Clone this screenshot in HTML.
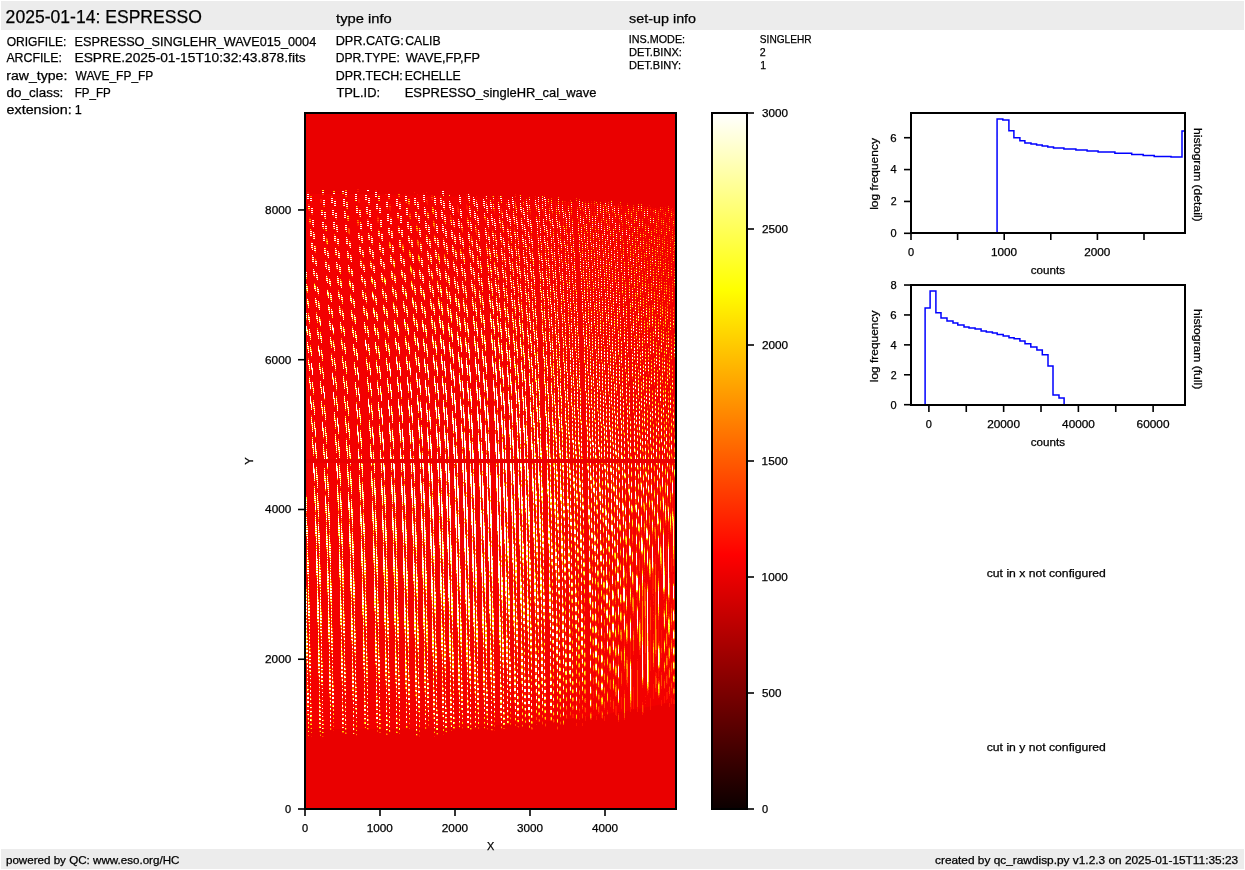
<!DOCTYPE html>
<html><head><meta charset="utf-8"><title>ESPRESSO raw display</title>
<style>html,body{margin:0;padding:0;background:#fff;overflow:hidden;}svg,canvas{display:block;position:absolute;left:0;top:0;will-change:transform;}
#wrap{position:relative;width:1245px;height:870px;}
text{font-family:"Liberation Sans",sans-serif;stroke:#000;stroke-width:0.25px;}</style></head>
<body><div id="wrap"><svg width="1245" height="870" viewBox="0 0 1245 870">
<rect x="0" y="0" width="1245" height="870" fill="#fff"/>
<rect x="1" y="1" width="1243" height="29" fill="#ececec"/>
<rect x="1" y="849" width="1243" height="20" fill="#ececec"/>
<rect x="305" y="113" width="371" height="696" fill="#ea0000"/>
<polygon points="305.0,194.0 311.0,194.0 317.0,194.0 323.0,194.0 329.0,194.1 335.0,194.1 341.0,194.2 347.0,194.2 353.0,194.3 359.0,194.3 365.0,194.4 371.0,194.5 377.0,194.6 383.0,194.7 389.0,194.8 395.0,194.9 401.0,195.1 407.0,195.2 413.0,195.4 419.0,195.5 425.0,195.7 431.0,195.8 437.0,196.0 443.0,196.2 449.0,196.4 455.0,196.6 461.0,196.8 467.0,197.1 473.0,197.3 479.0,197.5 485.0,197.8 491.0,198.0 497.0,198.3 503.0,198.6 509.0,198.8 515.0,199.1 521.0,199.4 527.0,199.7 533.0,200.0 539.0,200.4 545.0,200.7 551.0,201.0 557.0,201.4 563.0,201.7 569.0,202.1 575.0,202.5 581.0,202.9 587.0,203.2 593.0,203.6 599.0,204.0 605.0,204.5 611.0,204.9 617.0,205.3 623.0,205.8 629.0,206.2 635.0,206.7 641.0,207.1 647.0,207.6 653.0,208.1 659.0,208.6 665.0,209.1 671.0,209.6 676.0,210.0 676.0,701.0 671.0,702.1 665.0,703.4 659.0,704.7 653.0,705.9 647.0,707.1 641.0,708.2 635.0,709.3 629.0,710.4 623.0,711.4 617.0,712.3 611.0,713.3 605.0,714.2 599.0,715.1 593.0,715.9 587.0,716.7 581.0,717.5 575.0,718.2 569.0,718.9 563.0,719.6 557.0,720.2 551.0,720.8 545.0,721.4 539.0,722.0 533.0,722.5 527.0,723.0 521.0,723.5 515.0,723.9 509.0,724.3 503.0,724.7 497.0,725.1 491.0,725.5 485.0,725.8 479.0,726.1 473.0,726.4 467.0,726.7 461.0,726.9 455.0,727.1 449.0,727.4 443.0,727.6 437.0,727.7 431.0,727.9 425.0,728.1 419.0,728.2 413.0,728.3 407.0,728.4 401.0,728.5 395.0,728.6 389.0,728.7 383.0,728.7 377.0,728.8 371.0,728.8 365.0,728.9 359.0,728.9 353.0,728.9 347.0,729.0 341.0,729.0 335.0,729.0 329.0,729.0 323.0,729.0 317.0,729.0 311.0,729.0 305.0,729.0" fill="#f30000"/><rect x="305" y="459" width="371" height="4" fill="#ea0000"/>
<path d="M305.5 309v2m0 5v1m0 153v1m0 11v1m0 5v1m0 14v1m0 46v1m0 61v3M306.5 325v1m0 169v2m0 14v1m0 1v2m0 1v1m0 19v3m0 47v1m0 1v1m0 70v2m0 4v1M307.5 192v1m0 105v1m0 6v1m0 22v1m0 6v1m0 188v2m0 20v1m0 28v1m0 3v1m0 54v2m0 2v2m0 67v3m0 1v3m0 1v1m0 3v1M308.5 192v1m0 14v1m0 1v2m0 154v2m0 191v2m0 59v2m0 1v1m0 2v1m0 64v3m0 2v2m0 2v2m0 2v2m0 2v3m0 1v3m0 2v2m0 2v2m0 3v1m0 4v1M309.5 204v1m0 2v1m0 1v1m0 7v2m0 1v1m0 1v2m0 92v1m0 46v1m0 20v1m0 211v3m0 1v2m0 2v1m0 24v1m0 38v2m0 2v1m0 2v1M310.5 218v1m0 1v1m0 1v1m0 7v1m0 3v1m0 117v1m0 37v1m0 4v1m0 248v2m0 3v2m0 2v2m0 2v2m0 1v2m0 2v2m0 2v2m0 2v2m0 2v2m0 2v2m0 2v2m0 2v2m0 2v2m0 3v1m0 2v2m0 2v3m0 2v2m0 2v2m0 2v2m0 2v1M311.5 199v1m0 2v1m0 6v1m0 1v1m0 2v1m0 14v2m0 10v2m0 113v2m0 12v1m0 327v1m0 6v2m0 1v3m0 2v2m0 2v2m0 2v2m0 4v1m0 8v1M312.5 209v1m0 1v1m0 1v1m0 7v1m0 1v1m0 1v2m0 153v2m0 39v2m0 25v2M313.5 221v1m0 1v1m0 1v1m0 7v1m0 3v1m0 24v1m0 180v2m0 29v1M314.5 232v2m0 11v1m0 30v2m0 11v1m0 177v1m0 13v1M315.5 258v1m0 5v1m0 26v1m0 11v1m0 122v2m0 9v1m0 57v1m0 16v1m0 1v1m0 21v2M316.5 260v1m0 11v1m0 5v1m0 40v1m0 145v2m0 13v2m0 41v1m0 52v1M317.5 273v2m0 5v1m0 5v1m0 5v2m0 180v1m0 13v2m0 1v2m0 18v1m0 45v1m0 64v2m0 3v1M318.5 294v1m0 49v1m0 7v1m0 146v1m0 19v1m0 1v1m0 22v1m0 49v1m0 1v1m0 1v1m0 74v2m0 1v1m0 2v1M319.5 316v1m0 6v1m0 32v1m0 5v1m0 166v1m0 2v1m0 52v1m0 1v1m0 1v1m0 53v2m0 1v1m0 1v2m0 66v2m0 2v2m0 2v2m0 4v1M320.5 199v4m0 123v1m0 47v2m0 12v1m0 175v1m0 1v1m0 1v1m0 64v1m0 4v1m0 63v1m0 1v2m0 2v2m0 2v2m0 2v2m0 2v2m0 2v2M321.5 199v4m0 8v1m0 1v1m0 134v2m0 44v1m0 5v1m0 205v2m0 3v1m0 70v2m0 1v1M322.5 211v1m0 1v1m0 9v1m0 1v1m0 2v1m0 123v2m0 20v1m0 56v1m0 223v1m0 3v1m0 1v1m0 1v2m0 2v2m0 2v1m0 2v2m0 2v2m0 2v2m0 2v2m0 1v3m0 1v3m0 1v3m0 1v3m0 1v3m0 1v3m0 1v3m0 1v3m0 1v3m0 1v3m0 3v1M323.5 201v1m0 1v1m0 19v1m0 1v1m0 1v1m0 7v1m0 3v1m0 139v1m0 5v1m0 7v1m0 33v1m0 15v1m0 11v2m0 255v1m0 6v1m0 3v1m0 3v1m0 8v1M324.5 201v1m0 1v1m0 9v1m0 1v1m0 1v1m0 16v2m0 11v1m0 5v2m0 136v1m0 59v1m0 12v1M325.5 213v1m0 1v1m0 1v1m0 7v1m0 1v1m0 1v1m0 19v1m0 11v1m0 158v2m0 3v2m0 9v2m0 36v1m0 16v1m0 2v1m0 18v2M326.5 225v1m0 1v1m0 1v1m0 7v1m0 36v2m0 226v2m0 18v1m0 1v1m0 24v3M327.5 238v1m0 5v1m0 11v2m0 19v1m0 11v1m0 165v2m0 12v2m0 2v1m0 16v1m0 44v1m0 56v1M328.5 252v1m0 10v2m0 5v1m0 20v1m0 6v1m0 5v1m0 6v1m0 185v1m0 2v2m0 18v1m0 47v3m0 1v1m0 66v1m0 4v1M329.5 266v1m0 11v1m0 5v2m0 33v2m0 5v2m0 181v2m0 18v1m0 1v1m0 26v2m0 52v1m0 1v1m0 1v2m0 72v2m0 2v1m0 2v1m0 2v1M330.5 279v2m0 5v2m0 42v1m0 5v1m0 206v1m0 58v1m0 1v1m0 1v1m0 55v1m0 3v1m0 1v1m0 1v2m0 2v2m0 14v2m0 2v2m0 2v2m0 2v2m0 2v2m0 2v2m0 2v2m0 2v2m0 2v2m0 2v1M331.5 199v1m0 1v1m0 105v2m0 5v1m0 24v2m0 20v1m0 219v2m0 67v2m0 3v2m0 67v2m0 2v2M332.5 196v1m0 2v1m0 1v1m0 6v1m0 2v1m0 1v1m0 109v1m0 33v2m0 12v1m0 253v2m0 3v1m0 2v2m0 22v2m0 2v1m0 2v2m0 29v2m0 2v2m0 2v2m0 4v2M333.5 211v1m0 1v1m0 1v1m0 7v1m0 1v1m0 1v1m0 119v1m0 37v1m0 5v1m0 7v2m0 277v1m0 5v1m0 2v2m0 2v2m0 2v2m0 2v2m0 2v2m0 2v2m0 12v1m0 3v1m0 4v1M334.5 199v1m0 2v1m0 1v1m0 18v1m0 1v1m0 1v1m0 7v1m0 115v2m0 12v1m0 31v1m0 23v2M335.5 199v1m0 2v1m0 1v1m0 9v1m0 1v1m0 24v1m0 11v1m0 191v2M336.5 214v1m0 1v1m0 1v1m0 7v1m0 3v1m0 17v2m0 5v2m0 184v1m0 30v1M337.5 226v1m0 1v1m0 1v1m0 6v2m0 23v2m0 5v2m0 140v1m0 4v1m0 10v1m0 36v2m0 14v1m0 2v1M338.5 244v1m0 178v1m0 10v1m0 56v2m0 18v1m0 1v1m0 22v2M339.5 258v1m0 34v1m0 5v2m0 145v1m0 11v1m0 5v1m0 13v2m0 41v1m0 2v1m0 53v2M340.5 315v2m0 155v1m0 13v1m0 22v2m0 47v1m0 66v2M341.5 294v1m0 5v2m0 22v2m0 19v2m0 152v1m0 18v1m0 1v1m0 23v1m0 52v2m0 3v1m0 74v2m0 5v1M342.5 316v1m0 46v2m0 165v1m0 1v1m0 54v2m0 3v1m0 55v4m0 1v2m0 31v2m0 2v2m0 2v2m0 16v1m0 3v2m0 2v2m0 2v3m0 1v1M343.5 200v1m0 1v1m0 122v1m0 6v2m0 26v2m0 12v2m0 190v2m0 2v1m0 63v1m0 1v2m0 1v1m0 65v2m0 6v1m0 1v3m0 2v2m0 2v3M344.5 200v1m0 1v1m0 1v1m0 7v1m0 1v1m0 1v1m0 119v1m0 57v2m0 7v2m0 207v2m0 2v1m0 31v1m0 34v2m0 2v2M345.5 212v1m0 1v1m0 1v1m0 6v1m0 2v1m0 127v1m0 13v1m0 32v1m0 259v1m0 2v1m0 1v2m0 2v2m0 2v2m0 2v2m0 2v3m0 2v2m0 2v2m0 2v2m0 2v3m0 2v2m0 2v2m0 2v3m0 2v2m0 2v3m0 1v2M346.5 203v1m0 1v1m0 1v1m0 18v1m0 3v1m0 7v1m0 140v1m0 53v2m0 4v1m0 280v1m0 8v1m0 2v1M347.5 203v1m0 1v1m0 1v1m0 6v2m0 1v1m0 1v1m0 17v1m0 6v2m0 153v2m0 62v1M348.5 215v1m0 1v1m0 1v1m0 13v1m0 17v2m0 5v2m0 146v1m0 63v2m0 15v2m0 1v2m0 18v2M349.5 228v1m0 5v1m0 11v2m0 179v2m0 15v1m0 76v1m0 25v1M350.5 241v2m0 11v1m0 5v2m0 26v1m0 12v1m0 149v2m0 16v2m0 16v1m0 44v1m0 58v2M351.5 256v1m0 17v1m0 21v1m0 6v2m0 172v2m0 15v1m0 2v2m0 18v1m0 1v2m0 46v1m0 2v1m0 70v2M352.5 269v2m0 5v2m0 34v2m0 19v2m0 173v1m0 19v1m0 2v1m0 23v1m0 3v1m0 52v1m0 3v2m0 73v3m0 2v1M353.5 298v1m0 38v1m0 13v1m0 187v1m0 61v2m0 1v1m0 1v1m0 58v2m0 4v2m0 2v2m0 20v1m0 2v2m0 2v3m0 1v3m0 2v2m0 2v2m0 2v3m0 2v2m0 2v1m0 1v1M354.5 313v2m0 41v1m0 13v1m0 207v1m0 1v1m0 69v1m0 2v2m0 69v1m0 3v1M355.5 324v1m0 42v1m0 7v1m0 14v1m0 235v4m0 1v2m0 28v1m0 2v2m0 2v2m0 28v1m0 2v3m0 1v3m0 4v2M356.5 207v1m0 1v1m0 1v1m0 122v1m0 13v1m0 63v1m0 266v1m0 2v1m0 2v2m0 1v3m0 2v2m0 2v2m0 2v3m0 1v3m0 2v2m0 2v3m0 1v1m0 10v1m0 5v1M357.5 189v1m0 1v1m0 17v1m0 1v1m0 9v1m0 1v3m0 182v1m0 27v1M358.5 189v1m0 1v1m0 7v4m0 18v1m0 1v1m0 1v1m0 8v1m0 3v2m0 146v1m0 8v1m0 51v2M359.5 199v4m0 8v1m0 1v1m0 20v1m0 3v1m0 7v1m0 145v1m0 8v2m0 14v2m0 51v2m0 1v2m0 17v2M360.5 211v1m0 1v1m0 1v1m0 7v1m0 1v1m0 1v1m0 32v1m0 5v1m0 174v1m0 60v1m0 1v1m0 21v2M361.5 222v1m0 2v1m0 1v1m0 1v2m0 10v1m0 20v1m0 18v1m0 154v2m0 11v2m0 19v1m0 41v2m0 52v1m0 1v1m0 1v1M362.5 237v1m0 17v2m0 19v1m0 6v1m0 193v2m0 1v2m0 17v1m0 47v2m0 66v3M363.5 251v1m0 5v1m0 5v1m0 41v1m0 203v1m0 1v1m0 22v1m0 2v1m0 51v2m0 74v2m0 4v2M364.5 278v1m0 5v1m0 30v1m0 205v2m0 23v1m0 31v3m0 56v2m0 1v1m0 2v1m0 37v2m0 28v2m0 2v3m0 2v2m0 5v1M365.5 201v1m0 77v2m0 5v1m0 37v2m0 12v1m0 218v1m0 1v1m0 66v2m0 68v1m0 3v1m0 1v3m0 2v2m0 2v2m0 2v3m0 2v2m0 2v1m0 1v1M366.5 198v1m0 2v1m0 6v1m0 1v1m0 1v1m0 82v2m0 19v1m0 34v1m0 251v1m0 74v3m0 4v1M367.5 208v1m0 1v1m0 1v1m0 7v1m0 1v1m0 1v1m0 87v1m0 20v1m0 28v1m0 7v2m0 284v1m0 2v2m0 2v1m0 14v1m0 4v2m0 2v2m0 2v2m0 2v3m0 1v3m0 2v2m0 2v2m0 2v3m0 2v2m0 2v2m0 6v1M368.5 201v1m0 17v1m0 2v1m0 1v1m0 1v2m0 6v1m0 3v1m0 98v1m0 13v1m0 45v1m0 9v1m0 303v1m0 4v1m0 6v1m0 5v1M369.5 199v1m0 1v1m0 9v1m0 1v1m0 1v1m0 17v2m0 17v1m0 103v1m0 74v1M370.5 211v1m0 1v1m0 1v1m0 6v1m0 2v1m0 4v1m0 16v2m0 5v1m0 112v1m0 8v1m0 13v2m0 34v2m0 29v2M371.5 225v1m0 1v1m0 1v1m0 7v1m0 37v1m0 6v1m0 105v1m0 61v2m0 14v1m0 2v2m0 18v1M372.5 243v1m0 33v1m0 6v1m0 13v1m0 110v1m0 10v1m0 4v1m0 70v1m0 3v1m0 22v1M373.5 265v1m0 5v1m0 21v1m0 20v1m0 130v2m0 62v1m0 23v1m0 29v2M374.5 317v1m0 13v1m0 141v2m0 1v2m0 17v1m0 47v1m0 1v1m0 65v3M375.5 190v1m0 103v2m0 31v1m0 7v1m0 5v1m0 7v1m0 137v1m0 17v1m0 3v1m0 21v1m0 52v3m0 74v2m0 2v1m0 1v1M376.5 190v1m0 14v1m0 1v1m0 2v1m0 100v1m0 42v1m0 162v2m0 24v1m0 28v1m0 3v1m0 57v1m0 3v2m0 37v2m0 31v3m0 2v2m0 2v1m0 1v1m0 4v1M377.5 205v1m0 1v1m0 2v1m0 5v2m0 1v1m0 1v2m0 98v2m0 12v2m0 28v1m0 8v1m0 179v1m0 1v1m0 65v2m0 1v1m0 66v1m0 4v3m0 2v2m0 2v2m0 2v3m0 2v2m0 2v2m0 2v1m0 1v1M378.5 194v1m0 22v1m0 1v1m0 1v2m0 6v2m0 108v2m0 54v2m0 4v1m0 9v2m0 182v1m0 1v1m0 1v2m0 1v1m0 71v2m0 5v1M379.5 194v1m0 14v1m0 1v1m0 24v1m0 7v1m0 120v1m0 7v1m0 275v2m0 1v1m0 1v2m0 2v2m0 14v2m0 2v2m0 2v2m0 2v2m0 2v3m0 1v3m0 2v2m0 2v2m0 2v3m0 2v2m0 2v2m0 2v3m0 2v1M380.5 206v1m0 2v1m0 1v1m0 2v1m0 6v1m0 1v1m0 1v1m0 24v1m0 7v1m0 5v1m0 114v1m0 68v2m0 256v1m0 4v1m0 6v1m0 5v1M381.5 221v1m0 1v1m0 1v1m0 6v2m0 5v2m0 31v1m0 128v1m0 5v1m0 10v1m0 37v2m0 15v2m0 2v1m0 17v1M382.5 235v1m0 10v2m0 5v2m0 19v1m0 13v1m0 5v2m0 129v1m0 4v1m0 75v1m0 1v1m0 25v1M383.5 249v1m0 39v2m0 12v2m0 132v1m0 17v1m0 16v1m0 44v1m0 1v1m0 55v3M384.5 262v2m0 5v2m0 5v1m0 6v1m0 30v1m0 5v1m0 142v2m0 18v2m0 19v1m0 49v3m0 68v2M385.5 194v1m0 83v1m0 12v2m0 200v2m0 20v1m0 1v1m0 23v1m0 1v2m0 56v1m0 76v1m0 2v2M386.5 194v1m0 5v1m0 2v1m0 1v1m0 2v1m0 99v1m0 33v1m0 14v1m0 7v2m0 160v1m0 61v3m0 58v2m0 1v1m0 2v2m0 32v2m0 2v2m0 3v2m0 2v1m0 9v2m0 2v2m0 2v3m0 2v3M387.5 200v1m0 2v1m0 1v1m0 9v1m0 1v1m0 1v1m0 98v1m0 52v1m0 195v2m0 69v2m0 70v2m0 9v1m0 1v1m0 4v1m0 1v1m0 2v1M388.5 215v1m0 1v1m0 1v1m0 6v1m0 6v2m0 164v1m0 9v1m0 201v1m0 4v1m0 74v2m0 2v2m0 2v1M389.5 204v2m0 1v3m0 19v1m0 11v1m0 105v1m0 8v1m0 5v1m0 8v1m0 45v1m0 16v2m0 231v1m0 2v2m0 1v3m0 2v2m0 2v2m0 2v3m0 2v2m0 2v3m0 2v2m0 2v3m0 2v3m0 1v2m0 3v3m0 2v2m0 2v1M390.5 204v1m0 2v4m0 7v1m0 1v1m0 1v1m0 19v1m0 5v2m0 117v1m0 9v1m0 5v1m0 58v2m0 19v1m0 266v2M391.5 217v2m0 1v1m0 1v1m0 1v2m0 10v1m0 33v1m0 118v1m0 14v2m0 9v2m0 77v2M392.5 232v1m0 5v2m0 31v2m0 13v1m0 6v1m0 129v1m0 17v2m0 40v2m0 19v1m0 1v1m0 24v1M393.5 245v2m0 5v1m0 13v1m0 20v2m0 20v1m0 139v2m0 20v1m0 44v2m0 57v3M394.5 268v1m0 12v1m0 22v1m0 13v2m0 160v3m0 21v1m0 51v1m0 68v2m0 1v1M395.5 283v2m0 12v1m0 38v2m0 153v2m0 20v1m0 1v1m0 25v1m0 1v1m0 57v1m0 78v2m0 4v2M396.5 200v1m0 1v1m0 1v1m0 136v1m0 8v1m0 14v1m0 159v3m0 58v1m0 1v4m0 58v1m0 4v2m0 2v1m0 33v2m0 2v2m0 3v2m0 2v2m0 3v2m0 2v2m0 3v2m0 2v3M397.5 202v1m0 1v1m0 6v1m0 2v1m0 1v1m0 92v1m0 7v1m0 52v1m0 5v1m0 190v1m0 70v1m0 2v1m0 1v1m0 69v2m0 4v1m0 11v1M398.5 214v1m0 1v1m0 1v2m0 7v1m0 3v1m0 109v2m0 7v1m0 41v1m0 5v1m0 10v1m0 201v1m0 3v2m0 35v2m0 36v2m0 2v2m0 2v1m0 3v1M399.5 205v1m0 1v1m0 18v2m0 3v1m0 13v1m0 100v1m0 23v1m0 50v1m0 245v1m0 2v1m0 1v3m0 2v2m0 2v2m0 2v2m0 3v2m0 2v2m0 2v3m0 2v2m0 2v3m0 3v1m0 2v3m0 2v3m0 1v1M400.5 205v1m0 1v1m0 2v1m0 6v1m0 1v1m0 1v1m0 19v1m0 5v2m0 127v1m0 14v2m0 35v2m0 16v1M401.5 217v1m0 1v1m0 1v1m0 6v1m0 2v1m0 3v1m0 32v2m0 118v1m0 26v2m0 55v2m0 21v1M402.5 231v1m0 38v2m0 6v1m0 132v1m0 11v1m0 61v1m0 20v1m0 26v1M403.5 244v1m0 12v2m0 5v1m0 29v2m0 12v1m0 126v2m0 13v2m0 1v2m0 16v2m0 44v2m0 59v2M404.5 260v1m0 5v2m0 35v2m0 13v1m0 162v3m0 21v2m0 48v3m0 71v2M405.5 194v1m0 7v1m0 79v2m0 12v1m0 219v1m0 27v1m0 56v3m0 81v2m0 5v2M406.5 199v1m0 9v1m0 1v1m0 1v1m0 85v1m0 49v1m0 5v1m0 8v1m0 162v2m0 61v1m0 4v1m0 60v2m0 1v1m0 2v2m0 31v1m0 3v3m0 2v2m0 3v2m0 2v3m0 2v3m0 2v2M407.5 209v1m0 1v1m0 1v1m0 2v1m0 6v1m0 1v1m0 1v1m0 81v1m0 12v2m0 46v1m0 5v1m0 9v1m0 183v1m0 71v2m0 77v2M408.5 200v1m0 1v1m0 1v1m0 18v1m0 1v1m0 1v1m0 7v1m0 5v2m0 83v1m0 8v1m0 46v1m0 235v2m0 76v2m0 2v3m0 5v2M409.5 202v1m0 1v2m0 6v2m0 1v1m0 1v2m0 18v1m0 5v1m0 101v2m0 8v1m0 49v1m0 15v2m0 12v2m0 234v1m0 5v2m0 2v3m0 2v2m0 3v2m0 3v2m0 2v3m0 2v3m0 2v3m0 4v1m0 4v1m0 1v1M410.5 213v1m0 1v1m0 1v1m0 9v1m0 3v1m0 26v1m0 107v1m0 25v1m0 51v1m0 2v2m0 16v1M411.5 227v1m0 3v1m0 6v2m0 5v1m0 28v1m0 5v1m0 107v1m0 85v3m0 21v2M412.5 241v1m0 5v2m0 41v1m0 120v1m0 16v2m0 57v1m0 22v1m0 25v1M413.5 268v2m0 5v1m0 32v1m0 13v1m0 128v2m0 1v2m0 18v1m0 44v1m0 62v1m0 1v1m0 1v1M414.5 192v1m0 8v1m0 68v2m0 13v1m0 40v1m0 136v2m0 18v3m0 22v3m0 50v2m0 71v2M415.5 201v1m0 1v1m0 6v1m0 2v1m0 1v1m0 85v1m0 43v1m0 5v1m0 143v1m0 52v1m0 56v1m0 2v1m0 1v2m0 80v2m0 2v1m0 2v2M416.5 213v1m0 1v1m0 1v1m0 6v2m0 1v1m0 1v1m0 88v1m0 47v1m0 163v2m0 64v4m0 62v2m0 2v1m0 1v3m0 31v2m0 2v3m0 2v3m0 2v3m0 2v3m0 2v3M417.5 194v1m0 8v1m0 1v1m0 1v1m0 19v1m0 3v2m0 6v1m0 5v1m0 85v1m0 45v2m0 9v1m0 4v2m0 10v1m0 165v3m0 74v2m0 5v1m0 73v2m0 4v1M418.5 203v1m0 1v1m0 1v1m0 7v1m0 1v1m0 1v1m0 2v1m0 17v1m0 6v1m0 93v1m0 9v1m0 269v2m0 1v1m0 2v1m0 37v3m0 35v2m0 3v3m0 1v1m0 3v1M419.5 217v1m0 1v1m0 1v1m0 7v1m0 6v1m0 31v2m0 5v1m0 86v1m0 14v1m0 10v1m0 51v1m0 2v1m0 239v1m0 1v1m0 2v3m0 2v3m0 2v3m0 2v2m0 3v2m0 3v2m0 2v3m0 2v3m0 10v2M420.5 231v1m0 11v1m0 5v1m0 21v1m0 13v1m0 98v1m0 27v1m0 38v1m0 17v1m0 24v2M421.5 245v1m0 5v1m0 43v2m0 12v1m0 97v1m0 31v1m0 42v1m0 22v1m0 28v1M422.5 272v2m0 30v2m0 7v1m0 4v2m0 149v1m0 44v1m0 63v3M423.5 193v1m0 89v1m0 5v1m0 7v1m0 25v1m0 13v1m0 8v2m0 131v3m0 22v2m0 48v1m0 1v1m0 72v3M424.5 210v1m0 1v1m0 87v1m0 5v1m0 7v2m0 41v1m0 9v1m0 122v1m0 110v4m0 79v2m0 2v1m0 1v1M425.5 210v1m0 1v1m0 1v1m0 7v1m0 1v1m0 1v1m0 82v2m0 7v1m0 5v1m0 7v2m0 29v1m0 9v1m0 4v2m0 145v2m0 63v1m0 4v1m0 60v1m0 5v2m0 33v2m0 3v2m0 2v3m0 2v2m0 2v3m0 2v2M426.5 192v1m0 5v1m0 3v1m0 21v1m0 1v1m0 1v1m0 7v1m0 106v1m0 41v1m0 10v2m0 169v1m0 1v1m0 73v2m0 1v1m0 2v1m0 73v1m0 3v2M427.5 200v5m0 6v2m0 1v1m0 1v1m0 21v1m0 10v2m0 5v1m0 100v2m0 50v1m0 12v2m0 18v2m0 173v1m0 1v2m0 38v2m0 37v3m0 2v1m0 1v1m0 1v1m0 2v2M428.5 214v1m0 1v1m0 1v1m0 7v1m0 1v1m0 1v1m0 20v2m0 19v2m0 95v1m0 81v2m0 221v2m0 2v1m0 1v3m0 2v2m0 2v3m0 2v2m0 2v3m0 2v2m0 3v2m0 2v3M429.5 228v1m0 1v1m0 1v1m0 7v1m0 26v2m0 19v1m0 103v1m0 10v2m0 3v1m0 13v1m0 60v1M430.5 242v1m0 6v1m0 3v2m0 42v2m0 117v1m0 17v1m0 60v1m0 53v2M431.5 195v1m0 3v1m0 69v2m0 6v1m0 24v1m0 7v1m0 130v2m0 87v3m0 67v1m0 1v2M432.5 195v1m0 12v1m0 1v1m0 1v2m0 66v1m0 12v2m0 198v1m0 25v1m0 53v1m0 1v1m0 77v1m0 2v1m0 2v1M433.5 207v2m0 1v1m0 1v1m0 7v1m0 1v1m0 3v1m0 70v1m0 4v2m0 44v2m0 4v1m0 149v1m0 58v3m0 61v2m0 81v3m0 2v2m0 5v2M434.5 201v1m0 2v1m0 16v2m0 5v1m0 5v2m0 71v1m0 7v1m0 4v1m0 38v1m0 26v1m0 155v1m0 1v1m0 68v2m0 1v1m0 68v1m0 3v1m0 2v2m0 2v3m0 7v2m0 2v2m0 3v2m0 2v3m0 2v3m0 9v1M435.5 201v1m0 1v1m0 7v1m0 1v1m0 1v1m0 20v2m0 5v1m0 4v2m0 5v1m0 78v1m0 4v2m0 8v1m0 32v1m0 15v2m0 185v1m0 1v1m0 2v1m0 76v1m0 3v2M436.5 213v1m0 1v1m0 1v1m0 7v1m0 3v1m0 41v1m0 98v1m0 48v2m0 18v2m0 199v1m0 4v2m0 37v2m0 2v3m0 2v2m0 12v2m0 3v2m0 2v3m0 2v2m0 2v2m0 7v1M437.5 227v1m0 3v1m0 7v1m0 5v2m0 19v2m0 12v1m0 95v2m0 4v1m0 10v1m0 54v4m0 18v2m0 233v2m0 2v1m0 1v3m0 2v3m0 2v2m0 2v2M438.5 241v1m0 5v2m0 4v1m0 6v2m0 21v2m0 104v1m0 11v1m0 3v2m0 12v1m0 60v1m0 26v1M439.5 276v2m0 31v2m0 3v2m0 8v1m0 88v1m0 17v1m0 15v2m0 43v1m0 55v1M440.5 196v1m0 4v1m0 69v2m0 20v1m0 34v2m0 3v2m0 121v1m0 23v2m0 46v1m0 68v1m0 1v2M441.5 201v1m0 1v1m0 7v1m0 1v1m0 1v1m0 148v1m0 102v2m0 48v2m0 51v3m0 77v2m0 5v1M442.5 213v1m0 1v1m0 1v1m0 7v1m0 1v1m0 1v1m0 85v1m0 4v1m0 38v2m0 140v1m0 57v2m0 62v1m0 1v2m0 41v1m0 36v1m0 2v2m0 3v1m0 6v1M443.5 202v1m0 1v1m0 1v1m0 20v1m0 1v1m0 1v1m0 2v1m0 4v1m0 5v2m0 135v1m0 16v1m0 139v2m0 69v4m0 69v1m0 3v1m0 2v2m0 2v3m0 7v2m0 2v2m0 3v2m0 2v3m0 2v2m0 2v1m0 7v1M444.5 204v1m0 1v1m0 1v1m0 4v1m0 2v1m0 1v1m0 1v1m0 19v2m0 102v2m0 14v1m0 59v2m0 2v1m0 16v1m0 145v2m0 76v1m0 2v2m0 2v1M445.5 218v1m0 1v1m0 1v1m0 7v1m0 3v1m0 29v2m0 4v1m0 161v1m0 40v1m0 169v2m0 34v1m0 2v2m0 2v3m0 2v2m0 3v1m0 8v2m0 2v3m0 2v2m0 3v2m0 2v2M446.5 232v1m0 3v1m0 7v1m0 5v2m0 28v1m0 5v1m0 119v1m0 13v2m0 87v1m0 1v1m0 191v2m0 6v1m0 2v3m0 2v2m0 2v1m0 1v1m0 4v1m0 1v1M447.5 246v1m0 5v1m0 37v1m0 138v1m0 1v2m0 16v2m0 101v1M448.5 262v1m0 5v1m0 5v1m0 41v1m0 4v2m0 8v1m0 152v1m0 117v3M449.5 204v1m0 1v1m0 78v1m0 4v2m0 7v1m0 221v1m0 1v1m0 49v1m0 83v3m0 1v1M450.5 204v1m0 1v1m0 1v1m0 7v1m0 1v2m0 1v1m0 73v1m0 207v2m0 59v4m0 63v2m0 77v1m0 2v3m0 2v2m0 2v1m0 2v2M451.5 217v3m0 1v1m0 1v1m0 7v1m0 3v1m0 101v1m0 30v1m0 11v1m0 4v1m0 156v3m0 71v2m0 1v1m0 68v1m0 6v2m0 2v2m0 3v2m0 2v3m0 2v3m0 2v2m0 3v2M452.5 207v1m0 1v1m0 1v1m0 21v1m0 5v1m0 102v1m0 14v2m0 33v1m0 12v2m0 2v2m0 13v2m0 163v4m0 80v2m0 4v2M453.5 206v1m0 2v1m0 1v1m0 1v1m0 4v1m0 2v1m0 1v1m0 1v1m0 22v1m0 5v1m0 12v1m0 85v1m0 10v1m0 52v1m0 17v2m0 17v1m0 189v1m0 2v1m0 2v2m0 35v1m0 3v2m0 2v3m0 2v3m0 2v2m0 3v2m0 3v2m0 2v3m0 2v3M454.5 223v1m0 1v1m0 1v2m0 4v2m0 5v1m0 35v1m0 7v1m0 90v1m0 16v1m0 71v1m0 24v1m0 222v1m0 13v1M455.5 249v1m0 29v2m0 12v1m0 119v2m0 2v1m0 56v2m0 52v3M456.5 259v1m0 4v2m0 6v2m0 32v2m0 3v1m0 113v1m0 16v3m0 21v1m0 43v1m0 63v2M457.5 205v7m0 64v2m0 3v1m0 7v1m0 40v1m0 9v1m0 160v1m0 48v3m0 75v2m0 1v1M458.5 207v2m0 1v1m0 1v2m0 6v1m0 1v1m0 1v1m0 60v1m0 21v1m0 42v2m0 190v1m0 1v1m0 55v1m0 1v2m0 82v2m0 2v1m0 1v1M459.5 222v1m0 1v1m0 1v1m0 7v1m0 3v1m0 2v1m0 143v1m0 135v3m0 67v1m0 1v1m0 63v1m0 2v1m0 1v3m0 36v1m0 2v2m0 3v2m0 2v3m0 2v3m0 2v2m0 2v1M460.5 200v1m0 1v1m0 7v1m0 1v1m0 1v1m0 21v1m0 5v1m0 12v1m0 65v2m0 8v2m0 3v1m0 59v1m0 13v2m0 153v1m0 1v1m0 75v1m0 2v1m0 1v2M461.5 212v1m0 1v1m0 1v1m0 7v1m0 1v1m0 1v1m0 31v1m0 4v1m0 5v2m0 68v1m0 10v1m0 15v1m0 53v1m0 197v2m0 79v2m0 2v3m0 5v1M462.5 226v1m0 1v1m0 3v1m0 6v1m0 49v1m0 73v1m0 28v1m0 37v2m0 17v2m0 22v2m0 201v1m0 5v3m0 2v2m0 3v1m0 8v2m0 2v3m0 2v3m0 2v2m0 2v3m0 6v1M463.5 241v1m0 5v1m0 4v2m0 39v2m0 92v1m0 12v1m0 18v2m0 90v1M464.5 257v1m0 18v1m0 25v1m0 13v2m0 8v1m0 101v1m0 1v1m0 61v1m0 60v1m0 1v1M465.5 281v1m0 54v1m0 10v1m0 90v2m0 43v3m0 45v3m0 70v4M466.5 194v1m0 1v1m0 7v5m0 82v1m0 6v1m0 5v1m0 47v2m0 3v1m0 10v2m0 153v1m0 52v1m0 1v1m0 83v3m0 1v1M467.5 206v5m0 5v2m0 1v1m0 1v1m0 1v2m0 83v1m0 8v2m0 45v1m0 10v2m0 189v1m0 64v2m0 1v1m0 44v1m0 2v3m0 24v1m0 3v3m0 2v3m0 2v1M468.5 221v1m0 1v1m0 1v1m0 4v1m0 2v1m0 3v1m0 89v2m0 8v1m0 4v1m0 58v1m0 141v4m0 73v4m0 72v1m0 5v3m0 3v2m0 3v3m0 2v3m0 2v2M469.5 194v1m0 14v1m0 1v1m0 23v1m0 5v1m0 5v1m0 5v1m0 94v1m0 15v1m0 47v2m0 15v2m0 1v1m0 18v2m0 143v1m0 82v2m0 2v1m0 3v1M470.5 211v1m0 1v1m0 1v1m0 5v1m0 1v1m0 1v1m0 1v1m0 23v1m0 18v2m0 98v2m0 68v1m0 46v2m0 162v1m0 1v3m0 38v3m0 2v3m0 2v3m0 2v3m0 2v3m0 3v2M471.5 225v1m0 1v1m0 1v1m0 12v1m0 31v2m0 3v1m0 7v2m0 106v1m0 13v2m0 59v2m0 54v1m0 1v1m0 189v1m0 5v1m0 4v1M472.5 239v2m0 5v1m0 5v1m0 5v1m0 161v1m0 17v1m0 1v1m0 65v3m0 63v4M473.5 262v2m0 11v2m0 25v1m0 12v1m0 133v1m0 48v3m0 48v1m0 77v4M474.5 204v1m0 4v1m0 2v1m0 1v1m0 1v1m0 62v1m0 4v1m0 7v1m0 41v2m0 10v1m0 133v3m0 55v1m0 58v4m0 84v1m0 3v2m0 5v1M475.5 214v1m0 1v1m0 1v1m0 2v1m0 4v1m0 1v1m0 1v1m0 67v1m0 57v1m0 161v2m0 67v2m0 1v1m0 67v4m0 41v3m0 2v3m0 2v3m0 2v3m0 2v1m0 1v1M476.5 196v1m0 6v1m0 1v1m0 2v1m0 18v1m0 2v1m0 2v1m0 7v1m0 5v1m0 68v1m0 14v1m0 31v1m0 201v1m0 76v3M477.5 202v1m0 2v1m0 1v1m0 1v1m0 5v1m0 1v1m0 1v1m0 1v1m0 23v1m0 6v1m0 4v1m0 68v2m0 13v1m0 10v1m0 48v1m0 2v2m0 15v1m0 194v1m0 2v2m0 40v3m0 36v2m0 3v2m0 2v1m0 2v1M478.5 219v1m0 1v1m0 1v1m0 7v1m0 1v1m0 1v1m0 24v1m0 102v1m0 11v2m0 35v2m0 17v2m0 19v2m0 224v1m0 6v3m0 2v2m0 4v1m0 3v2m0 3v2m0 3v2m0 3v2m0 2v3M479.5 233v1m0 1v1m0 1v1m0 1v1m0 5v1m0 6v2m0 23v1m0 7v2m0 11v2m0 69v2m0 11v2m0 3v1m0 13v1M480.5 250v1m0 5v2m0 151v2m0 1v1m0 17v2m0 39v1m0 56v1m0 1v1M481.5 273v2m0 38v2m0 8v2m0 13v1m0 81v2m0 18v2m0 65v3M482.5 282v1m0 7v1m0 4v1m0 37v2m0 115v1m0 50v1m0 48v3m0 80v1m0 1v1M483.5 202v1m0 1v1m0 96v1m0 11v2m0 8v1m0 31v1m0 126v1m0 58v1m0 1v1m0 58v1m0 2v2m0 83v3m0 2v1m0 1v1m0 1v1M484.5 204v1m0 1v1m0 7v1m0 1v1m0 1v2m0 113v2m0 9v2m0 46v1m0 19v1m0 106v3m0 70v2m0 72v3m0 36v2m0 2v3m0 2v1m0 1v1m0 4v1m0 4v1m0 1v1M485.5 196v1m0 18v2m0 1v1m0 1v3m0 6v1m0 1v1m0 1v1m0 117v1m0 15v2m0 53v1m0 20v1m0 120v1m0 1v1m0 82v2M486.5 205v1m0 1v1m0 23v1m0 1v1m0 3v1m0 5v1m0 6v2m0 109v2m0 11v2m0 2v2m0 51v2m0 20v1m0 23v3m0 139v1m0 2v1m0 45v2m0 31v3m0 2v3m0 2v2m0 5v1M487.5 207v1m0 1v1m0 1v1m0 4v1m0 2v1m0 1v1m0 1v1m0 22v2m0 6v1m0 131v1m0 17v1m0 16v1m0 96v1m0 167v1m0 5v2m0 2v3m0 2v3m0 2v2m0 3v2m0 3v2m0 2v3m0 6v1M488.5 221v1m0 1v1m0 1v1m0 1v1m0 5v1m0 4v1m0 25v1m0 6v1m0 12v2m0 144v2m0 21v1m0 42v1m0 65v3M489.5 236v1m0 5v1m0 5v1m0 41v1m0 11v1m0 137v1m0 48v3m0 46v3m0 73v2m0 2v1M490.5 203v1m0 1v1m0 46v1m0 6v1m0 5v1m0 6v2m0 24v2m0 8v2m0 12v2m0 205v1m0 1v1m0 55v1m0 1v2m0 86v3m0 1v1m0 3v1M491.5 205v1m0 1v1m0 7v1m0 1v1m0 1v1m0 2v1m0 46v1m0 12v1m0 6v1m0 28v1m0 13v1m0 10v2m0 164v1m0 67v4m0 65v2m0 1v1m0 3v1m0 38v2m0 3v2m0 2v3m0 2v3m0 2v3m0 2v3m0 2v3m0 6v1M492.5 216v1m0 2v1m0 1v1m0 1v1m0 5v2m0 1v1m0 1v1m0 1v2m0 49v1m0 12v1m0 49v2m0 200v4m0 78v1m0 2v2m0 80v2m0 9v1M493.5 205v1m0 1v1m0 1v2m0 23v1m0 1v1m0 1v1m0 1v1m0 5v1m0 4v1m0 53v1m0 23v1m0 44v1m0 17v1m0 211v1m0 2v1m0 43v1m0 38v1m0 2v3m0 3v1m0 6v1M494.5 209v1m0 1v3m0 6v1m0 1v1m0 1v1m0 24v1m0 10v2m0 6v1m0 56v1m0 13v1m0 45v1m0 15v1m0 1v2m0 16v2m0 244v2m0 5v2m0 22v1m0 4v2m0 3v2m0 3v2m0 7v1m0 7v1M495.5 221v1m0 2v1m0 1v1m0 1v1m0 5v1m0 1v1m0 2v1m0 2v1m0 23v1m0 7v1m0 4v1m0 6v1m0 58v2m0 14v1m0 50v1m0 17v1M496.5 238v2m0 1v1m0 3v1m0 5v1m0 4v1m0 35v2m0 88v1m0 17v2m0 38v1m0 51v1M497.5 254v1m0 7v2m0 38v1m0 8v1m0 3v1m0 9v2m0 83v1m0 20v2m0 40v1M498.5 196v1m0 1v1m0 6v1m0 1v1m0 2v1m0 73v1m0 37v1m0 9v2m0 1v2m0 83v1m0 19v1m0 70v1m0 71v4M499.5 207v1m0 1v1m0 1v1m0 7v1m0 1v1m0 1v1m0 65v1m0 8v2m0 1v2m0 8v2m0 29v1m0 12v1m0 2v1m0 146v1m0 50v1m0 2v1m0 82v1m0 2v1m0 2v2M500.5 200v1m0 20v1m0 1v1m0 2v1m0 2v1m0 1v1m0 2v1m0 1v1m0 1v1m0 79v1m0 13v1m0 32v2m0 11v2m0 2v1m0 14v1m0 85v3m0 61v1m0 1v1m0 62v1m0 1v3m0 87v1m0 3v2m0 3v2m0 6v1M501.5 208v3m0 1v1m0 22v1m0 2v1m0 1v1m0 2v1m0 5v1m0 5v1m0 72v1m0 10v1m0 14v2m0 35v1m0 133v1m0 74v5m0 74v3m0 2v1m0 2v3m0 2v2m0 14v2m0 3v3m0 2v3m0 2v1m0 4v1M502.5 211v2m0 1v1m0 1v1m0 5v1m0 1v1m0 1v1m0 1v1m0 24v1m0 6v1m0 104v1m0 51v1m0 19v2m0 133v5m0 86v2m0 2v1M503.5 226v1m0 1v1m0 1v1m0 1v1m0 3v2m0 1v1m0 3v1m0 27v1m0 6v1m0 2v2m0 104v1m0 18v1m0 41v1m0 52v1m0 134v3m0 41v1m0 2v3m0 3v2m0 3v2m0 3v2m0 3v3m0 3v2m0 3v2m0 3v3M504.5 243v1m0 10v1m0 6v2m0 26v1m0 20v2m0 104v1m0 127v4m0 155v1m0 11v2m0 4v2M505.5 257v1m0 7v1m0 12v2m0 26v2m0 9v1m0 13v1m0 116v1m0 24v1m0 48v1m0 74v2m0 2v1M506.5 202v1m0 3v1m0 4v1m0 1v1m0 1v1m0 60v1m0 20v1m0 29v1m0 10v1m0 14v1m0 103v2m0 54v3m0 55v1m0 91v2m0 6v1M507.5 215v1m0 1v1m0 1v1m0 4v3m0 1v1m0 1v1m0 2v1m0 59v2m0 8v1m0 13v1m0 31v1m0 11v2m0 14v2m0 113v4m0 65v1m0 1v1m0 68v1m0 2v2m0 44v1m0 3v3m0 2v3m0 3v2m0 4v2m0 3v3m0 3v2m0 3v3m0 2v1M508.5 203v1m0 26v1m0 1v1m0 1v1m0 1v1m0 8v1m0 1v1m0 76v1m0 1v2m0 9v1m0 51v2m0 15v1m0 130v1m0 77v2m0 6v1m0 91v1m0 7v1M509.5 202v1m0 4v1m0 1v1m0 6v1m0 1v1m0 1v1m0 26v1m0 3v1m0 1v1m0 4v1m0 5v2m0 67v2m0 13v2m0 65v3m0 19v1m0 151v1m0 3v1m0 43v2m0 42v3m0 2v2m0 3v1m0 3v1M510.5 220v1m0 1v1m0 1v1m0 2v1m0 2v1m0 1v1m0 2v1m0 2v1m0 22v1m0 7v1m0 4v1m0 7v1m0 73v2m0 11v1m0 16v1m0 39v3m0 19v1m0 25v1m0 177v1m0 6v2m0 4v1m0 26v3m0 3v2m0 3v3m0 2v1m0 2v1m0 7v1M511.5 234v2m0 1v1m0 1v1m0 1v1m0 10v1m0 26v2m0 20v1m0 96v2m0 58v1M512.5 252v1m0 5v1m0 4v1m0 6v1m0 28v1m0 8v2m0 12v1m0 85v1m0 17v1m0 136v5M513.5 204v1m0 1v1m0 2v1m0 4v1m0 1v1m0 1v1m0 57v2m0 3v1m0 6v1m0 55v1m0 140v3m0 138v1m0 2v2M514.5 218v1m0 1v1m0 1v1m0 5v2m0 1v1m0 1v1m0 52v1m0 8v2m0 2v1m0 40v1m0 11v1m0 1v2m0 113v1m0 58v4m0 62v1m0 2v1m0 47v1m0 46v2m0 3v3m0 6v2M515.5 194v1m0 8v1m0 1v1m0 1v1m0 25v1m0 1v1m0 1v1m0 1v1m0 3v1m0 1v1m0 4v2m0 54v1m0 11v1m0 9v1m0 47v2m0 129v1m0 1v1m0 71v2m0 1v1m0 82v4m0 3v2m0 22v2m0 3v3m0 3v3m0 3v3M516.5 207v1m0 1v1m0 1v1m0 5v1m0 1v1m0 1v1m0 1v1m0 24v1m0 8v1m0 2v1m0 6v1m0 57v2m0 9v2m0 13v2m0 51v4m0 17v1m0 130v1m0 85v1m0 3v3m0 1v2M517.5 223v1m0 1v1m0 1v1m0 5v1m0 1v1m0 1v1m0 1v1m0 33v2m0 3v1m0 6v1m0 62v1m0 10v2m0 1v1m0 13v1m0 59v1m0 177v1m0 1v3m0 45v2m0 3v3m0 3v3m0 4v2m0 3v3m0 3v3m0 3v3m0 3v3m0 3v3m0 8v1m0 3v1M518.5 236v2m0 2v1m0 1v1m0 1v1m0 2v2m0 34v1m0 9v1m0 2v1m0 8v2m0 64v2m0 12v1m0 18v1m0 94v1m0 1v1m0 188v3m0 6v3m0 3v3m0 3v3m0 4v2m0 2v1m0 4v1M519.5 195v1m0 57v2m0 6v1m0 2v2m0 36v2m0 8v2m0 1v1m0 10v1m0 70v1m0 16v2m0 20v1m0 44v1m0 1v1m0 62v1m0 2v1M520.5 208v1m0 63v1m0 6v1m0 2v2m0 9v1m0 131v3m0 43v3m0 50v2m0 78v2m0 3v1M521.5 210v1m0 1v1m0 6v1m0 1v1m0 1v1m0 2v1m0 62v2m0 8v2m0 156v1m0 56v1m0 61v1m0 2v2m0 97v3m0 6v3M522.5 225v1m0 1v1m0 1v1m0 3v2m0 1v1m0 1v1m0 1v1m0 81v1m0 45v2m0 13v1m0 17v1m0 93v1m0 67v5m0 76v1m0 1v1m0 1v2m0 3v1m0 37v2m0 4v2m0 4v3m0 9v1m0 5v1m0 2v1M523.5 200v1m0 8v1m0 1v1m0 1v1m0 26v1m0 1v1m0 1v2m0 5v1m0 4v1m0 2v1m0 70v1m0 12v2m0 50v2m0 14v1m0 2v1m0 18v1m0 105v4m0 81v3m0 7v1M524.5 213v1m0 1v1m0 1v1m0 2v1m0 2v2m0 1v1m0 1v1m0 2v1m0 24v1m0 1v1m0 3v1m0 1v1m0 1v2m0 97v2m0 14v2m0 41v1m0 171v1m0 2v3m0 41v2m0 4v3m0 3v3m0 23v1m0 4v3m0 3v3m0 3v3m0 9v1m0 3v3M525.5 227v1m0 2v1m0 1v1m0 1v1m0 3v2m0 1v1m0 1v1m0 1v1m0 27v2m0 6v1m0 2v1m0 93v1m0 14v2m0 16v1m0 101v1m0 157v3m0 2v1m0 3v3m0 3v3m0 3v3m0 4v2m0 4v3m0 3v3m0 3v1M526.5 204v1m0 2v1m0 37v1m0 1v1m0 2v1m0 5v1m0 6v1m0 39v1m0 10v1m0 89v1m0 16v1m0 22v1m0 46v4m0 67v1m0 2v1M527.5 206v1m0 1v1m0 7v1m0 1v1m0 1v1m0 42v1m0 7v1m0 2v1m0 6v2m0 39v1m0 110v2m0 46v1m0 2v1m0 51v5m0 86v1m0 3v1m0 3v2M528.5 220v1m0 1v1m0 1v1m0 2v1m0 2v2m0 1v1m0 1v1m0 2v1m0 42v1m0 6v2m0 10v1m0 32v2m0 10v2m0 119v3m0 57v1m0 2v1m0 63v3m0 1v1m0 52v2m0 4v1m0 41v3m0 3v3m0 3v3m0 6v1m0 1v1M529.5 203v1m0 2v1m0 1v1m0 2v1m0 22v1m0 2v1m0 1v1m0 1v1m0 4v1m0 1v1m0 1v1m0 1v1m0 2v1m0 52v2m0 2v1m0 56v2m0 1v1m0 13v2m0 118v1m0 73v2m0 89v3m0 7v2m0 3v3m0 3v3m0 3v3m0 3v3m0 3v3m0 3v3m0 3v1M530.5 212v3m0 1v1m0 1v1m0 2v1m0 1v1m0 1v1m0 25v2m0 1v1m0 4v1m0 2v1m0 57v1m0 22v1m0 38v2m0 15v1m0 154v5m0 40v1m0 4v1m0 42v1m0 4v3m0 2v1m0 3v1M531.5 225v1m0 1v1m0 1v1m0 1v1m0 2v2m0 2v1m0 1v1m0 1v1m0 27v1m0 9v1m0 9v2m0 61v1m0 2v1m0 12v1m0 40v2m0 16v1m0 21v3m0 166v5m0 4v2m0 40v2m0 4v3m0 3v3m0 3v3m0 3v3m0 3v3m0 3v3m0 3v3m0 14v1M532.5 242v1m0 1v1m0 1v1m0 1v1m0 4v1m0 5v1m0 30v1m0 6v1m0 67v1m0 12v1m0 1v2m0 58v1m0 1v1m0 49v3m0 214v1m0 1v1m0 15v1m0 1v1M533.5 259v1m0 6v2m0 2v1m0 6v1m0 31v1m0 10v2m0 69v1m0 82v4m0 60v3m0 1v1M534.5 277v1m0 6v1m0 3v1m0 7v1m0 44v1m0 2v1m0 10v2m0 64v1m0 17v2m0 76v1m0 2v1m0 82v1m0 2v2M535.5 196v1m0 1v1m0 96v2m0 9v1m0 10v2m0 46v1m0 1v2m0 83v1m0 52v2m0 1v2m0 114v2m0 48v1m0 4v3m0 7v1m0 2v1M536.5 207v1m0 1v1m0 5v2m0 1v1m0 1v1m0 158v1m0 13v1m0 95v1m0 68v1m0 82v3m0 3v1m0 3v3m0 32v3m0 4v3m0 4v3m0 4v1m0 1v1m0 3v1m0 10v1M537.5 219v1m0 2v1m0 1v1m0 1v1m0 5v1m0 1v1m0 2v1m0 98v2m0 26v1m0 40v2m0 40v1m0 87v1m0 37v1m0 45v3m0 3v2m0 2v3M538.5 206v1m0 1v1m0 27v2m0 1v1m0 1v1m0 1v1m0 3v1m0 4v1m0 1v1m0 105v2m0 12v1m0 2v1m0 13v1m0 43v3m0 50v1m0 101v1m0 3v1m0 3v3m0 39v2m0 4v4m0 3v3m0 4v3m0 4v3m0 4v3m0 4v3m0 4v3m0 4v3m0 4v3m0 10v1m0 3v3M539.5 212v1m0 1v1m0 5v1m0 1v1m0 1v2m0 28v1m0 1v1m0 1v1m0 2v1m0 3v1m0 6v1m0 130v1m0 130v4m0 134v1m0 4v1m0 10v3m0 4v3m0 4v3m0 10v1M540.5 227v1m0 1v1m0 1v1m0 2v1m0 2v1m0 1v1m0 1v2m0 29v1m0 6v1m0 3v1m0 8v1m0 122v2m0 17v1m0 22v2m0 138v1m0 2v3M541.5 242v1m0 1v1m0 1v1m0 1v1m0 2v1m0 7v1m0 41v2m0 9v2m0 133v1m0 53v2m0 60v1m0 2v1m0 51v2m0 52v2m0 4v3m0 3v1m0 2v1m0 1v2M542.5 210v1m0 47v1m0 2v1m0 4v1m0 2v1m0 64v1m0 148v1m0 1v1m0 63v1m0 3v1m0 86v1m0 3v3m0 4v2m0 32v2m0 5v2m0 4v3m0 4v3m0 3v1m0 2v1m0 6v1m0 2v1M543.5 208v1m0 3v4m0 4v1m0 1v1m0 1v1m0 54v1m0 6v2m0 1v1m0 8v2m0 31v1m0 11v1m0 183v5m0 36v1m0 45v1m0 4v4m0 1v2M544.5 195v1m0 5v1m0 24v1m0 1v1m0 1v1m0 4v1m0 1v1m0 1v1m0 1v1m0 56v1m0 8v1m0 47v2m0 28v2m0 197v1m0 3v1m0 3v3m0 39v1m0 4v3m0 4v3m0 4v3m0 4v2m0 5v2m0 4v3m0 4v3m0 4v2m0 4v3m0 4v3m0 4v1m0 1v1m0 3v1m0 5v1M545.5 207v1m0 2v1m0 1v1m0 27v1m0 2v1m0 1v1m0 2v1m0 3v1m0 1v1m0 1v1m0 2v1m0 58v1m0 9v2m0 11v1m0 40v1m0 14v1m0 18v1m0 253v3m0 3v1m0 2v1m0 2v1m0 3v4m0 3v3m0 4v3m0 6v1m0 3v1m0 2v1m0 6v1m0 2v1M546.5 213v1m0 2v1m0 1v1m0 1v1m0 3v2m0 1v1m0 1v1m0 28v2m0 1v1m0 1v1m0 1v1m0 4v1m0 6v1m0 61v2m0 10v4m0 75v1m0 20v1m0 1v1M547.5 231v1m0 1v1m0 1v1m0 1v2m0 3v1m0 1v1m0 1v1m0 2v1m0 26v1m0 2v1m0 4v1m0 1v4m0 75v1m0 11v1m0 2v1m0 13v3m0 44v2m0 52v1M548.5 248v1m0 1v1m0 2v1m0 2v1m0 2v1m0 2v1m0 1v1m0 2v1m0 30v1m0 7v1m0 11v1m0 73v1m0 14v1m0 69v1m0 1v1m0 64v3m0 1v2M549.5 206v1m0 8v1m0 1v1m0 1v1m0 46v1m0 1v1m0 2v1m0 1v1m0 10v1m0 32v2m0 9v2m0 1v1m0 89v1m0 43v1m0 1v1m0 54v1m0 2v2m0 86v3m0 8v1M550.5 218v1m0 2v1m0 1v2m0 5v1m0 1v1m0 1v1m0 1v1m0 46v3m0 6v1m0 3v1m0 7v1m0 47v1m0 15v1m0 84v1m0 55v4m0 67v1m0 3v3m0 48v2m0 5v3m0 4v3m0 33v3m0 4v3m0 4v3m0 4v4m0 3v1m0 6v1M551.5 235v1m0 1v1m0 1v1m0 1v1m0 1v1m0 4v1m0 1v1m0 1v1m0 50v2m0 11v1m0 9v1m0 51v1m0 2v1m0 14v1m0 168v2m0 2v2m0 96v3m0 3v1m0 3v4m0 4v3m0 4v3m0 4v3m0 4v4m0 5v2M552.5 213v3m0 1v1m0 2v1m0 1v1m0 1v1m0 29v1m0 2v1m0 1v1m0 2v3m0 1v1m0 4v1m0 54v1m0 23v1m0 41v1m0 17v1m0 17v1m0 117v1m0 33v2m0 4v3m0 5v1m0 35v2m0 5v3m0 4v1m0 5v1M553.5 226v1m0 1v2m0 1v1m0 3v1m0 1v1m0 1v1m0 3v1m0 29v1m0 1v1m0 2v1m0 2v1m0 1v1m0 6v1m0 70v1m0 14v1m0 45v1m0 44v1m0 137v2m0 8v3m0 4v3m0 5v2m0 5v2m0 5v3m0 4v3m0 4v3m0 4v3m0 4v2m0 1v1m0 3v1m0 2v1m0 4v1m0 6v1m0 1v1m0 4v4m0 3v1m0 2v1m0 10v1M554.5 242v1m0 1v1m0 1v1m0 1v1m0 4v1m0 1v1m0 1v1m0 3v1m0 30v1m0 7v1m0 1v1m0 71v1m0 13v1m0 16v1m0 1v1m0 47v1m0 257v2m0 5v2M555.5 201v1m0 1v1m0 1v1m0 54v1m0 1v1m0 1v1m0 2v1m0 3v1m0 6v1m0 33v1m0 21v1m0 67v1m0 16v1m0 21v1m0 51v5m0 72v3m0 3v1M556.5 205v1m0 10v1m0 1v1m0 59v1m0 7v1m0 3v1m0 7v2m0 33v2m0 10v1m0 13v1m0 72v3m0 20v1m0 24v5m0 60v1m0 3v2m0 42v3m0 58v3m0 4v1m0 6v1M557.5 219v1m0 4v1m0 1v1m0 2v1m0 1v1m0 1v1m0 1v1m0 1v1m0 60v1m0 7v1m0 12v1m0 39v1m0 11v2m0 94v4m0 59v1m0 2v2m0 79v1m0 8v3m0 5v2m0 21v1m0 1v1m0 5v2m0 6v2m0 5v3m0 5v3m0 4v1m0 2v1m0 19v1m0 2v1m0 7v1m0 2v1M558.5 211v1m0 24v1m0 2v1m0 1v1m0 1v1m0 4v1m0 1v1m0 1v1m0 1v1m0 64v1m0 9v2m0 1v1m0 67v2m0 17v2m0 91v1m0 32v2m0 4v2m0 35v2m0 5v4m0 2v1M559.5 209v1m0 11v1m0 1v1m0 1v1m0 30v2m0 1v1m0 1v1m0 3v2m0 1v1m0 1v1m0 1v1m0 1v1m0 66v1m0 13v1m0 57v3m0 152v1m0 3v3m0 5v2m0 6v2m0 5v3m0 5v2m0 5v3m0 5v3m0 4v4m0 4v3m0 5v3m0 5v3m0 4v3m0 5v3m0 5v3m0 4v3m0 5v3m0 4v1m0 11v3M560.5 229v1m0 1v1m0 5v2m0 1v1m0 1v1m0 30v1m0 1v1m0 1v1m0 1v1m0 4v1m0 6v1m0 1v1m0 87v2m0 63v1m0 1v1m0 52v2m0 1v2m0 146v4m0 3v1m0 5v2m0 4v4m0 4v2m0 1v1m0 4v3m0 12v1m0 2v1m0 7v1m0 3v1m0 3v1m0 2v1M561.5 244v1m0 1v1m0 1v1m0 1v1m0 1v1m0 2v1m0 1v1m0 1v1m0 32v3m0 1v1m0 1v1m0 2v1m0 11v1m0 1v1m0 79v1m0 16v1m0 71v1m0 2v1m0 67v1M562.5 262v1m0 1v1m0 1v1m0 1v3m0 2v1m0 1v1m0 2v1m0 2v1m0 42v1m0 1v1m0 10v2m0 86v1m0 19v2m0 23v2m0 61v1m0 4v1m0 39v3m0 57v4m0 4v1m0 4v4M563.5 219v1m0 2v4m0 53v2m0 1v1m0 2v1m0 1v1m0 2v1m0 1v1m0 6v1m0 36v2m0 10v1m0 13v2m0 94v1m0 59v1m0 2v2m0 76v2m0 2v1m0 1v2m0 6v2m0 33v1m0 7v3m0 6v3m0 5v4m0 5v1m0 1v1m0 5v4m0 5v4m0 5v3m0 5v1M564.5 201v1m0 31v1m0 2v1m0 1v1m0 1v1m0 1v1m0 58v2m0 6v1m0 2v1m0 10v1m0 38v1m0 11v1m0 2v1m0 12v1m0 1v1m0 107v1m0 2v2m0 28v2m0 38v2m0 5v1m0 1v3m0 1v2M565.5 201v1m0 1v1m0 1v1m0 4v1m0 2v1m0 1v1m0 2v1m0 27v1m0 1v2m0 1v1m0 3v1m0 1v1m0 2v1m0 1v1m0 58v2m0 9v2m0 1v1m0 53v2m0 15v1m0 145v7m0 5v3m0 6v2m0 6v2m0 6v3m0 6v3m0 5v2m0 1v1m0 5v3m0 6v3m0 5v3m0 6v3m0 6v3m0 5v4m0 5v4m0 4v1m0 3v1m0 8v4M566.5 216v1m0 2v1m0 1v1m0 5v1m0 1v2m0 1v1m0 31v1m0 1v2m0 1v1m0 4v1m0 1v1m0 1v1m0 2v1m0 62v1m0 1v1m0 11v1m0 60v1m0 1v1m0 16v1m0 197v2m0 2v1m0 3v1m0 4v4m0 5v4m0 5v3m0 5v4m0 5v1m0 2v1m0 8v1m0 4v1m0 3v1m0 4v1m0 3v1m0 3v1M567.5 236v1m0 1v1m0 1v1m0 4v1m0 1v1m0 1v1m0 33v1m0 1v1m0 2v1m0 1v1m0 2v1m0 1v1m0 4v1m0 1v1m0 67v1m0 1v1m0 11v2m0 15v1m0 1v1m0 106v5M568.5 202v1m0 1v1m0 45v1m0 2v2m0 1v1m0 1v1m0 4v1m0 1v1m0 1v1m0 1v1m0 33v1m0 1v1m0 2v1m0 1v1m0 4v1m0 7v1m0 75v3m0 13v1m0 19v1m0 56v2m0 2v2m0 71v3m0 4v1m0 4v1M569.5 223v1m0 1v1m0 2v1m0 41v1m0 1v1m0 1v1m0 1v2m0 3v1m0 2v1m0 1v1m0 1v1m0 35v1m0 1v1m0 7v1m0 2v1m0 10v3m0 101v2m0 24v1m0 64v3m0 1v2m0 44v3m0 5v3m0 39v1m0 7v2m0 6v2m0 6v3m0 12v1m0 4v3M570.5 202v1m0 25v3m0 1v1m0 1v1m0 3v1m0 1v1m0 1v1m0 1v1m0 1v1m0 44v1m0 1v1m0 2v1m0 1v2m0 1v1m0 6v1m0 51v1m0 2v1m0 11v2m0 88v4m0 57v3m0 2v2m0 88v4m0 9v3m0 5v3m0 5v3m0 6v2m0 6v3m0 5v3m0 5v3m0 5v4m0 4v2m0 1v1m0 4v1m0 3v1m0 3v1M571.5 213v1m0 2v1m0 30v1m0 1v1m0 1v1m0 3v2m0 1v1m0 1v1m0 1v2m0 47v1m0 2v1m0 1v1m0 2v1m0 2v1m0 9v2m0 40v1m0 1v1m0 12v1m0 16v3m0 100v6m0 26v2m0 5v3m0 5v2m0 6v1m0 7v2m0 5v3m0 5v3m0 5v4m0 4v1m0 3v3M572.5 220v1m0 7v1m0 1v1m0 1v1m0 32v1m0 1v1m0 1v1m0 1v1m0 2v1m0 1v1m0 2v1m0 1v1m0 53v1m0 7v2m0 1v1m0 57v1m0 1v1m0 14v2m0 20v1m0 1v1m0 121v4m0 3v1m0 4v3m0 5v3m0 5v3m0 5v4m0 5v3m0 5v3m0 8v1m0 7v1m0 4v4m0 4v4m0 5v3m0 5v3m0 5v2m0 1v1m0 4v1m0 2v1m0 4v1m0 11v1m0 8v4M573.5 233v1m0 2v2m0 1v1m0 5v1m0 1v1m0 2v1m0 31v1m0 3v1m0 1v1m0 2v1m0 3v1m0 7v2m0 52v2m0 11v2m0 1v1m0 12v1m0 49v1m0 1v2m0 48v1m0 177v2m0 5v1m0 2v1m0 8v1m0 7v1m0 7v1m0 3v1m0 3v1m0 4v4M574.5 252v1m0 1v1m0 1v1m0 1v2m0 3v1m0 1v1m0 2v1m0 2v1m0 33v1m0 7v1m0 1v2m0 69v1m0 13v1m0 17v3m0 52v4m0 65v2m0 1v4M575.5 269v1m0 2v1m0 2v1m0 1v1m0 2v1m0 1v1m0 1v1m0 4v1m0 35v1m0 11v1m0 11v1m0 85v2m0 18v1m0 2v1m0 62v1m0 4v2m0 31v3m0 5v3m0 42v2m0 7v3m0 5v1m0 3v1m0 1v3M576.5 291v1m0 2v1m0 1v1m0 2v1m0 1v1m0 49v2m0 10v2m0 83v1m0 22v2m0 27v1m0 4v1m0 77v1m0 4v1m0 4v4m0 6v3m0 6v3m0 6v3m0 6v3m0 6v3m0 6v3m0 5v4m0 5v1m0 2v1m0 5v1m0 1v1m0 6v1m0 1v2m0 6v3m0 6v3m0 5v1m0 8v1m0 3v3M577.5 202v1m0 11v1m0 99v1m0 9v1m0 8v1m0 43v1m0 1v1m0 12v2m0 16v1m0 77v5m0 21v2m0 5v3m0 5v2m0 6v2m0 6v2m0 6v3m0 5v4m0 3v1M578.5 217v1m0 3v1m0 1v1m0 5v1m0 1v2m0 2v1m0 99v1m0 8v1m0 1v2m0 10v2m0 181v2m0 1v1m0 2v1m0 5v3m0 5v4m0 5v3m0 5v4m0 5v1m0 8v1m0 2v1m0 5v4m0 5v4m0 5v4m0 5v4m0 5v4m0 5v4m0 5v1m0 2v1m0 9v1m0 2v2m0 5v2M579.5 236v1m0 1v1m0 1v2m0 3v1m0 1v1m0 2v1m0 2v1m0 107v1m0 9v1m0 2v1m0 12v1m0 1v1m0 51v1m0 50v5m0 123v2m0 5v1m0 3v1m0 3v1m0 8v1m0 5v1m0 2v1m0 8v1m0 5v1m0 2v1m0 8v1m0 22v1m0 4v1m0 2v2m0 5v2M580.5 211v1m0 7v1m0 1v1m0 32v1m0 2v1m0 1v1m0 2v1m0 1v1m0 1v1m0 2v1m0 120v1m0 13v1m0 15v1m0 2v1m0 56v1m0 67v3m0 4v1M581.5 224v2m0 2v1m0 1v1m0 3v1m0 2v1m0 1v1m0 33v2m0 1v1m0 1v2m0 3v1m0 2v1m0 1v2m0 2v1m0 125v3m0 16v1m0 26v1m0 62v2m0 2v3m0 40v3m0 6v2m0 35v1m0 7v3m0 6v3m0 6v3m0 9v2m0 1v3M582.5 240v1m0 2v2m0 1v1m0 6v1m0 1v1m0 1v3m0 33v2m0 1v1m0 2v1m0 1v2m0 1v1m0 7v2m0 139v1m0 2v2m0 22v1m0 29v1m0 2v2m0 82v3m0 4v1m0 4v1m0 1v2m0 6v3m0 6v3m0 6v3m0 6v3m0 6v3m0 6v3m0 6v4m0 5v2m0 1v1m0 5v1m0 8v1m0 3v1m0 4v1m0 3v1m0 4v1m0 4v3M583.5 208v1m0 3v1m0 2v1m0 6v1m0 2v1m0 33v2m0 1v1m0 1v2m0 1v1m0 1v1m0 2v1m0 1v1m0 2v1m0 35v1m0 1v1m0 2v1m0 2v1m0 1v2m0 1v1m0 8v1m0 1v1m0 159v1m0 4v2m0 6v2m0 6v2m0 6v3m0 5v3m0 5v3m0 6v2m0 6v3m0 5v4m0 5v1m0 2v1m0 2v2M584.5 228v3m0 4v1m0 1v1m0 1v1m0 1v1m0 40v1m0 1v1m0 2v1m0 1v1m0 2v1m0 4v1m0 38v1m0 1v1m0 8v1m0 2v1m0 202v1m0 5v3m0 5v4m0 5v4m0 5v4m0 5v1m0 1v2m0 8v1m0 4v1m0 9v2m0 1v1m0 5v4m0 5v2m0 1v1m0 5v1m0 2v1m0 6v1m0 8v1m0 2v1m0 5v1m0 2v1m0 8v1m0 9v1m0 3v1m0 4v5M585.5 201v1m0 44v1m0 1v1m0 1v1m0 2v1m0 1v1m0 1v2m0 2v1m0 38v1m0 1v1m0 2v1m0 2v1m0 10v1m0 42v3m0 12v1m0 13v3m0 250v4m0 4v1m0 4v1m0 3v1m0 4v1m0 3v1m0 8v1m0 8v1m0 5v1m0 12v1m0 4v1m0 3v5M586.5 225v1m0 1v1m0 34v1m0 1v2m0 1v1m0 3v2m0 1v1m0 1v1m0 2v1m0 42v1m0 1v1m0 5v1m0 2v1m0 11v2m0 45v1m0 14v2m0 17v1m0 1v1M587.5 230v1m0 2v4m0 5v1m0 1v2m0 1v1m0 33v1m0 2v1m0 1v1m0 2v1m0 1v1m0 2v1m0 1v1m0 2v1m0 48v1m0 9v1m0 12v1m0 50v1m0 2v1M588.5 201v1m0 7v1m0 38v1m0 2v1m0 1v2m0 1v1m0 3v2m0 1v1m0 1v1m0 36v1m0 1v1m0 2v1m0 1v1m0 5v1m0 8v1m0 49v2m0 9v1m0 3v1m0 134v1M589.5 220v1m0 2v1m0 46v1m0 1v1m0 2v1m0 3v2m0 1v1m0 1v2m0 40v1m0 2v1m0 2v1m0 1v2m0 1v1m0 64v1m0 1v2m0 12v1m0 82v3m0 1v4m0 29v1m0 8v1m0 45v4m0 7v1m0 6v2M590.5 235v1m0 1v2m0 1v1m0 2v1m0 45v2m0 1v1m0 1v2m0 4v1m0 1v1m0 2v1m0 1v3m0 38v1m0 1v1m0 8v1m0 2v1m0 12v3m0 57v1m0 1v1m0 16v1m0 26v3m0 3v2m0 73v2m0 4v5m0 8v3m0 9v4m0 9v3m0 9v4m0 8v1m0 2v2m0 7v2m0 1v2m0 9v4m0 9v4m0 9v4m0 8v5m0 8v1m0 4v1m0 6v1M591.5 201v1m0 3v1m0 1v1m0 1v1m0 2v1m0 1v1m0 31v1m0 1v1m0 4v1m0 1v2m0 1v1m0 51v1m0 2v1m0 2v1m0 1v2m0 1v1m0 8v1m0 45v1m0 12v1m0 3v1m0 81v1m0 5v2m0 16v3m0 7v2m0 18v3m0 7v5m0 2v3m0 127v4m0 7v2m0 4v1m0 5v1m0 6v2m0 4v2m0 4v2M592.5 231v1m0 29v1m0 3v1m0 1v1m0 2v1m0 1v1m0 1v1m0 1v2m0 1v1m0 53v1m0 1v1m0 2v1m0 2v1m0 2v1m0 2v1m0 8v2m0 48v1m0 1v2m0 35v1m0 1v2m0 74v1m0 4v4m0 7v4m0 7v4m0 7v2m0 1v2m0 6v1m0 2v2m0 7v5m0 7v5m0 8v5m0 7v2m0 2v1m0 7v1m0 4v1m0 6v1m0 6v3M593.5 238v1m0 3v2m0 1v1m0 1v1m0 34v1m0 1v1m0 1v1m0 2v1m0 2v1m0 1v1m0 1v1m0 2v1m0 1v1m0 57v2m0 9v1m0 2v1m0 67v1m0 21v1m0 29v1m0 99v3m0 5v1m0 6v1m0 4v1m0 7v1m0 11v1m0 4v1m0 7v1m0 4v1m0 12v1m0 6v1m0 5v1m0 6v1m0 6v7m0 6v6M594.5 207v1m0 1v1m0 4v1m0 36v2m0 1v1m0 4v1m0 1v1m0 1v1m0 1v1m0 38v1m0 2v1m0 1v1m0 2v1m0 2v1m0 4v1m0 2v1m0 1v1m0 64v1m0 10v2m0 15v2m0 60v1m0 4v1m0 26v2m0 38v4m0 4v2M595.5 214v1m0 12v2m0 41v1m0 1v2m0 1v1m0 2v1m0 1v1m0 1v1m0 2v1m0 1v1m0 37v1m0 3v1m0 1v2m0 1v1m0 2v1m0 2v1m0 8v3m0 67v1m0 3v1m0 13v1m0 25v1m0 70v1m0 7v2m0 9v1m0 9v3m0 8v4m0 7v4m0 8v4m0 8v4m0 9v3m0 9v3m0 9v4m0 8v5m0 8v1m0 4v1m0 6v1m0 6v4M596.5 204v1m0 26v1m0 2v1m0 1v1m0 6v1m0 1v1m0 1v2m0 39v1m0 1v1m0 1v1m0 1v2m0 1v1m0 1v2m0 1v1m0 2v1m0 2v1m0 43v1m0 2v1m0 6v1m0 2v1m0 12v1m0 86v2m0 5v2m0 5v3m0 24v3m0 105v1m0 5v1m0 3v2m0 7v5m0 8v4m0 8v5m0 8v5m0 8v3m0 1v1m0 8v1m0 4v1m0 13v4M597.5 218v2m0 29v1m0 2v1m0 1v1m0 2v1m0 3v1m0 2v1m0 1v1m0 46v1m0 1v2m0 1v1m0 2v1m0 2v1m0 7v2m0 45v1m0 2v1m0 9v2m0 105v1m0 5v4m0 6v3m0 6v4m0 6v4m0 6v4m0 7v4m0 7v4m0 7v1m0 1v3m0 5v1m0 6v1M598.5 232v2m0 1v1m0 2v1m0 32v1m0 1v1m0 2v1m0 4v1m0 1v1m0 2v1m0 1v2m0 44v1m0 3v1m0 2v1m0 2v1m0 14v1m0 1v1m0 50v1m0 12v1m0 133v1m0 5v1m0 2v2m0 7v1m0 1v2m0 7v1m0 2v2m0 7v1m0 11v1m0 4v1m0 5v1m0 5v1m0 6v1m0 4v1m0 7v1m0 3v2m0 7v1m0 3v1m0 8v1m0 11v1m0 5v1m0 6v1m0 5v1m0 5v2M599.5 241v2m0 1v1m0 3v1m0 1v2m0 1v1m0 37v1m0 1v1m0 2v1m0 1v2m0 1v1m0 2v1m0 4v1m0 53v1m0 2v1m0 6v1m0 2v1m0 66v4m0 53v1m0 168v5m0 7v7m0 5v2m0 4v2m0 5v7M600.5 256v1m0 1v1m0 1v1m0 1v1m0 1v1m0 2v1m0 1v1m0 2v1m0 1v1m0 36v1m0 2v2m0 1v1m0 2v1m0 13v1m0 1v1m0 57v1m0 10v2m0 15v2m0 1v1m0 60v1m0 33v3m0 39v5m0 4v2M601.5 214v1m0 64v1m0 1v2m0 1v1m0 2v1m0 1v1m0 1v2m0 1v1m0 1v1m0 40v2m0 2v1m0 2v1m0 2v1m0 2v1m0 9v1m0 1v1m0 60v1m0 2v2m0 3v1m0 4v2m0 3v2m0 21v5m0 68v3m0 3v2m0 6v4m0 7v4m0 8v3m0 8v5m0 7v1m0 1v1m0 1v1m0 8v5m0 8v4m0 9v5m0 9v4m0 9v5m0 9v5m0 9v1m0 3v2m0 8v1m0 5v7M602.5 244v1m0 1v1m0 1v1m0 50v1m0 2v1m0 1v2m0 1v1m0 2v1m0 7v1m0 1v1m0 41v2m0 12v1m0 14v2m0 71v2m0 5v2m0 5v3m0 5v3m0 16v2m0 6v4m0 4v1m0 108v6m0 5v1m0 7v1m0 3v2m0 8v5m0 9v1m0 3v1m0 9v1m0 4v1m0 8v1m0 5v1m0 6v1M603.5 249v1m0 1v1m0 1v1m0 1v1m0 1v1m0 1v2m0 1v1m0 1v1m0 2v1m0 52v1m0 3v1m0 2v1m0 2v1m0 1v2m0 8v1m0 1v1m0 49v1m0 11v2m0 94v1m0 4v1m0 5v4m0 6v4m0 6v4m0 6v1m0 2v2m0 6v4m0 7v5m0 7v4m0 8v1m0 3v1m0 6v1m0 6v4M604.5 223v2m0 6v1m0 1v1m0 1v3m0 33v2m0 1v1m0 1v2m0 3v1m0 2v1m0 1v1m0 3v1m0 57v1m0 2v1m0 2v1m0 2v1m0 2v1m0 9v2m0 53v1m0 18v1m0 24v1m0 100v1m0 5v1m0 3v2m0 6v2m0 3v1m0 7v1m0 4v1m0 6v1m0 12v1m0 5v1m0 5v2m0 5v3m0 3v2m0 6v1m0 6v1m0 5v1m0 7v2m0 4v1m0 7v2m0 5v1m0 6v2m0 6v5M605.5 201v1m0 40v1m0 1v1m0 4v1m0 1v1m0 1v1m0 3v1m0 32v1m0 1v1m0 1v1m0 1v2m0 1v1m0 2v1m0 1v1m0 2v1m0 2v1m0 61v3m0 10v1m0 2v1m0 14v1m0 1v1m0 57v2m0 61v1M606.5 260v1m0 2v1m0 1v1m0 1v2m0 1v1m0 1v1m0 2v1m0 39v1m0 2v1m0 2v1m0 2v1m0 1v1m0 8v3m0 64v1m0 1v1m0 3v1m0 7v2m0 3v1m0 18v1m0 2v1m0 65v1m0 29v2m0 9v4m0 36v3m0 11v5m0 9v1m0 6v6M607.5 233v2m0 1v1m0 1v1m0 40v2m0 1v1m0 1v2m0 4v1m0 1v1m0 2v1m0 41v2m0 2v1m0 2v1m0 2v2m0 1v2m0 11v1m0 73v1m0 2v2m0 4v2m0 4v2m0 4v1m0 22v1m0 6v1m0 82v4m0 4v1m0 9v5m0 10v5m0 10v5m0 11v5m0 10v2m0 4v1m0 9v2m0 5v2m0 9v1m0 6v1m0 10v1m0 7v2m0 2v1M608.5 241v1m0 1v1m0 1v1m0 6v1m0 1v1m0 1v1m0 1v3m0 39v1m0 1v2m0 1v1m0 2v1m0 1v2m0 1v1m0 5v1m0 1v1m0 45v1m0 9v1m0 14v1m0 83v2m0 1v4m0 6v3m0 6v4m0 6v4m0 7v3m0 8v4m0 7v5m0 6v1M609.5 212v1m0 10v2m0 1v1m0 36v1m0 1v2m0 1v1m0 3v2m0 1v1m0 1v2m0 2v1m0 42v2m0 1v2m0 1v1m0 5v1m0 8v1m0 1v1m0 47v2m0 11v1m0 119v1m0 5v1m0 6v5m0 7v5m0 7v3m0 2v1m0 7v1m0 5v1m0 8v4m0 1v1m0 9v3m0 1v2m0 9v1m0 4v1m0 10v1m0 5v1m0 9v1m0 6v1m0 8v1m0 8v8M610.5 237v2m0 2v1m0 1v1m0 1v1m0 1v1m0 33v1m0 1v1m0 1v1m0 1v2m0 1v1m0 1v2m0 1v1m0 2v1m0 1v1m0 47v2m0 2v1m0 2v1m0 2v1m0 2v1m0 12v1m0 55v1m0 15v2m0 24v2m0 1v3m0 137v8m0 6v1m0 8v2m0 5v1m0 9v1m0 6v1m0 8v2m0 6v1m0 9v1m0 7v3m0 2v5M611.5 207v1m0 42v1m0 1v1m0 1v2m0 3v1m0 1v1m0 2v1m0 1v1m0 38v2m0 1v1m0 2v1m0 2v1m0 1v2m0 7v1m0 52v1m0 3v1m0 2v1m0 3v1m0 15v1m0 1v1m0 55v1m0 3v1m0 64v1m0 3v3M612.5 213v1m0 7v1m0 2v1m0 46v1m0 1v1m0 2v1m0 4v1m0 1v1m0 2v1m0 40v1m0 3v1m0 2v1m0 2v1m0 1v2m0 12v1m0 55v1m0 8v1m0 3v2m0 18v2m0 2v1m0 67v1m0 6v3m0 20v4m0 8v5m0 10v3m0 12v3m0 12v4m0 12v5m0 11v2m0 4v2m0 6v3M613.5 224v1m0 1v2m0 8v2m0 1v1m0 49v3m0 1v1m0 2v1m0 1v2m0 1v1m0 2v1m0 1v1m0 2v1m0 1v1m0 41v1m0 1v1m0 6v1m0 2v1m0 2v1m0 10v1m0 59v2m0 1v2m0 4v2m0 4v2m0 11v1m0 24v1m0 88v2m0 7v1m0 9v6m0 11v5m0 12v6m0 12v6m0 13v3m0 3v2m0 11v1m0 8v2m0 8v3M614.5 242v1m0 1v1m0 1v1m0 1v1m0 1v2m0 1v1m0 1v1m0 1v2m0 1v1m0 53v2m0 1v1m0 2v1m0 2v1m0 2v1m0 5v1m0 1v1m0 1v1m0 44v1m0 1v1m0 13v2m0 15v3m0 63v3m0 1v2m0 6v4m0 6v4m0 7v4m0 7v4m0 8v4m0 8v4m0 7v1M615.5 221v1m0 43v1m0 1v1m0 1v2m0 4v1m0 1v1m0 2v1m0 55v1m0 1v1m0 1v2m0 2v1m0 2v1m0 2v1m0 11v1m0 50v1m0 19v1m0 21v1m0 84v1m0 6v5m0 8v6m0 8v1m0 2v1m0 1v1m0 7v2m0 6v1m0 8v1m0 5v1m0 10v1m0 2v2m0 1v1m0 10v2m0 4v2m0 11v1m0 5v2m0 11v1m0 7v1m0 11v1m0 9v9M616.5 242v1m0 1v1m0 1v2m0 35v1m0 1v1m0 1v2m0 1v1m0 4v2m0 1v1m0 2v1m0 1v1m0 1v1m0 60v1m0 2v1m0 3v1m0 2v2m0 13v1m0 1v1m0 112v7m0 120v5m0 8v2m0 7v2m0 7v2m0 9v2m0 7v2m0 9v2m0 9v10M617.5 253v2m0 1v1m0 3v2m0 1v1m0 1v2m0 2v1m0 35v1m0 1v1m0 1v1m0 2v1m0 2v1m0 2v1m0 8v1m0 65v1m0 1v1m0 2v2m0 3v1m0 3v1m0 3v1m0 13v1m0 66v7m0 29v4m0 50v7m0 7v2M618.5 204v1m0 64v1m0 1v1m0 1v1m0 1v2m0 1v1m0 2v1m0 1v1m0 2v1m0 1v1m0 1v1m0 42v1m0 2v1m0 2v1m0 2v1m0 83v1m0 2v2m0 3v2m0 4v1m0 4v2m0 24v1m0 2v2m0 82v1m0 8v5m0 11v5m0 11v6m0 12v4m0 1v2m0 11v1m0 6v2m0 12v8m0 15v9m0 15v2m0 8v2m0 5v2M619.5 220v1m0 72v2m0 1v1m0 2v1m0 1v2m0 1v2m0 1v1m0 2v1m0 48v1m0 2v1m0 3v1m0 2v2m0 13v1m0 81v1m0 4v3m0 5v3m0 6v4m0 6v3m0 8v3m0 8v4m0 7v1m0 167v1M620.5 234v1m0 11v1m0 1v1m0 3v1m0 61v1m0 1v1m0 2v1m0 2v1m0 1v2m0 1v2m0 5v1m0 2v1m0 50v1m0 11v2m0 16v1m0 1v1m0 93v2m0 3v5m0 7v5m0 8v5m0 7v1m0 5v1m0 8v6m0 10v7m0 10v1m0 1v5m0 11v1m0 6v1m0 10v1m0 10v5M621.5 213v1m0 38v1m0 3v1m0 1v1m0 1v1m0 4v1m0 1v2m0 1v1m0 68v1m0 3v1m0 2v2m0 2v1m0 2v1m0 9v2m0 51v2m0 1v1m0 14v2m0 27v1m0 130v1m0 8v1m0 6v2m0 9v2m0 6v1m0 11v1m0 7v2m0 10v2m0 8v2m0 11v2m0 11v12M622.5 233v1m0 3v2m0 38v1m0 2v1m0 1v1m0 2v1m0 2v1m0 1v1m0 2v1m0 76v1m0 3v1m0 3v1m0 2v2m0 129v5m0 3v2M623.5 245v1m0 1v1m0 3v1m0 2v1m0 1v1m0 41v1m0 2v1m0 2v1m0 2v1m0 1v1m0 2v1m0 2v1m0 1v1m0 80v1m0 2v2m0 3v1m0 3v2m0 3v1m0 14v2m0 2v1m0 67v1m0 25v1m0 12v5m0 35v4m0 18v7m0 3v3m0 3v7M624.5 260v1m0 2v1m0 2v1m0 3v2m0 1v1m0 1v2m0 1v1m0 41v2m0 2v1m0 2v1m0 1v2m0 2v1m0 2v1m0 2v1m0 2v3m0 91v1m0 5v1m0 5v2m0 4v3m0 13v2m0 6v1m0 87v2m0 10v8m0 17v10m0 20v13m0 23v3m0 18v4m0 24v2M625.5 211v1m0 71v1m0 2v1m0 1v2m0 4v1m0 1v1m0 2v1m0 3v1m0 40v1m0 1v1m0 1v2m0 2v1m0 2v1m0 2v2m0 9v1m0 109v3m0 8v4m0 8v4m0 10v4m0 10v5m0 9v1M626.5 225v1m0 5v1m0 1v1m0 2v1m0 66v1m0 3v1m0 2v1m0 2v1m0 2v1m0 2v1m0 2v1m0 1v2m0 50v1m0 3v1m0 3v1m0 2v2m0 133v3m0 4v2m0 1v4m0 9v7m0 11v2m0 6v2m0 11v2m0 1v3m0 1v4m0 16v3m0 7v2m0 19v2m0 12v4m0 20v5M627.5 203v1m0 3v1m0 38v2m0 1v1m0 1v1m0 1v2m0 75v2m0 1v2m0 2v1m0 5v1m0 2v1m0 2v2m0 3v1m0 50v1m0 2v2m0 3v1m0 4v1m0 4v1m0 15v2m0 165v1m0 16v2m0 16v3m0 13v3m0 23v4M628.5 207v1m0 7v1m0 2v1m0 41v2m0 1v1m0 1v1m0 2v1m0 1v1m0 2v1m0 1v2m0 77v2m0 3v2m0 2v1m0 2v2m0 2v1m0 10v3m0 61v1m0 12v1m0 35v1M629.5 238v1m0 1v2m0 38v2m0 1v1m0 1v2m0 4v1m0 1v1m0 2v1m0 1v1m0 90v1m0 3v1m0 3v1m0 3v1m0 12v2m0 2v1m0 61v2m0 2v4m0 10v2m0 10v4m0 43v8m0 7v3M630.5 244v1m0 2v1m0 1v2m0 3v1m0 1v2m0 1v1m0 1v3m0 36v1m0 1v1m0 1v1m0 2v1m0 4v2m0 1v1m0 2v1m0 2v1m0 94v1m0 2v2m0 3v2m0 3v2m0 4v2m0 4v1m0 5v1m0 5v3m0 88v2m0 11v7m0 14v9m0 17v2m0 9v3m0 24v17m0 48v5M631.5 268v2m0 1v1m0 4v1m0 1v2m0 1v1m0 3v1m0 39v1m0 1v1m0 2v1m0 2v1m0 2v2m0 1v1m0 6v1m0 3v1m0 117v3m0 6v4m0 7v4m0 8v4m0 9v1m0 149v6m0 32v8M632.5 228v1m0 2v1m0 15v1m0 39v1m0 1v1m0 1v2m0 1v1m0 2v1m0 1v2m0 1v1m0 2v1m0 1v1m0 44v2m0 2v1m0 2v1m0 2v2m0 2v1m0 10v1m0 1v1m0 125v1m0 7v6m0 8v7m0 9v3m0 3v2m0 11v9m0 14v3m0 2v1m0 1v1m0 1v3m0 14v3M633.5 214v1m0 1v1m0 30v1m0 4v1m0 7v1m0 1v2m0 45v1m0 1v1m0 1v2m0 1v1m0 2v1m0 2v1m0 2v1m0 2v1m0 2v1m0 1v1m0 50v1m0 3v1m0 3v1m0 3v1m0 12v2m0 161v2m0 10v2m0 9v2m0 16v3m0 12v3m0 20v4m0 32v22M634.5 224v1m0 8v1m0 38v1m0 2v1m0 4v2m0 1v1m0 2v1m0 48v1m0 1v1m0 2v2m0 1v2m0 1v2m0 2v1m0 2v1m0 3v1m0 53v4m0 4v1m0 4v1m0 4v1m0 22v1m0 2v1M635.5 246v1m0 1v2m0 1v1m0 38v1m0 1v1m0 1v1m0 2v1m0 1v1m0 2v2m0 1v1m0 2v1m0 3v2m0 49v2m0 2v1m0 2v2m0 2v2m0 2v1m0 7v1m0 2v1m0 1v1m0 60v3m0 13v2m0 33v1m0 7v1M636.5 208v1m0 13v1m0 32v1m0 5v1m0 6v1m0 2v1m0 1v1m0 1v1m0 39v1m0 1v1m0 2v1m0 2v2m0 1v2m0 1v2m0 2v1m0 2v1m0 55v1m0 1v1m0 2v2m0 2v2m0 3v2m0 2v2m0 3v1m0 4v1m0 5v3m0 65v2m0 3v5m0 9v5m0 10v6m0 13v4m0 16v7m0 19v4m0 1v2m0 5v14M637.5 235v1m0 6v1m0 35v1m0 2v1m0 2v1m0 4v1m0 2v1m0 2v1m0 44v1m0 1v2m0 2v1m0 2v2m0 1v2m0 2v1m0 3v1m0 2v2m0 65v2m0 4v2m0 4v2m0 4v2m0 5v2m0 6v2m0 94v7m0 4v5m0 18v13m0 28v4m0 21v1m0 1v9m0 37v5M638.5 251v1m0 3v1m0 1v2m0 40v1m0 1v1m0 1v2m0 1v1m0 2v1m0 2v1m0 2v1m0 2v1m0 3v1m0 48v1m0 3v1m0 3v1m0 3v1m0 11v2m0 68v1m0 4v3m0 6v4m0 7v5m0 8v5m0 9v6m0 9v2M639.5 217v1m0 46v1m0 4v2m0 3v2m0 1v1m0 2v1m0 1v1m0 1v1m0 38v1m0 1v1m0 1v2m0 1v2m0 1v1m0 3v1m0 2v1m0 2v2m0 4v1m0 54v2m0 3v2m0 3v2m0 3v1m0 11v1m0 91v1m0 9v7m0 10v2m0 6v2m0 11v2m0 7v4m0 19v4m0 10v3m0 30v5M640.5 238v1m0 7v2m0 2v1m0 36v2m0 1v1m0 2v1m0 1v1m0 2v2m0 1v1m0 2v1m0 1v1m0 1v1m0 45v1m0 2v2m0 2v1m0 2v2m0 2v2m0 2v1m0 3v3m0 54v1m0 2v3m0 4v2m0 5v3m0 25v4m0 5v2m0 130v4m0 25v7M641.5 250v1m0 3v1m0 5v1m0 2v1m0 1v2m0 45v2m0 1v2m0 1v2m0 1v1m0 2v1m0 2v1m0 2v2m0 49v1m0 2v1m0 3v1m0 3v2m0 2v2m0 3v1m0 4v1m0 3v1m0 64v3m0 1v3m0 9v5m0 12v6m0 16v5m0 19v2M642.5 212v1m0 1v1m0 61v1m0 3v1m0 2v1m0 2v1m0 1v2m0 1v1m0 44v2m0 2v1m0 2v1m0 2v2m0 2v1m0 2v1m0 2v2m0 3v1m0 50v1m0 2v2m0 4v2m0 3v3m0 3v2m0 5v2m0 4v3m0 88v2m0 17v13m0 117v3m0 14v3m0 7v3M643.5 245v1m0 1v1m0 2v1m0 46v1m0 1v1m0 2v1m0 4v2m0 1v2m0 1v1m0 48v1m0 1v1m0 2v1m0 2v2m0 2v2m0 2v1m0 3v1m0 3v1m0 3v3m0 56v1m0 2v1m0 1v2m0 7v1m0 6v4m0 7v5m0 10v6m0 7v2m0 143v16m0 8v7m0 20v8M644.5 207v1m0 50v1m0 4v2m0 1v1m0 1v1m0 49v1m0 3v1m0 2v1m0 2v1m0 2v1m0 2v2m0 1v2m0 2v1m0 1v1m0 49v1m0 1v1m0 2v2m0 2v2m0 3v2m0 3v1m0 14v1m0 1v2m0 70v2m0 10v4m0 2v2m0 12v2m0 9v1m0 20v3m0 1v1m0 1v1m0 3v2m0 1v1m0 3v5m0 19v11M645.5 232v2m0 38v2m0 5v1m0 4v1m0 2v1m0 1v2m0 2v1m0 51v1m0 1v2m0 1v2m0 2v1m0 3v1m0 2v1m0 2v2m0 2v1m0 2v1m0 61v2m0 4v2m0 4v2m0 22v2m0 5v1m0 106v6m0 64v11m0 32v1m0 3v1m0 2v1M646.5 239v1m0 10v1m0 1v1m0 1v2m0 2v1m0 38v1m0 2v2m0 2v1m0 4v1m0 2v1m0 2v1m0 58v1m0 4v2m0 2v1m0 3v2m0 2v1m0 3v2m0 2v2m0 77v3m0 9v4m0 11v2m0 17v1m0 15v3M647.5 217v1m0 47v1m0 4v1m0 1v1m0 1v2m0 44v1m0 3v1m0 2v1m0 2v2m0 1v2m0 2v1m0 2v1m0 2v1m0 1v1m0 60v1m0 1v2m0 3v2m0 3v2m0 3v2m0 4v1m0 4v2m0 4v3m0 2v1m0 81v1m0 13v8m0 18v4m0 11v2m0 107v4M648.5 221v1m0 2v1m0 10v1m0 45v1m0 1v1m0 3v1m0 3v1m0 1v1m0 2v1m0 1v2m0 3v1m0 46v1m0 2v2m0 2v1m0 2v2m0 2v1m0 3v1m0 3v1m0 1v1m0 68v1m0 3v2m0 5v3m0 6v2m0 5v4m0 7v4m0 8v1m0 130v17m0 49v3M649.5 205v1m0 31v1m0 11v2m0 1v1m0 52v1m0 4v1m0 8v1m0 2v1m0 2v1m0 53v2m0 2v2m0 2v2m0 3v1m0 3v1m0 4v1m0 3v2m0 1v1m0 78v3m0 2v4m0 2v1m0 9v5m0 1v1m0 10v2m0 2v1m0 1v3m0 13v11m0 19v3M650.5 207v1m0 3v1m0 12v1m0 37v1m0 4v1m0 1v1m0 1v1m0 2v1m0 3v1m0 51v1m0 1v1m0 1v2m0 1v2m0 5v2m0 2v1m0 2v1m0 2v1m0 1v1m0 51v2m0 1v1m0 3v2m0 3v2m0 3v2m0 11v1m0 5v3m0 2v1m0 108v2m0 17v3m0 20v7m0 23v41m0 27v12M651.5 226v1m0 2v1m0 7v3m0 44v1m0 2v1m0 4v1m0 2v1m0 2v1m0 58v1m0 1v1m0 1v2m0 2v2m0 2v2m0 2v1m0 3v1m0 3v1m0 2v1m0 1v1m0 64v3m0 15v3m0 22v6m0 5v3M652.5 257v1m0 2v1m0 48v1m0 2v1m0 2v1m0 2v1m0 2v1m0 2v1m0 68v2m0 2v2m0 4v1m0 2v2m0 3v2m0 3v2m0 3v1m0 68v3m0 3v4m0 12v7m0 15v10m0 29v21m0 1v1M653.5 209v1m0 3v1m0 2v1m0 7v1m0 41v1m0 3v1m0 3v1m0 2v1m0 2v1m0 1v2m0 1v1m0 43v1m0 3v2m0 1v2m0 1v2m0 2v1m0 2v1m0 3v1m0 3v2m0 71v2m0 4v2m0 4v3m0 4v3m0 5v2m0 9v4m0 89v4m0 7v20m0 1v4m0 2v6m0 1v2m0 6v1m0 2v1m0 3v1m0 1v1m0 13v6m0 27v3m0 14v15M654.5 227v1m0 6v1m0 5v1m0 1v1m0 48v1m0 1v1m0 2v1m0 1v1m0 2v2m0 1v1m0 2v1m0 3v1m0 48v1m0 3v1m0 2v2m0 2v1m0 3v1m0 3v1m0 3v1m0 1v1m0 79v1m0 5v5m0 7v2m0 1v3m0 10v6m0 12v7m0 1v2m0 5v4M655.5 208v1m0 43v1m0 4v1m0 1v1m0 1v2m0 1v1m0 50v2m0 2v1m0 2v1m0 2v1m0 2v1m0 2v1m0 2v1m0 53v1m0 2v1m0 3v2m0 2v2m0 3v1m0 4v1m0 4v1m0 5v3m0 102v2m0 14v3m0 11v9m0 90v3m0 15v4m0 12v4M656.5 216v1m0 1v1m0 52v1m0 3v1m0 3v2m0 1v2m0 1v1m0 2v1m0 50v1m0 4v1m0 2v2m0 1v2m0 2v1m0 3v1m0 2v1m0 4v1m0 57v2m0 4v2m0 4v2m0 4v2m0 21v1m0 148v15m0 21v6m0 17v5m0 6v8M657.5 250v1m0 41v1m0 3v1m0 2v2m0 1v2m0 1v2m0 1v2m0 1v2m0 59v2m0 2v1m0 3v1m0 3v1m0 3v1m0 3v1m0 3v1m0 1v1m0 66v4m0 7v4m0 9v4m0 33v4M658.5 224v1m0 39v1m0 5v1m0 1v2m0 47v1m0 5v2m0 1v2m0 2v1m0 2v2m0 1v1m0 1v1m0 57v1m0 1v1m0 2v2m0 3v2m0 3v2m0 3v2m0 4v2m0 3v3m0 80v2m0 9v10m0 20v3m0 13v7m0 42v23m0 26v8m0 1v3m0 15v2M659.5 228v1m0 3v1m0 8v1m0 42v1m0 6v2m0 1v2m0 1v2m0 49v1m0 2v2m0 2v2m0 2v1m0 3v1m0 2v2m0 2v1m0 64v2m0 2v1m0 4v3m0 4v3m0 14v4m0 7v5m0 4v3m0 120v1m0 1v1m0 27v5m0 22v3m0 9v2m0 13v2M660.5 249v1m0 12v1m0 1v2m0 2v1m0 35v1m0 1v2m0 1v2m0 2v1m0 1v2m0 1v2m0 2v1m0 50v1m0 5v1m0 3v1m0 3v2m0 3v1m0 3v2m0 3v2m0 80v2m0 8v7m0 10v1m0 6v2m0 14v11m0 22v4M661.5 226v1m0 44v1m0 2v1m0 3v1m0 3v2m0 1v2m0 1v1m0 1v1m0 1v1m0 34v1m0 1v1m0 1v2m0 5v2m0 2v1m0 2v2m0 2v1m0 55v1m0 5v2m0 4v2m0 4v2m0 4v2m0 5v2m0 108v2m0 20v6m0 56v18m0 5v5m0 14v3m0 11v3m0 11v6M662.5 207v1m0 89v1m0 2v1m0 7v1m0 2v1m0 43v1m0 1v1m0 2v1m0 3v1m0 2v2m0 3v1m0 3v1m0 3v2m0 1v1m0 61v1m0 5v3m0 9v1m0 9v1m0 1v1m0 14v6m0 7v2M663.5 211v1m0 3v1m0 2v1m0 10v1m0 31v2m0 3v2m0 3v1m0 1v1m0 3v1m0 49v1m0 4v2m0 2v1m0 2v2m0 1v1m0 1v1m0 41v1m0 1v2m0 3v2m0 3v2m0 2v2m0 4v1m0 4v2m0 79v2m0 17v15m0 66v3m0 1v2m0 9v4m0 4v9M664.5 231v1m0 1v2m0 11v1m0 44v1m0 2v2m0 1v1m0 3v1m0 47v1m0 3v2m0 2v1m0 2v2m0 2v2m0 2v1m0 4v2m0 49v3m0 4v2m0 4v4m0 4v3m0 6v3m0 101v4m0 32v5m0 4v3m0 1v3m0 19v1m0 8v2m0 13v1m0 7v1m0 10v1m0 6v2m0 7v1m0 7v7M665.5 207v1m0 52v2m0 3v1m0 3v1m0 1v1m0 32v2m0 8v1m0 3v1m0 2v1m0 2v1m0 52v1m0 1v1m0 4v2m0 2v2m0 2v2m0 3v1m0 4v1m0 3v1m0 1v1m0 54v1m0 2v2m0 7v7m0 12v9m0 20v3M666.5 274v1m0 2v1m0 6v1m0 1v1m0 2v1m0 2v1m0 1v1m0 38v1m0 7v1m0 1v2m0 2v2m0 2v1m0 57v2m0 2v1m0 3v2m0 3v3m0 3v2m0 5v2m0 5v2m0 70v5m0 1v5m0 21v25m0 1v2m0 22v3m0 20v2m0 9v3m0 13v1m0 8v1m0 10v2m0 6v2m0 7v2m0 7v8M667.5 239v1m0 13v1m0 46v1m0 12v1m0 2v2m0 3v1m0 37v1m0 1v1m0 3v1m0 4v1m0 2v1m0 3v1m0 3v2m0 4v1m0 59v2m0 2v1m0 5v2m0 8v4m0 9v4m0 14v8m0 5v3m0 100v1m0 1v1m0 15v14m0 9v3m0 7v2m0 8v9m0 8v7M668.5 267v1m0 12v1m0 43v1m0 2v1m0 1v1m0 4v1m0 1v2m0 2v1m0 2v2m0 4v1m0 43v1m0 1v1m0 2v2m0 4v1m0 3v2m0 3v2m0 3v1m0 1v1m0 2v1m0 79v3m0 16v9m0 1v1m0 1v5m0 61v12m0 1v3m0 19v2m0 9v2m0 9v3m0 9v9m0 13v1M669.5 223v1m0 9v1m0 49v1m0 1v1m0 6v1m0 2v2m0 1v2m0 1v1m0 2v1m0 49v2m0 2v2m0 2v1m0 3v2m0 3v1m0 3v2m0 49v1m0 3v3m0 3v1m0 1v1m0 4v4m0 4v4m0 8v1m0 5v1m0 102v6m0 20v4m0 12v3m0 18v3m0 7v2m0 12v2m0 6v1m0 10v1m0 7v1m0 7v2m0 7v4M670.5 235v1m0 8v2m0 4v1m0 3v1m0 60v1m0 4v2m0 2v1m0 2v2m0 53v2m0 1v1m0 2v2m0 3v2m0 3v2m0 3v2m0 3v2m0 3v1m0 51v3m0 1v2m0 3v2m0 7v1m0 6v1m0 12v10m0 19v2M671.5 209v1m0 10v1m0 1v1m0 34v1m0 1v2m0 10v2m0 1v1m0 60v1m0 5v2m0 1v1m0 3v2m0 2v2m0 2v1m0 2v1m0 56v1m0 3v2m0 4v3m0 4v3m0 5v3m0 6v3m0 5v1m0 64v11m0 24v14m0 32v4m0 17v3m0 10v2m0 12v2m0 8v1m0 9v2m0 7v2m0 5v3m0 7v6M672.5 208v1m0 15v1m0 1v1m0 56v1m0 6v1m0 3v1m0 1v1m0 2v1m0 65v1m0 3v1m0 3v1m0 6v2m0 3v2m0 2v1m0 1v2m0 62v1m0 7v2m0 8v7m0 17v11m0 18v3M673.5 212v1m0 3v1m0 2v1m0 8v1m0 28v1m0 5v1m0 49v1m0 2v1m0 1v2m0 2v1m0 2v2m0 69v1m0 2v1m0 4v1m0 1v1m0 4v1m0 4v2m0 4v2m0 87v3m0 52v6m0 2v9m0 17v9m0 13v7m0 11v1m0 1v1m0 1v2m0 10v5m0 9v1m0 3v1m0 7v1m0 4v1m0 6v1m0 4v5M674.5 232v1m0 41v1m0 3v1m0 2v1m0 5v1m0 45v1m0 5v1m0 2v1m0 3v2m0 2v1m0 3v1m0 76v1m0 3v1m0 2v1m0 4v1m0 2v1m0 5v5m0 7v5m0 8v1m0 132v4m0 6v2m0 7v1m0 9v1m0 6v1m0 8v1m0 5v1m0 7v1m0 4v2m0 6v1m0 4v2m0 4v1m0 6v4M675.5 206v1m0 1v1m0 8v1m0 47v1m0 3v1m0 2v1m0 17v2m0 8v1m0 2v2m0 2v1m0 4v1m0 47v1m0 4v1m0 8v2m0 2v2m0 3v1m0 5v1m0 84v4m0 7v2m0 17v3m0 7v1m0 7v27" stroke="#ff1400" fill="none"/>
<path d="M305.5 259v1m0 1v1m0 1v1m0 7v1m0 3v1m0 22v1m0 170v1m0 2v1m0 7v1m0 6v1m0 2v1m0 13v1m0 44v1m0 3v1m0 20v1m0 34v1M306.5 273v1m0 3v1m0 7v1m0 46v1m0 176v1m0 5v1m0 2v1m0 15v1m0 52v1m0 3v1m0 2v1m0 20v1m0 2v2m0 2v1m0 33v2m0 3v1M307.5 304v1m0 222v1m0 1v1m0 4v1m0 4v1m0 1v1m0 2v1m0 3v2m0 1v1m0 20v1m0 1v1m0 1v1m0 56v1m0 2v1m0 4v2m0 2v2m0 2v1m0 2v2m0 2v2m0 1v2m0 2v2m0 2v2m0 2v2m0 1v3m0 1v3m0 1v3m0 2v2m0 2v2m0 2v2m0 2v2m0 2v2m0 13v1M308.5 204v1m0 109v1m0 43v2m0 197v1m0 3v1m0 2v1m0 1v2m0 1v1m0 2v1m0 2v1m0 1v1m0 2v1m0 2v1m0 2v1m0 2v1m0 26v2m0 6v1m0 60v1m0 29v1M309.5 210v1m0 111v1m0 53v2m0 5v1m0 219v1m0 3v1m0 2v1m0 2v1m0 2v2m0 1v2m0 1v2m0 2v1m0 3v1m0 1v2m0 2v1m0 2v2m0 2v1m0 2v2m0 2v1m0 2v2m0 2v2m0 1v2m0 2v2m0 8v1M310.5 223v1m0 8v1m0 105v1m0 7v1m0 42v1m0 261v1m0 27v1m0 3v1m0 12v1m0 5v1m0 5v1m0 14v1m0 4v1M311.5 232v1m0 1v1m0 9v1m0 1v1m0 103v1m0 50v1m0 13v2m0 7v2m0 273v1m0 12v1m0 10v1M312.5 214v1m0 29v1m0 1v1m0 1v1m0 7v1m0 1v1m0 1v1m0 106v1m0 19v1m0 50v1M313.5 235v1m0 22v1m0 1v1m0 2v1m0 6v1m0 1v1m0 1v2m0 110v2m0 5v1m0 7v1m0 5v1m0 46v1m0 18v1M314.5 235v1m0 1v1m0 9v1m0 1v1m0 22v1m0 1v1m0 8v1m0 123v1m0 12v2m0 7v2m0 51v1m0 4v1m0 13v1M315.5 247v1m0 1v1m0 1v2m0 7v1m0 1v1m0 22v1m0 18v1m0 137v1m0 70v1m0 2v1m0 17v1M316.5 262v1m0 1v1m0 9v1m0 1v1m0 28v1m0 7v1m0 136v1m0 27v1m0 46v1m0 17v1m0 1v1m0 2v1m0 24v1m0 1v1m0 1v1M317.5 276v1m0 44v1m0 7v1m0 143v1m0 12v1m0 7v1m0 13v1m0 47v1m0 1v1m0 1v1m0 58v1m0 4v1M318.5 295v1m0 10v1m0 38v1m0 156v1m0 14v1m0 2v1m0 2v1m0 17v1m0 1v1m0 1v1m0 51v1m0 3v1m0 2v1m0 24v1m0 2v1m0 34v1m0 1v2M319.5 304v1m0 17v1m0 26v1m0 184v1m0 16v1m0 1v1m0 2v1m0 25v1m0 1v1m0 67v1m0 2v2m0 2v1m0 2v2m0 2v2m0 1v2m0 2v2m0 2v2m0 2v2m0 1v3m0 1v3m0 1v2m0 2v2m0 2v2m0 2v2m0 2v2m0 2v2m0 17v1M320.5 368v1m0 196v1m0 3v1m0 1v1m0 15v1m0 2v1m0 2v1m0 2v1m0 30v1m0 1v2m0 1v1m0 1v2m0 63v1m0 6v1m0 23v1m0 3v1M321.5 355v2m0 51v2m0 199v2m0 3v1m0 2v1m0 2v1m0 2v2m0 1v2m0 1v2m0 2v1m0 2v1m0 2v2m0 1v2m0 2v2m0 1v2m0 2v1m0 2v1m0 3v1m0 2v2m0 2v2m0 2v1m0 2v2m0 2v2m0 8v1M322.5 194v1m0 164v1m0 6v2m0 5v1m0 47v1m0 236v1m0 11v1m0 1v1m0 12v1m0 50v1M323.5 194v1m0 11v1m0 30v1m0 199v2m0 277v1M324.5 218v1m0 18v1m0 1v1m0 9v1m0 1v1m0 147v1m0 50v1m0 18v1m0 11v2M325.5 224v1m0 5v1m0 20v1m0 1v1m0 6v1m0 2v1m0 1v1m0 146v1m0 64v1m0 33v1M326.5 238v1m0 1v1m0 1v2m0 19v1m0 1v1m0 1v1m0 166v1m0 7v1m0 7v1m0 54v1m0 20v1m0 20v1M327.5 239v2m0 1v1m0 9v1m0 1v1m0 21v1m0 198v1m0 11v1m0 69v1m0 1v1m0 29v1m0 3v2M328.5 251v1m0 2v1m0 1v1m0 9v1m0 1v1m0 41v1m0 172v1m0 11v1m0 2v1m0 4v1m0 14v1m0 2v1m0 51v1m0 1v1m0 60v1m0 3v1M329.5 268v1m0 1v1m0 241v1m0 14v1m0 4v1m0 1v1m0 20v1m0 1v1m0 57v1m0 3v2m0 1v2m0 2v1m0 9v1m0 2v1m0 2v2m0 1v2m0 2v2m0 1v2m0 2v2m0 24v2m0 2v2M330.5 298v1m0 25v1m0 17v1m0 199v1m0 2v1m0 2v1m0 14v1m0 1v1m0 2v1m0 2v1m0 27v1m0 3v1m0 61v1m0 6v1m0 5v2m0 2v2m0 2v2M331.5 196v1m0 99v1m0 49v1m0 6v2m0 5v1m0 219v1m0 3v1m0 2v1m0 2v1m0 2v1m0 2v1m0 2v1m0 2v1m0 2v1m0 2v1m0 2v1m0 2v1m0 2v1m0 25v2m0 1v2M332.5 324v1m0 47v1m0 256v1m0 1v1m0 4v2m0 2v1m0 2v2m0 1v2m0 2v2m0 1v2m0 5v1m0 1v1m0 5v2m0 1v3m0 1v2m0 2v2m0 2v2m0 2v2m0 2v2M333.5 216v1m0 117v1m0 346v1m0 35v1M334.5 237v1m0 1v1m0 105v1m0 59v2M335.5 237v1m0 1v1m0 2v1m0 6v1m0 1v1m0 110v2m0 5v1m0 7v1m0 5v2m0 34v1m0 7v1M336.5 219v1m0 8v1m0 2v1m0 19v1m0 1v1m0 9v1m0 1v1m0 1v1m0 121v2m0 49v1m0 10v1m0 19v1M337.5 240v1m0 1v1m0 22v1m0 1v1m0 9v1m0 3v1m0 121v1m0 13v1m0 66v1m0 15v1M338.5 240v1m0 1v1m0 9v1m0 1v1m0 1v1m0 22v1m0 3v1m0 7v1m0 148v1m0 9v1m0 43v1m0 17v1m0 2v1M339.5 254v1m0 1v1m0 2v1m0 6v1m0 1v1m0 1v1m0 21v1m0 170v1m0 12v1m0 66v1m0 1v2m0 1v1m0 26v1m0 1v1M340.5 268v1m0 1v1m0 1v1m0 7v1m0 28v1m0 161v1m0 15v1m0 4v1m0 14v1m0 49v1m0 1v1m0 1v1m0 60v1m0 4v1M341.5 282v1m0 48v1m0 7v1m0 176v1m0 5v1m0 22v1m0 54v1m0 2v1m0 1v2m0 25v2m0 1v2m0 2v1m0 29v2m0 2v2m0 4v2M342.5 302v1m0 6v2m0 32v1m0 5v2m0 180v1m0 2v1m0 16v1m0 2v1m0 1v2m0 1v1m0 24v2m0 3v1m0 65v1m0 1v2m0 2v2m0 2v2m0 2v2m0 2v2m0 2v2m0 2v2m0 2v1m0 3v1m0 8v3m0 1v3m0 2v2m0 2v1m0 1v1m0 1v1m0 16v1M343.5 326v1m0 241v1m0 4v1m0 17v1m0 2v1m0 2v1m0 2v1m0 29v1m0 2v1m0 4v1m0 70v1m0 22v1M344.5 330v1m0 49v2m0 229v1m0 5v1m0 1v2m0 2v1m0 2v2m0 1v2m0 2v2m0 1v2m0 2v2m0 2v1m0 2v1m0 3v2m0 2v2m0 1v2m0 2v2m0 2v2m0 2v2m0 2v2m0 2v2m0 2v1m0 3v1m0 6v2M345.5 196v1m0 31v1m0 180v1m0 15v1m0 254v1m0 5v1m0 10v1m0 12v1m0 21v1M346.5 208v1m0 19v1m0 11v1m0 1v1m0 122v2m0 13v1m0 41v2m0 14v1m0 285v1m0 3v1m0 4v1M347.5 220v1m0 19v1m0 1v1m0 9v1m0 1v1m0 1v1m0 128v2m0 21v2m0 37v1m0 9v1m0 19v1M348.5 228v5m0 21v1m0 1v1m0 9v1m0 3v1m0 151v1m0 50v1m0 11v1m0 22v1M349.5 229v5m0 8v1m0 1v1m0 23v1m0 3v2m0 5v2m0 157v1m0 17v1m0 44v1m0 17v1m0 3v1m0 20v1m0 3v1M350.5 244v1m0 1v1m0 9v1m0 1v1m0 22v1m0 12v1m0 169v1m0 19v1m0 46v1m0 25v1m0 30v1m0 4v1M351.5 255v1m0 2v1m0 1v1m0 14v1m0 21v1m0 197v1m0 4v1m0 70v1m0 1v1m0 63v2m0 1v1m0 2v1M352.5 284v1m0 3v1m0 30v1m0 7v1m0 179v1m0 18v1m0 2v1m0 23v1m0 2v2m0 62v1m0 2v1m0 20v2m0 2v2m0 2v1m0 2v2m0 26v2m0 2v2m0 6v1m0 3v1M353.5 286v1m0 17v2m0 237v1m0 19v1m0 2v1m0 2v1m0 28v2m0 3v1m0 66v1m0 8v2m0 2v2m0 2v2m0 2v3m0 2v1m0 22v1M354.5 320v1m0 34v1m0 13v1m0 209v1m0 3v1m0 2v1m0 15v1m0 2v1m0 2v1m0 2v2m0 1v2m0 2v1m0 26v2m0 2v1m0 2v1m0 2v1m0 73v1m0 3v1M355.5 389v1m0 245v1m0 2v2m0 2v2m0 1v2m0 2v2m0 2v2m0 1v2m0 2v1m0 11v2m0 2v2m0 2v2m0 2v2m0 2v3m0 2v2m0 2v1m0 11v1M356.5 395v1m0 15v1m0 280v1m0 29v1M357.5 360v1m0 48v1m0 14v1M358.5 220v1m0 3v1m0 11v1m0 143v1m0 50v1m0 11v1M359.5 216v1m0 19v1m0 8v1m0 2v1m0 1v1m0 142v1m0 61v2m0 33v1M360.5 248v1m0 1v1m0 1v1m0 6v1m0 2v1m0 1v1m0 158v1m0 18v1m0 41v1m0 15v1m0 2v1m0 20v1M361.5 237v1m0 1v1m0 24v1m0 1v1m0 9v1m0 3v1m0 174v1m0 11v1m0 47v1m0 20v1m0 1v1m0 28v1M362.5 239v1m0 1v1m0 9v1m0 1v1m0 24v1m0 3v1m0 12v1m0 167v1m0 19v1m0 16v1m0 49v1m0 61v1M363.5 250v1m0 2v1m0 1v1m0 8v1m0 1v1m0 1v1m0 24v1m0 3v1m0 13v1m0 178v2m0 15v1m0 2v1m0 1v1m0 75v1m0 3v2m0 31v1m0 35v2M364.5 266v1m0 1v1m0 1v1m0 9v1m0 4v1m0 23v1m0 234v1m0 4v1m0 25v2m0 65v1m0 1v1m0 1v2m0 2v2m0 2v1m0 3v1m0 2v2m0 2v2m0 2v2m0 2v2m0 2v2m0 6v3m0 2v2m0 2v2m0 2v2m0 2v3m0 2v2M365.5 282v1m0 11v1m0 44v1m0 6v1m0 211v1m0 2v2m0 24v1m0 2v1m0 32v1m0 4v1m0 68v1m0 15v1M366.5 302v2m0 6v1m0 32v1m0 6v1m0 7v1m0 5v1m0 236v2m0 1v1m0 1v2m0 1v2m0 2v1m0 2v1m0 2v2m0 2v1m0 2v2m0 2v1m0 2v2m0 1v2m0 2v2m0 2v1m0 21v2m0 2v2m0 2v2M367.5 219v1m0 164v1m0 268v2m0 3v1m0 3v1m0 1v1m0 1v2m0 2v2m0 2v2m0 3v2m0 1v1m0 40v1M368.5 204v1m0 31v1m0 161v1m0 316v1m0 12v1M369.5 236v1m0 1v1m0 9v1m0 1v1m0 2v1m0 101v1m0 13v2m0 33v1m0 8v2M370.5 227v1m0 22v1m0 1v1m0 9v1m0 1v1m0 1v2m0 107v1m0 6v1m0 54v1M371.5 239v1m0 1v1m0 22v1m0 3v2m0 6v1m0 119v2m0 6v1m0 7v2m0 72v1M372.5 239v1m0 1v1m0 9v1m0 1v1m0 1v1m0 22v1m0 12v1m0 118v1m0 15v1m0 53v1m0 18v1m0 21v2M373.5 253v1m0 1v1m0 1v1m0 9v1m0 1v1m0 30v1m0 6v1m0 143v1m0 11v1m0 46v1m0 20v1m0 3v1m0 24v1M374.5 267v1m0 1v1m0 1v1m0 13v1m0 193v1m0 16v1m0 47v1m0 2v1m0 26v1m0 33v1M375.5 283v1m0 3v1m0 13v2m0 183v1m0 16v1m0 2v1m0 22v1m0 2v1m0 56v1m0 31v2m0 34v2m0 5v1M376.5 317v1m0 35v1m0 166v1m0 20v1m0 32v1m0 65v1m0 1v2m0 2v2m0 2v1m0 2v2m0 2v2m0 2v2m0 2v2m0 2v2m0 1v3m0 1v1m0 4v2m0 2v2m0 2v2m0 2v3m0 2v2m0 2v2m0 2v2M377.5 218v1m0 1v1m0 94v1m0 57v1m0 181v1m0 2v1m0 22v1m0 2v1m0 2v1m0 31v1m0 4v1m0 83v1m0 12v1m0 5v1m0 2v2M378.5 218v1m0 1v1m0 11v1m0 1v1m0 118v2m0 31v2m0 210v1m0 4v1m0 2v1m0 2v1m0 2v1m0 3v1m0 2v1m0 2v2m0 2v1m0 2v2m0 1v2m0 2v2m0 2v1m0 2v1m0 18v2m0 2v2m0 2v2m0 8v1M379.5 206v1m0 25v1m0 1v1m0 2v1m0 8v1m0 1v1m0 101v2m0 57v1m0 15v1m0 9v1m0 226v2m0 2v2m0 2v2m0 52v1m0 7v1M380.5 246v1m0 1v1m0 11v1m0 1v1m0 107v2m0 71v1m0 19v2m0 245v1m0 21v1M381.5 235v1m0 1v1m0 22v1m0 1v1m0 1v1m0 9v1m0 3v1m0 192v1m0 4v1m0 19v1M382.5 237v1m0 1v1m0 9v1m0 1v1m0 24v1m0 3v1m0 6v1m0 155v1m0 43v1m0 19v1m0 22v1m0 1v1M383.5 251v1m0 1v1m0 9v1m0 1v1m0 1v2m0 27v1m0 13v2m0 126v1m0 12v1m0 4v1m0 61v1m0 24v1m0 1v1m0 27v1M384.5 265v1m0 1v1m0 212v2m0 23v1m0 52v1m0 63v2m0 3v2M385.5 285v1m0 12v2m0 24v1m0 6v2m0 5v2m0 173v1m0 2v1m0 82v2m0 1v1m0 1v2m0 31v1m0 2v2m0 31v1m0 2v2m0 2v1m0 2v2M386.5 300v1m0 42v1m0 185v1m0 21v1m0 2v1m0 1v1m0 28v2m0 1v1m0 66v1m0 4v2m0 2v2m0 2v2m0 2v2m0 2v3m0 2v2m0 2v2m0 2v1m0 6v1m0 1v1m0 5v2m0 2v2m0 2v1m0 17v1m0 2v1M387.5 208v1m0 103v1m0 6v1m0 6v1m0 5v2m0 28v2m0 202v1m0 3v1m0 24v2m0 2v1m0 34v2m0 1v1m0 2v1m0 75v1m0 2v1m0 14v1M388.5 198v1m0 30v1m0 1v1m0 104v2m0 6v1m0 269v2m0 1v1m0 1v2m0 2v2m0 2v1m0 2v2m0 2v2m0 2v1m0 2v2m0 2v2m0 2v2m0 2v2m0 2v2m0 2v2m0 6v2m0 2v3m0 2v2m0 2v2m0 2v3M389.5 206v1m0 24v1m0 1v1m0 12v1m0 101v1m0 67v1m0 5v1m0 245v1M390.5 206v1m0 10v1m0 25v1m0 2v1m0 9v1m0 1v1m0 1v1m0 107v1m0 23v1m0 36v2m0 17v1M391.5 232v1m0 1v1m0 23v1m0 1v1m0 1v1m0 13v1m0 179v1m0 13v1m0 5v1M392.5 234v1m0 1v1m0 9v1m0 1v1m0 1v1m0 27v1m0 6v1m0 6v1m0 135v2m0 75v1m0 2v1m0 23v1M393.5 248v1m0 1v1m0 2v1m0 6v1m0 33v1m0 142v1m0 16v2m0 14v1m0 48v1m0 23v1m0 28v2M394.5 262v1m0 4v1m0 7v1m0 29v1m0 157v1m0 20v1m0 18v1m0 50v2m0 2v1m0 63v1m0 4v1M395.5 277v1m0 13v1m0 31v1m0 170v1m0 47v1m0 56v2m0 3v2m0 30v2m0 2v1m0 34v3m0 1v1m0 3v1M396.5 293v1m0 5v2m0 6v1m0 5v2m0 34v1m0 14v1m0 164v1m0 21v1m0 2v1m0 1v1m0 28v1m0 67v2m0 5v1m0 2v2m0 2v2m0 2v2m0 2v3m0 2v2m0 2v2m0 2v3m0 8v1m0 1v1m0 6v1m0 8v1m0 13v1M397.5 566v1m0 1v1m0 1v1m0 27v2m0 2v1m0 31v1m0 2v1m0 2v1m0 87v1M398.5 196v1m0 32v1m0 97v1m0 286v1m0 4v2m0 2v1m0 2v2m0 6v1m0 2v2m0 2v2m0 2v1m0 2v2m0 6v2m0 2v2m0 2v2m0 3v1m0 2v2m0 3v2m0 2v2m0 2v3m0 1v1m0 6v1m0 4v1M399.5 229v1m0 11v1m0 1v1m0 110v2m0 6v1m0 53v1m0 16v1m0 242v1m0 10v1m0 1v1m0 24v1m0 18v1M400.5 202v1m0 40v1m0 1v1m0 9v1m0 1v1m0 1v1m0 122v1m0 64v1m0 15v1M401.5 233v1m0 2v1m0 20v1m0 1v1m0 1v1m0 13v1m0 113v1m0 14v2m0 50v1m0 18v1m0 20v1M402.5 233v1m0 1v1m0 8v2m0 2v1m0 41v1m0 137v1m0 55v1m0 22v3m0 24v1M403.5 245v2m0 1v1m0 1v1m0 9v1m0 1v1m0 2v1m0 22v1m0 231v1m0 25v1m0 33v1M404.5 262v1m0 1v1m0 9v1m0 3v1m0 46v2m0 136v1m0 15v1m0 146v1m0 4v2M405.5 276v1m0 13v1m0 38v2m0 6v1m0 155v2m0 19v1m0 30v1m0 58v1m0 1v2m0 33v2m0 37v2M406.5 291v2m0 47v2m0 213v1m0 2v1m0 30v1m0 2v1m0 73v3m0 2v2m0 3v2m0 2v2m0 3v2m0 2v3m0 2v1m0 1v1m0 11v1M407.5 228v1m0 79v1m0 76v1m0 182v2m0 3v1m0 30v1m0 34v1m0 4v1m0 81v2M408.5 237v1m0 1v1m0 87v1m0 13v2m0 55v2m0 217v1m0 2v1m0 1v2m0 2v1m0 20v1m0 3v2m0 2v2m0 2v2m0 2v3m0 12v1m0 2v3m0 2v2m0 3v2m0 2v1M409.5 214v1m0 21v1m0 2v1m0 1v1m0 9v1m0 1v1m0 1v2m0 97v1m0 15v1m0 45v2m0 258v1m0 11v1m0 6v1m0 23v1m0 8v1M410.5 214v1m0 14v1m0 2v1m0 20v1m0 3v1m0 7v1m0 5v1m0 103v2m0 86v1M411.5 229v1m0 11v1m0 1v1m0 23v1m0 19v1m0 101v1m0 8v2m0 16v1m0 39v2m0 20v1M412.5 243v1m0 1v1m0 9v1m0 1v1m0 1v1m0 23v1m0 20v1m0 107v1m0 10v2m0 17v2m0 42v1m0 21v1m0 26v1m0 1v1M413.5 257v1m0 1v1m0 1v1m0 9v1m0 1v1m0 33v1m0 13v1m0 150v2m0 48v1m0 24v1m0 33v1M414.5 273v1m0 3v1m0 6v1m0 6v1m0 33v1m0 155v1m0 4v1m0 19v1m0 53v1m0 70v1m0 4v2M415.5 289v1m0 47v1m0 21v1m0 137v1m0 20v1m0 1v2m0 25v1m0 1v1m0 64v1m0 32v2m0 2v2m0 29v3m0 2v3m0 4v1M416.5 230v1m0 73v2m0 13v1m0 36v2m0 7v1m0 6v1m0 161v1m0 24v2m0 1v1m0 30v2m0 78v2m0 3v2m0 2v3m0 2v3m0 2v2m0 3v2m0 2v1m0 33v1M417.5 208v1m0 17v1m0 2v1m0 11v1m0 1v2m0 77v2m0 13v1m0 237v2m0 31v2m0 2v1m0 31v2m0 88v1M418.5 214v1m0 26v1m0 1v1m0 1v2m0 7v1m0 4v2m0 81v1m0 7v1m0 79v1m0 194v1m0 2v1m0 2v2m0 11v2m0 2v2m0 2v2m0 3v2m0 2v2m0 7v2m0 2v3m0 2v2m0 3v2m0 2v3m0 2v3m0 2v3m0 4v1M419.5 231v1m0 1v1m0 27v2m0 13v1m0 101v1m0 46v1m0 256v1m0 22v1m0 4v1m0 1v1m0 17v1M420.5 233v1m0 1v1m0 6v1m0 2v1m0 1v1m0 2v1m0 22v1m0 3v1m0 6v1m0 6v1m0 108v2m0 68v1m0 1v2m0 19v1M421.5 247v1m0 1v1m0 2v1m0 6v1m0 1v1m0 1v1m0 25v1m0 191v1m0 21v1m0 27v1M422.5 261v1m0 1v1m0 1v1m0 9v1m0 3v1m0 47v1m0 104v2m0 18v1m0 63v3m0 25v1m0 30v1M423.5 201v1m0 75v1m0 3v1m0 56v1m0 139v1m0 24v1m0 51v1m0 3v1m0 66v1m0 5v1M424.5 292v2m0 198v1m0 20v1m0 2v1m0 25v3m0 61v2m0 33v2m0 2v2m0 32v2m0 2v1M425.5 529v1m0 24v1m0 2v1m0 31v1m0 1v2m0 73v2m0 2v3m0 2v2m0 2v2m0 3v2m0 2v2m0 3v2m0 4v1m0 22v1m0 1v1M426.5 200v1m0 37v1m0 1v1m0 110v1m0 34v1m0 15v1m0 10v1m0 154v1m0 1v1m0 1v1m0 28v1m0 2v2m0 33v1m0 2v1M427.5 240v1m0 1v1m0 9v1m0 1v1m0 2v1m0 91v1m0 23v1m0 244v1m0 4v2m0 2v1m0 23v2m0 2v2m0 6v2m0 2v3m0 2v2m0 2v2m0 2v3m0 2v2m0 2v3m0 2v2M428.5 219v1m0 34v1m0 1v1m0 1v1m0 7v1m0 1v1m0 1v1m0 114v2m0 9v1m0 37v2m0 19v1m0 17v1m0 231v1m0 1v1m0 11v1m0 4v2M429.5 242v1m0 1v1m0 25v1m0 1v1m0 1v1m0 7v1m0 6v1m0 195v1m0 22v2M430.5 244v1m0 1v1m0 9v1m0 1v1m0 1v1m0 25v1m0 3v1m0 138v2m0 18v2m0 43v1m0 26v1m0 29v1M431.5 197v1m0 60v1m0 1v1m0 1v1m0 9v1m0 3v1m0 24v1m0 21v1m0 134v1m0 4v1m0 18v2m0 113v1M432.5 197v1m0 1v1m0 74v1m0 4v1m0 7v1m0 47v1m0 135v2m0 21v1m0 25v1m0 53v1m0 1v1m0 72v1m0 2v1m0 1v1M433.5 224v1m0 66v1m0 47v1m0 23v2m0 141v1m0 23v1m0 1v1m0 27v1m0 1v1m0 63v1m0 2v1m0 2v1m0 32v2m0 2v3m0 2v2m0 2v2m0 7v2m0 3v2m0 2v3m0 2v2m0 3v2m0 9v1M434.5 224v1m0 1v2m0 9v1m0 1v1m0 66v1m0 14v1m0 6v1m0 31v1m0 8v2m0 172v1m0 29v1m0 2v1m0 32v2m0 4v1m0 70v1m0 4v1m0 9v2m0 2v1m0 6v1m0 15v1m0 2v1M435.5 239v1m0 1v1m0 9v1m0 1v1m0 71v2m0 83v1m0 177v1m0 2v1m0 33v2m0 2v2m0 31v2m0 2v1m0 1v1m0 1v1m0 2v2M436.5 227v1m0 25v1m0 1v1m0 1v1m0 7v1m0 1v1m0 4v1m0 88v1m0 44v1m0 236v1m0 5v2m0 3v1m0 3v2m0 2v2m0 2v2m0 3v2m0 2v2m0 2v3m0 13v1m0 2v2m0 2v3m0 6v1m0 21v1M437.5 229v1m0 11v1m0 1v1m0 25v1m0 3v1m0 157v2m0 301v1M438.5 243v1m0 1v1m0 9v1m0 34v1m0 7v1m0 101v1m0 81v1m0 22v2M439.5 256v1m0 5v1m0 7v1m0 3v1m0 27v1m0 20v1m0 102v2m0 63v1m0 24v1m0 28v2M440.5 278v1m0 7v1m0 56v1m0 95v2m0 16v1m0 20v1m0 51v1m0 63v2M441.5 303v1m0 186v1m0 84v1m0 33v2m0 35v2m0 4v1M442.5 307v1m0 62v1m0 15v2m0 115v1m0 24v1m0 32v1m0 62v1m0 4v2m0 29v1m0 2v2m0 2v1m0 1v1m0 2v2m0 2v2m0 3v2m0 2v2m0 3v2m0 2v3m0 2v2m0 2v2m0 5v1m0 1v1M443.5 238v1m0 2v1m0 1v1m0 90v1m0 14v1m0 44v1m0 146v1m0 1v1m0 29v1m0 33v1m0 76v1m0 4v1m0 9v2m0 2v1m0 6v1m0 13v1M444.5 201v1m0 41v1m0 1v1m0 1v1m0 6v1m0 3v1m0 1v1m0 93v2m0 229v2m0 4v1m0 30v2m0 2v2m0 32v2m0 2v1m0 1v1m0 4v1M445.5 215v1m0 16v1m0 24v2m0 1v1m0 1v1m0 6v1m0 2v1m0 1v1m0 1v1m0 90v1m0 9v1m0 15v2m0 55v1m0 2v1m0 17v1m0 169v2m0 4v2m0 2v2m0 3v2m0 2v2m0 2v2m0 3v2m0 2v2m0 2v2m0 14v1m0 3v1m0 2v3m0 13v1m0 14v1M446.5 234v1m0 11v1m0 1v1m0 25v1m0 18v1m0 188v1m0 1v1m0 25v1m0 196v1m0 10v1M447.5 248v1m0 1v1m0 9v1m0 1v1m0 1v1m0 32v1m0 13v2m0 101v1m0 78v1m0 1v1m0 25v1m0 27v2M448.5 264v1m0 1v1m0 2v1m0 5v1m0 5v1m0 27v1m0 7v1m0 122v1m0 41v2m0 47v1m0 1v1m0 64v2m0 1v1M449.5 279v1m0 55v1m0 134v1m0 22v1m0 25v1m0 58v1m0 74v2m0 5v1M450.5 215v1m0 1v1m0 4v1m0 139v2m0 167v1m0 97v2m0 4v2m0 34v2m0 2v3m0 2v2m0 3v2m0 3v2m0 2v2m0 3v2m0 3v2m0 2v2m0 10v1M451.5 233v1m0 80v1m0 54v1m0 245v1m0 2v1m0 73v1m0 10v1m0 18v1m0 7v1M452.5 235v1m0 1v1m0 8v1m0 1v1m0 1v1m0 81v2m0 13v2m0 246v1m0 32v2m0 2v2m0 34v2m0 2v1m0 3v1M453.5 226v1m0 23v1m0 1v1m0 7v2m0 1v1m0 1v1m0 2v1m0 110v2m0 52v1m0 21v1m0 193v1m0 4v2m0 3v1m0 9v1m0 2v2m0 3v2m0 2v3m0 2v1m0 1v1m0 18v1m0 6v1m0 13v1M454.5 236v1m0 1v1m0 26v1m0 1v1m0 1v1m0 8v1m0 3v1m0 104v1m0 17v1m0 40v1m0 18v1m0 1v1m0 22v1m0 222v1m0 14v1M455.5 238v1m0 1v1m0 1v1m0 8v1m0 1v1m0 1v1m0 26v1m0 5v1m0 143v2m0 66v1M456.5 253v1m0 1v1m0 1v1m0 2v1m0 7v1m0 1v1m0 48v2m0 191v1m0 63v1M457.5 270v1m0 1v1m0 1v1m0 8v1m0 3v1m0 29v1m0 13v1m0 121v1m0 19v1m0 2v1m0 22v1m0 55v1m0 71v1m0 2v1M458.5 209v1m0 1v1m0 75v1m0 197v1m0 53v1m0 61v1m0 4v1m0 34v1m0 3v2m0 34v2m0 2v1m0 7v1M459.5 236v1m0 74v2m0 12v1m0 41v2m0 15v1m0 168v1m0 33v2m0 1v1m0 76v2m0 3v2m0 7v2m0 2v3m0 2v2m0 3v2m0 2v2m0 5v1m0 1v1m0 16v1M460.5 235v1m0 2v1m0 1v1m0 9v1m0 2v1m0 2v1m0 88v1m0 45v2m0 175v1m0 34v2m0 37v1M461.5 229v1m0 23v1m0 1v1m0 1v1m0 9v1m0 1v1m0 134v2m0 12v2m0 3v1m0 15v2m0 177v1m0 5v2m0 29v2m0 2v3m0 2v2m0 2v3m0 2v2m0 3v2m0 2v2m0 3v2m0 2v3m0 2v3M462.5 225v1m0 4v2m0 9v1m0 1v1m0 25v1m0 1v1m0 2v1m0 7v1m0 1v1m0 1v1m0 1v1m0 91v1m0 10v1m0 60v1m0 227v1m0 10v1m0 1v1m0 2v3m0 28v1M463.5 243v1m0 1v1m0 9v1m0 1v1m0 1v2m0 25v1m0 12v1m0 6v1m0 92v1m0 4v1m0 13v1m0 63v1M464.5 259v1m0 2v1m0 7v1m0 1v1m0 1v1m0 2v1m0 25v1m0 21v1m0 105v1m0 16v2m0 43v1m0 58v1m0 1v1M465.5 274v1m0 1v1m0 1v1m0 8v1m0 5v2m0 51v1m0 254v1M466.5 299v1m0 3v1m0 7v1m0 31v1m0 125v1m0 50v1m0 1v1m0 58v1m0 37v1m0 37v3m0 5v1M467.5 309v1m0 22v1m0 60v1m0 110v3m0 58v1m0 1v2m0 66v1m0 1v3m0 32v3m0 2v2m0 8v3m0 2v3m0 3v2m0 3v2m0 3v1m0 1v1M468.5 200v1m0 34v1m0 102v1m0 66v2m0 209v1m0 83v1m0 4v1m0 4v1M469.5 214v1m0 22v1m0 1v1m0 9v1m0 1v1m0 2v1m0 339v1m0 2v1m0 36v3m0 2v2m0 29v1m0 3v2m0 5v1M470.5 208v1m0 11v1m0 32v1m0 1v1m0 1v1m0 6v1m0 1v1m0 1v1m0 119v1m0 12v1m0 250v1m0 6v2m0 3v2m0 3v2m0 3v2m0 3v2m0 3v2m0 3v3m0 27v1m0 2v1m0 6v1M471.5 236v3m0 1v1m0 27v1m0 1v1m0 1v1m0 8v1m0 1v1m0 1v1m0 128v1m0 14v1m0 42v1m0 52v1m0 1v1m0 195v1m0 4v1M472.5 242v1m0 1v1m0 2v1m0 6v1m0 1v1m0 28v1m0 5v2m0 5v1m0 5v1m0 116v2m0 16v1m0 1v1M473.5 256v1m0 1v1m0 1v1m0 8v1m0 1v1m0 1v1m0 27v1m0 22v2m0 146v1m0 79v1m0 70v1M474.5 273v1m0 1v1m0 1v1m0 2v1m0 5v1m0 250v1m0 1v2m0 60v1m0 2v1m0 36v2m0 3v2m0 31v2m0 3v1m0 3v1m0 2v1M475.5 231v1m0 58v1m0 5v1m0 6v1m0 7v1m0 30v1m0 8v2m0 14v2m0 151v1m0 68v1m0 74v3m0 2v3m0 8v1m0 3v2m0 3v2m0 3v2m0 2v3m0 26v1M476.5 231v2m0 1v1m0 8v1m0 1v1m0 2v1m0 68v1m0 3v1m0 52v2m0 187v1m0 2v1m0 34v2m0 35v2m0 6v1M477.5 214v1m0 32v1m0 1v1m0 10v1m0 1v1m0 73v2m0 50v1m0 11v1m0 216v2m0 5v1m0 32v2m0 7v2m0 3v2m0 3v2m0 3v2m0 2v3m0 2v3m0 2v3m0 4v1m0 4v1m0 5v1M478.5 262v1m0 1v1m0 1v1m0 7v1m0 4v1m0 149v2m0 20v1m0 227v1m0 12v1m0 2v1m0 1v1m0 16v1m0 12v2M479.5 246v1m0 1v1m0 1v1m0 28v1m0 1v1m0 1v1m0 6v1m0 1v1m0 194v3M480.5 252v1m0 1v1m0 7v1m0 1v1m0 2v1m0 28v1m0 6v2m0 4v1m0 6v1m0 96v2m0 57v2m0 53v1m0 1v1M481.5 265v2m0 2v1m0 1v1m0 7v1m0 1v1m0 2v1m0 137v1m0 15v1m0 24v1m0 109v2m0 1v1M482.5 284v1m0 1v1m0 1v1m0 8v1m0 5v1m0 39v1m0 15v2m0 137v3m0 127v3m0 1v1M483.5 300v1m0 7v1m0 15v1m0 41v2m0 15v1m0 100v1m0 55v1m0 1v1m0 60v2m0 42v3m0 2v2m0 28v1m0 2v3m0 10v1M484.5 396v1m0 14v1m0 176v2m0 74v2m0 5v2m0 3v2m0 3v2m0 3v2m0 2v3m0 2v2m0 3v2M485.5 341v1m0 62v2m0 17v2m0 16v2m0 124v1m0 1v2m0 35v2m0 36v2m0 2v1m0 2v2M486.5 230v1m0 4v1m0 6v1m0 2v1m0 1v1m0 143v1m0 84v1m0 148v2m0 36v2m0 7v3m0 2v3m0 2v2m0 3v2m0 3v2m0 2v3m0 14v1m0 1v1m0 3v1M487.5 248v1m0 1v1m0 1v1m0 7v1m0 1v1m0 1v1m0 198v1m0 51v3m0 167v1m0 3v1m0 1v1m0 16v1m0 19v1M488.5 228v1m0 3v1m0 1v3m0 26v1m0 3v1m0 1v1m0 7v1m0 4v1m0 129v1m0 20v1m0 17v2m0 44v3m0 61v1M489.5 238v1m0 1v1m0 6v1m0 2v1m0 1v1m0 1v2m0 26v1m0 5v1m0 6v1m0 146v1m0 21v1m0 23v1m0 127v2M490.5 251v1m0 2v1m0 2v1m0 9v1m0 1v1m0 42v2m0 158v1m0 1v1m0 53v1m0 1v1m0 57v1m0 2v1m0 37v2m0 2v2m0 34v1m0 2v3M491.5 202v1m0 7v1m0 57v1m0 3v1m0 1v1m0 1v1m0 235v1m0 63v1m0 73v1m0 1v1m0 1v1m0 3v1m0 23v2m0 3v2m0 7v1M492.5 196v1m0 89v1m0 67v2m0 235v2m0 37v2m0 93v1m0 3v1M493.5 200v1m0 40v1m0 6v2m0 64v2m0 45v2m0 16v1m0 230v3m0 32v2m0 2v2m0 3v3m0 2v2m0 8v2m0 3v2m0 3v2m0 2v3m0 2v2m0 12v1M494.5 210v1m0 40v1m0 1v1m0 1v1m0 8v1m0 1v1m0 57v1m0 9v1m0 51v1m0 18v1m0 265v1m0 1v1m0 4v3m0 2v3m0 2v3m0 2v3m0 3v2m0 4v1m0 4v1m0 4v1m0 1v1m0 2v1m0 4v2M495.5 233v1m0 4v1m0 26v1m0 2v1m0 1v1m0 1v1m0 8v1m0 1v1m0 3v1m0 125v1m0 17v3m0 18v1m0 1v1M496.5 243v1m0 2v1m0 6v1m0 32v1m0 1v1m0 1v1m0 6v1m0 6v1m0 82v1m0 53v2m0 48v1M497.5 256v1m0 1v1m0 1v1m0 8v1m0 1v1m0 1v1m0 38v1m0 82v1m0 16v2m0 60v1m0 56v2m0 1v1M498.5 273v1m0 1v1m0 1v1m0 5v1m0 2v1m0 4v1m0 29v1m0 24v1m0 74v2m0 18v1m0 21v3m0 46v3M499.5 291v1m0 1v1m0 50v1m0 8v2m0 96v1m0 50v3m0 52v2m0 1v1m0 79v2M500.5 220v1m0 3v2m0 83v1m0 13v1m0 59v1m0 12v1m0 89v1m0 59v1m0 1v1m0 64v1m0 43v1m0 3v3m0 2v3m0 3v2m0 9v1m0 3v2m0 3v3m0 2v3m0 3v1m0 6v1m0 6v1M501.5 211v1m0 30v1m0 1v1m0 6v1m0 1v1m0 151v2m0 2v2m0 16v1m0 100v1m0 165v1m0 2v3m0 3v2m0 5v1m0 15v1M502.5 229v1m0 22v1m0 2v2m0 1v1m0 7v1m0 2v1m0 1v1m0 89v1m0 4v1m0 51v2m0 196v2m0 3v1m0 35v3m0 2v1m0 2v1M503.5 241v1m0 31v1m0 1v1m0 3v1m0 4v1m0 2v1m0 1v1m0 83v2m0 17v1m0 12v1m0 92v3m0 133v1m0 7v2m0 24v2m0 3v2m0 3v2m0 8v1m0 12v1m0 7v1m0 18v1M504.5 245v1m0 1v3m0 6v1m0 1v1m0 1v1m0 30v1m0 4v1m0 4v1m0 97v2m0 13v1m0 3v1m0 17v2m0 44v1m0 224v2m0 5v1m0 2v1m0 10v1M505.5 260v2m0 1v1m0 6v1m0 1v1m0 1v1m0 1v1m0 43v1m0 106v1m0 21v1m0 75v1m0 70v1m0 2v2M506.5 275v1m0 2v1m0 2v1m0 1v1m0 6v1m0 1v1m0 1v1m0 1v1m0 215v1m0 59v1m0 2v2m0 36v2m0 4v2m0 36v3m0 2v1m0 2v1m0 1v1M507.5 227v1m0 73v1m0 6v1m0 6v1m0 240v2m0 2v1m0 72v2m0 2v1m0 3v2m0 26v2m0 3v2m0 3v2m0 17v1m0 2v1m0 10v1M508.5 242v2m0 71v1m0 6v1m0 15v1m0 35v1m0 29v1m0 133v1m0 2v1m0 30v1m0 3v2m0 39v1m0 1v1m0 90v2M509.5 210v1m0 4v1m0 33v1m0 10v1m0 1v1m0 81v2m0 15v1m0 37v1m0 18v2m0 15v1m0 154v1m0 1v1m0 1v1m0 36v3m0 8v3m0 3v2m0 4v2m0 3v2m0 3v3m0 3v2m0 3v3m0 11v1M510.5 233v1m0 30v1m0 2v1m0 8v1m0 1v1m0 1v1m0 104v1m0 63v1m0 21v3m0 182v1m0 1v1m0 2v1m0 2v1m0 1v1m0 3v2m0 3v3m0 3v3m0 2v3m0 8v1m0 19v1m0 6v1M511.5 247v2m0 1v1m0 31v1m0 2v1m0 1v1m0 6v1m0 1v1m0 2v1m0 2v1m0 78v1m0 32v2m0 96v2m0 1v1M512.5 254v1m0 1v1m0 8v1m0 1v1m0 3v1m0 29v1m0 4v1m0 6v1m0 6v1m0 104v1m0 20v1m0 1v1m0 46v1m0 1v1M513.5 268v1m0 1v1m0 1v1m0 1v1m0 8v1m0 1v1m0 3v1m0 30v1m0 116v1m0 101v1m0 1v3m0 36v1m0 40v3M514.5 215v1m0 11v1m0 2v1m0 57v1m0 1v1m0 1v1m0 5v1m0 7v1m0 163v1m0 1v1m0 125v2m0 39v2m0 3v1m0 1v1m0 3v3m0 21v2m0 4v2m0 3v3m0 3v1m0 10v1M515.5 196v1m0 5v1m0 5v1m0 31v1m0 1v1m0 4v1m0 1v1m0 64v1m0 14v1m0 63v2m0 115v1m0 32v2m0 31v2m0 87v1m0 14v2m0 3v3m0 3v3m0 3v1m0 22v1m0 3v2M516.5 206v1m0 42v2m0 1v1m0 1v1m0 7v1m0 2v1m0 73v2m0 48v2m0 32v1m0 135v2m0 32v3m0 3v3m0 3v1m0 29v2m0 3v2m0 7v1M517.5 220v1m0 17v1m0 28v1m0 1v1m0 1v1m0 8v1m0 1v1m0 64v1m0 10v1m0 4v2m0 52v1m0 40v1m0 156v1m0 3v1m0 2v3m0 4v2m0 9v2m0 4v2m0 4v2m0 4v3m0 2v1m0 2v1m0 5v1m0 8v1m0 34v1M518.5 238v1m0 11v1m0 1v1m0 1v3m0 27v2m0 1v1m0 1v1m0 1v1m0 3v1m0 2v1m0 4v1m0 98v1m0 95v1m0 1v1m0 215v1m0 9v1M519.5 255v1m0 1v1m0 1v1m0 7v1m0 2v1m0 1v1m0 32v1m0 11v1m0 81v1m0 16v2m0 16v2m0 46v1m0 1v1m0 60v1m0 1v2M520.5 274v1m0 1v1m0 1v1m0 1v1m0 4v1m0 4v1m0 33v1m0 23v1m0 98v2m0 113v2m0 42v1m0 1v1M521.5 213v1m0 78v1m0 1v1m0 2v1m0 5v1m0 7v2m0 33v1m0 9v2m0 3v1m0 10v2m0 84v1m0 118v1m0 3v1m0 40v3m0 3v3m0 30v1m0 4v2m0 4v3M522.5 222v1m0 7v1m0 79v1m0 7v1m0 13v1m0 49v1m0 16v1m0 96v1m0 29v1m0 32v1m0 85v1m0 8v2m0 3v3m0 4v2m0 4v3m0 3v3m0 3v3m0 3v1m0 8v1m0 18v1m0 7v1M523.5 253v1m0 1v1m0 99v1m0 56v2m0 161v3m0 3v3m0 34v3m0 8v1M524.5 260v1m0 8v1m0 1v1m0 2v1m0 93v1m0 74v2m0 22v1m0 1v1m0 127v2m0 7v2m0 5v1m0 4v1m0 5v3m0 3v3m0 4v2m0 6v1m0 15v3m0 3v3m0 4v3m0 3v1m0 1v1m0 18v1m0 2v1M525.5 276v1m0 1v1m0 9v1m0 1v1m0 1v1m0 84v1m0 13v1m0 17v1m0 46v1m0 1v1m0 50v1m0 2v1m0 166v1m0 18v1m0 2v1m0 18v1M526.5 249v1m0 3v1m0 4v2m0 1v1m0 33v1m0 1v1m0 1v1m0 7v1m0 7v1m0 89v2m0 15v1m0 1v1m0 136v1m0 1v2M527.5 203v1m0 9v1m0 51v1m0 1v2m0 8v1m0 1v1m0 34v1m0 6v1m0 1v1m0 1v3m0 107v1m0 20v1m0 23v1m0 1v2m0 94v2m0 46v1m0 1v1M528.5 284v1m0 1v1m0 6v1m0 1v1m0 2v1m0 49v1m0 11v1m0 164v1m0 1v2m0 69v1m0 3v2m0 40v2m0 6v1m0 4v2m0 3v2m0 4v2m0 4v3m0 3v3m0 3v3m0 3v3m0 25v1M529.5 201v1m0 98v1m0 2v1m0 1v1m0 1v1m0 12v1m0 37v1m0 148v1m0 1v2m0 30v2m0 32v1m0 3v1m0 2v3m0 92v1m0 1v1m0 45v1M530.5 209v1m0 1v1m0 44v1m0 1v1m0 6v1m0 1v1m0 2v1m0 48v1m0 13v1m0 10v1m0 52v1m0 3v1m0 161v1m0 28v2m0 3v2m0 4v1m0 1v1m0 4v2m0 16v2m0 4v2m0 4v2m0 4v1m0 4v1M531.5 236v2m0 34v1m0 1v1m0 1v1m0 6v1m0 2v1m0 1v1m0 52v1m0 1v1m0 7v1m0 3v1m0 11v1m0 59v1m0 3v1m0 192v1m0 2v1m0 6v2m0 4v2m0 4v2m0 4v2m0 4v2m0 4v2m0 6v1m0 8v1m0 45v2M532.5 249v1m0 5v1m0 1v1m0 34v1m0 2v1m0 6v1m0 6v1m0 131v1m0 21v1m0 246v1m0 4v1m0 1v1m0 3v1m0 1v1m0 4v1M533.5 261v1m0 2v1m0 8v1m0 1v1m0 32v1m0 7v1m0 14v2m0 59v2m0 11v1m0 1v1m0 1v1m0 15v1m0 115v1M534.5 279v1m0 2v1m0 4v1m0 1v1m0 1v1m0 1v1m0 37v1m0 7v1m0 3v1m0 76v1m0 1v1m0 40v1m0 54v2m0 1v1m0 35v2m0 37v3m0 3v1M535.5 206v1m0 91v1m0 1v1m0 2v1m0 203v1m0 64v1m0 3v2m0 39v3m0 6v1m0 4v2m0 13v1m0 5v2m0 4v3m0 4v3m0 4v2m0 11v1m0 4v2M536.5 210v1m0 106v1m0 7v2m0 1v2m0 48v1m0 12v1m0 98v1m0 31v2m0 28v3m0 2v1m0 100v3m0 4v3m0 4v3m0 4v3m0 24v1m0 10v3M537.5 229v1m0 5v2m0 1v1m0 109v2m0 1v1m0 11v1m0 58v2m0 1v2m0 17v3m0 89v1m0 3v2m0 24v1m0 4v2m0 5v3m0 4v2m0 12v2m0 4v3m0 4v3M538.5 203v1m0 42v1m0 2v2m0 125v1m0 12v1m0 94v2m0 1v1m0 107v1m0 9v3m0 4v3m0 4v3m0 4v3m0 4v3m0 3v1m0 2v1m0 13v1m0 51v1m0 3v1M539.5 223v1m0 2v1m0 33v1m0 1v1m0 4v1m0 1v2m0 2v1m0 113v1m0 1v1m0 11v1m0 18v1m0 50v1m0 2v1m0 58v1m0 144v3m0 3v1m0 23v1m0 10v1m0 1v1M540.5 226v1m0 16v1m0 27v1m0 2v1m0 1v1m0 5v1m0 3v1m0 1v1m0 1v1m0 126v1m0 95v1m0 2v2m0 73v2M541.5 254v2m0 1v1m0 35v1m0 1v1m0 1v1m0 11v1m0 139v2m0 20v1m0 25v1m0 69v1m0 3v2m0 38v2m0 4v1m0 6v3m0 24v2m0 5v2m0 4v3m0 4v1m0 16v1M542.5 202v1m0 60v2m0 7v1m0 2v1m0 1v1m0 34v1m0 1v1m0 4v1m0 1v1m0 2v1m0 7v1m0 151v1m0 1v1m0 26v2m0 33v1m0 3v1m0 88v1m0 1v1m0 9v1m0 4v2m0 4v3m0 4v3m0 4v3m0 10v1m0 25v1m0 4v2M543.5 210v1m0 71v1m0 1v1m0 6v1m0 1v1m0 2v1m0 45v1m0 1v1m0 13v1m0 177v2m0 22v2m0 4v2m0 5v2m0 4v2m0 12v2m0 4v3m0 4v2m0 4v2m0 9v1M544.5 300v1m0 2v1m0 1v1m0 4v1m0 7v1m0 48v1m0 1v1m0 14v1m0 204v1m0 9v3m0 4v3m0 4v2m0 4v3m0 4v3m0 4v1m0 1v1m0 6v1m0 16v1m0 2v1m0 3v1m0 19v1m0 2v1m0 16v1m0 10v2M545.5 247v1m0 9v1m0 62v1m0 4v1m0 70v1m0 1v3m0 295v1m0 9v1m0 17v2M546.5 221v1m0 10v1m0 33v2m0 4v1m0 2v1m0 65v1m0 23v1m0 1v1m0 45v1m0 13v1m0 3v1m0 18v1m0 1v1M547.5 281v2m0 8v1m0 1v1m0 2v1m0 67v1m0 13v1m0 64v1m0 20v1m0 29v1M548.5 203v1m0 47v1m0 49v1m0 1v1m0 1v1m0 1v1m0 2v1m0 2v1m0 94v1m0 1v1m0 16v1m0 119v1M549.5 212v1m0 61v1m0 2v2m0 1v1m0 1v1m0 38v1m0 1v1m0 2v1m0 3v1m0 10v1m0 97v2m0 2v1m0 20v1m0 58v2m0 39v2m0 40v2m0 11v1M550.5 225v1m0 1v1m0 59v1m0 1v1m0 7v1m0 1v1m0 1v1m0 3v1m0 34v3m0 7v1m0 4v1m0 98v3m0 23v1m0 27v1m0 72v3m0 8v2m0 19v2m0 5v3m0 4v3m0 4v1m0 2v1m0 3v1m0 14v3m0 4v3m0 5v2m0 5v3m0 36v3M551.5 198v1m0 11v1m0 33v1m0 1v1m0 59v1m0 2v1m0 1v1m0 3v1m0 3v1m0 1v1m0 2v1m0 42v1m0 12v1m0 13v1m0 98v1m0 2v3m0 22v2m0 4v2m0 30v3m0 151v1m0 6v1M552.5 208v1m0 46v1m0 12v1m0 1v1m0 56v1m0 1v1m0 2v1m0 1v2m0 4v1m0 7v1m0 44v2m0 12v1m0 3v1m0 130v1m0 2v1m0 1v1m0 5v2m0 4v2m0 5v2m0 5v2m0 4v1m0 2v1m0 6v1m0 3v1m0 1v2m0 4v3m0 4v3m0 4v3m0 4v3m0 4v1m0 6v1m0 6v1m0 3v3M553.5 230v1m0 10v1m0 43v1m0 1v1m0 63v1m0 7v1m0 65v1m0 14v2m0 169v1m0 2v1m0 14v1m0 2v1m0 3v1m0 2v1m0 28v1m0 17v1m0 10v1m0 17v1m0 3v3M554.5 295v1m0 1v1m0 3v1m0 3v1m0 1v1m0 2v1m0 65v1m0 14v2m0 13v1m0 49v1m0 1v1m0 50v2m0 3v1M555.5 259v1m0 6v1m0 1v1m0 5v1m0 1v1m0 38v1m0 2v1m0 1v1m0 1v1m0 3v1m0 8v1m0 68v2m0 12v1m0 3v1m0 15v1m0 59v1m0 29v3m0 42v3M556.5 277v1m0 1v1m0 1v1m0 1v1m0 7v1m0 1v1m0 1v1m0 40v1m0 2v1m0 2v1m0 3v3m0 102v1m0 4v1m0 89v1m0 1v1m0 2v1m0 4v1m0 28v3m0 4v1m0 7v3m0 5v3m0 5v2m0 6v2m0 5v3m0 5v3m0 4v3m0 16v3M557.5 232v1m0 5v1m0 58v1m0 2v1m0 2v1m0 1v1m0 4v2m0 1v1m0 2v1m0 1v1m0 1v1m0 53v1m0 117v2m0 4v2m0 24v2m0 93v1m0 6v1m0 6v1m0 5v3m0 4v3m0 6v1m0 8v1m0 4v1m0 14v1m0 14v1m0 3v1m0 3v1m0 19v2M558.5 255v1m0 65v1m0 2v1m0 1v1m0 4v1m0 8v1m0 44v1m0 1v1m0 125v1m0 3v3m0 4v2m0 5v2m0 4v3m0 4v1m0 8v1m0 4v3m0 4v3m0 5v2m0 5v3m0 4v1m0 2v1m0 3v1m0 4v2M559.5 215v1m0 4v1m0 43v1m0 8v1m0 69v1m0 2v1m0 4v2m0 4v1m0 8v1m0 64v1m0 3v1m0 18v1m0 2v1m0 111v1m0 5v1m0 6v1m0 4v1m0 14v1m0 2v1m0 7v1m0 3v1m0 3v1m0 14v1m0 11v1m0 10v1m0 11v1m0 10v1m0 7v1m0 7v1m0 1v2M560.5 234v1m0 39v1m0 6v1m0 1v1m0 2v1m0 2v1m0 77v1m0 1v1m0 9v1m0 15v1m0 51v1m0 1v1m0 19v2m0 192v1m0 3v1m0 22v1m0 3v1m0 14v1m0 12v2M561.5 260v2m0 42v1m0 1v1m0 1v1m0 2v1m0 2v1m0 94v1m0 3v1m0 14v1m0 2v1m0 53v2m0 1v2m0 26v2m0 36v1m0 1v1m0 3v1M562.5 203v1m0 57v1m0 52v1m0 1v1m0 1v1m0 2v1m0 1v1m0 1v1m0 3v1m0 4v1m0 93v1m0 37v1m0 67v1m0 4v2m0 29v3m0 13v3m0 7v1m0 7v2m0 7v2m0 6v3m0 6v3M563.5 221v1m0 6v1m0 65v1m0 2v1m0 42v1m0 1v1m0 2v1m0 3v3m0 113v1m0 17v2m0 26v2m0 4v1m0 83v2m0 4v1m0 4v1m0 2v1m0 5v3m0 6v3m0 5v4m0 5v1m0 1v1m0 14v1m0 16v1m0 3v1m0 25v1m0 8v1m0 3v1M564.5 239v1m0 64v1m0 1v2m0 2v1m0 3v1m0 2v1m0 1v1m0 41v1m0 3v1m0 5v1m0 3v1m0 15v1m0 109v2m0 2v1m0 5v2m0 5v2m0 5v3m0 4v1m0 2v1m0 4v3m0 5v3m0 5v3m0 5v3m0 5v1m0 2v1m0 9v1M565.5 258v1m0 65v1m0 2v1m0 2v1m0 7v1m0 1v1m0 2v1m0 59v2m0 2v1m0 13v2m0 1v1m0 134v1m0 12v1m0 7v1m0 2v1m0 8v1m0 4v1m0 3v1m0 3v1m0 4v1m0 3v1m0 3v1m0 4v1m0 11v1m0 8v1m0 4v1m0 33v1M566.5 231v1m0 40v1m0 7v1m0 68v1m0 2v1m0 1v2m0 4v1m0 8v1m0 52v1m0 14v1m0 26v1m0 173v2m0 13v1m0 12v1m0 3v1m0 8v1m0 12v1m0 16v1m0 5v3M567.5 233v1m0 7v1m0 49v1m0 5v2m0 76v1m0 2v1m0 2v1m0 5v2m0 13v1m0 50v1m0 1v2m0 20v2M568.5 212v1m0 48v2m0 49v1m0 5v1m0 2v1m0 2v2m0 78v1m0 6v1m0 4v1m0 1v2m0 14v1m0 2v1m0 56v2m0 2v1m0 25v3m0 4v3m0 28v2m0 11v1M569.5 329v1m0 1v1m0 4v1m0 3v1m0 2v1m0 1v1m0 88v2m0 3v1m0 3v1m0 4v1m0 24v2m0 78v3m0 5v3m0 5v3m0 5v3m0 5v3m0 21v3m0 6v2m0 6v3m0 5v3m0 5v1m0 1v1m0 5v1m0 7v1m0 2v1m0 4v1m0 7v1m0 3v1m0 2v1M570.5 200v1m0 30v1m0 68v1m0 2v1m0 2v1m0 2v2m0 38v1m0 1v1m0 2v1m0 2v1m0 3v1m0 4v1m0 102v1m0 3v2m0 4v2m0 4v2m0 4v3m0 4v3m0 5v1m0 5v2m0 5v3m0 7v2m0 98v1m0 3v1m0 24v1m0 2v1m0 4v1m0 45v3M571.5 214v1m0 98v1m0 10v1m0 2v1m0 1v2m0 48v1m0 2v1m0 2v1m0 2v1m0 2v2m0 126v3m0 4v3m0 4v3m0 7v1m0 7v1m0 3v1m0 2v1m0 4v1m0 1v1m0 5v1m0 18v1m0 11v1M572.5 219v1m0 44v1m0 68v1m0 4v1m0 1v2m0 3v1m0 3v1m0 2v1m0 2v1m0 49v1m0 4v1m0 6v2m0 6v1m0 13v1m0 142v1m0 7v1m0 7v1m0 12v1m0 7v1m0 3v1m0 3v1m0 4v4m0 24v1m0 11v1m0 24v1m0 3v1m0 4v1m0 1v2M573.5 235v1m0 12v1m0 35v1m0 5v1m0 5v1m0 1v1m0 1v1m0 60v1m0 2v1m0 2v1m0 15v1m0 53v1m0 5v1m0 9v1m0 4v1m0 23v2m0 190v2m0 5v1m0 2v1m0 4v1m0 7v1m0 8v3M574.5 251v1m0 8v1m0 45v1m0 1v1m0 1v2m0 2v1m0 3v1m0 2v1m0 2v1m0 60v1m0 3v2m0 2v1m0 2v1m0 4v1m0 1v2m0 10v1m0 61v1m0 4v1m0 13v2m0 5v3m0 28v3M575.5 274v1m0 6v1m0 4v2m0 2v1m0 38v1m0 2v1m0 1v2m0 2v1m0 1v1m0 2v1m0 2v1m0 69v1m0 1v2m0 2v2m0 3v1m0 3v2m0 7v1m0 4v1m0 3v2m0 3v1m0 1v2m0 64v1m0 5v1m0 5v3m0 5v3m0 6v3m0 16v1m0 5v3m0 6v3m0 6v3m0 6v3m0 8v1m0 5v1m0 13v1M576.5 198v1m0 99v1m0 1v1m0 3v1m0 1v1m0 2v1m0 40v1m0 3v2m0 1v2m0 1v2m0 14v1m0 1v1m0 75v2m0 9v2m0 10v2m0 5v2m0 5v2m0 5v2m0 4v1m0 84v1m0 12v1m0 8v1m0 8v1m0 8v1m0 8v1m0 8v1m0 12v1m0 8v1m0 8v1m0 13v1m0 8v1m0 12v1M577.5 207v1m0 108v2m0 1v1m0 1v1m0 5v1m0 2v1m0 1v1m0 56v1m0 17v1m0 85v1m0 4v3m0 4v3m0 5v1m0 6v1m0 7v1m0 2v1m0 7v1m0 7v1m0 17v3M578.5 219v1m0 114v1m0 3v1m0 2v1m0 7v2m0 1v1m0 2v1m0 4v1m0 47v1m0 1v2m0 10v2m0 2v2m0 17v2m0 1v1m0 94v1m0 4v1m0 7v1m0 12v1m0 3v1m0 8v1m0 3v1m0 4v5m0 4v1m0 57v1m0 4v1m0 3v1m0 5v2M579.5 199v1m0 162v1m0 1v2m0 1v2m0 4v1m0 3v1m0 67v1m0 20v1m0 161v3m0 5v1m0 3v1m0 4v1m0 3v1m0 8v1m0 8v1m0 4v1m0 3v1m0 4v1m0 3v1m0 4v1m0 3v1m0 4v4m0 6v2M580.5 207v1m0 6v1m0 41v1m0 11v1m0 119v1m0 5v1m0 2v1m0 3v1m0 3v1m0 2v1m0 76v2m0 21v2m0 6v2m0 22v2m0 12v1M581.5 235v2m0 47v1m0 139v1m0 3v1m0 3v2m0 2v1m0 1v1m0 2v2m0 3v1m0 4v2m0 3v2m0 71v2m0 3v1m0 5v2m0 6v3m0 5v3m0 6v3m0 5v1m0 8v1m0 2v1m0 5v4m0 6v3m0 6v3m0 6v1m0 1v1m0 27v1m0 4v1m0 5v1M582.5 208v1m0 42v1m0 55v1m0 1v2m0 143v1m0 8v1m0 3v3m0 4v2m0 5v2m0 4v2m0 6v2m0 5v3m0 4v1m0 108v1m0 39v1m0 8v1m0 27v1m0 9v1m0 1v2m0 5v4M583.5 320v1m0 8v1m0 2v1m0 3v1m0 167v1m0 7v1m0 7v1m0 4v1m0 7v1m0 16v1m0 2v1m0 21v1m0 4v2M584.5 240v1m0 37v1m0 2v1m0 4v1m0 7v1m0 46v1m0 2v1m0 3v1m0 2v1m0 2v1m0 2v1m0 2v1m0 193v1m0 3v1m0 25v1m0 8v1m0 8v1m0 4v4m0 5v1m0 3v1m0 22v1m0 8v1m0 4v1m0 3v1m0 4v1m0 8v1m0 8v1m0 4v1m0 3v1m0 5v3M585.5 249v1m0 57v1m0 3v1m0 1v1m0 2v1m0 50v1m0 2v1m0 2v2m0 278v4m0 5v1m0 2v1m0 9v1m0 4v1m0 3v1m0 4v1m0 3v1m0 4v2m0 1v2m0 5v4M586.5 219v1m0 50v1m0 6v1m0 2v1m0 46v1m0 8v1m0 2v1m0 2v1m0 52v2m0 2v1m0 3v1m0 21v1M587.5 280v1m0 65v1m0 4v2m0 1v2m0 5v1m0 2v1m0 3v1m0 3v2m0 49v2m0 1v1m0 3v1m0 4v1m0 4v2m0 3v2m0 17v2m0 3v1M588.5 310v1m0 6v2m0 1v1m0 57v1m0 3v1m0 3v1m0 13v2m0 61v3m0 5v1m0 7v2m0 5v3m0 27v3m0 4v1M589.5 324v1m0 6v1m0 6v1m0 1v1m0 2v1m0 2v2m0 55v1m0 4v2m0 3v1m0 3v1m0 3v2m0 3v2m0 3v2m0 3v2m0 66v1m0 11v3m0 7v3m0 7v2m0 1v1m0 6v1m0 1v2m0 8v3m0 8v4m0 8v4m0 12v1m0 5v1M590.5 226v1m0 72v1m0 52v2m0 1v2m0 8v1m0 3v1m0 2v1m0 68v2m0 4v2m0 4v1m0 12v2m0 5v2m0 5v1m0 5v1m0 77v2m0 14v1m0 3v1m0 20v1m0 3v1m0 7v1m0 11v1m0 5v1m0 11v1m0 7v1m0 12v1m0 12v1m0 17v1m0 13v1m0 4v1M591.5 203v1m0 43v1m0 13v1m0 47v1m0 5v1m0 8v1m0 2v1m0 1v1m0 48v2m0 2v1m0 3v1m0 3v1m0 13v2m0 74v1m0 2v1m0 5v4m0 5v1m0 3v1m0 5v1m0 2v1m0 6v4m0 6v1m0 9v1m0 5v2m0 143v4m0 7v6m0 8v4M592.5 263v2m0 6v1m0 73v1m0 4v1m0 2v2m0 3v1m0 48v1m0 4v2m0 3v1m0 3v2m0 2v2m0 14v1m0 82v4m0 4v1m0 16v1m0 10v1m0 5v1m0 4v1m0 29v1m0 6v1m0 17v1m0 12v6M593.5 241v1m0 45v1m0 9v1m0 60v1m0 4v1m0 2v1m0 2v1m0 2v1m0 3v1m0 3v1m0 2v1m0 2v1m0 58v2m0 4v2m0 4v2m0 5v1m0 21v1m0 115v6m0 6v1m0 5v1m0 5v1m0 12v1m0 5v1m0 6v1m0 5v1m0 6v1m0 4v1m0 7v6M594.5 201v1m0 3v1m0 6v1m0 37v1m0 15v2m0 42v1m0 3v1m0 2v2m0 72v1m0 2v1m0 3v1m0 6v2m0 3v1m0 3v1m0 6v1m0 62v1m0 1v2m0 6v2m0 7v3m0 8v1m0 7v2m0 8v2m0 8v3m0 6v1m0 4v1m0 1v2M595.5 226v1m0 4v1m0 47v1m0 4v1m0 3v1m0 39v1m0 6v1m0 2v1m0 4v1m0 2v1m0 75v1m0 4v2m0 3v1m0 3v1m0 1v1m0 3v2m0 3v2m0 4v2m0 3v1m0 76v1m0 5v1m0 2v1m0 7v1m0 1v2m0 6v1m0 10v1m0 10v1m0 4v1m0 31v1m0 3v1m0 7v1m0 3v1m0 12v1m0 12v1m0 6v1m0 6v1m0 1v4M596.5 240v1m0 8v1m0 57v1m0 43v1m0 1v1m0 2v1m0 1v2m0 8v1m0 3v1m0 2v1m0 79v1m0 2v1m0 15v1m0 12v3m0 6v3m0 6v1m0 6v2m0 101v5m0 25v1m0 4v1m0 12v1m0 25v1m0 6v1m0 12v1M597.5 255v1m0 6v1m0 48v1m0 7v1m0 7v1m0 1v2m0 3v1m0 50v2m0 2v1m0 6v1m0 3v1m0 3v1m0 3v1m0 2v1m0 88v1m0 13v1m0 3v1m0 9v1m0 4v1m0 4v1m0 15v1m0 10v1m0 10v1m0 8v2M598.5 221v1m0 9v1m0 42v1m0 4v1m0 56v1m0 13v1m0 2v1m0 2v2m0 52v1m0 5v2m0 2v2m0 4v1m0 2v2m0 4v1m0 4v1m0 4v2m0 113v2m0 2v1m0 5v1m0 5v1m0 4v1m0 5v1m0 5v1m0 5v1m0 5v1m0 5v1m0 6v5m0 7v4m0 1v1m0 6v1m0 5v1m0 12v1m0 5v1m0 6v1m0 5v1m0 13v1m0 4v1m0 7v5M599.5 243v1m0 12v1m0 33v1m0 15v2m0 3v1m0 49v2m0 6v1m0 2v1m0 6v2m0 2v1m0 2v2m0 1v1m0 60v2m0 4v2m0 5v1m0 5v2m0 21v4m0 199v4M600.5 271v1m0 46v1m0 7v1m0 2v1m0 2v1m0 58v1m0 1v1m0 3v2m0 2v2m0 6v1m0 3v2m0 2v2m0 5v1m0 62v1m0 4v3m0 6v4m0 6v3m0 9v1m0 6v4m0 7v3m0 7v4m0 14v2M601.5 219v1m0 116v1m0 3v1m0 2v1m0 2v1m0 6v1m0 2v1m0 2v1m0 72v1m0 13v2m0 4v2m0 4v1m0 114v1m0 3v1m0 18v1m0 5v1m0 24v1m0 21v1m0 4v1m0 27v1m0 7v1m0 6v1m0 6v1M602.5 242v2m0 64v1m0 4v1m0 1v2m0 2v1m0 46v1m0 2v2m0 2v1m0 3v1m0 2v1m0 6v1m0 2v1m0 75v1m0 3v1m0 14v1m0 9v3m0 6v1m0 2v1m0 9v1m0 1v2m0 121v1m0 5v1m0 13v1m0 5v1m0 7v1m0 5v1m0 7v1m0 13v1m0 7v1m0 2v3M603.5 258v1m0 6v1m0 63v1m0 5v2m0 1v2m0 1v1m0 50v1m0 2v1m0 2v2m0 2v2m0 6v2m0 12v2m0 1v1m0 109v1m0 4v1m0 15v1m0 17v1m0 4v1m0 6v1m0 5v1m0 4v1M604.5 221v1m0 125v1m0 10v1m0 2v1m0 2v1m0 2v1m0 4v1m0 56v1m0 4v1m0 4v2m0 4v1m0 17v2m0 106v5m0 18v1m0 5v1m0 18v1m0 5v1m0 7v5m0 10v3m0 9v3m0 2v1m0 7v1m0 13v1m0 5v1m0 8v6M605.5 254v2m0 45v1m0 3v1m0 71v2m0 2v1m0 2v1m0 7v1m0 3v1m0 2v2m0 69v2m0 5v3m0 6v3m0 7v1m0 19v4M606.5 213v1m0 4v1m0 38v1m0 3v1m0 61v1m0 3v1m0 1v2m0 1v2m0 73v1m0 4v1m0 7v1m0 4v2m0 3v2m0 3v2m0 79v4m0 7v4m0 7v1m0 2v1m0 7v1m0 12v4m0 9v5m0 9v1m0 3v1m0 15v1M607.5 241v1m0 47v1m0 49v1m0 2v1m0 2v1m0 8v1m0 2v1m0 2v1m0 81v1m0 21v3m0 5v2m0 6v1m0 1v1m0 4v1m0 92v1m0 13v1m0 8v1m0 14v1m0 5v1m0 9v1m0 5v1m0 16v1m0 7v1m0 9v1m0 7v1m0 8v1m0 8v1m0 10v2M608.5 202v1m0 41v1m0 71v1m0 53v1m0 3v1m0 3v1m0 2v1m0 2v1m0 3v1m0 5v1m0 83v1m0 9v1m0 23v1m0 9v1m0 23v1m0 4v1M609.5 222v1m0 2v1m0 105v1m0 2v1m0 4v1m0 2v1m0 51v1m0 4v2m0 2v2m0 2v1m0 3v2m0 3v1m0 4v1m0 3v2m0 125v1m0 5v1m0 12v1m0 4v2m0 7v1m0 6v1m0 6v1m0 7v1m0 6v1m0 7v1m0 6v1m0 8v1m0 15v1m0 8v1m0 4v3M610.5 246v1m0 54v2m0 44v1m0 3v1m0 12v2m0 2v1m0 2v2m0 54v1m0 3v1m0 3v2m0 3v2m0 10v2m0 11v2m0 163v2m0 5v1m0 8v1m0 6v2m0 8v1m0 6v1m0 9v9m0 11v2M611.5 262v1m0 50v1m0 5v1m0 2v1m0 3v1m0 52v1m0 6v1m0 3v1m0 2v1m0 3v1m0 3v1m0 2v1m0 1v1m0 65v3m0 5v3m0 6v4m0 6v3m0 8v3m0 8v3m0 7v1M612.5 207v1m0 8v1m0 57v1m0 5v1m0 4v1m0 47v1m0 2v1m0 6v1m0 2v1m0 2v1m0 56v1m0 1v1m0 4v2m0 2v1m0 9v1m0 4v1m0 4v2m0 5v2m0 69v1m0 4v1m0 3v1m0 7v4m0 25v1m0 8v1m0 3v1m0 9v2m0 3v1m0 10v1m0 4v1m0 10v1m0 5v1m0 9v1m0 8v6M613.5 242v1m0 64v1m0 50v2m0 9v1m0 2v1m0 2v1m0 5v1m0 59v1m0 26v2m0 4v3m0 6v3m0 5v1m0 107v1m0 16v1m0 5v1m0 10v1m0 6v1m0 10v1m0 6v1m0 11v1m0 18v1m0 11v8M614.5 245v1m0 6v1m0 8v1m0 56v1m0 10v1m0 1v1m0 54v1m0 3v1m0 2v2m0 6v1m0 3v2m0 3v1m0 75v1m0 19v1m0 5v1m0 10v1m0 11v1m0 11v1m0 4v1m0 5v1M615.5 218v1m0 44v2m0 9v1m0 68v1m0 2v1m0 2v1m0 3v1m0 2v1m0 2v2m0 54v1m0 2v2m0 3v1m0 4v1m0 3v1m0 5v1m0 5v1m0 4v2m0 90v1m0 4v1m0 5v1m0 6v1m0 13v1m0 6v1m0 4v2m0 9v5m0 1v2m0 7v1m0 8v1m0 7v1m0 8v1m0 8v1m0 9v1m0 8v1m0 9v1m0 9v2m0 5v4M616.5 232v1m0 15v1m0 43v1m0 71v1m0 5v1m0 9v1m0 2v2m0 2v1m0 4v1m0 58v1m0 3v2m0 6v1m0 5v2m0 5v3m0 17v2m0 7v1m0 142v7m0 11v2m0 5v2m0 11v9M617.5 321v1m0 2v1m0 77v1m0 3v1m0 3v1m0 4v2m0 3v1m0 3v1m0 3v1m0 76v4m0 7v5m0 11v1m0 7v5m0 8v5m0 9v5m0 17v1m0 4v2M618.5 206v1m0 78v1m0 3v1m0 53v1m0 1v2m0 2v1m0 2v1m0 74v2m0 10v1m0 11v2m0 4v2m0 5v2m0 4v1m0 88v1m0 12v1m0 9v1m0 5v1m0 16v1m0 10v1m0 7v1m0 9v1m0 9v1m0 19v1m0 13v1m0 9v1m0 26v5M619.5 216v1m0 6v1m0 134v1m0 14v1m0 3v1m0 2v2m0 88v1m0 30v1m0 6v1m0 3v1m0 17v1M620.5 204v1m0 38v1m0 5v2m0 64v1m0 2v1m0 2v1m0 9v1m0 6v1m0 53v1m0 3v1m0 7v2m0 3v1m0 4v1m0 101v3m0 5v1m0 11v1m0 6v1m0 5v1m0 5v1m0 7v1m0 6v1m0 6v1m0 8v1m0 16v1m0 7v1m0 9v1m0 8v2m0 3v5M621.5 206v1m0 1v1m0 140v1m0 6v2m0 2v1m0 62v2m0 3v2m0 10v2m0 4v2m0 5v2m0 140v8m0 9v1m0 7v1m0 9v2m0 7v2m0 10v1m0 8v1m0 12v11M622.5 225v1m0 2v1m0 7v1m0 37v1m0 3v1m0 8v1m0 6v1m0 76v1m0 5v1m0 7v2m0 2v1m0 3v2m0 1v1m0 58v1m0 11v3m0 6v3m0 7v3m0 10v3m0 9v1m0 5v3M623.5 241v1m0 4v1m0 5v1m0 50v1m0 112v1m0 3v1m0 4v2m0 5v2m0 69v1m0 7v5m0 9v3m0 1v2m0 9v1m0 5v1m0 11v7m0 14v2m0 4v2m0 15v1m0 13v3M624.5 265v1m0 53v1m0 3v1m0 2v1m0 5v1m0 99v1m0 2v1m0 1v1m0 3v1m0 1v1m0 3v1m0 15v1m0 8v1m0 95v2m0 7v1m0 8v1m0 15v1m0 10v1m0 18v1m0 13v2m0 18v3m0 25v4m0 15v5M625.5 293v1m0 3v1m0 3v1m0 54v1m0 5v1m0 2v2m0 106v1m0 4v1m0 3v1m0 6v1m0 11v1m0 4v1m0 8v1m0 4v1m0 8v1m0 5v1m0 6v2M626.5 228v1m0 79v1m0 6v1m0 2v1m0 2v1m0 55v1m0 5v1m0 7v2m0 2v2m0 3v1m0 2v1m0 121v4m0 23v1m0 9v1m0 10v5m0 5v1m0 11v1m0 14v1m0 12v1m0 16v2m0 18v3m0 6v11M627.5 245v1m0 9v1m0 80v1m0 2v1m0 12v1m0 61v1m0 2v1m0 4v1m0 5v1m0 4v2m0 8v1m0 181v5m0 8v3m0 19v4m0 13v6M628.5 257v1m0 13v1m0 85v1m0 15v2m0 2v2m0 67v1m0 4v3m0 12v3m0 6v2m0 7v5m0 4v1M629.5 230v1m0 2v1m0 8v1m0 51v1m0 91v1m0 1v1m0 3v1m0 3v1m0 3v1m0 4v2m0 3v1m0 6v1m0 64v2m0 4v1m0 7v2m0 2v1m0 8v1m0 4v1m0 8v6m0 10v6m0 11v1m0 8v1m0 2v4M630.5 309v1m0 6v1m0 2v1m0 2v2m0 93v2m0 15v1m0 5v1m0 1v1m0 5v1m0 107v1m0 20v1m0 9v1m0 14v2m0 14v1m0 22v1m0 17v2m0 42v4M631.5 211v1m0 7v1m0 2v1m0 60v1m0 50v1m0 5v1m0 1v2m0 112v1m0 14v1m0 15v1m0 16v1m0 7v1m0 156v32M632.5 237v1m0 58v1m0 54v1m0 3v1m0 13v2m0 2v1m0 4v1m0 133v1m0 21v1m0 6v2m0 8v1m0 19v1m0 12v1m0 12v1m0 9v4M633.5 205v1m0 45v1m0 65v1m0 2v1m0 11v1m0 52v1m0 3v1m0 3v1m0 3v1m0 2v2m0 3v1m0 6v1m0 161v10m0 13v2m0 12v2m0 18v4m0 5v11M634.5 269v1m0 6v2m0 60v1m0 15v1m0 1v1m0 61v1m0 4v1m0 4v1m0 1v1m0 3v2m0 4v2m0 4v2M635.5 236v1m0 59v1m0 9v1m0 55v1m0 18v2m0 2v1m0 63v1m0 17v1m0 2v1m0 5v4m0 7v4m0 8v4m0 7v1M636.5 210v1m0 48v2m0 3v2m0 3v1m0 51v1m0 10v1m0 5v1m0 77v1m0 4v1m0 74v3m0 35v1m0 10v2m0 4v1m0 14v1m0 7v1m0 17v1M637.5 236v1m0 40v1m0 4v1m0 7v1m0 66v1m0 8v1m0 60v1m0 7v1m0 5v1m0 5v1m0 6v1m0 14v1m0 105v1m0 16v1m0 13v1m0 25v2m0 36v37M638.5 245v1m0 6v1m0 54v1m0 2v1m0 58v1m0 8v1m0 3v1m0 4v1m0 3v1m0 6v1m0 67v2m0 1v1m0 3v1m0 9v1m0 11v1m0 12v1m0 22v1M639.5 273v1m0 62v1m0 11v1m0 52v1m0 18v1m0 4v2m0 3v1m0 1v1m0 91v1m0 7v1m0 7v1m0 8v1m0 10v11m0 13v1m0 16v2m0 17v2m0 24v4M640.5 232v1m0 15v1m0 37v1m0 4v1m0 61v1m0 8v1m0 10v1m0 60v2m0 9v1m0 12v1m0 8v4m0 11v1m0 2v2m0 136v11m0 7v7M641.5 259v1m0 62v1m0 5v1m0 56v1m0 3v1m0 12v1m0 4v1m0 74v1m0 13v1m0 10v1m0 6v1m0 13v2m0 5v2m0 16v1M642.5 219v1m0 52v1m0 19v1m0 42v1m0 3v1m0 9v1m0 9v1m0 53v1m0 3v1m0 2v1m0 13v1m0 3v1m0 12v1m0 86v1m0 15v1m0 13v2m0 26v5m0 82v2m0 20v7M643.5 232v1m0 6v1m0 55v1m0 4v1m0 3v1m0 9v1m0 135v2m0 12v1m0 4v1m0 4v1m0 11v1m0 8v1m0 6v1m0 3v3m0 161v8M644.5 209v1m0 47v1m0 12v1m0 49v1m0 8v1m0 2v1m0 7v1m0 70v1m0 4v2m0 4v2m0 79v1m0 8v1m0 8v2m0 8v2m0 12v2m0 16v2m0 22v19M645.5 224v1m0 12v1m0 39v1m0 68v1m0 82v1m0 2v1m0 5v1m0 8v1m0 4v2m0 14v1m0 6v1m0 113v12m0 15v1m0 1v35M646.5 242v1m0 53v1m0 10v1m0 9v1m0 66v1m0 7v1m0 10v1m0 67v1m0 5v1m0 3v1m0 7v1m0 4v1m0 9v1m0 2v3m0 11v3m0 1v2M647.5 207v1m0 120v1m0 7v1m0 70v1m0 20v1m0 1v1m0 5v1m0 6v2m0 83v1m0 11v1m0 8v1m0 16v1m0 17v2m0 103v2M648.5 219v1m0 131v1m0 6v1m0 6v1m0 5v1m0 1v1m0 70v1m0 1v1m0 2v1m0 3v1m0 26v1m0 160v11m0 35v3M649.5 255v1m0 59v1m0 11v1m0 49v1m0 13v1m0 5v1m0 2v1m0 6v1m0 82v2m0 7v1m0 7v1m0 7v1m0 7v2m0 9v1m0 11v1m0 11v1m0 16v2M650.5 209v1m0 6v1m0 41v1m0 13v1m0 69v1m0 4v1m0 4v1m0 61v1m0 12v1m0 3v2m0 4v1m0 1v1m0 7v2m0 111v4m0 10v3m0 30v23M651.5 280v1m0 4v1m0 11v1m0 74v1m0 3v1m0 3v1m0 66v1m0 20v1m0 10v5m0 16v1m0 2v2M652.5 259v1m0 47v1m0 6v1m0 11v1m0 63v1m0 10v1m0 98v1m0 10v1m0 7v1m0 12v2m0 10v1m0 26v2M653.5 286v1m0 44v1m0 15v1m0 1v1m0 79v1m0 5v1m0 17v1m0 2v1m0 105v7m0 71v3m0 20v4M654.5 245v1m0 43v1m0 5v1m0 65v1m0 1v1m0 8v1m0 9v1m0 1v1m0 97v1m0 6v1m0 8v1m0 6v1m0 10v1m0 10v5M655.5 214v1m0 33v1m0 65v1m0 3v1m0 2v1m0 2v1m0 10v1m0 54v1m0 14v1m0 7v1m0 4v1m0 108v2m0 10v2m0 23v11m0 17v23m0 35v4m0 22v12M656.5 221v1m0 48v1m0 15v1m0 2v1m0 65v1m0 1v1m0 4v1m0 1v1m0 56v1m0 1v1m0 5v1m0 5v1m0 8v1m0 4v3m0 5v2m0 170v21m0 28v6M657.5 237v1m0 10v2m0 3v1m0 123v1m0 3v1m0 11v1m0 81v1m0 12v1m0 4v1m0 11v7m0 13v1M658.5 211v1m0 9v1m0 4v1m0 29v1m0 11v1m0 51v1m0 104v1m0 10v1m0 79v2m0 6v1m0 10v1m0 18v1m0 23v3m0 35v4m0 23v2m0 23v1m0 12v2m0 12v1M659.5 230v1m0 4v1m0 6v1m0 3v1m0 41v1m0 10v1m0 47v1m0 14v1m0 91v1m0 29v4m0 158v2m0 19v1m0 14v2m0 9v2M660.5 207v1m0 3v1m0 41v1m0 48v1m0 18v1m0 2v1m0 53v1m0 5v1m0 18v2m0 80v1m0 6v1m0 7v1m0 8v1m0 9v1m0 12v1m0 11v2m0 18v2M661.5 218v1m0 5v1m0 48v1m0 5v1m0 61v1m0 80v1m0 19v1m0 105v5m0 11v4m0 80v5m0 22v11M662.5 209v1m0 28v1m0 6v1m0 49v1m0 7v2m0 11v1m0 44v1m0 1v1m0 7v1m0 82v1m0 9v1m0 7v1m0 1v1m0 1v1m0 11v2m0 6v1m0 4v2M663.5 213v1m0 13v1m0 93v1m0 2v1m0 62v1m0 9v1m0 6v1m0 2v1m0 1v1m0 86v1m0 15v1m0 15v2m0 62v2m0 19v4M664.5 245v1m0 41v2m0 9v1m0 49v1m0 7v1m0 64v1m0 8v1m0 2v1m0 14v1m0 4v1m0 3v1m0 104v4m0 26v2m0 16v1m0 17v1m0 11v1m0 11v1m0 9v1m0 8v1m0 9v7M665.5 212v1m0 3v1m0 36v1m0 1v1m0 52v1m0 2v1m0 13v1m0 52v1m0 2v1m0 16v1m0 2v1m0 66v1m0 13v1m0 10v1m0 9v2m0 16v2M666.5 223v1m0 6v1m0 45v1m0 10v1m0 50v1m0 11v1m0 65v1m0 13v1m0 3v1m0 6v1m0 6v1m0 70v1m0 79v2m0 16v2m0 14v1m0 10v2m0 10v2m0 7v1m0 10v7M667.5 241v1m0 57v1m0 3v1m0 2v1m0 1v1m0 5v1m0 45v1m0 13v1m0 3v1m0 73v1m0 18v1m0 7v1m0 4v1m0 12v1m0 8v5m0 147v7M668.5 206v1m0 5v1m0 48v1m0 4v1m0 58v1m0 15v1m0 49v1m0 10v1m0 18v2m0 83v1m0 14v1m0 17v3m0 56v2m0 16v2m0 15v2m0 13v9M669.5 217v1m0 68v1m0 1v2m0 63v1m0 2v1m0 21v1m0 50v1m0 9v1m0 24v1m0 2v2m0 109v5m0 12v3m0 19v2m0 15v1m0 12v1m0 10v1m0 9v2m0 7v1m0 9v7M670.5 237v1m0 2v1m0 68v2m0 1v1m0 84v1m0 12v1m0 57v1m0 13v1m0 8v2m0 9v1m0 10v1m0 16v2M671.5 211v1m0 5v1m0 47v1m0 70v1m0 9v1m0 10v1m0 59v1m0 1v1m0 2v1m0 30v1m0 3v1m0 150v5m0 9v3m0 15v3m0 6v3m0 11v9m0 11v5M672.5 229v1m0 10v1m0 40v1m0 4v2m0 1v1m0 3v1m0 7v1m0 65v1m0 88v3m0 13v1m0 22v2m0 11v3m0 12v3M673.5 214v1m0 10v1m0 19v1m0 2v1m0 4v1m0 53v2m0 1v1m0 10v1m0 75v1m0 3v1m0 7v1m0 5v1m0 5v1m0 2v1m0 89v2m0 43v7m0 17v1m0 25v1m0 11v1m0 7v1m0 9v1m0 6v1m0 8v1m0 5v1m0 7v1m0 5v1m0 12v1m0 4v1M674.5 235v1m0 1v1m0 1v1m0 9v1m0 18v1m0 4v1m0 10v2m0 52v1m0 1v1m0 10v1m0 1v1m0 1v1m0 76v3m0 12v1m0 15v1m0 12v1m0 137v6m0 10v2m0 6v1m0 8v1m0 6v1m0 7v1m0 5v1m0 7v1m0 2v3m0 7v4M675.5 213v1m0 40v1m0 2v1m0 1v1m0 46v1m0 2v1m0 1v1m0 51v1m0 5v1m0 1v1m0 10v1m0 1v1m0 102v2m0 12v3" stroke="#ff4c00" fill="none"/>
<path d="M305.5 273v1m0 26v1m0 1v1m0 171v1m0 1v1m0 1v1m0 4v1m0 8v1m0 8v1m0 53v1m0 2v1m0 1v1m0 2v1m0 2v1m0 1v1m0 2v1m0 4v2m0 1v1m0 26v1M306.5 275v1m0 11v1m0 1v2m0 23v1m0 3v2m0 11v1m0 171v1m0 1v1m0 1v1m0 4v1m0 7v1m0 4v1m0 1v1m0 1v1m0 2v1m0 57v1m0 6v1m0 2v1m0 2v1m0 2v1m0 2v1m0 2v1m0 3v1m0 4v1m0 3v1m0 2v1m0 20v1m0 2v2m0 8v1M307.5 287v1m0 3v2m0 36v1m0 13v1m0 3v1m0 184v1m0 3v1m0 6v1m0 12v1m0 2v1m0 1v1m0 2v1m0 4v1m0 78v1m0 21v1m0 15v1M308.5 302v1m0 3v1m0 11v1m0 28v1m0 3v1m0 222v1m0 3v1m0 13v1m0 2v1m0 2v1m0 2v1m0 2v1m0 2v1m0 2v1m0 2v1m0 91v1m0 20v1m0 8v1M309.5 219v1m0 98v1m0 4v1m0 6v1m0 3v1m0 34v1m0 229v1m0 6v1m0 35v1m0 28v1M310.5 196v1m0 22v1m0 114v1m0 10v1m0 37v1m0 264v1m0 13v1m0 12v1m0 11v1m0 24v1M311.5 196v1m0 152v1m0 353v1m0 28v1M312.5 430v1m0 15v1M313.5 394v1m0 51v1M314.5 413v1m0 54v1m0 30v1M315.5 259v1m0 29v1m0 9v1m0 1v1m0 150v1m0 41v1m0 2v1m0 12v1M316.5 301v1m0 1v1m0 8v1m0 2v1m0 1v1m0 131v1m0 8v1m0 9v1m0 55v1m0 2v1M317.5 278v1m0 9v1m0 1v1m0 26v1m0 1v1m0 11v1m0 1v1m0 142v1m0 1v1m0 1v1m0 1v1m0 1v1m0 21v1m0 74v1m0 2v1m0 2v1m0 32v1M318.5 290v1m0 1v1m0 9v1m0 1v1m0 28v1m0 1v1m0 1v1m0 166v1m0 1v1m0 1v1m0 1v1m0 1v1m0 12v1m0 13v1m0 59v1m0 7v1m0 2v1m0 2v1m0 2v1m0 2v1m0 2v2m0 1v2m0 1v1m0 6v1m0 2v1m0 23v2m0 2v1m0 8v1M319.5 306v1m0 1v1m0 59v1m0 162v1m0 5v1m0 1v1m0 1v1m0 2v1m0 1v1m0 1v1m0 9v1m0 20v1m0 6v1m0 60v1m0 3v1m0 28v1m0 13v1m0 31v1M320.5 319v2m0 12v1m0 3v1m0 44v1m0 191v1m0 1v1m0 2v1m0 2v1m0 1v2m0 2v1m0 10v1m0 2v1m0 17v1m0 2v1m0 2v1m0 83v1m0 3v1m0 7v1m0 3v1m0 8v1M321.5 337v1m0 3v1m0 46v1m0 13v1m0 234v1m0 19v1m0 3v1m0 8v1M322.5 414v2M323.5 373v1m0 71v1m0 7v1m0 278v1M324.5 206v1m0 199v1m0 5v1m0 40v1M325.5 411v1m0 6v1m0 9v1m0 5v1m0 55v1m0 4v1m0 13v1M326.5 239v1m0 37v1m0 1v1m0 227v1m0 12v1m0 2v1m0 21v1M327.5 279v1m0 1v1m0 13v1m0 189v1m0 48v1m0 3v1m0 1v1m0 11v1m0 1v1m0 5v1m0 1v1M328.5 306v1m0 1v1m0 176v1m0 1v1m0 1v1m0 1v1m0 1v1m0 11v1m0 10v1m0 61v1m0 2v1m0 1v1m0 2v1m0 2v1m0 2v1m0 2v1m0 2v1m0 2v1m0 2v1m0 28v1m0 1v1M329.5 265v1m0 14v1m0 1v1m0 25v1m0 1v1m0 1v1m0 9v1m0 1v1m0 186v1m0 2v1m0 1v1m0 1v1m0 1v1m0 4v1m0 7v1m0 2v1m0 16v1m0 75v1m0 2v2m0 1v1m0 23v2m0 2v2m0 2v2m0 1v2m0 2v2m0 2v2m0 13v1m0 2v1M330.5 282v1m0 1v1m0 9v1m0 1v1m0 29v1m0 1v1m0 9v1m0 211v1m0 2v1m0 1v1m0 2v1m0 1v1m0 5v1m0 3v1m0 2v1m0 19v1m0 2v1m0 4v1m0 126v2M331.5 298v1m0 1v1m0 9v1m0 1v1m0 272v1m0 34v2m0 1v2m0 2v1m0 2v1m0 2v2m0 1v2m0 2v1M332.5 312v1m0 1v1m0 1v1m0 13v1m0 33v1m0 14v1m0 248v1m0 76v1M333.5 228v1m0 98v1m0 12v2m0 35v1m0 304v1m0 30v1m0 8v1m0 3v1M334.5 234v1m0 109v1m0 14v1m0 53v1M335.5 370v1m0 5v1m0 41v1m0 16v1m0 7v1M336.5 268v1m0 114v1m0 13v1m0 5v1M337.5 225v1m0 53v1m0 122v1m0 23v1m0 52v1m0 18v1M338.5 245v1m0 35v1m0 8v1m0 2v1m0 1v1m0 143v1m0 11v1m0 44v1m0 13v1m0 22v1M339.5 295v1m0 1v1m0 9v1m0 1v1m0 1v1m0 136v1m0 7v1m0 9v1m0 56v1m0 2v1m0 45v1M340.5 282v1m0 1v1m0 23v1m0 2v1m0 1v1m0 9v1m0 3v1m0 146v1m0 9v1m0 20v1m0 58v1m0 16v1m0 1v2m0 1v2m0 31v1M341.5 284v1m0 1v1m0 9v1m0 1v1m0 39v1m0 161v2m0 1v1m0 1v1m0 1v1m0 1v1m0 1v1m0 7v1m0 1v1m0 3v1m0 13v1m0 1v1m0 59v1m0 6v2m0 2v1m0 2v1m0 2v2m0 2v1m0 2v2m0 1v2m0 10v1m0 2v1m0 14v1m0 2v2m0 2v2M342.5 193v1m0 104v1m0 1v1m0 11v1m0 1v1m0 27v1m0 14v1m0 178v1m0 2v1m0 1v1m0 2v1m0 1v1m0 2v1m0 31v2M343.5 314v1m0 3v1m0 48v1m0 13v1m0 194v1m0 1v2m0 1v2m0 1v2m0 1v2m0 1v1m0 2v1m0 2v1m0 6v1m0 2v1m0 2v1m0 3v1m0 2v1m0 2v2m0 2v1m0 2v2m0 1v1M344.5 344v1m0 42v1m0 226v1m0 7v1m0 20v1m0 1v1m0 34v1m0 9v1M345.5 190v1m0 20v1m0 136v1m0 61v1m0 6v1m0 8v1m0 238v1m0 2v1m0 34v1m0 25v1m0 3v1M346.5 190v1m0 5v1m0 175v1m0 13v1m0 62v1M347.5 465v1M348.5 220v1m0 47v1m0 2v1m0 142v1m0 6v1m0 8v1m0 62v1M349.5 270v1m0 14v1m0 153v1m0 6v1m0 10v1m0 42v1m0 19v1m0 24v1M350.5 282v1m0 4v1m0 7v1m0 158v1m0 10v1m0 6v1m0 60v1m0 1v1m0 18v2m0 4v1M351.5 270v1m0 1v1m0 38v1m0 3v1m0 164v1m0 11v1m0 22v1m0 2v1m0 50v1m0 4v1m0 1v1m0 20v2m0 1v2m0 2v1m0 29v1M352.5 272v1m0 1v1m0 11v1m0 33v1m0 5v1m0 197v1m0 5v1m0 2v1m0 81v1m0 5v1m0 2v1m0 2v1m0 2v2m0 2v1m0 2v2m0 2v1m0 9v1m0 1v1m0 5v2m0 2v2m0 2v2m0 2v2m0 2v2m0 2v2m0 17v1M353.5 288v1m0 1v1m0 9v1m0 1v1m0 28v1m0 209v2m0 2v1m0 2v1m0 1v1m0 2v1m0 1v1m0 2v1m0 1v2m0 6v1m0 2v1m0 23v1m0 99v1M354.5 302v1m0 1v1m0 1v1m0 14v1m0 27v1m0 13v1m0 217v1m0 7v1m0 2v1m0 2v1m0 2v2m0 1v1m0 2v1m0 16v1m0 2v2m0 2v1m0 2v2m0 2v1m0 2v2m0 2v2M355.5 318v1m0 13v1m0 301v1m0 23v1M356.5 340v1m0 55v1m0 5v2m0 279v1m0 41v1m0 8v1M357.5 206v1m0 13v1m0 1v1m0 212v1M358.5 222v1m0 149v1m0 14v1m0 54v1M359.5 233v1m0 234v1m0 7v1M360.5 415v1m0 15v1m0 66v1m0 2v1M361.5 242v1m0 35v1m0 168v1m0 6v1m0 62v1m0 15v1m0 6v1m0 22v2M362.5 236v1m0 43v1m0 10v1m0 1v1m0 181v1m0 21v1m0 55v1m0 20v2m0 1v2m0 30v1M363.5 295v1m0 11v1m0 1v1m0 183v1m0 20v1m0 17v1m0 2v1m0 59v2m0 2v1m0 15v1m0 2v2m0 2v1m0 3v1m0 1v2m0 28v1m0 8v1M364.5 265v1m0 16v1m0 28v1m0 1v1m0 9v1m0 3v1m0 195v1m0 1v1m0 1v1m0 13v1m0 6v1m0 2v1m0 21v1m0 3v1m0 63v1m0 13v1m0 1v1m0 25v1m0 16v1m0 12v1m0 5v1M365.5 284v1m0 2v1m0 8v1m0 1v1m0 32v1m0 232v1m0 2v1m0 2v1m0 2v1m0 1v1m0 2v1m0 2v1m0 2v1m0 3v1m0 2v1m0 1v1m0 25v2m0 98v1M366.5 213v1m0 84v1m0 1v1m0 56v1m0 7v1m0 263v1m0 15v1m0 1v2m0 2v2m0 2v2m0 2v2m0 1v2m0 12v1M367.5 319v1m0 7v1m0 50v1m0 6v1m0 282v1m0 7v1m0 9v1m0 23v1m0 5v1M368.5 239v1m0 91v1m0 3v1m0 48v1m0 5v1m0 328v2M369.5 204v1m0 144v1m0 13v1m0 57v1m0 7v1M370.5 445v1M371.5 266v1m0 136v1m0 49v1m0 33v1M372.5 244v1m0 52v1m0 120v1m0 18v1m0 56v1m0 2v1m0 4v1m0 16v1M373.5 264v1m0 48v1m0 136v1m0 60v1m0 1v1m0 44v1m0 2v2M374.5 281v1m0 1v1m0 174v1m0 12v1m0 78v1m0 17v1m0 2v1m0 33v1m0 3v1M375.5 285v1m0 11v1m0 1v1m0 189v1m0 18v1m0 2v1m0 75v2m0 3v1m0 2v1m0 12v1m0 2v2m0 1v2m0 2v1m0 6v1m0 2v1m0 24v2M376.5 299v1m0 1v1m0 1v1m0 9v1m0 47v1m0 5v1m0 154v1m0 13v1m0 1v1m0 6v2m0 22v1m0 3v1m0 63v1m0 11v1m0 18v1m0 28v1m0 10v1M377.5 329v1m0 50v2m0 177v1m0 1v1m0 2v1m0 1v1m0 2v1m0 2v1m0 2v1m0 2v1m0 4v1m0 2v1m0 3v1m0 22v1m0 1v2m0 3v1m0 93v1M378.5 200v1m0 132v1m0 13v1m0 257v1m0 7v1m0 1v1m0 28v1m0 2v2m0 2v1m0 2v2m0 2v2m0 17v1M379.5 408v1m0 8v1m0 6v1m0 228v1m0 2v1m0 31v1m0 16v1m0 5v1m0 6v1M380.5 433v1m0 10v1m0 269v2m0 11v2M381.5 276v1m0 115v1m0 24v1m0 61v1m0 13v1M382.5 278v1m0 11v1m0 1v1m0 121v1m0 16v1m0 73v1m0 4v1m0 20v1M383.5 292v1m0 1v1m0 175v2m0 49v1m0 18v1m0 1v1m0 29v1M384.5 277v1m0 4v1m0 25v1m0 12v1m0 5v2m0 157v1m0 15v1m0 79v1m0 2v1m0 2v1M385.5 279v1m0 4v1m0 9v1m0 1v1m0 28v1m0 19v1m0 150v1m0 22v1m0 18v1m0 3v1m0 65v1m0 17v1m0 2v2m0 2v2m0 1v1m0 7v2m0 19v1m0 2v2m0 2v1M386.5 296v1m0 1v1m0 11v1m0 3v1m0 213v1m0 2v1m0 17v1m0 7v1m0 24v2m0 3v1m0 66v1m0 32v1m0 46v1M387.5 385v1m0 185v1m0 1v2m0 1v1m0 2v2m0 1v2m0 2v1m0 2v1m0 2v1m0 9v2m0 26v2m0 83v1M388.5 330v1m0 12v1m0 6v1m0 275v1m0 38v2m0 26v1m0 4v1M389.5 198v1m0 43v3m0 2v1m0 429v1m0 24v1m0 22v1M390.5 244v1m0 146v1m0 55v1M391.5 272v1m0 1v1m0 180v1m0 15v1m0 3v1m0 16v1M392.5 231v1m0 42v1m0 1v1m0 11v1m0 1v1m0 122v1m0 7v1m0 64v1m0 15v1m0 25v1m0 1v1M393.5 259v1m0 2v1m0 1v2m0 24v1m0 1v1m0 2v1m0 6v1m0 166v1m0 70v1m0 4v1M394.5 264v1m0 9v1m0 2v1m0 1v1m0 31v1m0 13v1m0 152v2m0 3v1m0 18v1m0 81v2m0 2v1m0 32v1M395.5 279v1m0 1v1m0 11v1m0 1v1m0 26v1m0 6v1m0 181v1m0 2v1m0 1v3m0 20v1m0 62v1m0 4v2m0 13v1m0 2v2m0 2v1m0 2v2m0 7v1m0 1v2m0 19v1m0 2v2m0 2v2M396.5 292v1m0 2v1m0 10v1m0 49v1m0 174v1m0 17v1m0 7v1m0 24v2m0 95v1m0 12v1m0 17v1m0 8v1m0 8v1M397.5 217v1m0 106v1m0 36v1m0 209v1m0 1v1m0 2v1m0 2v1m0 2v1m0 3v1m0 2v1m0 2v1m0 2v2m0 8v1m0 24v1m0 2v1m0 84v1m0 13v1M398.5 194v1m0 31v1m0 5v1m0 95v1m0 5v1m0 73v1m0 213v1m0 7v1m0 2v1m0 10v1m0 1v1m0 21v1m0 5v1M399.5 194v1m0 1v1m0 5v1m0 158v1m0 43v1m0 9v1m0 18v1m0 236v1m0 24v1m0 8v1M400.5 441v1M401.5 271v1m0 1v1m0 123v1m0 57v1m0 14v1m0 5v1m0 16v1M402.5 246v1m0 26v1m0 3v1m0 8v1m0 1v1m0 151v1m0 63v1m0 27v1M403.5 251v1m0 38v1m0 1v1m0 9v1m0 3v1m0 141v1m0 20v1m0 73v1m0 31v2M404.5 259v1m0 16v1m0 29v1m0 3v1m0 173v1m0 75v1m0 27v2m0 35v1M405.5 278v1m0 1v1m0 62v1m0 152v1m0 20v3m0 21v1m0 68v2m0 25v2m0 6v2m0 2v1m0 22v1m0 2v3m0 4v1m0 1v1M406.5 202v1m0 104v1m0 3v1m0 44v1m0 172v1m0 1v1m0 20v1m0 33v1m0 4v1m0 83v1m0 30v1M407.5 315v1m0 281v1m0 2v2m0 5v2m0 26v1m0 2v1m0 6v1M408.5 203v1m0 187v1m0 17v1m0 217v1m0 2v2m0 2v2m0 2v2m0 2v2m0 2v1m0 21v2m0 2v3m0 2v1m0 10v1m0 15v1M409.5 199v1m0 3v1m0 12v1m0 33v1m0 118v1m0 305v1m0 47v1M410.5 216v1m0 1v1m0 33v1m0 2v1m0 10v1m0 3v1m0 96v1m0 14v2m0 7v1m0 39v1M411.5 246v1m0 21v1m0 3v2m0 12v1m0 185v1m0 4v1m0 18v1M412.5 240v1m0 43v1m0 12v1m0 5v1m0 205v1m0 2v1M413.5 276v1m0 23v1m0 14v1m0 122v1m0 18v1m0 63v1m0 1v1m0 25v2m0 27v1m0 4v1M414.5 275v1m0 11v1m0 1v1m0 2v1m0 26v1m0 13v1m0 5v1m0 126v1m0 21v1m0 75v2m0 26v1m0 2v2m0 33v1M415.5 291v1m0 1v1m0 9v1m0 1v1m0 1v1m0 28v1m0 23v1m0 135v1m0 19v1m0 2v1m0 3v1m0 21v1m0 63v1m0 5v1m0 2v1m0 19v2m0 2v3m0 10v2m0 3v2m0 2v2m0 3v2m0 2v2m0 3v2M416.5 218v1m0 88v1m0 3v1m0 13v1m0 54v1m0 151v2m0 22v2m0 5v1m0 26v1m0 105v1M417.5 230v1m0 9v1m0 1v1m0 331v1m0 4v1m0 20v2m0 2v2m0 10v1m0 23v2m0 8v2M418.5 202v1m0 39v1m0 1v1m0 10v1m0 1v1m0 143v1m0 9v1m0 7v1m0 11v1m0 203v2m0 3v2m0 14v1m0 50v1M419.5 256v2m0 1v1m0 11v1m0 1v1m0 113v1m0 38v1m0 11v2m0 5v1m0 12v1m0 227v1m0 28v1m0 9v1m0 5v1M420.5 275v1m0 11v1m0 1v1m0 121v1m0 40v1m0 38v1M421.5 291v1m0 1v1m0 9v1m0 3v1m0 110v1m0 7v1m0 10v1m0 70v1m0 21v1m0 1v1M422.5 277v1m0 29v1m0 3v1m0 135v1m0 3v1m0 15v1m0 73v2m0 34v1M423.5 279v1m0 11v1m0 184v1m0 6v1m0 17v1m0 86v2m0 2v1m0 34v1M424.5 308v1m0 3v1m0 45v1m0 132v1m0 22v2m0 2v1m0 21v1m0 69v2m0 22v1m0 2v2m0 10v2m0 15v2m0 2v3m0 2v2m0 14v1M425.5 388v1m0 138v2m0 22v1m0 34v2m0 72v2m0 21v1m0 8v1m0 8v1m0 25v2M426.5 336v2m0 14v1m0 61v1m0 158v1m0 23v1m0 2v1m0 7v1m0 26v1m0 2v1m0 1v1m0 4v1M427.5 348v1m0 23v1m0 255v1m0 2v1m0 3v1m0 3v1m0 3v2m0 2v2M428.5 213v1m0 164v1m0 16v1m0 58v1m0 16v2m0 243v1M429.5 284v1m0 1v1m0 122v1m0 11v1m0 59v1m0 2v1m0 1v1m0 20v1M430.5 288v1m0 11v1m0 1v1m0 1v1m0 213v1m0 1v1M431.5 274v1m0 29v1m0 4v1m0 7v1m0 6v1m0 118v1m0 37v1m0 52v2m0 23v1m0 2v1m0 33v1m0 1v2M432.5 276v1m0 12v1m0 1v1m0 29v1m0 5v1m0 6v1m0 7v2m0 147v1m0 4v1m0 81v2m0 28v2m0 2v2m0 2v1m0 31v1M433.5 221v1m0 3v1m0 67v1m0 1v1m0 9v1m0 1v1m0 1v1m0 30v1m0 164v1m0 27v1m0 25v1m0 71v1m0 1v1m0 2v2m0 10v2m0 2v2m0 3v2m0 2v2m0 20v2m0 4v1m0 15v1m0 8v1m0 3v1M434.5 223v1m0 1v1m0 83v1m0 3v1m0 233v1M435.5 392v2m0 17v1m0 177v1m0 4v2m0 22v1m0 2v2m0 10v2m0 2v1m0 8v1m0 2v2m0 3v1m0 3v2M436.5 269v1m0 83v1m0 6v1m0 64v1m0 11v1m0 206v1m0 8v1m0 1v1m0 12v1m0 17v1M437.5 271v1m0 10v1m0 1v1m0 1v1m0 79v1m0 79v1m0 276v1M438.5 257v2m0 27v1m0 1v1m0 15v2m0 111v1m0 61v1m0 1v1M439.5 257v2m0 1v1m0 11v1m0 246v1m0 27v1M440.5 274v1m0 1v1m0 11v1m0 32v1m0 207v1m0 28v1m0 2v2m0 30v1m0 2v1M441.5 198v1m0 91v1m0 4v1m0 13v1m0 30v1m0 14v1m0 114v1m0 17v1m0 2v1m0 1v1m0 20v1m0 1v1m0 59v1m0 28v2m0 6v2m0 28v1m0 9v1M442.5 306v1m0 21v1m0 48v1m0 124v1m0 22v1m0 5v1m0 24v1m0 76v2m0 3v1m0 7v2m0 2v2m0 2v2m0 3v1m0 55v2M443.5 326v1m0 85v1m0 156v2m0 1v1m0 3v1m0 29v1m0 105v1M444.5 209v1m0 38v1m0 6v2m0 4v1m0 107v1m0 69v1m0 152v1m0 2v1m0 19v1m0 2v2m0 10v2m0 3v1m0 3v2m0 2v2m0 2v2m0 2v2m0 3v2M445.5 366v1m0 67v1m0 13v2m0 2v1m0 200v1m0 12v1m0 17v1m0 10v1m0 22v1M446.5 276v1m0 1v1m0 2v1m0 6v1m0 5v1m0 105v1m0 6v1m0 55v1m0 17v1M447.5 245v1m0 45v1m0 1v1m0 1v1m0 9v1m0 121v2m0 65v1m0 56v1M448.5 277v1m0 1v1m0 162v1m0 89v1m0 30v2M449.5 281v1m0 1v1m0 2v1m0 6v1m0 1v1m0 1v1m0 30v1m0 21v1m0 121v1m0 103v2m0 1v1m0 34v2m0 2v1M450.5 297v1m0 4v1m0 7v1m0 5v1m0 31v1m0 7v2m0 14v2m0 133v1m0 26v1m0 26v1m0 100v2m0 2v3m0 20v1m0 6v1m0 6v1M451.5 313v1m0 8v1m0 6v1m0 66v1m0 150v1m0 27v2m0 2v2m0 30v2m0 80v1m0 26v1M452.5 596v1m0 27v2m0 8v1m0 2v2m0 16v1m0 3v2m0 2v2M453.5 255v1m0 107v1m0 6v1m0 277v1m0 11v1m0 2v2m0 3v1m0 5v1M454.5 280v1m0 105v1m0 17v1m0 312v1M455.5 284v1m0 1v1m0 8v1m0 1v1m0 120v1m0 82v1M456.5 266v1m0 35v1m0 1v1m0 8v1m0 131v1m0 17v2m0 46v1m0 1v1m0 24v1m0 2v2m0 30v1M457.5 285v1m0 38v1m0 129v2m0 19v1m0 22v1m0 1v1m0 52v1m0 2v1m0 29v1m0 36v2M458.5 289v1m0 1v1m0 1v1m0 6v1m0 4v1m0 31v1m0 22v1m0 126v1m0 22v2m0 1v1m0 26v2m0 65v1m0 32v1m0 1v1m0 6v2m0 17v1m0 3v2m0 2v2M459.5 303v1m0 14v1m0 7v1m0 31v1m0 15v1m0 151v1m0 29v1m0 104v1m0 14v2M460.5 251v1m0 129v1m0 15v2m0 167v1m0 4v1m0 27v2m0 6v2m0 28v2M461.5 252v1m0 89v2m0 13v1m0 261v1m0 9v1m0 12v2m0 2v2m0 3v2m0 24v1m0 6v1M462.5 229v1m0 217v1m0 3v1m0 18v1m0 1v1m0 208v1m0 4v1m0 30v1M463.5 240v1m0 47v1m0 2v1m0 9v1m0 5v1m0 200v3M464.5 256v1m0 47v1m0 1v1m0 3v1m0 101v2m0 12v2m0 66v2m0 26v1M465.5 280v1m0 8v1m0 1v1m0 31v1m0 6v1m0 6v1m0 102v1m0 93v1m0 29v2m0 34v1M466.5 290v1m0 2v1m0 12v1m0 163v2m0 21v1m0 85v1m0 2v1m0 32v1m0 2v1m0 1v1m0 2v1m0 29v2M467.5 218v1m0 105v1m0 6v1m0 60v1m0 141v1m0 107v3m0 17v2m0 3v3m0 27v1m0 28v2M468.5 344v1m0 44v1m0 29v1m0 129v1m0 28v2m0 3v1m0 31v1m0 3v1M469.5 202v1m0 39v1m0 116v1m0 235v1m0 2v1m0 2v2m0 26v3m0 12v2m0 3v2m0 3v2m0 3v2m0 3v2m0 3v1m0 8v1M470.5 228v1m0 27v1m0 185v1m0 20v1m0 20v1m0 1v1m0 169v1m0 1v1m0 65v1M471.5 239v1m0 3v1m0 169v1m0 83v1M472.5 259v1m0 27v1m0 1v1m0 10v1m0 1v1m0 233v2m0 30v2M473.5 304v1m0 4v1m0 159v1m0 3v1m0 21v1m0 54v2m0 1v1m0 32v1m0 35v1m0 1v1m0 1v1M474.5 288v1m0 1v1m0 2v1m0 28v1m0 6v1m0 14v1m0 163v2m0 93v1m0 1v1m0 31v1m0 7v1m0 4v3m0 8v1m0 3v2m0 2v3m0 2v3m0 4v1m0 4v1m0 5v1M475.5 292v1m0 1v1m0 10v1m0 3v1m0 212v2m0 25v2m0 2v1m0 29v1m0 2v1m0 75v1m0 11v3m0 2v1M476.5 200v1m0 28v1m0 79v1m0 19v1m0 51v1m0 9v1m0 172v1m0 32v1m0 2v1m0 4v2m0 38v1M477.5 222v1m0 36v1m0 127v1m0 235v1m0 1v1m0 2v1m0 14v1m0 3v2m0 3v2m0 2v1m0 11v1m0 11v1M478.5 276v2m0 424v1m0 6v1M479.5 232v1m0 61v1m0 1v1m0 144v1m0 21v2M480.5 266v1m0 31v1m0 1v1m0 10v1m0 84v1m0 32v1m0 44v1m0 23v1M481.5 267v1m0 48v1m0 12v1m0 6v1m0 102v1m0 72v1m0 26v2m0 34v1M482.5 299v1m0 1v1m0 48v1m0 120v1m0 2v1m0 78v1m0 1v2m0 30v1m0 3v2m0 32v1M483.5 303v1m0 1v1m0 78v1m0 98v1m0 26v1m0 98v2m0 32v2m0 12v2m0 3v2m0 2v2m0 3v2m0 3v2m0 3v1M484.5 321v1m0 6v1m0 6v1m0 61v1m0 12v1m0 111v1m0 1v1m0 28v1m0 37v1m0 81v1m0 11v1m0 11v1m0 25v1M485.5 219v1m0 200v1m0 150v1m0 30v2m0 7v2m0 26v2M486.5 202v1m0 7v1m0 37v2m0 142v1m0 57v3m0 1v1m0 175v2m0 17v2m0 2v3m0 2v3m0 6v1m0 16v1M487.5 255v1m0 144v1m0 5v1m0 12v2m0 66v2m0 224v1m0 1v1M488.5 272v1m0 7v1m0 133v1m0 13v1m0 3v1m0 94v2m0 29v1M489.5 284v1m0 1v1m0 10v1m0 1v1m0 3v1m0 137v1m0 99v1m0 33v2m0 33v1M490.5 271v1m0 30v1m0 3v1m0 166v1m0 26v1m0 93v2m0 32v1m0 6v1m0 2v2m0 18v2m0 3v2m0 2v2m0 11v1M491.5 281v1m0 3v1m0 1v1m0 32v1m0 6v1m0 5v2m0 175v2m0 29v2m0 29v2m0 83v1m0 1v1m0 2v3m0 2v3m0 2v3m0 2v3m0 49v1M492.5 231v1m0 57v1m0 1v1m0 1v1m0 5v1m0 2v1m0 4v1m0 31v1m0 218v2m0 27v1m0 8v2m0 27v2m0 5v1m0 91v1M493.5 307v1m0 12v1m0 6v1m0 50v1m0 12v1m0 216v1m0 6v2m0 23v2m0 2v1m0 19v2m0 12v1m0 22v1M494.5 208v1m0 53v1m0 72v1m0 51v1m0 11v2m0 320v1M495.5 373v2m0 78v1M496.5 284v1m0 14v1m0 1v1m0 68v1m0 15v1m0 78v1m0 23v1M497.5 255v1m0 11v1m0 36v1m0 1v1m0 1v1m0 85v1m0 13v1m0 5v1m0 15v1m0 102v1M498.5 279v1m0 9v1m0 57v1m0 95v1m0 101v1m0 33v2M499.5 216v1m0 78v1m0 1v1m0 6v1m0 2v1m0 1v1m0 33v1m0 109v1m0 20v1m0 120v1m0 3v2m0 35v1M500.5 311v1m0 4v1m0 13v1m0 288v3m0 30v1m0 3v1m0 14v1m0 5v2m0 3v1m0 6v1m0 26v1M501.5 196v1m0 16v1m0 116v1m0 6v1m0 6v1m0 80v1m0 100v2m0 1v1m0 30v2m0 33v3M502.5 261v1m0 5v1m0 82v1m0 16v1m0 9v1m0 80v1m0 121v1m0 30v2m0 9v1m0 3v1m0 20v2m0 3v3m0 11v1M503.5 391v1m0 80v2m0 161v1m0 11v2m0 3v3m0 2v3m0 3v2m0 10v1m0 20v1m0 17v1m0 2v1M504.5 293v2m0 8v1m0 1v1m0 1v1m0 107v1m0 4v1m0 14v1m0 49v1m0 25v2m0 27v1m0 171v1M505.5 271v1m0 38v1m0 1v1m0 8v2m0 6v1m0 99v1m0 15v1m0 24v3m0 50v2m0 1v1m0 28v1m0 3v2m0 31v1M506.5 204v1m0 75v1m0 7v1m0 40v1m0 6v1m0 145v1m0 91v1m0 34v1m0 5v1m0 2v1m0 5v1m0 22v1m0 4v2m0 12v1M507.5 296v2m0 1v1m0 13v1m0 37v1m0 14v1m0 129v1m0 26v1m0 2v2m0 31v1m0 80v1m0 5v3m0 3v2m0 3v3m0 3v2m0 3v1m0 46v1M508.5 229v1m0 7v1m0 3v1m0 78v1m0 2v1m0 49v1m0 11v1m0 19v1m0 136v1m0 28v1m0 1v1m0 4v1m0 30v3m0 2v1m0 3v1m0 98v1M509.5 335v1m0 23v2m0 40v1m0 189v1m0 6v2m0 15v2m0 3v3m0 3v2m0 8v1m0 2v1m0 13v1m0 18v1m0 17v1M510.5 229v1m0 4v1m0 30v1m0 101v1m0 289v1m0 14v1m0 39v2m0 4v1m0 4v1M511.5 246v1m0 36v1m0 99v1m0 10v2m0 17v1m0 70v1m0 29v1M512.5 269v1m0 33v1m0 11v1m0 2v1m0 104v1m0 3v1m0 1v1m0 17v1m0 48v1m0 1v1m0 28v1m0 30v2M513.5 219v1m0 49v1m0 55v1m0 1v1m0 5v1m0 8v2m0 94v2m0 17v1m0 82v1m0 34v2m0 4v1m0 34v1m0 8v1M514.5 302v1m0 1v1m0 2v2m0 33v1m0 7v1m0 15v1m0 106v1m0 50v1m0 70v2m0 6v2m0 28v2m0 3v1m0 17v3m0 3v3m0 3v2m0 30v1M515.5 204v1m0 100v1m0 3v1m0 1v1m0 3v1m0 3v1m0 1v1m0 4v1m0 186v1m0 25v1m0 38v1m0 87v1m0 6v1m0 2v1m0 2v1M516.5 224v1m0 34v1m0 3v1m0 4v1m0 59v1m0 6v1m0 5v1m0 215v1m0 3v1m0 26v2m0 16v1m0 4v2m0 4v2m0 4v2m0 3v3m0 3v1m0 10v1M517.5 284v1m0 1v1m0 87v2m0 43v1m0 15v1m0 1v1m0 1v1m0 188v1m0 5v3m0 5v1m0 5v1m0 5v1m0 66v1M518.5 239v1m0 5v1m0 54v1m0 102v1m0 44v1m0 1v1m0 19v2m0 224v1m0 1v1m0 11v1M519.5 268v1m0 38v1m0 2v1m0 13v1m0 73v1m0 34v1m0 79v2M520.5 287v2m0 42v1m0 14v1m0 97v1m0 83v2m0 27v1m0 3v1m0 36v2m0 3v1m0 3v1M521.5 304v1m0 1v1m0 1v1m0 1v1m0 170v1m0 3v1m0 24v1m0 2v1m0 64v1m0 6v2m0 29v3m0 16v2m0 4v2m0 4v3m0 3v3m0 3v2m0 22v1M522.5 309v1m0 1v1m0 1v1m0 1v1m0 17v1m0 52v1m0 112v2m0 24v1m0 4v2m0 26v1m0 137v1m0 5v1m0 5v1m0 3v1m0 12v1M523.5 204v1m0 127v1m0 6v3m0 14v1m0 73v1m0 1v1m0 110v1m0 2v2m0 22v1m0 16v3m0 3v3m0 4v2m0 4v2m0 4v2m0 13v2M524.5 354v1m0 15v1m0 55v1m0 39v1m0 135v1m0 2v1m0 6v1m0 6v2m0 15v1m0 5v1m0 5v1m0 24v1m0 34v2M525.5 280v1m0 6v1m0 6v1m0 100v1m0 84v1m0 27v1m0 195v1m0 17v1M526.5 199v1m0 55v1m0 8v1m0 35v1m0 8v1m0 2v1m0 110v1m0 17v1m0 81v2M527.5 317v1m0 1v1m0 9v1m0 4v1m0 1v1m0 118v1m0 88v2m0 38v2m0 34v2M528.5 301v1m0 35v1m0 4v1m0 1v1m0 5v1m0 7v1m0 136v1m0 28v1m0 76v1m0 6v2m0 11v1m0 4v2m0 4v2m0 4v2m0 6v1m0 17v1m0 5v1m0 42v1M529.5 197v1m0 11v1m0 101v1m0 3v1m0 1v1m0 39v1m0 150v1m0 27v1m0 3v1m0 5v2m0 26v1m0 103v1m0 48v1M530.5 322v1m0 2v1m0 1v1m0 7v1m0 59v1m0 18v1m0 1v1m0 142v1m0 2v1m0 1v1m0 3v2m0 4v2m0 4v2m0 4v2m0 21v1m0 6v2m0 4v2m0 21v1m0 2v1m0 6v2M531.5 243v1m0 34v1m0 6v1m0 82v1m0 60v2m0 202v1m0 5v1m0 26v1m0 8v1m0 11v1m0 35v1M532.5 252v1m0 7v1m0 32v1m0 4v1m0 5v1m0 2v1m0 59v1m0 25v1m0 1v1m0 47v1m0 47v1m0 224v1m0 5v1M533.5 272v1m0 5v1m0 32v2m0 1v1m0 9v1m0 4v1m0 81v1m0 15v1m0 75v2M534.5 295v1m0 1v1m0 36v1m0 1v1m0 99v1m0 6v1m0 78v1m0 27v3m0 3v1m0 34v1M535.5 308v1m0 1v1m0 1v1m0 2v1m0 39v1m0 7v1m0 91v2m0 16v2m0 3v2m0 24v1m0 68v1m0 1v1m0 2v1m0 4v2m0 12v2m0 4v3m0 4v3m0 10v1m0 6v1m0 2v1m0 4v2m0 4v2m0 5v1M536.5 204v1m0 115v1m0 1v1m0 1v1m0 5v1m0 1v1m0 4v1m0 1v1m0 55v1m0 1v1m0 11v1m0 1v1m0 82v1m0 21v2m0 28v2m0 100v1m0 5v1m0 44v1M537.5 340v1m0 1v1m0 2v1m0 1v1m0 5v1m0 70v1m0 114v1m0 6v2m0 4v2m0 4v3m0 4v1m0 11v1m0 6v1m0 6v3m0 4v1M538.5 255v1m0 107v1m0 8v1m0 83v2m0 28v1m0 109v2m0 3v1m0 30v1m0 30v1m0 37v1m0 11v2M539.5 217v1m0 1v1m0 168v1m0 18v1m0 14v1m0 77v2m0 27v1m0 157v1m0 3v1m0 2v1m0 6v1m0 10v1m0 7v1M540.5 285v1m0 149v1m0 1v2m0 75v1m0 3v1m0 27v2m0 4v2m0 31v1m0 4v1m0 5v1M541.5 253v1m0 38v1m0 11v2m0 1v1m0 140v1m0 21v1m0 25v1m0 3v1m0 69v1m0 6v2m0 18v3m0 4v2m0 4v1m0 20v2m0 5v2m0 4v3m0 6v1m0 23v1M542.5 273v1m0 43v1m0 2v1m0 6v1m0 184v1m0 5v2m0 22v2m0 3v1m0 2v2m0 90v1m0 14v1m0 2v1m0 23v1m0 2v1m0 16v1m0 10v2M543.5 335v1m0 1v1m0 2v1m0 5v1m0 1v1m0 7v1m0 175v1m0 2v1m0 6v2m0 4v2m0 4v2m0 6v1m0 9v1m0 8v1m0 4v2m0 4v1m0 15v1m0 6v1M544.5 301v1m0 11v1m0 1v1m0 43v1m0 13v1m0 216v2m0 3v1m0 16v1m0 19v1m0 12v1m0 3v1m0 2v1m0 43v1m0 13v1m0 1v1M545.5 246v1m0 4v1m0 8v1m0 62v1m0 9v1m0 1v1m0 2v1m0 3v1m0 41v1m0 28v1m0 263v2m0 40v1M546.5 269v1m0 4v1m0 68v1m0 2v1m0 2v1m0 7v1m0 53v2M547.5 368v1m0 5v1m0 1v1m0 5v1m0 63v1m0 16v1m0 4v1m0 21v1M548.5 261v1m0 49v1m0 3v2m0 2v1m0 74v1m0 9v1m0 6v1m0 12v2m0 54v1m0 26v2m0 29v2M549.5 208v1m0 111v1m0 13v1m0 1v1m0 2v1m0 84v1m0 19v1m0 82v1m0 3v2m0 24v3m0 3v1m0 7v2m0 19v2m0 5v2m0 7v1m0 7v1m0 1v1M550.5 293v1m0 50v1m0 2v1m0 6v1m0 3v1m0 5v1m0 1v1m0 108v1m0 5v1m0 21v2m0 82v1m0 3v1m0 7v2m0 5v3m0 6v1m0 54v1m0 31v1M551.5 247v1m0 65v1m0 51v2m0 3v1m0 5v1m0 5v1m0 12v1m0 107v1m0 5v1m0 5v2m0 9v1m0 6v2m0 5v2m0 4v2m0 4v3m0 119v1m0 9v1m0 17v1M552.5 212v1m0 59v1m0 52v1m0 10v1m0 1v2m0 2v1m0 2v1m0 62v2m0 15v1m0 117v1m0 4v1m0 3v1m0 8v1m0 10v1m0 59v1M553.5 240v1m0 109v1m0 2v1m0 2v1m0 8v1m0 7v2m0 49v1m0 19v2m0 17v2m0 147v2m0 4v1m0 6v1m0 17v1m0 17v1m0 14v1m0 1v1m0 4v1m0 6v1m0 21v1M554.5 249v1m0 8v2m0 39v1m0 79v1m0 2v1m0 2v2m0 3v1m0 13v1m0 52v1m0 20v2m0 4v1m0 26v1m0 1v1M555.5 311v1m0 1v1m0 7v1m0 3v1m0 2v1m0 2v1m0 76v1m0 2v1m0 3v1m0 4v1m0 16v1m0 2v1m0 62v1m0 18v2m0 11v2m0 20v1m0 5v3M556.5 207v1m0 5v1m0 71v1m0 1v1m0 8v1m0 40v1m0 13v1m0 4v2m0 79v2m0 3v1m0 3v1m0 3v1m0 3v1m0 20v1m0 71v1m0 9v2m0 4v3m0 4v3m0 5v2m0 38v1m0 4v1m0 25v1m0 7v1M557.5 301v1m0 7v1m0 50v1m0 1v1m0 2v1m0 2v2m0 5v1m0 8v1m0 86v1m0 2v2m0 4v2m0 4v2m0 16v3m0 4v2m0 4v3m0 6v1m0 93v3m0 15v1m0 22v1m0 10v1m0 38v1m0 10v1M558.5 197v1m0 46v1m0 2v1m0 79v1m0 6v2m0 1v1m0 59v1m0 6v1m0 13v1m0 111v1m0 19v1m0 21v1M559.5 255v1m0 93v1m0 10v1m0 2v1m0 3v2m0 47v1m0 2v1m0 12v1m0 3v1m0 16v1m0 2v1m0 113v2m0 7v1m0 10v1m0 31v3m0 4v1m0 2v1m0 7v1m0 22v1m0 22v1m0 12v1M560.5 236v1m0 135v1m0 2v2m0 1v1m0 6v1m0 11v1m0 262v3m0 23v1m0 11v1m0 7v1m0 7v3M561.5 398v1m0 3v1m0 2v1m0 5v1m0 4v1m0 12v1m0 79v2m0 4v1m0 7v2m0 21v2m0 5v1m0 5v1M562.5 201v1m0 129v2m0 99v1m0 3v2m0 3v1m0 8v1m0 14v1m0 69v1m0 1v1m0 8v2m0 6v2m0 6v2m0 13v1m0 3v1m0 7v1m0 5v1m0 1v1m0 8v1m0 5v1m0 2v1m0 29v1M563.5 339v1m0 13v2m0 1v1m0 2v1m0 106v1m0 4v2m0 4v2m0 10v3m0 5v2m0 5v2m0 4v1m0 118v1m0 20v1m0 4v1m0 16v1m0 34v1m0 15v1M564.5 245v1m0 70v1m0 4v1m0 46v1m0 7v1m0 3v1m0 6v1m0 122v1m0 9v1m0 58v1M565.5 212v1m0 37v1m0 3v1m0 8v1m0 65v1m0 63v1m0 2v1m0 3v1m0 4v1m0 4v1m0 152v1m0 11v1m0 12v1m0 51v1m0 25v1m0 13v3M566.5 282v1m0 62v1m0 5v1m0 11v1m0 2v1m0 53v1m0 4v1m0 3v1m0 3v2m0 7v1m0 20v1m0 181v1m0 2v1m0 8v1m0 30v1m0 8v1m0 8v3M567.5 244v1m0 37v1m0 3v1m0 84v1m0 14v1m0 4v1m0 2v1m0 2v1m0 2v1m0 53v1m0 2v1m0 8v2m0 3v2m0 10v2m0 18v3m0 3v1M568.5 252v1m0 6v1m0 47v1m0 8v1m0 91v1m0 3v1m0 9v2m0 2v2m0 2v2m0 4v1m0 66v2m0 5v2m0 5v2m0 20v2m0 5v3m0 5v2m0 5v1m0 10v1m0 1v1M569.5 278v1m0 53v1m0 2v1m0 6v1m0 3v1m0 97v1m0 2v1m0 9v2m0 4v1m0 4v1m0 80v1m0 42v1m0 3v1m0 3v1m0 3v1m0 12v1m0 2v1m0 4v1m0 27v1m0 25v2M570.5 243v1m0 50v1m0 67v1m0 6v1m0 2v1m0 132v1m0 1v1m0 6v1m0 115v1m0 6v1m0 15v1m0 20v1m0 11v1m0 16v1M571.5 208v1m0 1v1m0 99v1m0 9v1m0 69v1m0 4v1m0 3v1m0 2v1m0 137v1m0 6v1m0 18v1m0 7v1m0 7v1m0 16v3M572.5 225v1m0 47v1m0 4v1m0 134v2m0 11v1m0 3v1m0 3v1m0 3v1m0 3v1m0 132v1m0 2v1m0 36v1m0 10v1m0 13v1m0 2v1m0 20v1m0 3v1m0 20v1m0 10v1m0 6v1M573.5 242v1m0 6v1m0 51v1m0 74v2m0 2v1m0 63v1m0 3v1m0 5v1m0 8v2m0 4v2m0 4v2m0 10v1m0 194v2m0 6v3m0 5v3M574.5 323v1m0 63v1m0 9v1m0 1v1m0 7v1m0 3v1m0 2v1m0 66v1m0 1v1m0 5v2m0 7v1m0 12v3m0 5v2m0 5v3M575.5 327v1m0 98v1m0 17v1m0 78v1m0 5v1m0 20v1m0 7v1m0 3v1m0 39v1m0 8v1m0 12v1m0 3v1M576.5 200v1m0 89v1m0 12v1m0 62v2m0 2v1m0 2v1m0 77v1m0 18v1m0 2v1m0 9v1m0 19v1m0 86v1m0 1v1m0 4v1m0 66v1m0 8v1m0 13v1m0 8v1m0 8v1m0 12v1M577.5 209v1m0 102v1m0 12v1m0 52v1m0 3v2m0 2v1m0 9v1m0 3v1m0 2v1m0 104v1m0 15v1m0 11v1m0 7v1m0 11v1M578.5 222v1m0 113v1m0 16v1m0 60v2m0 2v2m0 11v1m0 4v1m0 3v1m0 6v1m0 104v1m0 32v1m0 18v1m0 4v1m0 3v1m0 8v1m0 8v1m0 8v1m0 4v1m0 3v1m0 4v1m0 9v3M579.5 207v1m0 34v1m0 5v2m0 110v1m0 9v1m0 9v1m0 2v2m0 3v1m0 55v1m0 5v1m0 4v2m0 10v1m0 17v2m0 150v3m0 14v1m0 8v1m0 11v1m0 6v3m0 6v3M580.5 255v1m0 137v1m0 6v1m0 11v1m0 3v1m0 2v1m0 2v1m0 69v3m0 5v3m0 4v1m0 2v1m0 4v1m0 7v3m0 6v2m0 8v1m0 8v1m0 1v1M581.5 423v1m0 23v1m0 91v1m0 2v1m0 16v1m0 40v1m0 8v1m0 30v1m0 4v1m0 7v1M582.5 252v1m0 202v1m0 2v1m0 14v1m0 15v1m0 4v1m0 110v4m0 4v1m0 13v1m0 12v1m0 8v1m0 36v1m0 9v1m0 1v2m0 6v1M583.5 210v1m0 6v1m0 50v1m0 1v1m0 5v1m0 1v1m0 48v1m0 170v1m0 2v1m0 15v1m0 11v1m0 28v1M584.5 225v1m0 6v1m0 55v1m0 6v1m0 41v1m0 15v1m0 201v3m0 4v1m0 12v1m0 22v1m0 1v2m0 15v3m0 5v1m0 3v1m0 4v1m0 45v1m0 9v3M585.5 203v1m0 114v1m0 61v2m0 2v1m0 3v1m0 274v2m0 6v4m0 6v3m0 6v3m0 7v1M586.5 261v1m0 63v1m0 74v1m0 3v1m0 6v2m0 3v1m0 3v2m0 5v1M587.5 248v1m0 33v1m0 5v1m0 1v1m0 66v1m0 7v1m0 85v2m0 4v2M588.5 306v1m0 66v1m0 7v1m0 6v1m0 4v1m0 2v2m0 72v1m0 1v1m0 5v1m0 10v1m0 6v3m0 7v3m0 6v1m0 3v1m0 2v1M589.5 273v2m0 50v1m0 2v1m0 19v1m0 91v1m0 74v1m0 9v1m0 24v1m0 10v1m0 30v1M590.5 236v1m0 51v1m0 9v1m0 62v1m0 6v1m0 69v1m0 4v1m0 14v1m0 6v1m0 18v2m0 80v2m0 5v1m0 18v1m0 4v1m0 24v1m0 18v1m0 18v1m0 12v1m0 12v1m0 19v1m0 7v4M591.5 243v1m0 76v1m0 64v1m0 6v1m0 4v1m0 2v2m0 74v1m0 55v1M592.5 336v1m0 93v2m0 3v2m0 3v1m0 97v1m0 4v1m0 10v1m0 12v4m0 6v1m0 5v1m0 5v1m0 5v1m0 24v1m0 11v1M593.5 384v1m0 57v1m0 22v1m0 4v2m0 5v2m0 6v1m0 1v1m0 4v1m0 126v1m0 7v1m0 4v1m0 11v1m0 8v1m0 3v1m0 8v4M594.5 203v1m0 56v1m0 42v1m0 9v1m0 74v1m0 20v1m0 10v1m0 60v1m0 11v1m0 2v1m0 5v1m0 8v1m0 3v1m0 5v1m0 2v1m0 6v1m0 2v1m0 6v1m0 15v1M595.5 431v1m0 1v1m0 7v1m0 109v1m0 14v1m0 29v1m0 16v1m0 31v1m0 32v1M596.5 298v1m0 65v1m0 6v1m0 95v1m0 3v1m0 6v1m0 11v1m0 8v1m0 9v1m0 1v1m0 114v1m0 5v1m0 5v1m0 31v1m0 5v1m0 6v1m0 19v1m0 3v2M597.5 204v1m0 11v1m0 39v1m0 65v2m0 2v1m0 54v1m0 15v1m0 11v1m0 91v1m0 2v1m0 27v1m0 15v1m0 21v1m0 11v3M598.5 280v1m0 65v1m0 64v1m0 1v1m0 20v1m0 4v1m0 9v1m0 112v2m0 11v1m0 6v1m0 11v1m0 3v1m0 7v5m0 23v1m0 8v1m0 11v1m0 4v1m0 7v1m0 4v1m0 7v1m0 3v2m0 8v4M599.5 238v1m0 55v1m0 75v1m0 3v2m0 88v1m0 3v1m0 7v2m0 6v2m0 13v1M600.5 202v1m0 63v1m0 64v1m0 78v1m0 84v1m0 14v1m0 29v1m0 20v1m0 5v2M601.5 349v1m0 90v1m0 22v1m0 86v1m0 39v1m0 18v1m0 58v1m0 7v1m0 25v2M602.5 240v1m0 8v1m0 48v1m0 1v1m0 11v1m0 70v2m0 78v1m0 9v1m0 3v1m0 11v1m0 4v1m0 3v1m0 19v1m0 124v3m0 1v1m0 7v1m0 41v1m0 15v2M603.5 205v1m0 46v1m0 73v1m0 88v1m0 3v2m0 87v1m0 8v1m0 4v1m0 4v1m0 4v1m0 5v4m0 6v1m0 4v1m0 10v1m0 22v1m0 7v4M604.5 226v1m0 43v1m0 11v1m0 4v1m0 140v1m0 6v1m0 14v2m0 4v2m0 124v1m0 4v1m0 7v1m0 3v1m0 7v2m0 2v2m0 7v5m0 38v2m0 9v6m0 8v5M605.5 245v1m0 54v1m0 86v1m0 1v1m0 5v1m0 73v1m0 15v1m0 9v1m0 1v2m0 6v4m0 16v1M606.5 207v1m0 54v1m0 11v1m0 1v1m0 39v1m0 105v1m0 87v1m0 4v1m0 10v1m0 15v1m0 11v1m0 11v1m0 27v1m0 8v1m0 13v1M607.5 224v1m0 136v1m0 76v1m0 12v1m0 5v1m0 16v1m0 4v1m0 101v1m0 6v1m0 20v1m0 39v1m0 8v1m0 5v1m0 11v1m0 5v1m0 10v1m0 6v1M608.5 204v1m0 7v1m0 37v1m0 48v1m0 14v1m0 51v1m0 4v1m0 1v1m0 6v1m0 4v1m0 5v1m0 1v1m0 98v1m0 9v1m0 4v1m0 10v1m0 10v1m0 4v1m0 13v3M609.5 220v1m0 122v1m0 73v1m0 11v1m0 105v1m0 4v1m0 5v1m0 17v1m0 7v4m0 10v4m0 1v1m0 38v1m0 6v1m0 8v1m0 6v1m0 10v4M610.5 297v1m0 56v1m0 4v1m0 2v1m0 79v1m0 15v1m0 173v5m0 10v6m0 11v6M611.5 249v1m0 6v1m0 10v1m0 36v1m0 4v1m0 66v1m0 19v1m0 3v1m0 101v1m0 17v1m0 3v1M612.5 211v1m0 118v1m0 11v1m0 83v1m0 4v1m0 111v1m0 4v1m0 6v1M613.5 294v1m0 59v1m0 1v1m0 4v1m0 4v1m0 77v1m0 2v1m0 5v1m0 23v1m0 4v1m0 108v1m0 14v1m0 43v1m0 8v1m0 9v1m0 9v1m0 8v1M614.5 206v1m0 121v1m0 60v1m0 12v1m0 6v1m0 3v1m0 77v1m0 25v1m0 10v1m0 28v1M615.5 279v1m0 144v1m0 2v1m0 1v1m0 4v1m0 4v1m0 3v1m0 10v1m0 87v2m0 22v1m0 5v1m0 8v4m0 16v1m0 10v1m0 6v1m0 9v1m0 17v1m0 7v1m0 10v1m0 6v2m0 12v5M616.5 284v1m0 172v1m0 10v1m0 2v1m0 13v3m0 7v1m0 2v1m0 169v5M617.5 250v1m0 8v1m0 50v1m0 6v1m0 8v1m0 1v1m0 90v1m0 89v1m0 17v1m0 44v1m0 17v4M618.5 332v1m0 15v1m0 92v1m0 2v1m0 5v1m0 12v1m0 2v1m0 99v1m0 31v1m0 16v1m0 9v1m0 6v2m0 21v1m0 9v1m0 36v1M619.5 297v1m0 14v1m0 50v1m0 1v1m0 10v1m0 90v1m0 10v1m0 3v1m0 4v1m0 4v1m0 4v1m0 21v1m0 4v1m0 4v1M620.5 202v1m0 127v1m0 55v2m0 9v1m0 15v1m0 116v1m0 19v1m0 2v2m0 9v1m0 29v1m0 7v1m0 9v1m0 7v1m0 11v3M621.5 221v1m0 35v1m0 86v1m0 7v1m0 12v1m0 73v1m0 12v1m0 160v7m0 12v7m0 13v8M622.5 223v1m0 15v1m0 150v1m0 88v1m0 9v1m0 8v1m0 3v1M623.5 253v1m0 45v1m0 105v1m0 8v1m0 6v1m0 82v1m0 73v1M624.5 264v1m0 4v1m0 180v1m0 13v1m0 4v1m0 7v1m0 92v2m0 4v1m0 10v1m0 26v1m0 16v1m0 16v2m0 11v5m0 32v15M625.5 217v1m0 64v1m0 1v2m0 65v1m0 18v2m0 122v1m0 5v1m0 35v1m0 3v2M626.5 219v1m0 154v1m0 24v1m0 136v1m0 7v1m0 8v1m0 7v1m0 16v5m0 13v1m0 12v1m0 14v2m0 13v1m0 23v6M627.5 239v1m0 89v1m0 17v1m0 71v1m0 9v1m0 8v1m0 2v2m0 187v8m0 26v13M628.5 220v1m0 3v1m0 34v1m0 181v1m0 2v1m0 29v1m0 2v1m0 14v1M629.5 226v1m0 63v1m0 107v1m0 3v1m0 6v1m0 6v1m0 91v1m0 57v2M630.5 248v1m0 182v1m0 14v1m0 9v1m0 1v1m0 87v1m0 17v1m0 23v1m0 11v2m0 17v1m0 20v1m0 20v1m0 38v3M631.5 265v1m0 65v1m0 131v1m0 12v1m0 4v1m0 10v1m0 6v1m0 11v1M632.5 295v1m0 80v1m0 129v2m0 11v1m0 6v1m0 8v6m0 20v1m0 21v1m0 14v9M633.5 207v1m0 3v1m0 44v1m0 9v1m0 137v1m0 194v12m0 24v5M634.5 218v1m0 66v1m0 73v1m0 55v1M635.5 240v1m0 2v1m0 65v1m0 67v1m0 72v2m0 52v1m0 4v1M636.5 318v1m0 18v1m0 67v1m0 18v1m0 79v1m0 7v1m0 5v1m0 8v1m0 24v1m0 12v1M637.5 227v1m0 5v1m0 107v1m0 3v1m0 104v1m0 140v1m0 15v1m0 22v2M638.5 204v1m0 5v1m0 159v1m0 1v1m0 1v1m0 17v1m0 4v1m0 70v1m0 9v1m0 10v1m0 12v1m0 13v1m0 6v1M639.5 219v1m0 7v1m0 40v1m0 9v1m0 62v1m0 4v1m0 77v1m0 10v1m0 89v1m0 5v1m0 9v1m0 6v1m0 36v1m0 14v1m0 21v2m0 18v4M640.5 352v1m0 7v1m0 92v1m0 23v1m0 5v2m0 149v7M641.5 204v1m0 47v1m0 2v1m0 69v1m0 6v1m0 50v1m0 21v1m0 84v1m0 6v1m0 29v1m0 24v1M642.5 227v1m0 57v1m0 128v1m0 124v1m0 13v1m0 16v1m0 19v6m0 5v29m0 51v2M643.5 236v1m0 9v1m0 132v1m0 9v1m0 90v1m0 22v3M644.5 253v1m0 6v1m0 62v1m0 2v1m0 15v1m0 78v1m0 4v1m0 77v1m0 6v1m0 11v1m0 3v4m0 16v1m0 14v1M645.5 278v1m0 7v1m0 68v1m0 13v1m0 74v1m0 6v1m0 2v1m0 12v1m0 3v1m0 2v1m0 126v15m0 1v1M646.5 246v1m0 2v1m0 253v1m0 16v1m0 6v1m0 11v1M647.5 261v1m0 4v1m0 1v1m0 9v1m0 43v1m0 2v1m0 84v1m0 11v1m0 2v1m0 103v1m0 9v1m0 10v1m0 14v1m0 20v2m0 100v1M648.5 226v1m0 57v1m0 10v1m0 52v2m0 95v1m0 19v1m0 8v1m0 10v1m0 6v1m0 159v8m0 22v5M649.5 241v1m0 2v1m0 61v1m0 1v1m0 3v1m0 1v1m0 11v1m0 173v1m0 15v7m0 22v1m0 13v1m0 13v2M650.5 263v1m0 4v1m0 71v1m0 92v1m0 130v10M651.5 286v1m0 6v1m0 160v1m0 17v1m0 20v1m0 7v2M652.5 247v1m0 6v1m0 3v1m0 4v1m0 41v1m0 86v1m0 25v1m0 1v1m0 89v1m0 20v1m0 13v1m0 23v2M653.5 211v1m0 67v1m0 144v1m0 1v1m0 5v1m0 5v1m0 3v1m0 200v4m0 6v10M654.5 229v1m0 1v1m0 9v1m0 67v1m0 48v1m0 107v1m0 3v1m0 5v1m0 4v1m0 8v1m0 6v1m0 8v1M655.5 253v1m0 4v1m0 77v1m0 52v1m0 2v1m0 15v1m0 120v10m0 36v17m0 23v35M656.5 227v1m0 50v1m0 64v1m0 1v1m0 76v1m0 41v1M657.5 241v1m0 2v1m0 125v1m0 8v1m0 3v1m0 1v1m0 3v1m0 73v2m0 4v1m0 24v1m0 29v1M658.5 213v1m0 1v1m0 1v1m0 40v1m0 4v1m0 55v1m0 5v1m0 88v1m0 19v2m0 82v1m0 34v1m0 27v2m0 30v3m0 29v1m0 21v1m0 15v1m0 9v2M659.5 237v1m0 41v1m0 7v1m0 58v1m0 11v1m0 81v1m0 2v1m0 14v1m0 13v1m0 5v1m0 169v2m0 15v2m0 17v9M660.5 251v1m0 4v1m0 1v1m0 117v1m0 3v1m0 1v1m0 8v1m0 94v1m0 4v1m0 15v2m0 11v1m0 10v1m0 14v1m0 14v3M661.5 220v1m0 1v1m0 6v1m0 3v1m0 42v1m0 4v1m0 7v1m0 44v1m0 1v1m0 13v1m0 57v1m0 4v1m0 2v1m0 18v1m0 117v11M662.5 240v1m0 1v1m0 11v1m0 43v1m0 2v1m0 4v2m0 7v1m0 43v1m0 5v1m0 3v1m0 5v1m0 6v1m0 63v1m0 40v1m0 9v4M663.5 220v1m0 3v1m0 34v1m0 4v1m0 57v1m0 67v1m0 1v1m0 24v1m0 79v1m0 13v1m0 18v2m0 59v1M664.5 236v1m0 1v1m0 2v1m0 6v1m0 33v1m0 2v1m0 4v1m0 67v1m0 10v1m0 1v1m0 50v2m0 142v2m0 22v2m0 19v2m0 14v1m0 13v1m0 9v1m0 11v2m0 3v3M665.5 258v1m0 48v1m0 2v1m0 2v1m0 3v1m0 8v1m0 56v1m0 19v1m0 70v1m0 8v2m0 7v1m0 27v1M666.5 225v1m0 1v1m0 51v1m0 2v1m0 8v1m0 1v1m0 38v1m0 2v2m0 5v1m0 101v1m0 156v3m0 11v2m0 17v10m0 14v7M667.5 244v1m0 1v1m0 2v1m0 4v1m0 1v1m0 45v1m0 2v1m0 3v1m0 1v1m0 51v1m0 4v1m0 2v2m0 11v1m0 81v1m0 29v1M668.5 264v1m0 4v1m0 4v2m0 56v1m0 59v1m0 4v1m0 2v1m0 4v1m0 1v1m0 112v1m0 21v2m0 53v1m0 20v1m0 13v1M669.5 219v1m0 1v1m0 4v1m0 64v1m0 2v1m0 8v1m0 56v1m0 3v1m0 5v1m0 1v1m0 54v2m0 4v1m0 1v1m0 4v3m0 22v2m0 116v12m0 24v1m0 12v2m0 14v1m0 7v2m0 12v7M670.5 242v1m0 6v1m0 63v1m0 2v1m0 2v1m0 3v1m0 68v1m0 83v6m0 11v6m0 1v2m0 12v2m0 12v2M671.5 262v1m0 4v1m0 7v1m0 63v2m0 77v1m0 10v1m0 6v1m0 7v1m0 4v1m0 6v1m0 156v9m0 21v6M672.5 231v1m0 1v1m0 2v1m0 47v1m0 81v1m0 4v1m0 2v2m0 6v1m0 97v1m0 13v1m0 16v1m0 9v2M673.5 250v1m0 60v1m0 2v1m0 12v1m0 70v1m0 8v2m0 3v1m0 14v1m0 88v1m0 37v5m0 40v1m0 81v1m0 7v4M674.5 247v1m0 23v1m0 4v1m0 57v1m0 21v1m0 82v1m0 2v1m0 5v4m0 17v1m0 5v1m0 156v6m0 10v6m0 9v5m0 9v2M675.5 215v1m0 46v1m0 1v1m0 5v1m0 22v1m0 2v1m0 2v1m0 67v1m0 5v1m0 115v12" stroke="#ff9000" fill="none"/>
<path d="M305.5 297v1m0 14v1m0 1v1m0 179v1m0 56v1m0 30v1m0 20v1m0 6v2M306.5 278v1m0 37v1m0 184v1m0 87v1m0 39v1m0 1v2m0 2v1m0 2v2m0 2v1m0 2v2m0 1v1M307.5 289v1m0 10v1m0 1v1m0 30v1m0 11v1m0 201v1m0 5v2m0 11v2m0 137v1M308.5 304v1m0 8v1m0 2v1m0 32v1m0 11v1m0 1v1m0 257v1m0 72v1m0 24v1M309.5 221v1m0 98v1m0 11v1m0 32v1m0 1v1m0 11v1m0 245v1m0 9v1m0 13v1M310.5 229v1m0 106v1m0 11v1m0 1v1m0 373v1M311.5 352v1m0 1v1m0 14v1m0 32v1m0 5v1m0 9v1m0 3v1m0 293v1m0 2v1m0 8v1M312.5 388v1m0 35v1m0 1v1m0 1v1m0 11v1m0 3v1M313.5 389v1m0 1v1m0 11v1m0 1v1m0 42v1m0 1v1m0 1v1m0 2v1M314.5 287v1m0 121v1m0 1v1m0 11v1m0 55v1m0 9v1m0 12v1M315.5 246v1m0 40v1m0 211v1m0 1v1m0 1v1m0 7v1m0 6v1m0 12v1M316.5 452v1m0 1v1m0 1v1m0 13v1m0 1v1m0 1v1m0 1v1m0 52v1m0 1v1m0 2v1m0 1v1m0 1v1m0 2v1m0 8v1m0 19v1M317.5 322v1m0 5v1m0 167v1m0 1v1m0 1v1m0 1v1m0 1v1m0 4v1m0 52v2m0 1v1m0 2v1m0 1v1m0 2v1m0 2v1m0 1v1m0 7v1m0 2v1m0 26v1M318.5 351v1m0 149v1m0 12v1m0 3v1m0 11v1m0 1v1m0 1v1m0 2v1m0 98v1m0 2v1m0 1v2m0 2v1m0 2v2m0 2v1m0 2v2m0 2v1m0 11v1M319.5 303v1m0 14v1m0 45v1m0 1v1m0 187v2m0 5v1m0 1v1m0 2v1m0 1v1m0 2v1m0 2v1m0 1v1m0 76v1m0 4v1m0 1v1m0 37v1m0 23v1M320.5 332v1m0 2v1m0 31v1m0 2v1m0 1v1m0 11v1m0 1v1m0 180v1m0 9v1m0 13v1m0 13v1m0 2v1m0 2v1m0 2v1m0 2v1m0 6v1m0 93v1M321.5 339v1m0 11v1m0 1v1m0 36v1m0 1v1m0 11v1m0 1v1m0 206v1m0 7v1m0 10v1m0 39v1M322.5 210v1m0 144v1m0 1v1m0 11v1m0 1v1m0 36v1M323.5 375v1m0 1v1m0 57v1m0 11v1m0 1v1m0 1v1m0 268v1m0 7v1M324.5 405v1m0 4v1m0 44v1m0 1v1m0 13v1m0 7v1M325.5 414v1m0 1v1m0 13v1m0 1v1m0 46v1m0 9v1m0 17v1M326.5 230v1m0 10v1m0 194v1m0 1v1m0 1v1m0 68v1m0 1v1m0 1v1m0 1v1m0 1v1m0 10v1m0 13v1m0 5v1M327.5 468v1m0 5v1m0 2v1m0 1v1m0 1v1m0 1v1m0 53v1m0 4v1m0 2v1m0 1v1m0 1v1m0 36v1m0 3v1M328.5 292v1m0 3v1m0 185v1m0 31v1m0 56v1m0 12v1m0 22v1m0 2v1m0 15v1m0 2v1m0 2v1m0 5v1m0 2v1M329.5 522v1m0 7v1m0 7v1m0 2v1m0 1v1m0 1v1m0 2v1m0 1v1m0 74v1M330.5 340v1m0 235v1m0 2v1m0 1v2m0 1v1m0 2v1m0 2v1M331.5 342v1m0 1v1m0 11v1m0 1v1m0 259v1m0 7v1m0 25v1M332.5 360v1m0 1v1m0 276v1m0 1v1m0 64v1M333.5 191v1m0 141v1m0 9v1m0 1v1m0 339v1m0 23v1m0 8v1M334.5 191v1m0 155v1m0 1v1m0 11v1m0 1v1m0 55v1M335.5 365v1m0 1v1m0 11v1m0 1v1m0 39v1m0 1v1m0 1v1m0 2v1M336.5 385v1m0 1v1m0 8v1m0 46v1m0 1v1m0 1v1m0 1v1M337.5 467v1m0 18v1m0 14v1M338.5 424v1m0 7v1m0 9v1m0 3v1m0 1v1m0 44v1m0 4v1m0 1v1m0 1v1m0 1v1m0 1v1m0 1v2m0 7v1m0 13v1m0 3v1M339.5 450v1m0 1v1m0 1v1m0 13v1m0 1v1m0 1v1m0 1v1m0 54v1m0 1v1m0 1v1m0 2v1m0 1v1m0 2v1m0 9v1M340.5 273v1m0 5v1m0 45v1m0 150v1m0 1v1m0 1v1m0 1v1m0 8v1m0 2v1m0 8v1m0 62v2m0 1v1m0 2v1m0 2v1m0 2v1m0 1v1m0 8v2m0 24v1m0 2v1m0 2v1M341.5 281v1m0 45v1m0 1v1m0 2v1m0 8v1m0 1v1m0 183v1m0 1v1m0 2v1m0 1v1m0 107v1m0 3v2m0 2v2m0 2v1m0 2v1M342.5 345v1m0 1v1m0 11v1m0 1v1m0 190v1m0 9v1m0 2v1m0 1v1m0 2v1m0 2v1m0 2v1m0 1v2m0 72v1m0 30v1m0 47v1M343.5 193v1m0 122v1m0 11v1m0 1v1m0 32v1m0 13v1m0 191v1m0 5v1m0 31v1m0 2v1m0 99v1m0 8v1m0 2v1m0 8v1M344.5 332v1m0 1v1m0 11v1m0 1v1m0 52v1m0 213v1m0 44v1M345.5 350v1m0 1v1m0 9v1m0 3v1m0 36v1m0 268v1m0 3v1m0 39v1M346.5 425v1m0 5v1m0 9v1M347.5 202v1m0 5v1m0 48v1m0 134v1m0 56v1m0 5v1m0 19v1m0 2v1M348.5 408v1m0 66v1m0 7v1M349.5 241v1m0 40v1m0 1v1m0 145v1m0 5v1m0 17v1m0 59v1m0 1v1m0 5v1m0 2v1m0 16v1m0 3v1M350.5 297v1m0 1v1m0 182v1m0 2v1m0 51v1m0 4v1m0 1v1m0 2v1m0 1v1m0 2v1m0 9v1m0 22v1M351.5 299v1m0 1v1m0 11v1m0 168v1m0 1v1m0 1v1m0 1v1m0 1v1m0 11v1m0 10v1m0 65v1m0 2v1m0 2v1m0 2v1m0 2v1m0 2v1m0 8v1m0 3v1m0 22v2M352.5 315v1m0 1v1m0 11v1m0 1v1m0 178v1m0 2v1m0 1v1m0 1v1m0 1v1m0 15v1m0 2v1m0 9v1m0 1v1m0 91v1m0 46v1M353.5 333v1m0 1v1m0 9v1m0 1v1m0 1v1m0 222v1m0 1v1m0 2v1m0 2v1m0 2v1m0 2v1m0 2v1m0 2v1m0 76v1m0 19v1M354.5 316v1m0 1v1m0 34v1m0 228v1m0 13v1m0 20v1m0 4v1M355.5 320v1m0 1v1m0 11v1m0 1v1m0 36v1m0 9v1m0 246v1m0 5v1m0 49v1m0 5v1M356.5 336v1m0 1v1m0 15v1m0 34v1m0 319v1m0 16v1m0 3v1M357.5 374v1m0 43v1M359.5 409v1m0 5v1m0 42v1m0 29v1m0 2v1M360.5 210v1m0 203v1m0 9v1m0 14v1m0 43v1m0 2v1m0 35v1M361.5 439v1m0 17v1m0 56v1m0 16v1m0 3v1m0 25v1M362.5 296v1m0 168v1m0 7v1m0 75v1m0 1v1m0 3v1m0 2v1m0 2v1m0 4v1m0 2v1m0 2v1m0 7v1m0 27v1m0 2v1m0 2v1M363.5 312v1m0 188v1m0 1v1m0 1v1m0 7v1m0 2v1m0 12v1m0 61v1m0 10v1m0 2v2m0 1v2m0 2v1m0 19v2m0 2v1m0 6v1m0 2v2m0 2v2m0 2v2m0 1v1m0 10v1M364.5 325v1m0 203v1m0 2v1m0 1v1m0 1v1m0 2v1m0 3v1m0 26v1m0 1v1m0 116v1m0 32v2M365.5 293v1m0 33v1m0 1v1m0 242v1m0 3v1m0 2v1m0 5v1m0 8v1m0 1v2m0 2v1m0 2v1m0 2v1m0 2v2m0 2v1m0 2v1m0 5v1m0 1v1m0 81v1m0 20v1M366.5 309v1m0 2v1m0 1v1m0 45v1m0 251v1m0 4v1m0 46v1m0 16v1M367.5 314v1m0 14v1m0 1v1m0 32v1m0 3v1m0 303v1m0 30v1m0 24v1M368.5 333v1m0 11v1m0 1v1m0 1v1m0 41v1m0 332v1M369.5 351v1m0 1v1m0 8v1M370.5 261v1m0 107v1m0 59v1M371.5 278v1m0 1v1m0 184v1m0 6v1m0 11v1M372.5 280v1m0 1v1m0 153v1m0 42v1m0 2v1m0 9v1m0 24v1M373.5 294v1m0 4v1m0 133v2m0 18v1m0 10v1m0 50v1m0 10v1m0 1v1m0 1v1M374.5 310v2m0 13v1m0 143v1m0 11v1m0 11v1m0 58v1m0 2v1m0 2v1m0 1v1m0 2v1m0 2v1m0 2v1m0 7v1m0 32v1M375.5 333v1m0 167v1m0 11v1m0 13v1m0 70v2m0 1v2m0 2v1m0 18v1m0 4v1m0 2v1m0 2v2m0 2v1m0 2v2m0 2v2m0 2v1M376.5 315v1m0 31v1m0 12v1m0 7v1m0 150v1m0 4v1m0 2v1m0 1v1m0 1v1m0 16v1m0 15v1m0 1v2m0 112v1m0 33v1m0 7v1M377.5 317v1m0 1v1m0 11v1m0 1v1m0 53v1m0 179v1m0 12v1m0 12v1m0 2v1m0 2v1m0 2v2m0 2v1m0 2v1m0 2v1m0 83v1m0 4v1M378.5 335v1m0 1v1m0 65v1m0 197v1m0 18v1m0 4v1m0 8v1m0 4v1m0 1v1m0 10v1M379.5 200v1m0 30v1m0 125v1m0 78v1m0 290v2M380.5 251v1m0 5v1m0 136v1m0 56v1M381.5 279v1m0 113v1M382.5 442v1m0 43v1m0 2v1m0 38v1M383.5 297v1m0 8v1m0 1v1m0 141v1m0 72v1m0 14v1m0 9v1m0 21v1M384.5 485v1m0 14v1m0 58v1m0 1v1m0 2v1m0 14v1m0 1v1m0 9v1m0 26v2M385.5 282v1m0 215v1m0 112v2m0 2v1m0 2v2m0 2v2m0 1v1m0 22v2m0 2v2m0 2v2m0 2v2m0 2v1M386.5 312v1m0 36v1m0 9v1m0 176v1m0 1v1m0 2v1m0 1v1m0 2v1m0 1v1m0 4v1m0 5v1m0 19v2m0 126v1M387.5 314v1m0 1v1m0 8v1m0 2v1m0 1v1m0 38v1m0 9v1m0 6v1m0 190v1m0 15v1m0 4v1m0 6v2m0 2v1m0 2v2m0 2v1m0 2v2m0 2v2m0 2v1M388.5 332v1m0 1v1m0 16v1m0 33v1m0 5v1m0 245v1m0 1v1M389.5 354v1m0 15v1m0 35v1m0 25v1m0 251v1m0 37v1m0 8v1M390.5 376v1m0 63v1M391.5 397v1m0 70v1M392.5 439v1m0 67v1m0 2v1M393.5 303v1m0 3v1m0 128v1m0 10v1m0 73v1m0 16v1m0 3v1m0 27v1m0 3v1M394.5 261v1m0 4v1m0 40v1m0 1v1m0 11v1m0 164v1m0 74v1m0 16v1m0 2v2m0 4v1m0 3v1m0 26v2M395.5 276v1m0 66v1m0 149v1m0 2v1m0 12v1m0 10v1m0 15v1m0 1v1m0 72v2m0 1v2m0 2v2m0 1v1m0 25v2m0 2v2m0 2v2m0 2v2m0 2v1M396.5 297v1m0 11v1m0 1v1m0 222v1m0 1v1m0 4v1m0 4v1m0 6v1m0 5v1m0 19v1m0 7v1m0 144v1M397.5 311v1m0 1v1m0 1v1m0 14v1m0 53v1m0 198v1m0 1v1m0 20v1m0 2v1m0 2v1m0 3v1m0 2v2m0 2v1m0 2v2m0 11v1m0 82v1M398.5 217v1m0 166v1m0 232v1m0 13v1m0 18v1m0 25v1M399.5 423v1m0 287v1M400.5 240v1m0 127v1m0 73v1M401.5 398v1M402.5 247v1m0 1v1m0 25v1m0 211v1m0 23v1m0 18v1M403.5 247v1m0 56v1m0 214v1m0 25v1m0 2v1M404.5 308v1m0 156v1m0 14v1m0 4v1m0 17v1m0 54v2m0 3v1m0 21v1m0 6v1m0 29v1M405.5 292v1m0 2v1m0 27v1m0 3v1m0 8v1m0 184v1m0 21v1m0 70v1m0 3v1m0 2v2m0 2v2m0 2v2m0 2v2m0 15v1m0 3v2m0 2v2m0 2v2m0 3v2m0 2v1m0 15v2M406.5 297v1m0 11v1m0 37v1m0 185v1m0 23v1m0 3v1m0 25v1m0 72v1m0 3v1m0 17v1m0 20v1m0 23v1M407.5 311v1m0 1v1m0 11v1m0 3v1m0 32v1m0 5v1m0 207v1m0 2v2m0 2v1m0 2v1m0 2v2m0 2v1m0 2v1m0 8v1m0 5v2m0 14v1m0 2v2m0 2v1M408.5 199v1m0 148v1m0 34v1m0 8v1m0 15v1m0 239v1m0 1v1m0 52v1M409.5 361v2m0 70v1m0 245v1m0 13v1m0 20v1M410.5 256v1m0 11v1m0 174v1m0 6v1m0 13v1M411.5 226v1m0 43v1m0 10v2m0 123v1m0 8v1M412.5 489v1m0 15v1m0 27v1M413.5 301v1m0 15v1m0 1v1m0 150v1m0 54v1m0 18v1m0 7v1M414.5 204v1m0 116v1m0 1v1m0 180v1m0 63v1m0 19v2m0 9v1m0 26v2M415.5 343v1m0 9v1m0 145v1m0 112v1m0 6v1m0 2v2m0 2v2m0 2v2m0 2v2m0 32v1m0 22v1m0 3v1M416.5 226v1m0 1v1m0 80v1m0 11v1m0 1v1m0 57v1m0 154v1m0 16v1m0 12v1m0 22v1m0 5v1m0 71v1m0 7v1m0 1v1M417.5 228v1m0 96v1m0 3v1m0 248v1m0 3v2m0 2v1m0 2v2m0 2v1m0 2v2m0 13v1m0 3v1m0 3v2m0 2v2m0 2v2m0 2v2m0 2v2M418.5 358v1m0 5v1m0 261v1m0 2v1m0 7v1m0 1v1m0 14v1m0 26v1m0 29v1M419.5 370v1m0 349v1m0 5v1M420.5 393v1m0 73v1M421.5 244v1m0 60v1m0 103v1m0 94v1m0 1v1m0 21v1M422.5 309v1m0 11v1m0 124v1m0 21v1m0 51v1m0 18v1m0 5v1m0 1v1m0 24v1m0 3v1M423.5 293v1m0 1v2m0 260v1m0 4v1m0 22v1m0 7v1m0 28v2m0 1v1M424.5 310v1m0 33v1m0 5v1m0 143v1m0 16v1m0 27v1m0 65v1m0 8v2m0 2v2m0 2v1m0 3v1m0 2v2m0 2v1m0 20v2m0 2v2m0 2v2m0 17v1M425.5 312v1m0 1v1m0 1v1m0 9v1m0 3v1m0 58v1m0 141v1m0 28v1m0 22v1m0 97v1m0 8v1m0 19v1M426.5 235v1m0 94v1m0 245v1m0 2v1m0 3v1m0 2v1m0 3v1m0 2v2m0 16v2m0 2v2m0 2v2m0 2v2m0 2v2m0 2v1m0 4v1M427.5 213v1m0 3v1m0 193v1m0 8v1m0 6v1m0 12v1m0 180v2m0 9v1m0 1v1m0 1v1m0 1v1m0 1v1m0 1v1m0 3v1m0 59v1M428.5 449v2m0 228v1m0 16v1m0 23v1M429.5 393v1m0 16v1m0 9v1m0 42v2m0 40v1M430.5 261v1m0 156v1m0 17v1m0 86v1m0 22v1M431.5 319v1m0 1v1m0 157v1m0 78v1m0 2v1m0 3v1m0 27v2M432.5 207v1m0 65v1m0 4v1m0 44v1m0 1v1m0 190v1m0 65v1m0 22v1m0 11v1m0 26v2m0 9v1M433.5 213v1m0 9v1m0 122v1m0 9v1m0 151v1m0 18v1m0 7v1m0 21v1m0 82v2m0 2v2m0 10v1m0 23v1M434.5 236v1m0 74v1m0 233v1m0 23v2m0 1v1m0 4v1m0 1v2m0 24v2m0 125v1M435.5 328v1m0 1v1m0 1v1m0 9v1m0 5v1m0 35v1m0 213v1m0 3v1m0 2v2m0 2v2m0 2v2m0 2v1m0 20v1m0 2v2m0 2v1m0 7v1m0 1v1M436.5 345v2m0 300v1m0 3v1m0 57v1m0 13v1M437.5 281v1m0 85v1m0 23v1m0 61v1m0 13v1m0 1v1m0 240v1m0 9v1m0 12v1M438.5 259v1m0 37v1m0 2v1m0 1v1m0 174v1M439.5 263v1m0 37v1m0 2v1m0 12v1m0 97v1m0 17v1m0 61v1m0 17v1m0 4v1m0 23v1M440.5 290v1m0 1v1m0 161v1m0 24v1m0 53v1m0 21v1m0 3v1m0 30v2M441.5 293v1m0 8v1m0 2v1m0 1v1m0 39v1m0 6v1m0 218v1m0 5v1m0 22v1m0 14v1m0 20v1m0 3v1M442.5 309v1m0 1v1m0 10v1m0 6v1m0 176v1m0 22v1m0 97v1m0 14v2m0 12v1m0 21v1m0 8v1M443.5 341v1m0 204v1m0 19v1m0 10v1m0 25v1m0 4v1m0 120v2M444.5 221v1m0 186v1m0 16v1m0 14v1m0 158v1m0 3v1m0 2v2m0 2v2m0 2v1m0 9v1m0 3v1m0 3v1m0 3v1m0 16v1M445.5 223v1m0 152v1m0 95v1m0 195v1m0 58v1M446.5 391v1m0 26v1m0 64v1m0 22v1m0 201v1m0 18v1m0 3v1M447.5 307v1m0 1v1m0 137v1m0 70v1M448.5 261v1m0 62v1m0 5v1m0 110v1m0 15v1m0 22v1m0 55v1m0 23v1M449.5 336v1m0 6v1m0 7v1m0 144v1m0 21v1m0 1v1m0 61v1m0 27v2m0 7v1m0 29v2M450.5 220v1m0 91v1m0 1v1m0 32v1m0 157v1m0 131v1m0 2v2m0 2v2m0 3v2m0 2v2m0 2v3m0 22v1m0 34v1M451.5 220v1m0 95v1m0 4v1m0 14v1m0 41v1m0 18v1m0 147v1m0 26v1m0 35v1m0 89v1m0 2v1M452.5 340v1m0 53v1m0 199v1m0 4v2m0 15v1m0 3v2m0 19v2m0 2v2m0 3v2m0 2v1M453.5 355v1m0 13v1m0 49v1m0 11v1m0 224v1m0 36v1M454.5 377v1m0 67v1m0 20v1m0 19v1m0 231v1m0 4v1m0 3v1M455.5 250v1m0 49v1m0 100v1m0 74v1m0 1v1m0 19v1m0 26v1M456.5 299v1m0 15v1m0 1v1m0 109v1m0 142v2M457.5 474v1m0 110v1m0 3v2M458.5 302v1m0 41v1m0 16v1m0 124v1m0 123v2m0 24v2m0 16v2m0 2v2m0 3v2m0 2v1m0 10v1M459.5 305v1m0 1v1m0 1v1m0 10v1m0 228v2m0 6v1m0 25v1m0 2v1m0 2v1m0 81v1m0 6v1m0 13v1m0 18v1m0 10v1M460.5 249v1m0 79v1m0 8v1m0 7v1m0 225v1m0 22v2m0 15v1m0 16v2m0 2v2m0 4v1m0 1v1m0 3v1M461.5 438v1m0 191v1m0 2v2m0 2v2m0 11v1m0 58v1M462.5 722v2M463.5 248v1m0 49v1m0 5v1m0 101v1m0 78v1M464.5 260v1m0 47v1m0 10v1m0 1v1m0 1v1m0 195v1m0 29v1M465.5 345v1m0 110v1m0 1v1m0 21v1m0 55v2m0 30v2M466.5 296v1m0 45v1m0 16v1m0 132v1m0 3v1m0 22v1m0 1v1m0 92v1m0 9v1m0 23v2m0 2v1M467.5 311v1m0 1v1m0 1v1m0 66v1m0 147v2m0 3v1m0 25v2m0 84v3m0 2v3m0 2v3m0 4v1M468.5 220v1m0 5v1m0 108v1m0 15v1m0 47v1m0 20v1m0 129v1m0 24v1m0 6v1m0 1v1m0 26v1m0 5v1m0 83v1m0 5v1M469.5 206v1m0 39v1m0 102v1m0 8v1m0 55v1m0 19v1m0 15v1m0 155v1m0 9v1m0 3v2m0 3v2m0 14v1m0 31v1m0 8v1M470.5 399v2m0 40v1m0 221v1m0 64v1M471.5 397v1m0 9v1m0 19v1m0 46v1m0 47v1M472.5 305v1m0 137v1m0 67v1m0 28v1M473.5 307v1m0 12v1m0 1v1m0 127v3m0 17v1m0 26v1m0 83v2m0 2v1m0 1v1m0 2v1m0 27v2M474.5 345v1m0 188v1m0 73v2m0 22v2m0 2v1m0 18v2m0 3v1M475.5 225v1m0 3v1m0 72v1m0 4v1m0 33v1m0 16v1m0 195v1m0 27v1m0 1v1m0 96v1m0 11v1M476.5 312v1m0 1v1m0 8v1m0 245v2m0 25v1m0 13v2m0 12v2m0 2v2m0 3v2m0 2v1M477.5 210v1m0 118v1m0 13v1m0 76v1m0 208v1m0 3v2m0 3v2m0 2v1m0 1v1m0 59v1M478.5 434v1m0 248v1m0 23v1M479.5 240v1m0 148v1m0 9v1m0 43v1m0 42v1M480.5 268v1m0 33v1m0 5v1m0 5v1m0 80v1m0 101v1M481.5 318v1m0 1v1m0 1v1m0 220v1M482.5 283v1m0 7v1m0 12v1m0 31v1m0 7v1m0 107v1m0 133v1m0 37v1m0 6v1M483.5 316v1m0 2v1m0 1v1m0 35v1m0 15v1m0 111v1m0 23v1m0 3v1m0 23v1m0 73v1m0 26v2m0 2v1m0 18v1m0 6v1M484.5 323v1m0 55v1m0 10v1m0 7v1m0 126v1m0 26v1m0 4v1m0 26v1m0 2v1m0 2v1m0 89v1m0 23v1m0 13v1m0 8v1M485.5 217v1m0 122v1m0 9v1m0 14v1m0 52v2m0 148v1m0 5v1m0 33v1m0 7v1m0 8v2m0 3v2m0 2v3M486.5 372v1m0 60v1m0 189v2m0 9v3m0 2v2m0 3v2m0 19v1m0 25v1M487.5 249v1m0 15v2m0 247v1m0 203v1M488.5 265v1m0 147v1m0 15v1m0 70v1m0 56v1M489.5 463v1m0 80v1m0 26v2m0 7v1m0 28v1m0 3v1M490.5 256v1m0 3v1m0 39v1m0 3v1m0 10v1m0 4v1m0 303v2m0 17v2m0 3v2m0 3v2m0 7v1M491.5 290v1m0 222v1m0 31v1m0 138v1m0 14v1M492.5 295v1m0 9v1m0 280v1m0 33v2m0 11v1M493.5 196v1m0 11v1m0 100v1m0 1v1m0 60v1m0 247v2m0 3v2m0 3v2m0 3v2m0 24v1M494.5 327v1m0 13v1m0 8v1m0 361v1M495.5 237v1m0 118v1m0 6v1M496.5 254v2m0 40v1m0 83v1m0 82v1m0 2v1m0 21v1m0 1v1M497.5 318v1m0 1v1m0 1v1m0 86v1m0 18v1m0 47v1m0 24v1M498.5 288v1m0 36v1m0 1v1m0 1v1m0 7v1m0 104v1m0 103v1m0 31v1M499.5 370v1m0 81v1m0 111v1m0 29v1m0 9v1m0 30v1m0 1v1m0 6v1M500.5 227v1m0 80v1m0 5v1m0 10v1m0 2v1m0 39v1m0 15v1m0 130v1m0 26v1m0 82v2m0 14v1m0 4v2m0 3v1M501.5 335v1m0 16v1m0 73v1m0 129v1m0 8v1m0 161v1M502.5 221v1m0 130v1m0 6v1m0 18v1m0 55v2m0 5v1m0 139v1m0 25v1m0 10v1m0 4v1m0 3v2m0 3v2m0 3v2m0 3v2M503.5 225v1m0 5v1m0 219v1m0 17v1M504.5 483v2m0 56v1m0 1v1m0 175v1m0 4v1M505.5 308v1m0 5v2m0 8v1m0 1v1m0 101v1m0 18v1m0 106v1m0 36v1M506.5 289v1m0 41v1m0 2v1m0 8v1m0 7v1m0 131v1m0 24v2m0 63v1m0 6v1m0 27v1m0 16v1m0 4v2m0 3v2m0 4v2m0 3v1m0 1v1M507.5 310v1m0 48v1m0 162v1m0 35v1m0 117v1m0 7v1M508.5 318v1m0 11v1m0 1v1m0 53v1m0 152v2m0 25v2m0 14v2m0 4v1m0 4v2m0 3v2m0 4v2m0 110v1m0 4v2M509.5 337v1m0 1v1m0 2v1m0 70v1m0 20v1m0 1v1m0 163v1m0 3v2m0 3v3m0 49v1M510.5 359v1m0 13v1m0 71v1m0 254v1M511.5 242v1m0 240v1M512.5 262v1m0 147v1m0 115v1m0 1v1m0 33v1M513.5 286v1m0 35v2m0 4v2m0 5v1m0 1v1m0 2v1m0 115v1m0 24v1m0 2v1m0 62v1m0 26v1m0 11v1m0 23v1m0 4v1m0 4v1M514.5 345v1m0 21v1m0 103v1m0 22v2m0 3v1m0 23v1m0 3v1m0 77v1m0 3v2m0 4v2m0 4v2m0 4v2m0 3v1m0 37v1m0 8v1m0 21v1M515.5 206v1m0 25v1m0 80v1m0 9v1m0 41v1m0 14v3m0 131v1m0 23v1m0 6v1m0 3v1m0 20v3m0 7v1M516.5 216v1m0 114v1m0 1v1m0 9v1m0 4v1m0 73v1m0 1v1m0 133v1m0 6v2m0 3v2m0 4v2m0 4v2m0 3v1m0 10v1m0 8v1m0 14v1M517.5 351v1m0 4v1m0 76v1m0 276v1m0 9v1M518.5 292v1m0 8v1m0 72v1m0 7v1m0 91v1m0 222v1m0 6v1M519.5 262v1m0 56v1m0 2v1m0 88v1m0 97v1m0 30v1m0 3v1M520.5 195v1m0 127v1m0 2v1m0 2v1m0 7v1m0 1v1m0 90v1m0 14v1m0 21v2m0 57v1m0 3v1m0 25v1m0 10v2m0 24v1M521.5 302v1m0 42v1m0 8v1m0 5v1m0 119v1m0 3v1m0 24v1m0 1v1m0 75v1m0 4v2m0 4v2m0 4v2m0 4v2m0 22v1m0 8v1m0 21v1m0 2v1m0 12v2M522.5 323v1m0 1v1m0 1v1m0 2v1m0 49v1m0 7v1m0 11v1m0 151v2m0 8v1m0 102v1m0 2v1m0 24v1m0 20v1M523.5 202v1m0 134v1m0 7v1m0 1v1m0 6v1m0 193v1m0 3v2m0 4v2m0 3v3m0 3v1m0 1v1m0 8v1m0 18v1M524.5 362v1m0 64v1m0 19v1m0 20v1m0 145v1m0 39v1m0 40v1M525.5 389v1m0 7v1m0 12v1m0 68v1m0 31v1m0 165v1m0 17v1m0 14v1m0 5v1m0 4v1M526.5 244v1m0 48v1m0 11v1m0 112v1m0 23v2m0 54v1m0 29v2m0 25v2m0 3v1M527.5 316v1m0 15v1m0 104v2m0 13v1m0 88v1m0 30v2m0 6v1m0 9v1m0 17v2m0 4v2m0 9v1m0 4v1M528.5 283v1m0 55v1m0 13v1m0 1v1m0 113v1m0 2v1m0 21v1m0 1v1m0 23v2m0 77v1m0 14v2m0 4v1m0 28v1m0 5v1m0 59v1M529.5 247v1m0 54v1m0 58v1m0 4v1m0 8v1m0 7v1m0 127v1m0 3v1m0 19v1m0 16v1m0 4v2m0 4v2m0 3v2m0 149v1m0 6v1M530.5 260v1m0 77v1m0 1v1m0 45v1m0 13v1m0 190v1m0 8v1m0 14v1m0 5v1m0 5v1m0 5v1m0 5v1M531.5 224v1m0 7v1m0 44v1m0 67v1m0 2v1m0 10v1m0 4v1m0 49v1m0 210v1m0 4v1m0 14v1m0 5v1m0 2v1m0 2v1m0 2v1m0 2v1m0 5v1m0 51v1M532.5 370v1m0 2v1m0 1v2m0 7v1m0 82v1m0 19v2M533.5 262v1m0 63v1m0 151v1m0 30v1m0 22v2m0 3v1M534.5 285v1m0 61v1m0 1v1m0 2v1m0 1v1m0 70v1m0 100v2m0 17v1m0 17v2m0 18v2m0 4v2m0 8v1m0 1v1M535.5 353v2m0 2v1m0 2v1m0 18v1m0 1v1m0 71v1m0 45v2m0 81v1m0 6v3m0 4v1m0 40v1m0 2v1m0 41v1M536.5 217v1m0 117v1m0 157v1m0 1v1m0 3v2m0 4v2m0 4v1m0 6v1m0 2v1m0 6v2m0 4v2m0 4v2m0 14v1m0 92v2m0 59v1m0 1v1M537.5 361v1m0 47v1m0 127v1m0 16v1m0 12v1m0 6v1m0 12v1m0 30v1m0 3v1m0 1v1M538.5 364v1m0 1v1m0 2v1m0 70v1m0 42v1m0 141v1m0 24v3m0 17v1m0 6v1m0 16v1m0 10v1M539.5 209v1m0 43v1m0 148v1m0 18v1m0 50v2m0 1v1m0 52v1m0 1v1m0 167v1m0 6v1m0 8v1M540.5 278v1m0 1v1m0 139v1m0 9v2m0 21v2m0 85v2m0 16v2m0 18v1m0 5v1m0 8v1M541.5 243v1m0 66v1m0 142v1m0 12v2m0 4v1m0 2v2m0 91v1m0 4v1m0 5v1m0 4v2m0 5v2m0 13v1m0 6v1m0 23v1m0 19v1m0 2v1m0 20v1m0 1v1M542.5 323v1m0 5v2m0 156v1m0 2v2m0 10v1m0 4v2m0 15v2m0 4v2m0 4v2m0 109v1m0 2v1M543.5 334v1m0 18v1m0 215v1m0 5v1m0 12v1m0 29v1M544.5 297v1m0 8v1m0 10v1m0 43v2m0 1v1m0 6v1m0 243v1m0 53v1m0 9v1m0 23v1m0 7v1M545.5 249v1m0 77v1m0 3v1m0 62v1m0 288v1m0 15v1m0 3v1m0 6v1m0 6v2M546.5 360v1m0 1v1m0 53v1M547.5 371v1m0 19v1m0 77v1m0 19v1M548.5 199v1m0 100v1m0 100v1m0 7v1m0 73v2m0 17v1m0 10v2m0 28v1M549.5 210v1m0 9v1m0 48v1m0 6v1m0 56v1m0 94v1m0 3v1m0 2v2m0 101v2m0 4v2m0 5v2m0 13v1m0 3v1m0 7v2m0 5v2m0 30v1M550.5 222v1m0 72v1m0 65v1m0 95v1m0 7v1m0 4v1m0 3v1m0 1v1m0 2v1m0 5v2m0 10v2m0 102v1m0 46v1m0 24v1m0 3v1M551.5 202v1m0 170v1m0 1v1m0 15v1m0 102v1m0 7v1m0 1v1m0 3v1m0 1v1m0 3v1m0 5v1m0 14v1m0 3v1m0 24v1m0 110v2m0 40v1m0 1v1M552.5 397v1m0 2v1m0 3v1m0 9v1m0 129v1m0 20v1m0 2v1m0 6v1m0 9v1m0 14v1m0 24v1M553.5 232v1m0 1v1m0 129v1m0 3v1m0 1v2m0 51v1m0 5v1m0 2v2m0 2v2m0 28v1m0 204v1m0 5v1m0 6v1m0 8v1m0 19v2M554.5 377v1m0 17v1m0 2v1m0 2v1m0 61v1m0 4v1m0 4v2m0 5v1m0 4v1M555.5 317v1m0 85v1m0 8v1m0 10v1m0 2v1m0 3v1m0 3v1m0 4v1m0 62v1m0 1v1m0 4v2m0 4v3m0 19v1m0 4v2m0 5v2m0 5v1m0 1v1M556.5 211v1m0 9v1m0 131v2m0 109v2m0 3v2m0 3v1m0 1v1m0 2v1m0 100v1m0 22v1m0 34v1m0 14v1m0 6v1M557.5 307v1m0 50v1m0 19v1m0 2v1m0 94v1m0 23v1m0 28v1m0 100v1m0 18v1m0 30v1m0 15v1m0 1v1m0 5v1m0 14v1M558.5 203v1m0 186v2m0 2v1m0 20v1m0 98v1m0 1v1m0 26v1m0 3v1m0 27v1m0 3v1M559.5 213v1m0 128v1m0 5v1m0 74v1m0 3v1m0 27v1m0 138v1m0 3v1m0 31v1m0 13v1m0 22v1m0 25v1M560.5 239v1m0 140v1m0 7v1m0 2v2m0 60v2m0 3v1m0 5v1m0 10v2m0 17v3m0 3v1m0 174v1m0 2v1m0 22v1m0 5v2M561.5 249v1m0 49v1m0 2v1m0 107v1m0 9v1m0 3v1m0 5v1m0 63v3m0 4v3m0 4v1m0 9v1m0 6v1m0 5v2m0 5v3m0 7v1m0 8v2M562.5 319v1m0 106v2m0 1v1m0 3v1m0 17v1m0 3v2m0 79v1m0 11v1m0 4v1m0 2v1m0 4v1m0 2v1m0 4v1m0 59v1m0 12v1m0 1v1M563.5 211v1m0 88v1m0 175v1m0 5v1m0 2v1m0 10v1m0 6v1m0 120v1m0 52v1m0 16v1m0 26v2M564.5 300v1m0 82v2m0 121v1m0 10v1m0 21v1m0 3v1M565.5 259v1m0 65v1m0 8v1m0 6v1m0 3v1m0 51v1m0 16v1m0 3v1m0 148v1m0 34v3m0 6v3m0 13v1m0 25v1m0 20v1M566.5 224v1m0 1v1m0 1v1m0 34v1m0 107v1m0 54v1m0 3v1m0 15v2m0 3v1m0 4v1m0 189v2m0 14v1m0 20v1m0 14v3M567.5 382v1m0 15v1m0 91v2m0 4v2M568.5 206v1m0 107v1m0 5v1m0 96v1m0 87v1m0 6v1m0 6v1m0 33v1m0 14v1m0 4v1M569.5 220v1m0 104v1m0 2v1m0 103v1m0 16v1m0 17v1m0 7v1m0 1v1m0 78v1m0 27v1m0 27v1m0 57v1M570.5 373v1m0 113v1m0 6v1m0 30v1m0 105v2m0 8v1m0 3v1m0 60v1M571.5 212v1m0 165v1m0 24v1m0 111v1m0 2v1m0 17v1m0 57v1M572.5 347v1m0 9v1m0 51v1m0 19v1m0 146v2m0 8v1m0 7v1m0 12v1m0 16v2m0 15v2m0 5v1m0 7v1m0 19v1m0 7v1m0 7v1m0 5v2M573.5 292v1m0 79v1m0 1v1m0 10v1m0 63v1m0 31v1M574.5 266v2m0 36v1m0 183v1m0 48v1m0 3v1M575.5 348v1m0 85v1m0 4v1m0 84v2m0 19v1m0 20v1m0 17v1m0 8v1M576.5 377v1m0 98v1m0 2v1m0 10v1m0 2v1m0 7v1m0 89v1m0 59v1m0 11v1m0 6v3m0 42v3M577.5 323v1m0 10v1m0 45v1m0 18v1m0 97v1m0 18v1m0 35v1m0 7v1M578.5 226v1m0 6v1m0 122v1m0 78v1m0 5v1m0 2v1m0 104v1m0 10v1m0 4v1m0 11v1m0 5v2m0 16v3m0 14v1m0 8v1m0 8v1m0 18v3M579.5 446v1m0 2v1m0 15v1m0 6v2m0 4v2m0 7v1m0 158v3m0 6v3m0 6v3m0 6v2M580.5 209v1m0 179v1m0 1v1m0 11v1m0 11v1m0 5v1m0 59v1m0 2v1m0 2v1m0 43v1m0 7v1m0 7v1m0 4v1M581.5 280v1m0 148v1m0 28v1m0 105v1m0 12v1m0 40v1m0 8v1m0 8v1m0 13v1m0 1v1M582.5 245v1m0 3v1m0 42v1m0 186v1m0 17v1m0 124v1m0 8v1m0 4v1m0 8v1m0 44v1m0 6v1M583.5 314v1m0 184v1m0 5v1m0 3v1m0 20v3m0 4v1m0 3v1m0 3v1m0 16v1m0 8v1m0 2v1M584.5 349v1m0 12v1m0 203v1m0 4v1m0 8v1m0 8v1m0 2v1m0 6v1m0 38v1m0 8v1m0 8v1m0 5v1m0 2v1m0 5v1m0 2v1m0 6v3M585.5 205v1m0 37v1m0 65v1m0 56v1m0 9v1m0 1v1M586.5 332v1M587.5 232v1m0 6v1m0 43v1m0 13v1m0 51v1m0 9v1m0 69v1m0 4v1m0 1v1m0 26v1M588.5 203v1m0 48v1m0 4v1m0 53v1m0 2v1m0 72v1m0 4v1m0 10v1m0 101v1m0 15v1M589.5 209v1m0 11v1m0 114v1m0 4v1m0 2v1m0 67v1m0 96v1m0 25v1m0 21v1m0 22v1m0 17v1m0 2v2M590.5 234v1m0 4v1m0 118v1m0 93v1m0 19v1m0 2v1m0 128v1m0 31v1m0 11v1m0 44v1M591.5 252v1m0 58v1m0 14v1m0 50v1m0 13v1m0 4v1m0 80v1m0 29v1m0 4v1m0 9v1M592.5 216v1m0 5v1m0 5v1m0 51v1m0 58v1m0 2v1m0 5v1m0 2v1m0 64v1m0 142v1m0 47v1m0 6v1m0 12v1m0 1v3M593.5 239v1m0 127v1m0 3v1m0 5v1m0 1v1m0 67v1m0 31v1m0 135v4m0 9v4m0 8v4m0 10v3M594.5 306v1m0 90v1m0 5v1m0 78v2M595.5 222v1m0 6v1m0 39v1m0 150v1m0 31v1m0 83v1m0 8v1m0 32v1m0 4v1m0 17v1m0 6v1m0 48v1m0 11v1M596.5 202v1m0 34v1m0 65v1m0 57v1m0 7v1m0 86v1m0 7v1m0 17v1m0 27v1m0 146v1m0 32v1m0 4v1m0 8v3M597.5 258v1m0 53v1m0 67v1m0 13v1m0 107v1m0 6v1m0 13v1m0 5v3m0 11v1m0 15v1m0 15v1M598.5 229v1m0 55v1m0 59v1m0 2v1m0 5v1m0 216v1m0 2v1m0 8v4m0 8v3m0 46v4m0 8v4m0 9v4m0 9v3M599.5 300v1m0 9v1m0 167v1m0 4v1m0 2v1m0 11v1M600.5 259v1m0 15v1m0 45v2m0 81v1m0 16v1m0 69v1m0 22v1m0 4v1M601.5 221v1m0 126v1m0 12v1m0 86v1m0 8v1m0 87v1m0 9v1m0 5v1m0 4v1m0 17v1m0 9v2m0 7v1m0 11v1m0 6v1m0 12v1m0 5v1m0 20v1m0 35v4M602.5 234v1m0 246v1m0 21v1m0 142v1m0 14v1m0 7v1m0 13v1m0 5v1m0 8v1m0 3v2M603.5 331v1m0 61v1m0 32v1m0 82v1m0 2v1m0 57v1m0 4v1m0 6v1M604.5 228v1m0 49v1m0 67v1m0 3v1m0 12v1m0 66v1m0 2v1m0 12v1m0 136v4m0 9v3m0 10v2M605.5 239v1m0 225v1m0 23v1M606.5 211v1m0 54v1m0 138v1m0 5v1m0 1v1m0 123v1m0 10v1m0 67v1M607.5 230v1m0 47v1m0 7v1m0 7v1m0 144v1m0 31v1m0 14v1m0 146v1m0 7v1m0 17v5m0 13v5m0 12v6M608.5 306v1m0 2v1m0 10v1m0 44v1m0 117v1m0 13v1m0 25v1m0 16v1m0 6v1M609.5 229v1m0 41v1m0 148v1m0 115v2m0 1v1m0 19v1m0 30v1m0 9v1m0 5v1m0 8v1m0 5v1m0 9v1m0 15v6M610.5 235v1m0 55v1m0 68v1m0 12v1m0 54v2m0 37v1m0 3v1M611.5 320v1m0 60v1m0 6v1m0 3v1m0 90v1m0 25v1m0 3v1M612.5 275v1m0 3v1m0 127v1m0 2v1m0 10v1m0 6v1m0 4v1m0 2v1m0 79v1m0 2v1m0 11v1m0 4v1m0 32v1m0 5v1m0 23v1m0 23v1M613.5 300v1m0 2v1m0 6v1m0 65v1m0 3v1m0 85v1m0 19v1m0 3v1m0 101v1m0 5v1m0 16v1m0 7v1m0 8v1m0 47v1m0 3v4M614.5 313v1m0 8v1m0 2v1m0 170v1m0 4v1m0 9v1m0 22v1m0 5v1m0 5v1m0 6v4M615.5 214v1m0 14v1m0 41v1m0 272v2m0 7v1m0 4v1m0 8v1m0 3v1m0 41v2m0 3v1m0 11v1m0 5v1m0 11v1m0 4v2m0 12v6M616.5 238v1m0 2v1m0 123v1m0 6v1m0 6v1m0 10v1m0 88v1m0 8v1M617.5 255v1m0 60v1m0 6v1m0 84v1m0 3v1m0 86v1m0 81v1M618.5 279v1m0 60v1m0 13v1m0 92v1m0 112v1m0 20v1m0 24v1m0 19v6m0 13v1m0 8v1m0 22v1m0 11v1m0 11v1M619.5 218v1m0 12v1m0 60v1m0 15v1m0 48v1m0 110v1m0 33v1m0 25v1M620.5 333v1m0 2v1m0 52v1m0 20v1m0 114v1m0 11v1m0 4v1m0 8v2m0 12v5m0 8v1m0 6v1m0 33v1M621.5 254v1m0 6v1m0 79v1m0 9v1m0 78v1M622.5 230v1m0 60v1m0 76v1m0 87v1m0 18v1M623.5 250v1m0 54v1m0 4v1m0 96v1m0 11v1m0 4v1m0 85v1m0 5v1m0 22v1m0 7v1m0 17v1m0 21v1m0 13v1M624.5 279v1m0 153v1m0 138v4m0 25v1m0 28v1m0 19v2m0 1v8M625.5 213v1m0 78v1m0 181v1m0 13v1m0 18v1m0 6v1m0 22v3M626.5 314v1m0 11v1m0 210v1m0 5v1m0 10v1m0 4v2m0 36v1m0 9v2m0 17v1m0 10v2M627.5 205v1m0 206v1m0 11v1m0 2v1M628.5 213v1m0 150v1m0 3v2m0 95v1M629.5 279v1m0 7v1m0 111v1m0 95v1m0 42v1m0 6v1M630.5 253v1m0 1v1m0 49v1m0 5v1m0 111v1m0 33v1m0 97v1m0 20v1m0 12v1m0 7v3m0 20v1m0 18v1m0 22v1m0 34v3M631.5 217v1m0 49v1m0 58v1m0 1v1m0 16v1m0 2v1m0 108v1m0 9v1m0 37v1M632.5 233v1m0 54v1m0 14v1m0 56v1m0 4v1m0 8v1m0 133v4m0 8v1m0 4v1m0 26v1m0 7v1m0 11v1m0 9v1M633.5 249v1m0 161v1M634.5 222v1m0 4v1m0 43v1m0 64v1M635.5 247v1m0 45v1m0 7v1m0 66v1m0 139v1M636.5 212v1m0 1v1m0 42v1m0 58v1m0 8v1m0 209v1m0 8v1m0 30v1m0 15v1M637.5 231v1m0 51v1m0 1v1m0 8v1m0 1v1m0 68v1m0 62v2m0 2v1m0 11v1m0 12v1m0 118v1m0 31v1m0 20v1M638.5 261v1m0 46v1m0 2v1m0 64v1m0 3v1m0 5v1m0 109v1m0 33v1M639.5 221v1m0 57v1m0 46v1m0 8v1m0 77v1m0 112v5m0 11v6m0 38v2m0 10v2m0 24v18M640.5 292v1m0 1v1m0 68v1m0 11v1M641.5 210v1m0 58v1m0 41v1m0 8v1m0 61v1m0 4v1m0 6v1m0 111v1m0 8v1m0 21v1M642.5 221v1m0 52v1m0 7v1m0 61v1m0 84v1m0 1v1m0 16v1m0 1v1m0 89v1m0 11v1m0 18v2m0 13v4m0 40v7m0 43v1M643.5 234v1m0 13v1m0 52v1m0 1v1m0 62v1m0 1v1m0 87v1m0 11v1m0 6v1m0 18v1M644.5 217v1m0 37v1m0 6v1m0 58v1m0 8v1m0 82v1m0 4v1m0 86v6m0 13v3m0 21v1m0 11v2M645.5 226v1m0 1v1m0 46v1m0 4v1m0 2v1m0 69v1m0 6v1M646.5 244v1m0 11v1m0 48v1m0 4v1m0 5v1m0 69v1m0 3v1m0 81v1m0 15v1m0 6v1M647.5 209v1m0 53v1m0 59v1m0 8v1m0 79v1m0 4v1m0 2v1m0 167v1m0 97v2M648.5 286v1m0 2v1m0 2v1m0 66v1m0 9v1m0 87v1m0 11v1m0 190v22M649.5 239v1m0 6v1m0 4v1m0 57v1m0 1v1m0 6v1m0 59v1m0 10v1m0 14v1m0 96v1m0 3v2m0 28v1m0 24v2m0 7v4M650.5 260v1m0 4v1m0 67v1m0 85v1M651.5 231v1m0 1v1m0 8v1m0 45v1m0 71v1m0 2v1m0 4v1m0 2v1m0 2v1m0 73v1m0 1v1m0 33v1M652.5 251v1m0 58v2m0 1v1m0 3v1m0 7v1m0 65v1m0 7v1m0 19v1m0 100v1m0 9v1m0 37v1M653.5 268v1m0 4v1m0 2v1m0 1v1m0 63v1m0 82v1m0 19v1m0 201v6M654.5 236v1m0 55v1m0 1v1m0 2v1m0 7v1m0 53v1m0 10v1m0 7v1m0 88v3m0 7v4m0 10v2m0 3v1m0 18v1M655.5 250v1m0 4v1m0 67v1m0 77v1m0 1v1m0 6v1m0 4v1M656.5 223v1m0 6v1m0 1v1m0 40v1m0 2v1m0 65v1m0 9v1m0 73v1m0 11v1M657.5 239v1m0 55v1m0 2v1m0 2v1m0 11v1m0 57v1m0 3v1m0 104v1m0 6v1m0 16v1m0 7v1M658.5 219v1m0 41v1m0 7v1m0 4v1m0 47v2m0 79v2m0 2v1m0 1v1m0 2v1m0 4v1m0 4v1m0 96v2m0 2v1m0 12v1m0 15v1m0 30v2m0 25v3m0 33v1m0 19v1m0 17v1m0 4v4M659.5 239v1m0 42v1m0 2v1m0 63v1m0 4v1m0 92v1m0 2v1m0 4v3m0 192v3m0 9v3M660.5 209v1m0 56v1m0 38v1m0 2v1m0 2v1m0 11v1m0 69v1m0 93v4m0 10v6m0 14v1m0 8v1m0 16v1m0 9v4M661.5 330v1m0 6v1m0 10v1m0 2v1m0 79v1m0 6v1M662.5 249v1m0 2v1m0 57v1m0 2v1m0 44v1m0 18v1m0 1v1m0 70v1m0 20v1M663.5 272v1m0 52v1m0 2v1m0 2v1m0 5v1m0 62v2m0 10v1m0 2v2m0 115v1m0 57v1M664.5 299v1m0 51v2m0 6v1m0 67v1m0 6v3m0 21v1m0 109v3m0 18v1m0 23v1m0 12v1m0 15v1m0 6v2m0 14v3M665.5 214v1m0 51v1m0 1v1m0 47v1m0 3v1m0 1v1m0 64v1m0 2v2m0 77v5m0 11v7m0 13v1m0 13v1M666.5 234v1m0 50v1m0 2v1m0 1v1m0 48v1m0 13v1m0 73v1m0 19v1m0 156v11M667.5 364v1m0 2v1m0 8v1m0 79v1m0 15v1m0 12v1M668.5 208v1m0 1v1m0 117v1m0 2v1m0 3v1m0 60v1m0 4v1m0 10v1m0 94v1m0 11v1m0 24v2m0 50v1m0 22v1m0 10v2M669.5 230v1m0 126v1m0 3v1m0 15v1m0 56v1m0 15v1m0 169v4m0 3v1m0 1v3m0 17v7M670.5 252v1m0 72v1m0 3v1m0 56v2m0 2v1m0 4v1m0 6v1m0 9v1m0 86v1m0 16v1m0 8v3M671.5 213v1m0 1v1m0 57v1m0 69v1m0 3v1m0 7v1m0 2v1m0 66v1m0 6v1m0 21v2M672.5 292v1m0 77v1m0 7v1m0 86v1m0 15v1m0 30v2m0 5v2M673.5 221v1m0 1v1m0 31v1m0 2v1m0 1v1m0 56v1m0 84v2m0 14v1m0 7v1m0 90v2m0 31v4m0 30v1m0 25v1m0 19v1m0 16v1m0 6v1m0 7v1m0 5v1m0 7v1m0 1v3M674.5 242v1m0 1v1m0 92v1m0 3v1m0 2v1m0 4v1m0 90v2m0 15v1m0 16v1M675.5 267v1m0 34v1m0 61v1m0 3v1m0 3v1" stroke="#ffd300" fill="none"/>
<path d="M305.5 561v1m0 7v1m0 15v1m0 2v1m0 2v1m0 2v1m0 2v1m0 2v1M306.5 497v2m0 23v1m0 70v1m0 2v1m0 44v1M307.5 286v1m0 44v1m0 305v1m0 17v1m0 34v1m0 23v1M308.5 208v1m0 92v1m0 258v1m0 1v1m0 18v1m0 3v1m0 2v1m0 2v1m0 2v1m0 2v1m0 2v1m0 88v1m0 33v1m0 3v1m0 3v1M309.5 208v1m0 172v1m0 220v1m0 6v1m0 4v1m0 12v1m0 9v1m0 24v1M310.5 221v1m0 434v1m0 14v1m0 26v1M311.5 420v1m0 299v1m0 3v1M312.5 383v1m0 1v1m0 51v1m0 4v1M313.5 400v1m0 7v1M314.5 284v2m0 120v1m0 18v1m0 1v1m0 58v1m0 4v1m0 1v1m0 1v1m0 1v1M315.5 429v1m0 6v1m0 68v1m0 14v1m0 6v1m0 1v1m0 5v1M316.5 546v2m0 20v1M317.5 575v1m0 14v1m0 1v1m0 17v1m0 2v1M318.5 600v1m0 19v1m0 10v1M319.5 320v1m0 381v1m0 24v1M320.5 325v1m0 247v1m0 129v1m0 27v1M321.5 210v1m0 401v1m0 41v1m0 26v1M322.5 190v1m0 169v1m0 49v1m0 251v1m0 3v1m0 14v1m0 50v1M323.5 190v1m0 37v1m0 200v1m0 294v1M324.5 398v1m0 9v1m0 64v1m0 1v1m0 1v1M325.5 248v1m0 232v1m0 23v1m0 6v1M326.5 443v1m0 5v1m0 2v1m0 51v1m0 26v1m0 1v1m0 1v1m0 4v1M327.5 241v1m0 1v1m0 50v1m0 163v1m0 8v1m0 20v1m0 61v1m0 4v1m0 9v1m0 1v1m0 2v1m0 10v1m0 1v2m0 2v1m0 3v1M328.5 294v1m0 212v1m0 4v1m0 67v1m0 32v1m0 2v1m0 2v2m0 1v2M329.5 556v1m0 132v1M330.5 299v1m0 43v1m0 202v1m0 122v1m0 19v1m0 3v1m0 3v1m0 3v1m0 3v1m0 3v1M331.5 347v1m0 235v1m0 17v1m0 2v1m0 2v1m0 7v1M332.5 317v1M333.5 378v1m0 307v1m0 18v1m0 8v1M334.5 399v1m0 3v1m0 11v1m0 1v1M335.5 254v1m0 182v1m0 1v1m0 1v1M336.5 399v1m0 1v1M337.5 405v1m0 3v1m0 68v1m0 15v1m0 1v1M338.5 444v1m0 77v1m0 1v1m0 1v1m0 2v1m0 4v1M339.5 550v1m0 2v1m0 15v1m0 6v1M340.5 508v1m0 84v1m0 2v1m0 8v1m0 3v1m0 2v1m0 11v1M341.5 513v1m0 9v1m0 12v1m0 5v2m0 72v1m0 4v1m0 31v1M342.5 303v1m0 52v1m0 180v1m0 26v1m0 21v1M343.5 205v1m0 159v1m0 13v1m0 219v1m0 17v1M344.5 329v1m0 53v1m0 1v1m0 11v1m0 1v1m0 254v1M345.5 364v1m0 40v1m0 1v1m0 8v1m0 2v1m0 1v1m0 1v1m0 282v1M346.5 368v1m0 1v1m0 2v1m0 8v1m0 1v1m0 42v1m0 1v1m0 13v1m0 1v1m0 1v1M347.5 218v1m0 169v1m0 1v1m0 11v1m0 1v1m0 1v1m0 39v1m0 4v1m0 1v1m0 13v1m0 1v1m0 1v1m0 1v1M348.5 216v1m0 1v1m0 191v1m0 1v1m0 2v1m0 8v1m0 1v1m0 1v1m0 48v1m0 1v1m0 1v1m0 13v1M349.5 432v1m0 1v1m0 13v1m0 1v1m0 1v1m0 55v1m0 1v1m0 1v1m0 5v1M350.5 284v1m0 1v1m0 169v1m0 1v1m0 15v1m0 1v1m0 1v1m0 1v1m0 58v1m0 42v1m0 6v2M351.5 504v1m0 1v1m0 1v1m0 86v1m0 14v1m0 2v2m0 2v1m0 2v1m0 2v2m0 2v1M352.5 540v1m0 2v1m0 1v1m0 72v1m0 14v1M353.5 596v1m0 77v1m0 37v1m0 12v1M354.5 351v1m0 13v1m0 1v1M355.5 200v1m0 168v1m0 1v1m0 13v1m0 1v1m0 264v1m0 9v1M356.5 350v1m0 1v1m0 40v1m0 305v1m0 21v1M357.5 354v1m0 12v1m0 49v1m0 7v1M358.5 450v1M359.5 466v1m0 11v1M360.5 222v1m0 194v1m0 1v1m0 1v1m0 8v1m0 2v1m0 3v1m0 50v1m0 1v1m0 1v1m0 1v1m0 1v1m0 8v2m0 18v1M361.5 261v1m0 179v1m0 1v1m0 1v1m0 17v1m0 1v1m0 2v1m0 53v1m0 1v1m0 1v1m0 10v1m0 5v1M362.5 467v1m0 1v1m0 1v1m0 10v1m0 2v1m0 9v1m0 60v1m0 6v1m0 17v1m0 1v1m0 21v1m0 7v1M363.5 256v1m0 238v1m0 1v1m0 1v1m0 18v1m0 1v1m0 4v1m0 1v1m0 88v1m0 4v1m0 13v1m0 3v2M364.5 547v1m0 6v1m0 1v1m0 2v1m0 2v1m0 1v1m0 2v1m0 91v1M365.5 560v1m0 21v1m0 24v1m0 9v1m0 7v1m0 96v1M366.5 362v1m0 242v1m0 16v1m0 15v1m0 19v1m0 13v1M367.5 316v1m0 1v1m0 7v1m0 39v1m0 13v1m0 1v1m0 274v1m0 35v1M368.5 386v1m0 1v1M369.5 365v1m0 1v1m0 55v1m0 1v1m0 1v1M370.5 431v1m0 1v1m0 1v1m0 2v1m0 5v1m0 2v1m0 7v1M371.5 281v1m0 108v1m0 3v1m0 11v1m0 1v1m0 1v1m0 71v1M372.5 283v1m0 8v1m0 119v1m0 1v1m0 1v1m0 11v1m0 55v1m0 1v1m0 1v1m0 1v1m0 13v1m0 10v1M373.5 455v1m0 1v1m0 59v1m0 1v1m0 4v1m0 7v1m0 1v1m0 3v1m0 1v1m0 14v1M374.5 286v1m0 28v1m0 11v1m0 1v1m0 133v1m0 1v1m0 1v1m0 10v1m0 4v1m0 1v1m0 60v1m0 1v1m0 31v1m0 20v2M375.5 329v1m0 1v1m0 11v1m0 1v1m0 1v1m0 143v1m0 7v1m0 18v1m0 1v1m0 1v1m0 1v1m0 5v1m0 88v1m0 11v1m0 17v1m0 13v1M376.5 349v1m0 1v1m0 11v1m0 170v1m0 5v1m0 1v1m0 1v1m0 6v1m0 1v1m0 2v1m0 1v1m0 2v1m0 8v1m0 80v1M377.5 314v1m0 13v1m0 38v1m0 3v1m0 228v1M378.5 196v1m0 149v1m0 2v1m0 1v1m0 41v1m0 15v1m0 200v1m0 39v1m0 22v1M379.5 196v1m0 46v1m0 109v1m0 1v1m0 11v1m0 3v1m0 55v1m0 5v1m0 239v1m0 24v1M380.5 226v1m0 150v1m0 9v1m0 5v1m0 47v1m0 277v1m0 3v1M381.5 469v1m0 21v1M382.5 281v1m0 133v1m0 8v1m0 76v1m0 1v2m0 7v1M383.5 526v1m0 1v1m0 4v1m0 1v1m0 38v1M384.5 279v2m0 29v1m0 1v1m0 152v2m0 11v1m0 19v1m0 68v1m0 2v1m0 1v2m0 1v2m0 1v1m0 5v1m0 30v1M385.5 280v1m0 46v1m0 1v1m0 11v1m0 1v1m0 2v1m0 153v1m0 1v1m0 1v1m0 1v1m0 1v1m0 2v1m0 2v1m0 7v1m0 1v1m0 11v1m0 2v1M386.5 345v1m0 1v1m0 13v1m0 1v1m0 169v1m0 28v1m0 2v1m0 2v1m0 1v2m0 1v1m0 2v2m0 81v1m0 14v1m0 44v1M387.5 311v1m0 53v1m0 1v1m0 217v1m0 40v1m0 98v1m0 3v1M388.5 346v1m0 1v1m0 322v1M389.5 245v1m0 104v1m0 1v1m0 319v1m0 20v1m0 22v1m0 13v1M390.5 245v1m0 9v1m0 194v1M391.5 277v1m0 113v1m0 15v1m0 5v1m0 44v1m0 19v1m0 11v1M392.5 279v1m0 132v1m0 18v1m0 56v1m0 11v1m0 25v1M393.5 305v1m0 133v1m0 78v1m0 14v1m0 1v1m0 12v1m0 18v1m0 1v1M394.5 323v1m0 176v1m0 58v1m0 4v1m0 2v1m0 1v2m0 1v2m0 1v2m0 2v1m0 35v1M395.5 325v1m0 1v1m0 11v1m0 167v1m0 14v1m0 11v1m0 104v1m0 42v1M396.5 343v1m0 184v1m0 10v1m0 3v2m0 3v1m0 3v1m0 9v1m0 2v1m0 4v1m0 2v1m0 2v1m0 3v1m0 76v1M397.5 362v1m0 5v1m0 9v1m0 195v1m0 2v1m0 2v1m0 7v1m0 19v1m0 4v1m0 1v1m0 6v1m0 8v1m0 91v1m0 3v1M398.5 332v1m0 11v1m0 3v1m0 41v1m0 227v1m0 35v1m0 15v1m0 26v1M399.5 246v1m0 101v1m0 19v1m0 37v1m0 313v1m0 7v2M400.5 383v1m0 47v1m0 16v1M401.5 413v1m0 44v1M402.5 413v1m0 7v1m0 19v1m0 60v1M403.5 438v1m0 17v1m0 66v1m0 16v1m0 31v1m0 4v1M404.5 323v1m0 153v1m0 26v1m0 61v1m0 15v1m0 38v1M405.5 294v1m0 27v1m0 2v1m0 13v1m0 1v1m0 156v1m0 13v1m0 2v1m0 23v1m0 65v1m0 11v1m0 48v1M406.5 294v1m0 48v1m0 1v1m0 16v1m0 167v1m0 5v1m0 4v1m0 2v1m0 2v1m0 1v1m0 33v1m0 77v1m0 22v1m0 41v1M407.5 208v1m0 118v1m0 244v1m0 9v1m0 11v1m0 8v1m0 11v2m0 2v1m0 3v1m0 2v1M408.5 201v1m0 127v1m0 4v1m0 9v1m0 1v1m0 277v1m0 36v1m0 31v1M409.5 201v1m0 50v1m0 1v1m0 93v1m0 1v1m0 1v1m0 53v1m0 7v1m0 303v1M410.5 254v1m0 12v1m0 1v1m0 172v1M411.5 269v1m0 14v1m0 209v1M412.5 286v1m0 1v2m0 131v1m0 18v1m0 66v1m0 5v1M413.5 305v1m0 131v1m0 11v1m0 6v1m0 84v1m0 4v1m0 6v1m0 21v1M414.5 335v1m0 1v1m0 2v1m0 127v1m0 10v1m0 2v1m0 24v1m0 63v1m0 2v2m0 2v1m0 2v1m0 3v1m0 14v1m0 21v2M415.5 339v1m0 1v1m0 15v1m0 155v1m0 12v1m0 15v1m0 103v1m0 10v1M416.5 212v1m0 146v1m0 179v1m0 2v1m0 2v1m0 2v1m0 1v2m0 2v1m0 10v1m0 3v1m0 12v1m0 3v1m0 107v1m0 35v1m0 3v1M417.5 327v1m0 16v2m0 34v1m0 5v1m0 9v1m0 7v1m0 180v1m0 8v1m0 12v1m0 5v1m0 25v1M418.5 256v1m0 1v1m0 89v1m0 53v1m0 9v1m0 5v1m0 214v1m0 29v1M419.5 228v1m0 29v1m0 105v1m0 79v1m0 262v1M420.5 292v1m0 160v1M421.5 419v1m0 5v1m0 12v1m0 45v1m0 16v1m0 5v1m0 2v1M422.5 323v1m0 111v1m0 18v1m0 10v1m0 105v1m0 2v1M423.5 330v1m0 9v1m0 1v1m0 1v1m0 118v1m0 21v1m0 13v1m0 65v1m0 12v1m0 3v1m0 3v1m0 9v1m0 21v2M424.5 295v1m0 3v1m0 65v1m0 155v1m0 15v1m0 70v1m0 14v1m0 19v1m0 3v1m0 3v1m0 1v1M425.5 328v1m0 36v1m0 5v1m0 162v1m0 2v1m0 4v1m0 2v1m0 2v1m0 7v1m0 6v1m0 15v1m0 2v1m0 85v1m0 44v1M426.5 229v1m0 102v1m0 1v1m0 68v1m0 176v1m0 1v1m0 4v1m0 1v1m0 19v1m0 22v1m0 1v1M427.5 237v1m0 117v1m0 9v1m0 75v1m0 184v1m0 3v1m0 19v1m0 14v1m0 30v1M428.5 370v1m0 8v1m0 57v1m0 249v1M429.5 239v1m0 161v1m0 80v1m0 5v1M430.5 241v1m0 185v1m0 19v1m0 49v2m0 16v1m0 31v1M431.5 306v1m0 138v1m0 10v1m0 8v1m0 71v1m0 18v1M432.5 209v1m0 1v1m0 74v1m0 202v1m0 2v1m0 2v1m0 2v1m0 19v1m0 78v1m0 3v1m0 2v1m0 15v1m0 3v1m0 3v1m0 3v1m0 3v2m0 2v2M433.5 209v1m0 1v1m0 130v1m0 1v1m0 184v1m0 26v1m0 4v1m0 111v1M434.5 196v1m0 129v1m0 2v1m0 37v1m0 9v1m0 6v1m0 165v1m0 2v1m0 2v1m0 3v1m0 2v1m0 2v1m0 16v1m0 14v1m0 3v1m0 9v1m0 77v1m0 12v1M435.5 256v1m0 87v1m0 56v1m0 199v1M436.5 354v1m0 52v1m0 10v1m0 5v1m0 13v1m0 231v1m0 6v1m0 19v1m0 30v2M437.5 374v1m0 72v1M438.5 240v1m0 13v1m0 1v1m0 134v1m0 7v1m0 8v1m0 9v1m0 65v1m0 17v2M439.5 319v1m0 1v1m0 102v1m0 19v1m0 1v1m0 47v1m0 22v1m0 3v2M440.5 285v1m0 37v1m0 12v1m0 5v1m0 99v1m0 88v1m0 20v1m0 12v1M441.5 289v1m0 49v1m0 22v1m0 106v1m0 22v1m0 2v1m0 86v2m0 10v1m0 3v1m0 2v1m0 16v1m0 2v2m0 2v2m0 2v2m0 2v2m0 4v1M442.5 313v2m0 9v1m0 1v1m0 35v1m0 13v1m0 145v1m0 3v1m0 7v1m0 18v1m0 4v1m0 78v1m0 1v1m0 31v1m0 8v1M443.5 328v1m0 1v1m0 2v1m0 49v2m0 16v1m0 140v1m0 6v2m0 2v1m0 2v1m0 2v1m0 2v2m0 16v1m0 3v1m0 2v2m0 2v2m0 2v1m0 3v1m0 2v1m0 6v1m0 78v1M444.5 407v1m0 188v1m0 5v1m0 31v1M445.5 384v1m0 48v1m0 211v1m0 9v1m0 19v1M446.5 290v1m0 110v1m0 106v1m0 212v1M447.5 253v1m0 162v1m0 103v1m0 3v1m0 21v1M448.5 282v1m0 28v1m0 2v1m0 11v1m0 1v1m0 129v1m0 75v1m0 32v1m0 26v1M449.5 195v1m0 137v1m0 137v1m0 18v1m0 4v1m0 20v1m0 90v1m0 15v1m0 12v1m0 3v2m0 2v2m0 2v1M450.5 299v1m0 228v1m0 29v1m0 4v1m0 69v1m0 14v1m0 72v1M451.5 318v1m0 12v1m0 1v1m0 1v1m0 51v1m0 162v2m0 31v1m0 20v1m0 2v1m0 117v1M452.5 355v1m0 47v1m0 8v1m0 9v1m0 170v1m0 9v2m0 2v2m0 2v2m0 2v1m0 20v1m0 10v1m0 17v1M453.5 247v1m0 410v1m0 6v1m0 24v1m0 18v1m0 17v1M454.5 488v1m0 233v1M455.5 299v1m0 197v1m0 5v1M456.5 252v1m0 47v1m0 138v1m0 1v1m0 5v1m0 67v1M457.5 316v1m0 2v1m0 2v1m0 10v1m0 1v1m0 1v1m0 221v1m0 22v1m0 36v2M458.5 353v1m0 153v1m0 6v1m0 21v1m0 67v1m0 10v1m0 3v2m0 2v2m0 2v2m0 3v2m0 10v1M459.5 304v1m0 17v1m0 34v1m0 15v1m0 9v1m0 168v1m0 31v1m0 84v1m0 24v1m0 31v1M460.5 252v1m0 74v1m0 52v1m0 194v1m0 11v1m0 3v1m0 21v1m0 2v2m0 2v2m0 2v2M461.5 359v1m0 65v1m0 196v1m0 3v1m0 73v1m0 7v1M462.5 273v1m0 159v1m0 14v1m0 4v1m0 246v1m0 13v1M463.5 389v1m0 8v1m0 17v1m0 66v1M464.5 261v1m0 170v1m0 14v1m0 70v1m0 29v1m0 2v1M465.5 325v1m0 2v1m0 10v1m0 1v1m0 1v1m0 138v1m0 78v1m0 34v1m0 2v1m0 3v1M466.5 309v1m0 40v1m0 15v1m0 128v1m0 84v1m0 5v2m0 22v1m0 17v2m0 3v2m0 3v2m0 3v2m0 2v1M467.5 220v1m0 105v1m0 1v1m0 37v1m0 6v1m0 135v1m0 28v1m0 97v1m0 65v1m0 2v1M468.5 333v1m0 54v1m0 158v1m0 5v1m0 20v1m0 12v2m0 17v2m0 2v1m0 1v1m0 113v1M469.5 351v1m0 22v2m0 72v1m0 158v1m0 2v2m0 3v1m0 52v1M470.5 216v1m0 173v1m0 74v1m0 19v1m0 182v1m0 4v1m0 4v1m0 7v1m0 30v1M471.5 475v1m0 18v1m0 3v1M472.5 435v1m0 1v1m0 103v1m0 23v1m0 5v1M473.5 203v1m0 267v1m0 3v1m0 80v1m0 34v1M474.5 285v1m0 38v1m0 1v1m0 15v1m0 142v1m0 19v1m0 6v1m0 89v1m0 10v2m0 3v1m0 3v2m0 3v2m0 9v1M475.5 289v1m0 7v1m0 46v1m0 4v1m0 171v1m0 24v1m0 10v1m0 20v2m0 132v1m0 9v1M476.5 325v1m0 1v1m0 37v1m0 14v1m0 11v1m0 181v1m0 13v1m0 3v1m0 21v2m0 3v2M477.5 256v1m0 1v1m0 75v1m0 71v1m0 11v1m0 202v1m0 8v1m0 44v1M478.5 358v1m0 14v1m0 75v1m0 262v1m0 9v2M479.5 442v1M480.5 408v1m0 18v1m0 73v1m0 22v1M481.5 334v1m0 109v1m0 65v1m0 33v1m0 24v1m0 2v1M482.5 296v1m0 41v1m0 2v1m0 15v1m0 114v1m0 2v1m0 120v1m0 22v2M483.5 364v1m0 171v1m0 77v2m0 8v2m0 2v2m0 3v2m0 45v1m0 13v1M484.5 217v1m0 107v1m0 11v1m0 1v1m0 1v1m0 38v1m0 142v1m0 25v1m0 4v1m0 3v1m0 24v1m0 133v1m0 4v1M485.5 344v1m0 1v1m0 1v1m0 226v1m0 21v2m0 2v1m0 15v1m0 2v2m0 19v1m0 4v1M486.5 381v1m0 74v1m0 16v1m0 155v1m0 80v1m0 3v1M487.5 388v1m0 9v2m0 5v1m0 60v1m0 256v1M488.5 427v1m0 103v2M489.5 485v1m0 59v1m0 35v1m0 22v2M490.5 200v1m0 54v1m0 61v1m0 178v2m0 3v1m0 22v2m0 70v1m0 2v2m0 18v2m0 2v1M491.5 271v1m0 50v1m0 1v1m0 16v1m0 195v1m0 8v1m0 21v1m0 82v1m0 37v1m0 4v1m0 30v1M492.5 294v1m0 45v2m0 6v1m0 17v1m0 189v1m0 25v1m0 18v2m0 3v2m0 2v3m0 2v2m0 12v1M493.5 204v1m0 28v1m0 89v1m0 1v1m0 283v1m0 7v1m0 21v1M494.5 263v1m0 5v1m0 60v1m0 1v1m0 15v1m0 69v1m0 1v1m0 251v1M495.5 240v1m0 107v1m0 8v1m0 4v1M496.5 369v1M497.5 310v1m0 6v1m0 6v1m0 152v1M498.5 202v1m0 75v1m0 60v1m0 1v1m0 2v1m0 204v1m0 32v1M499.5 346v1m0 4v1m0 7v1m0 1v1m0 6v1m0 106v1m0 87v1m0 41v1m0 19v2m0 3v2m0 11v1M500.5 376v1m0 17v1m0 116v1m0 118v2m0 3v2m0 3v1m0 1v1m0 2v1m0 12v1m0 43v1M501.5 202v1m0 38v1m0 90v1m0 14v1m0 1v1m0 42v1m0 164v1m0 8v1m0 23v2m0 7v1m0 86v1m0 15v1M502.5 354v1m0 81v1m0 2v2m0 136v1m0 7v2m0 4v1m0 4v1m0 4v2m0 3v1m0 24v1m0 17v1M503.5 277v1m0 106v1m0 1v1m0 16v1m0 45v2m0 46v1m0 141v1m0 9v1m0 12v1m0 28v1m0 1v1m0 25v1m0 4v1M504.5 288v1m0 8v1m0 121v1m0 87v1m0 31v1m0 173v1M505.5 446v1m0 109v1m0 4v1m0 3v1m0 21v1m0 5v1M506.5 344v1m0 1v1m0 139v1m0 94v1m0 15v2m0 3v2m0 22v1m0 10v1M507.5 311v1m0 44v1m0 8v1m0 133v2m0 27v1m0 2v1m0 19v2m0 2v1M508.5 334v1m0 58v1m0 152v2m0 3v1m0 4v2m0 3v2m0 24v1m0 1v1m0 10v1M509.5 352v1m0 1v1m0 2v1m0 237v1m0 54v1M510.5 275v1m0 86v1m0 12v1m0 7v1m0 47v1m0 15v1m0 4v1M511.5 382v1m0 10v1m0 69v1m0 47v1M512.5 312v1m0 115v1m0 16v1m0 76v1m0 9v1M513.5 211v1m0 107v1m0 228v1m0 20v2m0 8v1m0 7v1m0 4v2m0 4v2m0 3v2m0 4v1m0 7v1m0 6v1M514.5 223v1m0 10v1m0 112v1m0 10v1m0 1v1m0 2v1m0 1v1m0 134v1m0 175v1m0 17v1M515.5 248v1m0 58v1m0 58v1m0 1v1m0 2v1m0 2v1m0 17v1m0 140v2m0 5v1m0 9v1m0 3v2m0 3v2m0 4v2m0 12v1m0 102v1m0 31v1m0 3v2M516.5 208v1m0 137v1m0 3v1m0 50v1m0 8v1m0 161v1m0 43v1M517.5 277v1m0 75v1m0 12v1m0 5v1m0 59v1m0 7v1m0 16v1m0 162v1m0 36v1m0 20v1M518.5 377v1m0 5v1m0 7v1m0 59v1m0 23v1m0 18v1m0 2v1m0 204v1m0 17v2M519.5 256v1m0 51v1m0 93v1m0 10v1m0 6v1m0 67v1m0 19v1m0 30v1m0 1v1M520.5 271v1m0 61v1m0 7v1m0 2v1m0 101v1m0 4v1m0 18v1m0 63v1m0 16v1m0 17v1m0 4v1m0 5v1m0 5v2m0 4v1m0 4v1M521.5 207v1m0 10v1m0 77v1m0 52v1m0 1v1m0 17v1m0 93v1m0 22v1m0 25v1m0 78v1m0 20v1M522.5 241v1m0 75v1m0 1v1m0 52v1m0 124v1m0 6v2m0 9v1m0 4v2m0 14v1m0 4v2m0 4v2m0 8v1m0 92v1m0 55v2m0 5v1m0 5v2M523.5 246v1m0 87v1m0 14v1m0 2v1m0 46v1m0 8v1m0 8v1m0 187v1m0 8v1M524.5 355v1m0 1v1m0 2v1m0 3v1m0 13v1m0 1v1m0 44v1m0 14v1m0 4v1m0 162v1m0 2v1m0 27v1m0 12v1m0 17v1M525.5 235v1m0 145v1m0 75v1m0 26v1m0 25v1m0 167v1m0 35v1M526.5 248v1m0 176v1m0 69v1m0 3v1m0 19v1m0 37v1M527.5 211v1m0 264v2m0 72v2m0 4v1m0 4v2m0 4v2m0 5v1m0 16v1m0 4v2m0 4v2m0 18v1m0 6v1M528.5 490v2m0 8v1m0 99v1m0 3v1m0 35v1m0 73v1M529.5 299v1m0 63v2m0 9v1m0 139v1m0 5v1m0 4v2m0 3v2m0 19v1m0 1v1m0 8v1m0 7v1m0 5v1M530.5 268v1m0 120v1m0 2v1m0 177v1m0 14v1m0 20v1m0 35v1M531.5 346v1m0 15v1m0 54v1m0 6v1m0 21v1m0 2v1m0 176v1m0 21v1m0 30v2m0 12v1m0 23v1m0 4v1M532.5 382v1m0 4v1m0 2v1m0 55v1m0 11v1m0 5v1m0 3v1M533.5 263v1m0 53v1m0 78v1m0 2v1m0 2v1m0 3v1m0 5v1m0 2v1m0 2v1m0 2v1m0 4v1m0 54v2m0 15v1m0 11v1M534.5 330v1m0 97v2m0 2v1m0 11v1m0 2v1m0 8v1m0 75v2m0 4v2m0 4v1m0 24v3m0 4v2M535.5 302v1m0 68v1m0 2v1m0 5v1m0 83v1m0 3v2m0 7v1m0 5v2m0 9v1m0 79v1m0 41v1m0 30v1M536.5 208v1m0 110v1m0 60v1m0 1v1m0 2v1m0 2v1m0 3v1m0 3v1m0 13v1m0 80v1m0 18v1m0 1v1m0 42v1m0 105v1m0 30v1m0 18v1M537.5 352v1m0 2v1m0 2v1m0 48v1m0 11v1m0 9v1m0 108v1m0 25v1m0 58v1M538.5 244v1m0 133v1m0 1v1m0 2v1m0 2v1m0 3v1m0 50v1m0 203v1m0 38v1m0 2v1m0 3v1m0 6v1m0 8v1M539.5 392v1m0 2v1m0 2v1m0 6v1m0 4v1m0 6v1m0 76v2m0 3v1m0 185v2m0 26v1M540.5 423v1m0 3v1m0 13v1m0 73v1m0 6v2m0 4v2m0 4v2m0 12v1m0 5v1m0 10v2m0 4v2m0 4v1m0 1v1m0 6v1m0 8v1M541.5 291v1m0 7v1m0 154v1m0 2v2m0 21v1m0 10v1m0 6v2m0 90v1m0 29v1m0 9v1m0 2v1m0 48v1M542.5 196v1m0 295v1m0 3v2m0 3v1m0 18v1m0 173v1m0 13v1m0 1v1M543.5 281v1m0 68v2m0 189v1M544.5 231v1m0 77v1m0 9v1m0 48v1m0 7v1m0 2v1m0 1v2m0 222v1m0 37v2m0 5v1m0 48v1M545.5 258v1m0 63v1m0 17v1m0 44v1m0 1v1m0 2v1m0 2v1m0 9v1m0 11v1m0 296v1M546.5 278v1m0 87v1m0 53v1m0 2v1m0 5v1m0 4v1m0 11v1M547.5 230v1m0 10v1m0 143v1m0 2v1m0 58v1m0 2v2m0 3v1m0 9v1m0 25v1m0 1v1M548.5 201v1m0 45v1m0 4v1m0 44v1m0 97v1m0 1v2m0 15v1m0 2v1m0 3v1m0 63v1m0 3v2m0 4v2m0 4v1m0 4v1m0 12v2m0 4v2m0 4v2m0 4v1M549.5 270v1m0 151v1m0 2v1m0 5v1m0 9v1m0 5v2m0 3v1m0 3v1m0 76v1m0 16v1m0 26v1m0 6v1m0 6v1m0 9v1m0 10v1M550.5 235v1m0 55v1m0 174v1m0 24v2m0 9v1m0 91v1m0 3v1m0 31v1m0 81v1M551.5 200v1m0 171v1m0 11v2m0 2v1m0 106v1m0 27v1m0 5v1m0 18v1m0 13v2m0 131v1m0 22v1M552.5 253v1m0 149v1m0 13v2m0 2v1m0 161v2m0 5v1m0 49v3M553.5 291v1m0 62v1m0 5v1m0 2v1m0 3v1m0 60v1m0 13v1m0 6v1m0 4v1m0 3v1m0 162v1m0 28v1m0 3v1m0 9v1m0 4v2m0 14v1m0 14v1m0 4v1m0 1v1M554.5 380v1m0 2v1m0 80v1m0 4v1m0 20v2m0 4v2m0 5v2m0 7v1M555.5 273v1m0 59v1m0 87v1m0 11v1m0 110v1m0 6v1M556.5 209v1m0 140v1m0 84v1m0 11v1m0 129v1m0 10v1m0 7v1m0 18v1m0 10v1M557.5 363v1m0 2v1m0 124v1m0 2v1m0 2v1m0 25v1m0 152v1m0 11v1m0 2v1m0 5v1m0 7v2m0 7v1m0 5v2M558.5 201v1m0 140v1m0 55v1m0 9v1m0 2v1m0 103v1m0 7v1m0 2v1m0 21v2m0 7v1m0 35v1M559.5 353v1m0 80v1m0 4v2m0 3v1m0 4v1m0 159v1m0 4v1m0 1v1m0 14v1m0 43v1m0 2v1m0 12v2M560.5 226v1m0 143v1m0 2v1m0 76v1m0 12v1m0 1v1m0 15v2m0 5v1m0 179v3m0 12v1m0 9v1m0 5v2M561.5 243v1m0 61v1m0 90v1m0 4v1m0 6v1m0 121v1M562.5 277v1m0 162v1m0 1v1m0 24v1m0 1v1m0 75v1m0 57v1m0 20v1m0 18v1M563.5 226v1m0 56v2m0 6v1m0 4v1m0 46v1m0 13v1m0 2v1m0 109v1m0 42v1m0 2v1m0 91v1m0 2v1m0 47v1m0 8v1m0 10v2m0 8v1m0 8v1m0 16v1M564.5 228v1m0 134v1m0 172v1m0 18v1m0 7v1m0 3v1m0 3v1m0 6v1M565.5 245v1m0 171v1m0 142v1m0 10v1m0 24v1m0 34v1m0 25v1m0 4v1m0 8v1m0 1v1M566.5 233v1m0 125v1m0 79v1m0 1v1m0 10v1m0 4v1m0 196v1m0 16v1m0 2v1m0 14v3M567.5 479v1m0 18v1M568.5 311v1m0 93v1m0 1v1m0 6v1m0 123v1M569.5 280v1m0 2v1m0 55v1m0 98v1m0 12v1m0 17v1m0 6v1m0 99v1m0 56v1m0 39v1M570.5 237v1m0 66v1m0 167v1m0 5v1m0 199v1m0 3v1m0 7v1m0 7v1m0 5v2M571.5 202v1m0 43v1m0 71v1m0 77v1m0 8v1m0 138v3m0 5v1m0 25v1m0 7v1M572.5 221v1m0 377v1m0 2v1m0 7v1m0 5v3m0 30v3m0 21v1m0 7v1m0 8v2M573.5 238v1m0 12v1m0 33v1m0 93v1m0 72v1m0 4v1m0 26v1m0 1v1M574.5 257v1m0 144v1m0 103v1m0 11v1m0 2v1M575.5 331v1m0 18v1m0 66v1m0 12v1m0 2v1m0 7v1m0 95v1m0 37v1m0 3v1m0 46v2M576.5 292v2m0 158v1m0 3v1m0 10v1m0 29v1m0 4v1m0 103v1m0 8v1m0 8v1m0 8v1m0 8v1m0 12v1m0 5v2m0 16v1m0 2v1m0 26v1M577.5 217v1m0 172v1m0 18v1m0 84v1m0 17v1m0 6v1m0 5v1m0 22v1M578.5 343v1m0 206v2m0 16v1m0 5v1m0 1v1m0 33v1m0 19v1m0 6v1m0 1v1m0 6v3M579.5 235v1m0 136v1m0 69v1m0 8v1m0 39v1M580.5 253v1m0 9v1M581.5 227v1m0 3v1m0 40v1m0 148v1m0 125v1m0 20v1m0 62v1m0 19v1M582.5 202v1m0 273v1m0 28v1m0 2v1m0 145v1m0 8v1m0 8v1m0 4v1m0 3v1m0 7v1M583.5 325v1m0 174v1m0 65v1m0 5v2M584.5 227v1m0 62v1m0 7v1m0 46v1m0 15v1m0 201v1m0 18v2m0 6v2m0 34v3m0 6v1m0 8v1m0 1v1m0 6v3m0 7v2m0 7v2M585.5 259v1m0 43v1M586.5 224v1m0 5v1m0 97v1m0 2v1m0 2v1m0 58v1M587.5 246v1m0 40v1m0 4v1m0 7v1m0 66v1m0 63v1m0 34v1m0 1v1M588.5 266v1m0 46v1m0 7v1m0 198v1M589.5 217v1m0 58v1m0 1v1m0 140v2m0 2v1m0 14v1m0 90v1m0 10v1m0 58v2M590.5 363v1m0 2v1m0 88v1m0 129v1m0 42v1m0 8v4m0 13v1m0 12v1m0 12v1m0 19v1M591.5 250v1m0 6v1m0 125v1m0 23v1m0 71v1m0 8v1m0 14v1M592.5 533v1m0 14v1m0 6v1m0 2v1m0 19v2m0 2v1m0 19v1m0 12v1m0 3v1m0 8v1M593.5 233v1m0 14v1m0 34v1m0 4v1m0 1v1m0 2v1m0 162v1m0 12v1m0 14v1M594.5 257v1m0 66v1m0 70v1m0 17v1M595.5 327v1m0 212v1m0 38v1m0 1v2m0 7v1m0 29v1m0 17v1m0 25v1m0 3v1M596.5 363v1m0 93v1m0 37v1m0 8v1m0 122v1m0 23v1m0 42v1M597.5 212v1m0 197v1m0 92v1m0 9v1m0 25v1m0 24v1M598.5 270v1m0 4v1m0 63v1m0 91v1m0 12v1m0 127v2M599.5 247v1m0 140v1m0 63v1m0 18v1M600.5 212v1m0 100v1m0 14v1m0 159v1m0 55v1m0 10v1M601.5 285v1m0 138v1m0 10v1m0 7v1m0 7v1m0 120v1m0 5v1m0 12v3m0 34v1m0 54v1m0 5v1M602.5 309v1m0 62v1m0 109v3m0 27v1m0 143v1m0 18v1m0 23v3M603.5 207v1m0 3v1m0 7v1m0 46v1m0 1v1m0 53v2m0 186v2m0 6v1m0 9v1m0 2v1m0 17v2m0 1v1m0 6v1m0 23v4M604.5 288v1m0 149v1m0 29v1M605.5 205v1m0 42v1m0 131v1m0 5v1m0 85v1m0 7v1m0 34v1m0 8v1M606.5 209v1m0 10v1m0 1v1m0 50v1m0 40v1m0 104v1m0 19v1m0 71v1m0 49v1m0 18v1m0 7v1m0 21v1M607.5 288v1m0 60v1m0 95v1m0 8v1m0 12v1m0 15v1m0 1v1m0 96v1m0 42v1m0 22v1M608.5 253v1m0 233v1m0 15v1m0 1v2m0 6v1M609.5 262v1m0 4v1m0 55v1m0 13v1m0 2v1m0 197v1m0 8v1m0 3v1m0 8v4m0 37v3m0 1v1m0 10v5m0 11v5M610.5 231v1m0 213v1m0 2v1M611.5 201v1m0 56v1m0 56v1m0 214v1M612.5 277v1m0 73v1m0 89v1m0 75v2m0 43v1m0 27v1m0 15v1m0 8v1m0 15v1M613.5 229v1m0 3v1m0 1v1m0 142v1m0 77v1m0 6v1m0 129v2m0 46v1m0 18v1m0 7v1m0 12v3M614.5 212v1m0 108v1m0 2v1m0 162v1m0 19v1m0 2v1m0 7v1M615.5 268v1m0 12v1m0 66v1m0 8v1m0 64v1m0 131v4m0 10v3m0 44v3m0 13v5m0 13v4M616.5 291v1m0 75v1m0 10v1m0 9v1M617.5 320v1m0 88v1m0 16v2m0 105v1m0 5v1m0 18v1m0 7v1M618.5 214v1m0 116v1m0 9v1m0 11v1m0 207v1m0 3v1m0 7v1m0 72v1m0 53v1M619.5 383v1m0 85v1m0 4v1m0 18v1m0 19v1m0 11v1m0 1v1M620.5 240v1m0 85v1m0 66v1m0 135v1m0 8v1m0 2v1m0 37v1m0 4v1m0 10v2m0 3v2m0 11v6M621.5 215v1m0 55v1m0 87v1m0 60v1m0 12v1M622.5 279v1m0 4v1m0 7v1m0 82v1m0 3v2m0 14v1m0 61v2m0 11v1m0 39v1M623.5 243v1m0 4v1m0 48v1m0 101v1m0 12v2m0 15v1m0 75v1m0 18v1m0 6v1m0 25v1m0 19v1M624.5 262v1m0 68v1m0 3v1m0 98v1m0 18v1m0 19v1m0 2v1m0 111v1m0 26v1m0 36v1M625.5 290v1m0 66v1m0 117v1m0 1v1m0 5v1m0 11v1m0 2v2m0 21v1m0 6v1M626.5 223v1m0 87v2m0 62v1m0 3v1m0 1v1m0 156v5m0 12v4m0 39v2m0 6v1m0 20v10M627.5 341v1m0 64v1M628.5 209v1m0 1v1m0 52v1m0 2v1m0 94v1m0 8v1m0 117v1m0 1v1M629.5 228v1m0 53v1m0 6v1m0 7v1m0 113v1m0 89v1m0 13v1m0 6v1m0 32v1M630.5 246v1m0 4v1m0 54v1m0 126v1m0 3v1m0 109v1m0 17v1m0 24v2m0 2v3m0 24v1m0 16v1m0 24v1m0 30v3M631.5 213v1m0 1v1m0 10v1m0 45v1m0 185v1m0 13v1m0 2v1m0 10v1m0 23v1M632.5 235v1m0 4v1m0 3v1m0 61v1m0 57v1m0 156v4m0 28v1m0 5v1m0 13v2m0 5v2M633.5 209v1m0 44v1m0 66v1m0 60v1m0 12v1M634.5 220v1m0 53v1m0 4v1m0 4v1m0 2v1m0 57v1m0 79v1m0 13v1m0 8v1m0 2v1M635.5 238v1m0 6v1m0 49v1m0 2v1m0 67v1m0 6v1m0 2v1m0 78v1m0 30v1m0 4v1m0 13v1m0 1v1M636.5 262v1m0 7v1m0 64v1m0 59v1m0 7v1m0 4v1m0 10v1m0 170v1M637.5 229v1m0 50v1m0 66v1m0 3v1m0 7v1m0 78v1m0 6v2m0 18v1m0 2v1m0 108v1m0 12v1m0 18v1m0 18v1M638.5 247v1m0 1v1m0 52v1m0 2v1m0 13v2m0 60v1m0 2v1m0 89v1m0 9v1m0 3v1m0 20v1m0 14v1m0 3v2M639.5 266v1m0 4v1m0 136v1m0 7v1m0 17v1m0 153v10M640.5 234v1m0 1v1m0 4v1m0 47v1m0 7v1m0 4v1m0 52v1m0 83v1m0 2v1m0 14v1M641.5 257v1m0 133v1m0 3v1m0 2v1m0 10v1m0 73v1m0 67v1M642.5 277v1m0 1v1m0 4v1m0 57v1m0 80v1m0 1v1m0 4v1m0 18v1m0 91v1m0 9v1m0 21v1m0 9v3m0 51v4m0 38v1M643.5 241v1m0 56v1m0 7v1m0 8v1m0 49v1m0 10v2m0 5v1m0 73v2m0 6v3m0 8v1m0 10v1M644.5 211v1m0 112v1m0 2v1m0 68v2m0 6v1m0 1v1m0 142v11M645.5 230v1m0 4v1m0 49v1m0 70v1m0 13v1m0 59v1m0 42v1M646.5 253v1m0 45v1m0 2v1m0 74v2m0 3v1m0 6v1m0 86v1m0 61v1M647.5 215v1m0 55v1m0 54v1m0 2v1m0 11v1m0 73v1m0 5v1m0 108v1m0 7v1m0 12v1m0 12v1m0 24v1m0 94v2M648.5 232v1m0 123v1m0 93v1m0 1v1m0 5v1m0 7v2m0 23v1M649.5 317v1m0 3v1m0 68v1m0 2v1m0 108v3m0 31v1m0 7v1m0 17v7M650.5 222v1m0 50v1m0 62v1m0 2v1m0 3v1m0 78v1m0 1v1m0 18v1M651.5 235v1m0 47v1m0 7v1m0 72v1m0 2v1m0 14v1m0 66v1m0 8v1m0 8v1M652.5 249v1m0 58v1m0 11v1m0 2v1m0 71v2m0 3v1m0 3v2m0 2v1m0 4v1m0 87v1m0 7v1m0 11v1m0 6v2m0 16v1M653.5 218v1m0 52v1m0 60v1m0 8v1m0 88v2m0 4v2m0 11v1m0 7v1M654.5 300v1m0 7v1m0 56v1m0 3v1m0 6v1m0 116v3m0 11v1m0 6v1M655.5 210v1m0 52v1m0 1v1m0 51v1m0 2v1m0 6v1m0 4v1m0 61v1M656.5 225v1m0 61v1m0 58v1m0 2v1m0 3v1m0 87v1m0 14v1M657.5 304v1m0 77v1m0 12v1M658.5 266v1m0 59v1m0 2v1m0 3v1m0 79v1m0 107v2m0 14v1m0 13v1m0 33v2m0 20v3m0 37v1m0 37v4M659.5 244v1m0 112v1m0 2v1m0 8v1m0 71v2m0 5v2m0 17v1m0 185v9M660.5 261v1m0 1v1m0 50v1m0 62v1m0 8v1m0 135v1m0 6v1m0 18v9M661.5 231v1m0 52v1m0 2v1m0 45v1m0 6v1m0 68v2m0 8v1m0 8v1M662.5 247v1m0 61v1m0 2v1m0 49v1m0 3v1m0 6v1m0 73v1m0 17v1m0 11v1M663.5 222v1m0 46v1m0 4v1m0 60v1m0 55v1m0 3v2m0 101v1m0 11v1m0 22v1m0 55v1M664.5 243v1m0 49v1m0 61v1m0 11v1m0 60v2m0 11v1m0 2v1m0 126v4m0 12v2m0 25v1m0 9v2m0 17v6M665.5 263v1m0 55v1m0 3v1m0 58v1m0 3v1m0 7v1m0 1v1m0 8v1m0 100v1m0 10v2M666.5 232v1m0 112v1m0 6v1m0 61v2m0 3v1m0 1v1m0 3v2m0 10v1M667.5 251v1m0 66v1m0 61v1m0 2v1m0 69v1m0 24v1m0 16v1M668.5 272v1m0 4v1m0 61v1m0 5v2m0 59v1m0 8v1m0 1v1m0 90v1m0 9v1m0 27v1m0 48v1m0 24v3m0 2v5M669.5 228v1m0 68v1m0 67v1m0 2v1m0 5v1m0 72v1m0 7v1m0 168v3m0 1v1M670.5 247v1m0 143v1m0 4v1m0 14v1m0 105v8M671.5 270v1m0 80v1m0 71v1m0 6v2m0 8v1M672.5 238v1m0 56v1m0 2v1m0 80v1m0 4v1m0 3v1m0 82v1m0 21v1m0 20v2m0 1v2M673.5 323v2m0 100v1m0 93v2m0 25v4m0 35v1m0 12v1m0 21v1m0 17v1m0 38v1M674.5 279v1m0 2v1m0 62v1m0 124v4M675.5 305v1m0 2v1m0 77v1" stroke="#fffe25" fill="none"/>
<path d="M305.5 496v1m0 55v1m0 27v1M306.5 284v1m0 44v1m0 169v1m0 35v1m0 63v1m0 13v1m0 41v1M307.5 348v1m0 177v1m0 18v1M308.5 307v1m0 295v1m0 118v1M309.5 370v1m0 280v1m0 18v1M310.5 339v1m0 45v1m0 10v1m0 6v1m0 248v1m0 63v1m0 2v1M311.5 707v1m0 7v1M313.5 238v1M314.5 469v1m0 7v1M315.5 286v1m0 148v1m0 14v1m0 2v1m0 71v1M316.5 479v1m0 75v1m0 4v1m0 4v1M317.5 595v1m0 2v1m0 2v1m0 2v1m0 2v1M318.5 307v1m0 39v1m0 168v1m0 5v1m0 19v1m0 103v1M319.5 549v1m0 19v1m0 7v1m0 128v1m0 3v1m0 3v1m0 3v1M320.5 322v1m0 271v1M321.5 615v1m0 2v1m0 33v1m0 31v1M322.5 412v1m0 16v1m0 235v1M323.5 387v1m0 40v1m0 2v1m0 1v1M324.5 468v1M325.5 212v1m0 5v1m0 257v1m0 6v1m0 12v1M326.5 262v1m0 170v1m0 20v1m0 66v1m0 3v1m0 12v1M327.5 290v2m0 244v1m0 27v1m0 7v1m0 2v1m0 2v1M328.5 502v1m0 84v1m0 29v1M329.5 618v1m0 11v1m0 7v1M330.5 544v1m0 12v1m0 9v1m0 30v1m0 1v1m0 84v1m0 38v1M331.5 588v1m0 9v1m0 11v1m0 1v1m0 35v2M332.5 378v1m0 253v1m0 34v1m0 9v1M333.5 397v1m0 303v1m0 8v1M334.5 401v1M335.5 434v1M336.5 382v1m0 21v1m0 47v1m0 5v1m0 10v1M337.5 282v1m0 124v1m0 58v1m0 21v1m0 1v1m0 1v1M338.5 251v1m0 32v1m0 148v1m0 80v1M339.5 271v1m0 284v1m0 1v1m0 2v1m0 2v1m0 1v1m0 7v1M340.5 496v1m0 95v1m0 6v1m0 2v1m0 3v1m0 1v1m0 14v1M341.5 611v1m0 43v1M342.5 555v1m0 103v1M343.5 571v2m0 31v1m0 7v1m0 9v1m0 12v1m0 91v1M344.5 689v1M345.5 669v1m0 20v1m0 37v1M346.5 202v1m0 28v1M347.5 216v1m0 241v1M348.5 497v1m0 1v1m0 6v1m0 2v1M349.5 503v1m0 24v1m0 1v1m0 1v1m0 2v1m0 1v1M350.5 534v1m0 5v1m0 18v1m0 5v1m0 2v1m0 2v1m0 1v1m0 2v1m0 2v1M351.5 310v1m0 188v1m0 133v1M352.5 509v1m0 1v1m0 10v1m0 4v1M353.5 547v1m0 16v1m0 35v1m0 132v1M354.5 362v1m0 221v2m0 21v1M355.5 641v1m0 66v1M356.5 206v1m0 184v1m0 17v1m0 277v1m0 24v1M357.5 356v1m0 1v1m0 75v1M358.5 379v1m0 13v1m0 38v1m0 25v1M359.5 210v1m0 188v1m0 11v1m0 1v1m0 50v1m0 15v1m0 1v1m0 1v1m0 1v1M360.5 216v1m0 218v1m0 75v1m0 1v1m0 1v1m0 1v1M361.5 529v1m0 15v1m0 12v1m0 6v1M362.5 487v1m0 1v1m0 1v1m0 1v1m0 70v1m0 21v1m0 12v1m0 2v1m0 3v1M363.5 522v1m0 88v1m0 47v1M364.5 524v1m0 20v1m0 15v1m0 117v1M365.5 701v1m0 21v1M366.5 643v1m0 24v1M367.5 213v1m0 476v1M368.5 233v1m0 172v1M369.5 405v1m0 14v1M370.5 210v1m0 160v1m0 16v1m0 60v1m0 1v1m0 1v1M371.5 230v1m0 5v1m0 26v1m0 128v1m0 59v1m0 2v1m0 8v1m0 6v1m0 2v1m0 1v1m0 1v1m0 1v1M372.5 506v1m0 6v1M373.5 258v1m0 36v1m0 1v1m0 11v1m0 1v1m0 131v2m0 76v1m0 15v1m0 4v1m0 2v1m0 1v1m0 2v1m0 1v1m0 4v1M374.5 313v1m0 173v1m0 1v1m0 1v1m0 2v1m0 62v1m0 7v1m0 6v1m0 10v1m0 2v1m0 2v1m0 2v1m0 2v1m0 2v2m0 4v1M375.5 493v1m0 1v1m0 1v1m0 6v1m0 91v1m0 7v1M376.5 318v1m0 46v1m0 205v1m0 92v1M377.5 369v1m0 13v1m0 1v1m0 171v1m0 19v1m0 11v1m0 15v1m0 15v1m0 104v1M378.5 231v1m0 157v1m0 1v1m0 13v1m0 1v1m0 268v1M379.5 369v1m0 41v1m0 1v1m0 1v1m0 2v1m0 10v1m0 1v1m0 237v1m0 7v1M380.5 373v1m0 1v1m0 59v1m0 1v1m0 1v1m0 13v1m0 1v1m0 1v1M381.5 463v1m0 1v1m0 1v1m0 4v1m0 8v1m0 7v1M382.5 491v1m0 1v1m0 1v1m0 1v1m0 1v1m0 9v1m0 4v1m0 11v1M383.5 439v1m0 17v1m0 72v1m0 13v1m0 5v1m0 16v1m0 1v1M384.5 278v1m0 2v1m0 41v1m0 1v1m0 162v1m0 5v1m0 1v1m0 60v1m0 11v1m0 22v1m0 1v2m0 2v1m0 2v1m0 3v1m0 2v1m0 2v2M385.5 495v1m0 22v1m0 1v1m0 5v1m0 2v1m0 1v1m0 71v1m0 5v1m0 28v1m0 35v1M386.5 534v1m0 17v1m0 14v1m0 6v1m0 105v1M387.5 381v1m0 1v1m0 185v1m0 40v1m0 6v1m0 102v1m0 3v1M388.5 387v1m0 1v1m0 253v1m0 33v1m0 6v1M389.5 364v1m0 42v1m0 16v1m0 283v1m0 3v1M390.5 432v1m0 3v1m0 1v1m0 13v1m0 5v1M391.5 409v1m0 1v1m0 52v1m0 1v1m0 13v1m0 12v1M392.5 415v1m0 1v1m0 1v1m0 13v1m0 1v1m0 1v1m0 47v1m0 10v1m0 1v1M393.5 441v1m0 1v1m0 1v1m0 11v1m0 66v1m0 1v1m0 1v1m0 2v1m0 9v1m0 8v1M394.5 265v1m0 222v1m0 3v1m0 1v1m0 1v1m0 1v1m0 95v1m0 3v1m0 2v1m0 2v1m0 3v1m0 2v1m0 2v1m0 9v1M395.5 341v1m0 156v1m0 25v1m0 2v1m0 1v1m0 1v1m0 8v1m0 62v1m0 24v1M396.5 345v1m0 1v1m0 190v1m0 28v2m0 89v1m0 14v1M397.5 331v1m0 53v1m0 183v1m0 31v1M398.5 213v1m0 116v1m0 4v1m0 10v1m0 53v1m0 228v1M399.5 350v1m0 1v1m0 11v1m0 66v1m0 248v1m0 34v1m0 3v1M400.5 375v1m0 63v1M401.5 468v1m0 2v1m0 5v1m0 13v1M402.5 276v1m0 145v1m0 15v1m0 50v1m0 15v1M403.5 446v1m0 8v1m0 11v1m0 2v1m0 54v1m0 12v1m0 10v1m0 1v1M404.5 467v1m0 32v1m0 68v1m0 2v1m0 2v1m0 2v2m0 15v2m0 21v1M405.5 289v1m0 54v1m0 160v1m0 1v1m0 1v1m0 13v1m0 12v1m0 1v1m0 76v1m0 37v1M406.5 298v1m0 59v1m0 1v1m0 177v2m0 6v1m0 13v1m0 3v1m0 2v1m0 2v1m0 2v1m0 2v1m0 2v2m0 130v1M407.5 364v1m0 1v1m0 11v1m0 192v1m0 15v1m0 34v1m0 17v1M408.5 222v1m0 108v1m0 69v1m0 219v1m0 32v1M409.5 690v1M410.5 373v1m0 11v1m0 44v1m0 2v1M411.5 271v1m0 201v1m0 23v1M412.5 299v1m0 1v1m0 201v1m0 7v1m0 3v1m0 14v1M413.5 303v1m0 10v1m0 125v1m0 27v1m0 59v1m0 1v1m0 2v1m0 2v1m0 1v1m0 16v1m0 18v1m0 2v1M414.5 465v1m0 11v1m0 12v1m0 91v1m0 1v1m0 8v1m0 9v1m0 3v1m0 3v1m0 2v2m0 2v2M415.5 355v1m0 145v1m0 2v1m0 1v1m0 1v1m0 2v1m0 16v1m0 2v1m0 2v1m0 1v1m0 2v1m0 4v1m0 114v1m0 17v1M416.5 361v1m0 1v1m0 173v1m0 9v1m0 24v1m0 2v2m0 2v1m0 3v1m0 8v1M417.5 637v1m0 9v1M418.5 360v1m0 1v1m0 65v1m0 240v1m0 13v1M419.5 260v1m0 105v1m0 1v1m0 59v1m0 7v1m0 10v1m0 8v1M420.5 385v1m0 8v1m0 8v1m0 50v1m0 34v1m0 2v1M421.5 435v1m0 47v1m0 14v1m0 26v1M422.5 325v1m0 197v1m0 1v1m0 7v1m0 2v1m0 13v1m0 17v2M423.5 325v1m0 5v1m0 142v1m0 7v1m0 19v1m0 55v1m0 9v2m0 1v2m0 2v1m0 5v1m0 17v2m0 2v1m0 3v1m0 2v2m0 2v2M424.5 297v1m0 48v1m0 1v1m0 150v1m0 6v1m0 1v1m0 25v1m0 90v1m0 61v1M425.5 215v1m0 151v1m0 1v1m0 170v1m0 14v1m0 10v1m0 2v2m0 1v2m0 2v1m0 3v1m0 83v1M426.5 345v1m0 1v1m0 1v1m0 38v1m0 5v1m0 16v1m0 195v1M427.5 215v1m0 135v1m0 1v1m0 74v1M428.5 215v1m0 9v1m0 33v1m0 5v1m0 203v1m0 214v1M429.5 281v1m0 183v1M430.5 305v1m0 190v1m0 3v1m0 18v1m0 23v1M431.5 308v1m0 224v1m0 6v1m0 11v1m0 2v1m0 12v1m0 20v2M432.5 277v1m0 196v1m0 39v1m0 70v2m0 2v2m0 2v1m0 6v1m0 20v1m0 11v1M433.5 511v1m0 12v1m0 6v1m0 4v1m0 1v1m0 14v1m0 81v1m0 46v1M434.5 240v1m0 81v1m0 1v1m0 36v1m0 3v1m0 10v1m0 180v1m0 1v1m0 24v1m0 2v1m0 2v2m0 2v2m0 5v1m0 9v1m0 102v1m0 2v1M435.5 390v1m0 208v1m0 28v1M436.5 264v1m0 86v1m0 11v1m0 1v1m0 3v1m0 46v1m0 303v1M437.5 372v1m0 61v1m0 9v1m0 20v1m0 248v1m0 13v2M438.5 415v1m0 69v1m0 14v1M439.5 259v1m0 47v1m0 185v1m0 3v1m0 41v1m0 3v1M440.5 338v1m0 1v1m0 122v1m0 11v1m0 60v1m0 2v1m0 2v1m0 2v1m0 2v2m0 36v2M441.5 471v1m0 1v1m0 11v1m0 3v1m0 21v1m0 3v1m0 58v1m0 11v2m0 2v1m0 6v1m0 39v1M442.5 368v1m0 135v1m0 6v1m0 5v1m0 2v1m0 2v1m0 13v1m0 2v1m0 2v1m0 2v1m0 2v2m0 1v1m0 105v1m0 30v1M443.5 195v1m0 129v1m0 17v1m0 1v1m0 1v1m0 45v1m0 16v2m0 132v1m0 2v1m0 4v1m0 30v1m0 12v1M444.5 257v1m0 94v1m0 17v1m0 56v1m0 161v2m0 64v1m0 11v1M445.5 446v1m0 202v1m0 71v1m0 4v1M446.5 291v1m0 187v1m0 7v1m0 225v1M447.5 298v1m0 135v1m0 63v1M448.5 308v1m0 147v1m0 7v1m0 132v1m0 2v1M449.5 278v1m0 48v1m0 20v1m0 145v1m0 91v1m0 11v1m0 3v1m0 3v1m0 17v1m0 2v2m0 2v2m0 2v1M450.5 303v1m0 13v1m0 32v1m0 1v1m0 1v1m0 10v1m0 171v1m0 19v1m0 2v1m0 1v1M451.5 224v1m0 321v1m0 1v1m0 5v1m0 6v1m0 2v2m0 2v1m0 2v1m0 12v1m0 2v1m0 3v1m0 3v1m0 3v2m0 2v1m0 9v1m0 103v1M452.5 335v1m0 17v1m0 302v1m0 10v1m0 7v1M453.5 357v1m0 3v1m0 56v1m0 13v1m0 4v1m0 1v1m0 11v1M454.5 226v1m0 14v1m0 134v1M455.5 287v1m0 112v1m0 10v1m0 8v1m0 56v1m0 49v1M456.5 298v1m0 141v1m0 75v1m0 18v1m0 3v1m0 5v1m0 21v1M457.5 325v1m0 131v1m0 20v2m0 16v1m0 57v1m0 39v1m0 20v1M458.5 340v1m0 1v1m0 15v1m0 157v1m0 136v1m0 8v1m0 8v1m0 17v1M459.5 221v1m0 138v1m0 4v1m0 158v2m0 3v1m0 16v1m0 7v1m0 5v1m0 14v1m0 3v1M460.5 325v1m0 14v1m0 2v1m0 64v1m0 170v1m0 3v1m0 8v1m0 18v1m0 32v1M461.5 223v1m0 3v1m0 117v1m0 1v1m0 1v1m0 8v1m0 7v1m0 69v1m0 191v1m0 10v1m0 23v1m0 39v1M462.5 227v1m0 44v1m0 100v2m0 7v1m0 6v1m0 81v1M463.5 285v1m0 193v1m0 25v1M464.5 445v1m0 52v1m0 24v1m0 2v1M465.5 279v1m0 42v1m0 119v1m0 14v1m0 102v1m0 34v1M466.5 295v1m0 52v1m0 167v1m0 66v1m0 16v1m0 3v2m0 3v1m0 15v1m0 16v1m0 18v1M467.5 222v1m0 107v1m0 60v1m0 166v1M468.5 346v1m0 53v1m0 17v1m0 135v1m0 11v1m0 3v1m0 21v2m0 2v2m0 3v2m0 124v1M469.5 353v1m0 1v1m0 60v1m0 9v1m0 1v1m0 183v1m0 50v1m0 12v1M470.5 381v2M471.5 500v2m0 19v1M472.5 251v1m0 172v1m0 32v2m0 50v2m0 22v1m0 30v1m0 5v1M473.5 317v2m0 177v1m0 80v2m0 16v1m0 8v2m0 3v1m0 3v2M474.5 338v1m0 1v1m0 142v1m0 135v1m0 11v1m0 11v1m0 20v1M475.5 365v1m0 160v1m0 18v1m0 12v1m0 11v1m0 3v1m0 88v1m0 47v1m0 5v1m0 8v1M476.5 240v1m0 81v1m0 49v1m0 194v1m0 7v1m0 2v2m0 2v2m0 3v1m0 3v1m0 38v1M477.5 345v1m0 1v1m0 2v1m0 47v1m0 238v1m0 70v1M478.5 348v2m0 2v1m0 1v1m0 1v1m0 69v1m0 6v1m0 250v1m0 19v1m0 12v1M479.5 247v1m0 43v1m0 88v1m0 19v1m0 57v1m0 24v2M480.5 406v1m0 116v1M481.5 282v1m0 49v1m0 91v1m0 18v1m0 67v1m0 23v2m0 31v1M482.5 349v1m0 2v1m0 98v1m0 1v1m0 19v1m0 21v1m0 58v1m0 5v1m0 21v2m0 11v1m0 4v1m0 9v1m0 3v2m0 7v1M483.5 205v1m0 111v1m0 41v1m0 146v1m0 7v1m0 92v1m0 11v2m0 52v1M484.5 391v1m0 16v1m0 119v1m0 19v1m0 7v1m0 4v2m0 16v1m0 122v1M485.5 356v1m0 1v1m0 1v1m0 1v1m0 75v1m0 140v1m0 3v2m0 3v2m0 2v2m0 21v1M486.5 198v1m0 166v1m0 69v1m0 191v1m0 13v1m0 6v1M487.5 387v1m0 96v1m0 6v1m0 19v1m0 178v1m0 33v1M488.5 220v1m0 227v1m0 54v1m0 19v1m0 36v1M489.5 237v1m0 43v1m0 7v1m0 177v1m0 75v1m0 33v1m0 7v1m0 13v2M490.5 475v1m0 116v1m0 11v2m0 3v2m0 3v2m0 24v1m0 16v1m0 18v1M491.5 270v1m0 12v1m0 52v1m0 1v1m0 177v1m0 23v1m0 26v1m0 6v2m0 115v1M492.5 343v1m0 1v1m0 11v1m0 6v2m0 197v2m0 3v1m0 3v2m0 3v2m0 2v1m0 6v1m0 4v1m0 1v1m0 9v1m0 11v1M493.5 252v1m0 75v1m0 60v1m0 283v1m0 23v1M494.5 344v1m0 1v1m0 72v1m0 256v1m0 39v1M495.5 278v1m0 93v1m0 54v1M496.5 257v1m0 185v1M497.5 268v1m0 206v1m0 29v1m0 21v1M498.5 331v1m0 105v1m0 80v1m0 21v2m0 2v1m0 5v1m0 23v1m0 6v1M499.5 363v1m0 2v1m0 111v1m0 19v1m0 2v1m0 63v1m0 23v2m0 7v1m0 10v2m0 4v2m0 3v2M500.5 196v1m0 25v1m0 148v1m0 14v1m0 102v1m0 24v1m0 1v1m0 2v1m0 21v1m0 1v1m0 1v1m0 71v1m0 58v1m0 7v1m0 20v1m0 6v1M501.5 343v1m0 50v1m0 7v1m0 8v1m0 120v2m0 21v1m0 6v1m0 7v2m0 3v2m0 3v2m0 3v2m0 98v1M502.5 213v1m0 143v1m0 11v1m0 4v1m0 47v1m0 156v1m0 10v1m0 4v1m0 4v1m0 14v1M503.5 377v1m0 92v1m0 23v1m0 146v1m0 44v1m0 36v1M504.5 253v1m0 54v1m0 94v1m0 7v1m0 96v1m0 7v1m0 206v1M505.5 259v1m0 192v1m0 77v2m0 17v2m0 13v1m0 5v1m0 4v2m0 3v2m0 4v1M506.5 342v1m0 6v1m0 113v1m0 14v1m0 8v1m0 23v1m0 74v2m0 3v2m0 14v1m0 21v1m0 10v1m0 10v1M507.5 307v1m0 46v1m0 14v1m0 4v1m0 143v1m0 13v1m0 3v2m0 3v2m0 3v2m0 103v1m0 43v1m0 25v2M508.5 248v1m0 68v1m0 11v1m0 47v1m0 4v1m0 169v1M509.5 400v1m0 224v1m0 21v1M510.5 467v1m0 238v2M511.5 391v1m0 10v1m0 77v1m0 4v1m0 2v1m0 18v2M512.5 411v1m0 10v1m0 19v1m0 59v2m0 19v1m0 7v1m0 21v1M513.5 280v1m0 161v1m0 10v1m0 4v1m0 5v1m0 87v2m0 4v2m0 3v2m0 17v1m0 2v1m0 5v1m0 5v1m0 7v1m0 5v1M514.5 294v1m0 181v1m0 21v1m0 5v1m0 13v2m0 91v1m0 14v1m0 46v1m0 8v1M515.5 364v1m0 8v1m0 10v1m0 5v1m0 120v1m0 6v2m0 3v2m0 3v2m0 18v1m0 12v1m0 13v1M516.5 212v1m0 180v1m0 4v1m0 165v1m0 16v1m0 22v1m0 38v2M517.5 369v1m0 50v1m0 33v1m0 166v1m0 3v1m0 41v2m0 35v1M518.5 380v1m0 8v2m0 8v1m0 49v1m0 16v1m0 26v1M519.5 405v1m0 2v1m0 21v1m0 58v1m0 28v2m0 15v1M520.5 327v1m0 109v1m0 2v2m0 10v1m0 74v1m0 7v1m0 3v2m0 4v2m0 3v1m0 1v1m0 5v1m0 14v1m0 1v1m0 3v1m0 1v1m0 3v1m0 5v1M521.5 364v1m0 2v1m0 99v1m0 4v1m0 3v1m0 13v1m0 13v2m0 91v1m0 27v1m0 5v1m0 5v1m0 33v1m0 5v1M522.5 370v1m0 6v1m0 18v1m0 112v2m0 3v1m0 9v1m0 10v1m0 1v1m0 8v1m0 13v2m0 90v1M523.5 335v1m0 61v1m0 4v1m0 154v1m0 53v1m0 11v1M524.5 212v1m0 59v1m0 80v1m0 19v1m0 1v1m0 87v1m0 139v1m0 43v1m0 5v1m0 25v1M525.5 282v1m0 100v1m0 2v1m0 19v1m0 68v1m0 7v1m0 20v1m0 180v1m0 29v1M526.5 294v1m0 16v1m0 97v1m0 2v1m0 2v1m0 11v2m0 9v1m0 79v1m0 6v1m0 8v1m0 10v1m0 4v2M527.5 273v1m0 167v1m0 3v1m0 2v1m0 8v1m0 88v1m0 8v1m0 10v1m0 10v1m0 5v1M528.5 296v1m0 43v1m0 130v1m0 4v1m0 4v1m0 3v2m0 12v1m0 5v1m0 4v1m0 4v1m0 3v1m0 87v1m0 26v1M529.5 207v1m0 169v1m0 2v1m0 140v1m0 15v1m0 145v1m0 1v1M530.5 328v2m0 74v1m0 2v1m0 2v1m0 149v1m0 18v1m0 21v2M531.5 342v1m0 70v1m0 6v1m0 13v2m0 2v1m0 3v1m0 193v1m0 5v1m0 42v2m0 12v1m0 5v1m0 5v1m0 3v1M532.5 310v1m0 139v1m0 3v1m0 31v1m0 3v1M533.5 269v1m0 48v1m0 3v1m0 87v1m0 11v1m0 64v1m0 4v2m0 5v1m0 5v1m0 2v1m0 6v1m0 4v2m0 4v2M534.5 276v1m0 158v1m0 5v1m0 9v2m0 2v1m0 122v1m0 21v1M535.5 377v1m0 76v1m0 10v1m0 22v2m0 5v1m0 158v1m0 20v1m0 2v1m0 5v1M536.5 400v1m0 2v1m0 2v1m0 117v1m0 23v1m0 154v1M537.5 412v1m0 3v1m0 23v2m0 100v1m0 5v1m0 26v2m0 17v1M538.5 248v1m0 195v1m0 3v1m0 3v1m0 12v1m0 13v1m0 124v1m0 3v1m0 9v1m0 24v1m0 13v1m0 1v1m0 46v1M539.5 264v1m0 135v1m0 12v1m0 65v1m0 4v1m0 4v2m0 14v2m0 10v1m0 4v2m0 8v1m0 173v2M540.5 291v1m0 132v1m0 8v1m0 2v1m0 5v1m0 2v2m0 2v2m0 100v1m0 8v1m0 3v1m0 29v1M541.5 298v1m0 182v1m0 3v2m0 5v1m0 76v1m0 16v1m0 36v1M542.5 208v1m0 102v1m0 13v1m0 177v1m0 37v1m0 135v1m0 23v1m0 7v1M543.5 533v1m0 13v1m0 8v1m0 13v2m0 13v1m0 19v1m0 10v2M544.5 312v1m0 59v1m0 225v1m0 23v1m0 2v1m0 12v1m0 12v1m0 53v1M545.5 336v1m0 46v1m0 22v1m0 2v1m0 274v2m0 6v1m0 18v1M546.5 359v1m0 66v1m0 1v1m0 9v1m0 3v1m0 4v1M547.5 294v1m0 159v1m0 18v2m0 3v2m0 4v1M548.5 260v1m0 145v1m0 19v1m0 85v1m0 20v1M549.5 265v1m0 176v1m0 8v1m0 11v1m0 73v1M550.5 302v1m0 53v1m0 112v1m0 1v1m0 35v1m0 137v1m0 20v1m0 28v1m0 14v2M551.5 369v1m0 188v1m0 122v1m0 6v1m0 2v1M552.5 256v1m0 86v1m0 83v1m0 163v2m0 14v1m0 10v1M553.5 276v2m0 10v1m0 60v1m0 100v1m0 2v1m0 11v1m0 181v1m0 9v1m0 33v2m0 5v1m0 7v1M554.5 291v1m0 2v1m0 80v1m0 11v1m0 14v1m0 99v1m0 5v1M555.5 265v1m0 258v1m0 6v1m0 37v1M556.5 289v1m0 54v1m0 96v1m0 113v1m0 102v2M557.5 227v1m0 142v1m0 2v1m0 12v1m0 98v1m0 24v1m0 17v1m0 105v1m0 18v1m0 3v1m0 54v2M558.5 402v1m0 9v1m0 3v1m0 137v1m0 36v2M559.5 211v1m0 10v1m0 135v1m0 74v1m0 14v1m0 127v1m0 6v1m0 22v1m0 8v1m0 21v1m0 14v1m0 2v1m0 27v1M560.5 280v1m0 6v1m0 108v1m0 74v1m0 2v1m0 12v1m0 1v1m0 186v2m0 6v2m0 5v2M561.5 399v1m0 6v1m0 10v1m0 127v1M562.5 276v1m0 38v1m0 20v1m0 107v1m0 2v1m0 150v1m0 34v1m0 3v1M563.5 347v1m0 272v1m0 25v1m0 31v1m0 7v1m0 16v1m0 8v1M564.5 378v1m0 7v1m0 2v1m0 123v1m0 14v1m0 8v2m0 8v1m0 28v2M565.5 252v1m0 84v1m0 85v1m0 137v2m0 21v1m0 8v1m0 25v1m0 2v1m0 13v1m0 35v1M566.5 348v1m0 7v1m0 86v1m0 211v2m0 6v3m0 6v2m0 6v3M567.5 473v1m0 15v1M568.5 208v1m0 347v1M569.5 212v1m0 69v1m0 150v1m0 6v1m0 13v1m0 95v1m0 1v1m0 15v1m0 28v3m0 45v1m0 26v1M570.5 290v1m0 179v1m0 13v1m0 12v1m0 151v1m0 45v1M571.5 386v1m0 129v1m0 8v1m0 3v1m0 23v2m0 15v1m0 20v3M572.5 233v1m0 36v1m0 63v1m0 2v1m0 69v1m0 15v1m0 11v1m0 147v3m0 5v1m0 1v1m0 6v2m0 6v2m0 47v3m0 5v3m0 6v2m0 6v2M573.5 294v1m0 64v1m0 9v1m0 77v1m0 17v1m0 11v1M574.5 410v1m0 6v1m0 77v1m0 14v1m0 18v1M575.5 273v1m0 289v2m0 50v1m0 9v1M576.5 308v1m0 144v1m0 10v1m0 9v1m0 11v1m0 193v2m0 9v1m0 8v1m0 5v1m0 1v1M577.5 408v1m0 86v1m0 5v1m0 16v1m0 7v2m0 4v1m0 7v1m0 16v3M578.5 230v1m0 114v1m0 63v1m0 15v1m0 6v1m0 124v3m0 6v2m0 7v1m0 35v2m0 6v3m0 6v2m0 8v1M579.5 386v1m0 67v1m0 25v1M580.5 216v1m0 185v1m0 79v1m0 16v1m0 18v1m0 15v1M581.5 240v1m0 198v1m0 132v1m0 8v1M582.5 242v1m0 55v1m0 369v1m0 18v2M583.5 271v1m0 45v1m0 195v1m0 7v1m0 2v1m0 24v1M584.5 234v1m0 45v1m0 58v1m0 224v2m0 6v3m0 6v1m0 54v2m0 7v1M585.5 213v1m0 38v1M586.5 215v1m0 1v1m0 206v1M587.5 237v1m0 55v1m0 53v1m0 12v1m0 78v1m0 7v1M588.5 207v1m0 51v1m0 119v1M589.5 215v1m0 53v1m0 16v1m0 127v1m0 24v1m0 105v1m0 22v1m0 4v1m0 11v1M590.5 228v1m0 3v1m0 70v1m0 142v1m0 10v1m0 152v1m0 5v1m0 6v1m0 81v1M591.5 312v1m0 18v1m0 146v1m0 14v1m0 3v1m0 6v3m0 10v1m0 19v1M592.5 334v1m0 8v1m0 80v1m0 2v1m0 106v1m0 2v1m0 6v1m0 11v2m0 22v2m0 8v1m0 3v1m0 8v4m0 9v3M594.5 253v1m0 51v1m0 15v1m0 67v1m0 14v1m0 101v1m0 38v1M595.5 216v1m0 119v1m0 4v1m0 5v1m0 73v1m0 4v1m0 110v1m0 34v1m0 7v1m0 51v1m0 18v1m0 13v3M596.5 309v1m0 167v1m0 8v1m0 141v4m0 12v1m0 19v1m0 12v1m0 4v1m0 8v3M597.5 263v1m0 3v1m0 52v1m0 74v1m0 5v1m0 117v1m0 2v1m0 17v3m0 6v1m0 3v1m0 17v4M598.5 234v1m0 107v1m0 84v1m0 13v1M599.5 240v1m0 4v1m0 57v1m0 143v1m0 10v1m0 16v1m0 20v2M600.5 204v1m0 1v1m0 117v2m0 66v1m0 14v1m0 81v1m0 34v1m0 25v1M601.5 223v1m0 133v1m0 67v1m0 2v1m0 1v1m0 7v2m0 106v1m0 57v1m0 3v1m0 39v1m0 6v1m0 13v1m0 5v1m0 12v1M602.5 364v1m0 10v1m0 3v1m0 128v1m0 148v4m0 9v1m0 3v1m0 9v1m0 2v2M603.5 408v1m0 7v1m0 102v3m0 7v2m0 20v1m0 11v1m0 7v4M604.5 280v1m0 78v1m0 66v1m0 31v1M605.5 311v1m0 63v1m0 15v1m0 10v1M606.5 320v1m0 4v1m0 92v1m0 18v1m0 74v1m0 1v1m0 59v1m0 39v2M607.5 353v1m0 94v1m0 35v1m0 102v1m0 7v1m0 6v1m0 7v1m0 6v1M608.5 307v1m0 196v1M609.5 214v1m0 12v1m0 41v1m0 9v1m0 52v1m0 76v1m0 138v3m0 53v1M610.5 284v1m0 72v1M611.5 263v1m0 113v1m0 90v1m0 2v1m0 16v1m0 4v1M612.5 209v1m0 60v1m0 58v1m0 8v1m0 6v1m0 66v1m0 6v1m0 4v1m0 124v1m0 4v1m0 75v1M613.5 295v1m0 71v1m0 82v1m0 38v1m0 105v3m0 9v1m0 41v1m0 17v1M614.5 384v2m0 1v1m0 8v1m0 91v1m0 1v1m0 17v2m0 9v1m0 2v1M615.5 216v1m0 56v1m0 87v1m0 75v1m0 13v1M616.5 294v1m0 157v1m0 1v1m0 9v1m0 39v1M617.5 313v2m0 81v1m0 24v1m0 130v1M618.5 208v1m0 63v1m0 4v1m0 57v1m0 95v1m0 1v1m0 2v1m0 19v1m0 12v1m0 92v1m0 26v1m0 7v1m0 16v1m0 32v2m0 4v1m0 12v1m0 23v1m0 8v1M619.5 225v1m0 74v1m0 10v1m0 60v1m0 113v1m0 7v3m0 29v1M620.5 236v1m0 154v1m0 7v1m0 17v1m0 108v3m0 10v2m0 39v4m0 13v3M621.5 354v1m0 81v1m0 8v1m0 12v1M622.5 276v1m0 4v1m0 87v1m0 3v1m0 111v1m0 4v1M623.5 300v1m0 15v1m0 221v1m0 61v1M624.5 451v2m0 176v1M625.5 476v1m0 19v2M626.5 221v1m0 84v1m0 78v2m0 14v2m0 197v6M627.5 241v1m0 1v1m0 8v1m0 85v1m0 3v1m0 64v1M628.5 262v1m0 9v1m0 107v1m0 61v1m0 4v1m0 9v1m0 32v1M629.5 284v1m0 102v1m0 2v1m0 3v1m0 94v1m0 39v1M630.5 303v1m0 4v1m0 112v1m0 4v1m0 1v1m0 3v1m0 16v1m0 2v1m0 139v2m0 28v1m0 41v2m0 25v3M631.5 270v1m0 4v1m0 6v1m0 52v1m0 128v1m0 8v2m0 7v1m0 15v1m0 7v1m0 1v2M632.5 554v5m0 16v5M633.5 312v1m0 5v1m0 4v1m0 59v1m0 10v1M634.5 358v1m0 61v1M635.5 252v1m0 218v1m0 3v1m0 30v1M636.5 220v1m0 98v1m0 2v1m0 73v1m0 12v1m0 109v1m0 6v1m0 9v1M637.5 240v1m0 47v1m0 4v1m0 60v1m0 85v1m0 26v1m0 142v1m0 15v2M638.5 208v1m0 50v1m0 53v1m0 2v1m0 71v1m0 86v3m0 7v3m0 9v2m0 2v1m0 13v1m0 9v3M639.5 329v1m0 2v1m0 5v1m0 63v2m0 2v1m0 26v1M640.5 245v1m0 57v1m0 1v1m0 50v1m0 2v1m0 89v1M641.5 206v1m0 1v1m0 105v1m0 2v1m0 68v1m0 3v1m0 9v1m0 88v1m0 8v1m0 6v1M642.5 223v1m0 1v1m0 112v1m0 2v1m0 3v1m0 2v1m0 69v2m0 4v1m0 16v1m0 2v1m0 97v2m0 6v1m0 23v2m0 4v3m0 58v4m0 32v2M643.5 243v1m0 141v1m0 1v1m0 89v3m0 13v1M644.5 267v1m0 141v1M645.5 291v1m0 57v1m0 2v1m0 6v1m0 2v1m0 68v1m0 40v1M646.5 308v1m0 4v2m0 66v1m0 3v1m0 15v2m0 70v1m0 8v1m0 19v1m0 7v1m0 8v1m0 8v1M647.5 276v1m0 134v1m0 4v1m0 22v1m0 91v2m0 19v1m0 10v1m0 26v2m0 41v13m0 36v2M648.5 294v1m0 5v1m0 51v1m0 2v1m0 11v1m0 83v1m0 16v1m0 10v1m0 6v1m0 3v1M649.5 248v1m0 74v2m0 56v1m0 3v1m0 151v7M650.5 218v1m0 134v1m0 58v1m0 10v1M651.5 240v1m0 58v1m0 78v1m0 4v1m0 79v1M652.5 316v1m0 208v3m0 39v1M653.5 222v1m0 61v1m0 50v1m0 2v1m0 5v1m0 7v1m0 90v2M654.5 238v1m0 4v1m0 130v1m0 133v2m0 1v3M655.5 212v1m0 113v1m0 75v1M656.5 281v1m0 150v1m0 30v1M657.5 246v1m0 4v1m0 122v1m0 3v1m0 8v1m0 86v1m0 48v1M658.5 335v1m0 72v1m0 10v1m0 130v1m0 36v4m0 13v3m0 41v1m0 16v1M659.5 290v1m0 59v1m0 2v1m0 14v1m0 94v1m0 13v1M660.5 385v1m0 3v1m0 133v6M661.5 343v1m0 77v1m0 3v1M662.5 370v1m0 84v1m0 30v1M663.5 334v1m0 6v1m0 157v1m0 9v1m0 24v1m0 53v1M664.5 296v1m0 278v12m0 28v9M665.5 507v3m0 1v6M666.5 346v1m0 73v1m0 25v1M667.5 312v1m0 2v1m0 59v1m0 78v2m0 9v1m0 7v1M668.5 338v1m0 71v1m0 98v3m0 4v2m0 29v2m0 45v1m0 28v2M669.5 300v1m0 147v2m0 6v3M670.5 322v1m0 3v1M671.5 350v1m0 73v1M672.5 387v1m0 78v1m0 3v1m0 11v1m0 33v1M673.5 320v1m0 92v2m0 5v1m0 100v25m0 65v1m0 19v1m0 16v1m0 4v1m0 9v5M674.5 458v1" stroke="#ffff89" fill="none"/>
<path d="M305.5 258v1m0 1v1m0 1v1m0 1v1m0 5v1m0 1v1m0 1v1m0 1v1m0 22v1m0 1v1m0 1v1m0 7v1m0 1v1m0 1v1m0 155v1m0 1v1m0 1v1m0 1v1m0 1v1m0 1v1m0 7v1m0 1v1m0 1v1m0 1v1m0 1v4m0 1v1m0 51v1m0 1v2m0 1v1m0 2v1m0 1v2m0 1v1m0 2v1m0 1v2m0 1v1m0 2v1m0 2v1m0 1v2m0 1v2m0 1v2m0 1v2m0 1v2m0 1v2m0 1v2m0 1v2m0 1v2M306.5 272v1m0 1v1m0 1v1m0 9v1m0 1v1m0 24v1m0 1v1m0 1v1m0 8v3m0 1v1m0 169v1m0 1v1m0 1v1m0 1v1m0 1v1m0 1v1m0 6v1m0 1v1m0 1v1m0 1v2m0 1v1m0 1v1m0 1v2m0 1v1m0 58v1m0 2v1m0 2v1m0 2v2m0 1v2m0 1v2m0 1v2m0 2v1m0 2v1m0 2v1m0 2v2m0 1v2m0 2v1m0 2v2m0 1v2m0 2v1m0 2v2m0 2v1m0 2v2m0 2v1m0 3v1M307.5 194v1m0 1v1m0 1v1m0 89v1m0 1v1m0 8v1m0 1v1m0 1v1m0 26v1m0 1v1m0 1v1m0 7v1m0 1v1m0 1v1m0 181v1m0 1v2m0 1v1m0 1v1m0 1v2m0 1v1m0 1v1m0 7v1m0 1v1m0 2v1m0 1v2m0 1v1m0 1v2m0 1v1m0 2v1m0 1v2m0 1v1m0 66v1m0 2v2m0 2v1m0 2v2m0 2v1m0 3v1m0 2v2m0 2v2m0 2v1m0 3v1m0 3v1m0 3v1m0 3v1m0 3v1m0 3v2m0 2v2m0 2v2m0 3v1m0 3v1M308.5 194v1m0 1v1m0 1v1m0 7v1m0 96v1m0 1v1m0 9v1m0 1v1m0 1v1m0 26v1m0 1v1m0 1v1m0 1v1m0 7v1m0 1v1m0 1v1m0 198v1m0 1v1m0 2v1m0 1v2m0 1v1m0 2v1m0 2v1m0 2v1m0 1v1m0 2v1m0 2v1m0 2v1m0 2v1m0 2v1m0 2v1m0 2v2m0 1v2m0 1v2m0 1v2m0 2v1m0 74v1m0 3v2m0 2v2m0 3v1m0 3v1m0 3v1m0 3v1M309.5 206v1m0 110v1m0 1v1m0 1v1m0 7v1m0 1v1m0 1v1m0 1v1m0 28v1m0 1v1m0 1v1m0 9v1m0 1v1m0 1v1m0 222v1m0 2v1m0 2v2m0 2v1m0 2v1m0 2v1m0 2v1m0 3v1m0 2v1m0 2v1m0 3v1m0 2v1m0 2v2m0 2v1m0 3v1m0 2v2m0 2v1m0 3v1m0 2v2M310.5 198v1m0 1v1m0 30v1m0 1v1m0 1v1m0 97v1m0 1v1m0 1v1m0 9v1m0 1v1m0 1v1m0 30v1m0 1v1m0 1v3m0 8v6m0 252v1m0 3v1m0 3v1m0 2v2m0 2v1m0 3v1m0 3v1m0 3v1m0 3v1m0 3v2m0 2v2m0 3v1m0 3v1m0 3v1m0 3v1m0 3v1m0 4v1M311.5 198v1m0 1v1m0 7v1m0 1v1m0 1v1m0 18v1m0 1v1m0 1v1m0 7v1m0 1v1m0 1v1m0 103v1m0 1v1m0 1v1m0 7v6m0 34v5m0 1v1m0 7v1m0 1v1m0 1v1m0 1v1m0 287v1M312.5 208v1m0 1v1m0 1v1m0 7v1m0 1v1m0 1v1m0 18v1m0 1v1m0 1v1m0 1v1m0 5v1m0 1v1m0 1v1m0 1v1m0 106v7m0 7v1m0 1v1m0 1v1m0 36v1m0 1v1m0 1v1m0 1v1m0 1v1m0 7v1m0 1v1m0 1v1m0 1v1m0 1v1M313.5 220v1m0 1v1m0 1v1m0 1v1m0 5v1m0 1v1m0 1v1m0 20v1m0 1v1m0 1v1m0 7v1m0 1v1m0 1v1m0 114v1m0 1v1m0 1v1m0 9v1m0 1v1m0 1v1m0 38v1m0 1v1m0 1v1m0 1v1m0 1v1m0 9v10M314.5 234v1m0 1v1m0 1v1m0 7v1m0 1v1m0 1v1m0 20v1m0 1v1m0 1v1m0 10v1m0 1v1m0 119v1m0 1v1m0 1v1m0 1v1m0 7v1m0 1v1m0 1v1m0 1v1m0 41v7m0 1v1m0 1v1m0 7v1m0 1v1m0 1v1m0 1v1m0 1v1m0 1v1m0 1v1M315.5 248v1m0 1v1m0 10v1m0 1v1m0 24v1m0 1v1m0 7v1m0 1v1m0 1v1m0 125v1m0 1v5m0 8v7m0 1v1m0 44v1m0 1v1m0 1v1m0 1v1m0 1v1m0 1v4m0 5v1m0 1v1m0 1v1m0 1v4m0 1v1m0 1v1m0 1v1m0 1v2M316.5 261v1m0 1v1m0 1v1m0 7v1m0 1v1m0 1v1m0 22v1m0 1v1m0 1v1m0 1v1m0 7v1m0 1v1m0 1v1m0 132v1m0 1v1m0 1v1m0 1v1m0 9v1m0 1v1m0 1v1m0 1v1m0 1v1m0 1v1m0 48v1m0 1v1m0 1v1m0 1v2m0 1v1m0 1v1m0 1v2m0 1v1m0 1v1m0 4v1m0 1v4m0 1v4m0 1v4m0 1v2m0 1v1m0 1v2m0 1v1M317.5 275v1m0 1v1m0 1v1m0 7v1m0 1v1m0 1v1m0 24v1m0 1v1m0 1v1m0 9v1m0 1v1m0 1v1m0 140v1m0 1v1m0 1v1m0 1v1m0 1v1m0 1v1m0 1v1m0 5v1m0 1v1m0 1v1m0 1v1m0 1v1m0 1v1m0 1v1m0 1v1m0 51v1m0 1v1m0 2v1m0 1v2m0 1v1m0 1v2m0 1v1m0 2v1m0 1v2m0 1v2m0 1v1m0 2v1m0 2v1m0 1v2m0 1v2m0 1v2m0 1v2m0 1v2m0 1v2m0 1v2m0 1v2m0 1v2m0 2v1M318.5 289v1m0 1v1m0 1v1m0 7v1m0 1v1m0 1v1m0 26v1m0 1v1m0 1v1m0 1v1m0 7v1m0 1v3m0 152v1m0 1v1m0 1v1m0 1v1m0 1v1m0 1v1m0 1v1m0 8v1m0 1v4m0 1v1m0 1v1m0 1v2m0 1v1m0 1v1m0 61v2m0 1v2m0 1v2m0 1v2m0 1v2m0 1v2m0 2v1m0 2v1m0 2v1m0 2v1m0 2v2m0 2v1m0 2v1m0 2v2m0 2v1m0 2v2m0 1v2m0 2v2m0 1v2m0 2v2m0 2v1m0 3v1M319.5 305v1m0 1v1m0 1v1m0 7v1m0 1v1m0 1v1m0 28v6m0 7v1m0 1v1m0 1v1m0 1v1m0 163v1m0 1v2m0 1v1m0 1v1m0 1v2m0 1v1m0 1v1m0 2v1m0 1v1m0 4v1m0 1v2m0 1v1m0 1v2m0 1v1m0 2v1m0 1v2m0 1v1m0 2v1m0 1v2m0 1v1m0 66v1m0 3v1m0 2v1m0 3v1m0 2v2m0 2v1m0 2v2m0 2v2m0 2v1m0 3v1m0 3v1m0 3v1m0 3v1m0 3v1m0 3v1m0 3v1m0 3v1m0 3v1m0 3v1m0 3v1M320.5 321v1m0 1v2m0 9v1m0 1v1m0 1v1m0 30v1m0 1v1m0 1v1m0 7v1m0 1v1m0 1v1m0 1v1m0 182v1m0 1v1m0 2v1m0 2v1m0 1v2m0 1v1m0 2v1m0 2v1m0 2v1m0 2v1m0 1v2m0 1v2m0 1v2m0 1v2m0 1v2m0 1v2m0 1v2m0 1v2m0 1v2m0 2v1m0 2v1m0 2v1m0 75v1m0 3v1m0 3v1m0 3v1m0 3v1m0 3v1M321.5 212v1m0 1v1m0 121v1m0 1v1m0 1v1m0 1v1m0 7v1m0 1v1m0 1v1m0 32v1m0 1v1m0 1v1m0 1v1m0 7v1m0 1v1m0 1v1m0 1v1m0 208v1m0 2v1m0 2v1m0 2v1m0 2v1m0 2v1m0 2v2m0 2v1m0 2v1m0 2v2m0 2v1m0 2v1m0 3v1m0 2v2m0 2v1m0 2v2m0 2v1m0 3v1m0 2v2m0 2v1M322.5 192v1m0 19v1m0 1v1m0 7v1m0 1v1m0 1v1m0 127v1m0 1v1m0 1v1m0 9v1m0 1v1m0 1v1m0 34v1m0 1v1m0 1v1m0 1v1m0 8v7m0 1v1m0 238v1m0 3v1m0 2v2m0 2v1m0 3v1m0 3v1m0 3v1m0 3v1m0 3v1m0 3v1m0 3v1m0 3v1m0 3v1m0 3v1m0 3v1m0 3v1M323.5 192v1m0 7v1m0 1v1m0 1v1m0 17v1m0 1v1m0 1v1m0 7v1m0 1v1m0 1v1m0 1v1m0 131v1m0 1v1m0 1v1m0 1v1m0 7v1m0 1v5m0 37v1m0 1v1m0 1v1m0 1v1m0 7v1m0 1v1m0 1v1m0 1v1m0 1v1m0 1v1M324.5 200v1m0 1v1m0 1v1m0 7v1m0 1v1m0 1v1m0 19v1m0 1v1m0 1v1m0 7v1m0 1v1m0 1v1m0 139v6m0 9v1m0 1v1m0 1v1m0 1v1m0 38v1m0 1v1m0 1v1m0 1v1m0 11v1m0 1v1m0 1v1m0 1v1m0 1v1m0 1v1M325.5 214v1m0 1v1m0 9v1m0 1v1m0 21v1m0 1v1m0 1v1m0 7v1m0 1v1m0 1v1m0 146v1m0 1v1m0 1v1m0 1v1m0 7v1m0 1v1m0 1v1m0 1v1m0 1v1m0 42v1m0 1v1m0 1v1m0 1v5m0 8v8m0 1v1m0 1v1m0 1v1M326.5 226v1m0 1v1m0 35v1m0 1v1m0 1v1m0 7v1m0 1v1m0 1v1m0 154v1m0 1v1m0 1v1m0 1v1m0 9v1m0 1v1m0 1v4m0 47v1m0 1v1m0 1v1m0 1v1m0 1v1m0 1v1m0 1v2m0 7v1m0 1v2m0 1v1m0 1v1m0 1v2m0 1v1m0 1v1m0 1v2m0 1v1M327.5 251v1m0 1v1m0 1v1m0 22v1m0 1v1m0 1v1m0 9v2m0 163v1m0 5v4m0 9v1m0 1v1m0 1v1m0 1v1m0 1v1m0 1v1m0 52v1m0 1v1m0 1v2m0 1v1m0 1v1m0 2v1m0 1v1m0 2v1m0 1v1m0 2v1m0 1v1m0 2v1m0 1v2m0 1v1m0 1v2m0 1v2m0 1v2m0 1v1m0 2v1m0 2v1M328.5 253v1m0 1v1m0 1v1m0 7v1m0 1v1m0 1v1m0 23v1m0 1v1m0 1v1m0 7v1m0 1v1m0 1v1m0 174v1m0 1v1m0 1v1m0 1v1m0 1v1m0 1v1m0 1v1m0 7v1m0 1v1m0 1v4m0 1v1m0 1v1m0 1v1m0 1v1m0 54v1m0 1v2m0 1v1m0 2v1m0 2v1m0 2v1m0 1v2m0 1v2m0 1v2m0 1v2m0 1v2m0 1v2m0 1v2m0 1v2m0 1v2m0 2v1m0 2v1m0 2v2m0 1v2m0 1v2m0 2v1m0 2v1M329.5 267v1m0 1v1m0 1v1m0 7v1m0 1v1m0 1v1m0 23v1m0 1v1m0 1v1m0 1v1m0 7v1m0 1v1m0 1v1m0 187v1m0 1v1m0 1v1m0 1v1m0 1v1m0 1v2m0 1v1m0 1v1m0 6v1m0 1v1m0 1v2m0 1v1m0 1v1m0 1v2m0 1v1m0 1v2m0 1v1m0 66v1m0 2v1m0 2v2m0 2v1m0 2v1m0 2v1m0 2v2m0 2v1m0 2v2m0 2v1m0 2v2m0 2v1m0 2v2m0 2v2m0 2v1m0 2v2m0 2v2m0 2v2m0 2v2m0 2v1m0 3v1M330.5 281v1m0 1v1m0 1v1m0 7v1m0 1v1m0 1v1m0 25v1m0 1v1m0 1v1m0 1v1m0 7v1m0 1v1m0 1v1m0 205v1m0 1v1m0 1v2m0 1v1m0 1v1m0 2v1m0 1v2m0 1v1m0 4v1m0 2v1m0 1v2m0 1v2m0 1v1m0 2v1m0 1v2m0 1v2m0 1v2m0 1v2m0 1v1m0 75v1m0 2v2m0 2v2m0 2v1m0 3v1m0 3v1m0 3v1m0 3v1m0 3v1m0 3v1m0 3v2m0 2v2m0 2v2m0 3v1M331.5 198v1m0 1v1m0 1v1m0 92v1m0 1v1m0 1v1m0 1v1m0 7v1m0 1v1m0 1v1m0 27v1m0 1v1m0 1v1m0 9v1m0 1v1m0 1v1m0 226v1m0 2v1m0 1v2m0 1v2m0 1v1m0 2v1m0 2v1m0 2v1m0 2v1m0 3v1m0 2v1m0 2v1m0 2v1m0 2v1m0 2v2m0 1v2m0 2v1m0 2v2m0 1v2m0 2v1M332.5 198v1m0 1v1m0 1v1m0 7v1m0 1v1m0 1v1m0 96v1m0 1v1m0 1v1m0 9v5m0 29v1m0 1v1m0 1v1m0 1v1m0 7v5m0 257v1m0 2v1m0 3v1m0 2v1m0 2v2m0 2v1m0 2v2m0 2v1m0 3v1m0 2v1m0 3v1m0 3v1m0 3v1m0 2v2m0 2v2m0 2v2m0 2v2m0 2v2m0 2v2M333.5 193v1m0 16v1m0 1v1m0 1v1m0 7v1m0 1v1m0 1v1m0 101v5m0 9v1m0 1v1m0 1v1m0 32v6m0 7v5m0 1v1m0 290v2m0 2v2m0 2v2m0 3v1m0 3v1M334.5 193v1m0 7v1m0 1v1m0 1v1m0 16v1m0 1v1m0 1v1m0 1v1m0 7v1m0 1v1m0 1v1m0 105v1m0 1v1m0 1v1m0 7v1m0 1v1m0 1v1m0 1v1m0 33v1m0 1v1m0 1v1m0 1v1m0 7v1m0 1v1m0 1v1m0 1v1m0 1v1M335.5 201v1m0 1v1m0 1v1m0 7v1m0 1v1m0 1v1m0 18v1m0 1v1m0 1v1m0 7v1m0 1v1m0 1v1m0 111v1m0 1v1m0 1v1m0 9v1m0 1v1m0 1v1m0 37v1m0 1v1m0 1v1m0 1v1m0 9v1m0 1v1m0 1v1m0 1v1m0 1v1M336.5 213v1m0 1v1m0 1v1m0 7v1m0 1v1m0 1v1m0 20v1m0 1v1m0 1v1m0 7v1m0 1v1m0 1v1m0 117v1m0 1v1m0 1v1m0 9v1m0 1v1m0 1v1m0 39v1m0 1v1m0 1v1m0 1v1m0 1v1m0 12v6m0 1v1M337.5 227v1m0 1v1m0 1v1m0 7v1m0 1v1m0 1v1m0 20v1m0 1v1m0 1v1m0 7v1m0 1v1m0 1v1m0 123v1m0 1v1m0 1v1m0 1v1m0 7v8m0 42v10m0 7v1m0 1v1m0 1v1m0 1v1m0 1v1m0 1v1m0 1v1m0 1v1M338.5 239v1m0 1v1m0 1v1m0 9v1m0 1v1m0 1v1m0 20v1m0 1v1m0 1v1m0 9v1m0 1v1m0 1v1m0 128v7m0 9v1m0 1v1m0 1v1m0 1v1m0 1v1m0 45v1m0 1v1m0 1v1m0 1v1m0 1v1m0 1v1m0 1v1m0 8v1m0 1v4m0 1v1m0 1v1m0 1v2m0 1v1m0 1v1M339.5 253v1m0 1v1m0 1v1m0 7v1m0 1v1m0 1v1m0 24v1m0 1v1m0 1v1m0 7v1m0 1v1m0 1v1m0 1v1m0 134v1m0 1v1m0 1v1m0 1v1m0 1v1m0 1v1m0 7v1m0 1v1m0 1v1m0 1v1m0 1v1m0 1v1m0 1v1m0 47v1m0 1v2m0 1v1m0 1v1m0 1v2m0 1v1m0 1v2m0 1v1m0 1v1m0 2v1m0 1v1m0 2v1m0 1v2m0 1v1m0 1v2m0 1v2m0 1v1m0 1v2m0 1v2m0 1v1M340.5 267v1m0 1v1m0 1v1m0 9v1m0 1v1m0 1v1m0 24v1m0 1v1m0 1v1m0 7v1m0 1v1m0 1v1m0 1v1m0 144v1m0 1v1m0 1v1m0 1v1m0 1v1m0 1v1m0 1v1m0 7v1m0 1v1m0 1v6m0 1v1m0 1v1m0 53v1m0 1v2m0 1v1m0 2v1m0 1v2m0 1v2m0 1v2m0 1v1m0 2v1m0 2v1m0 2v1m0 2v1m0 2v2m0 1v2m0 1v2m0 1v2m0 2v1m0 2v2m0 1v2m0 1v2m0 2v1M341.5 283v1m0 1v1m0 1v1m0 7v1m0 1v1m0 1v1m0 26v1m0 1v1m0 1v1m0 9v1m0 1v1m0 1v1m0 157v1m0 1v1m0 1v1m0 1v1m0 1v1m0 1v1m0 1v2m0 1v1m0 6v1m0 1v1m0 1v1m0 1v2m0 1v1m0 1v1m0 1v2m0 1v1m0 63v1m0 2v1m0 2v1m0 2v2m0 2v1m0 2v1m0 2v2m0 2v1m0 2v2m0 2v1m0 2v2m0 2v1m0 2v2m0 2v2m0 2v1m0 3v1m0 2v2m0 2v2m0 2v2m0 2v2m0 2v2M342.5 191v1m0 105v1m0 1v1m0 1v1m0 9v1m0 1v1m0 1v1m0 28v1m0 1v1m0 1v1m0 9v1m0 1v1m0 1v1m0 170v1m0 1v1m0 2v1m0 1v1m0 1v2m0 1v1m0 1v2m0 1v1m0 2v1m0 4v1m0 1v2m0 1v1m0 2v1m0 1v2m0 1v2m0 1v2m0 1v1m0 2v1m0 2v1m0 72v1m0 3v1m0 2v2m0 2v2m0 2v2m0 2v2m0 2v2m0 3v1m0 3v1m0 3v2m0 2v2m0 3v1m0 3v2m0 2v2m0 3v1m0 3v2m0 2v2m0 3v1M343.5 191v1m0 7v1m0 1v1m0 1v1m0 109v1m0 1v1m0 1v1m0 1v1m0 7v1m0 1v1m0 1v1m0 30v1m0 1v1m0 1v1m0 1v1m0 7v1m0 1v1m0 1v1m0 1v1m0 191v1m0 2v1m0 2v1m0 2v1m0 2v1m0 2v1m0 2v1m0 2v1m0 2v1m0 2v2m0 2v1m0 2v1m0 2v1m0 2v2m0 2v1m0 2v1m0 2v2m0 2v1m0 2v2m0 81v1m0 3v1m0 4v1M344.5 199v1m0 1v1m0 1v1m0 1v1m0 5v1m0 1v1m0 1v1m0 1v1m0 113v1m0 1v1m0 1v1m0 7v1m0 1v1m0 1v1m0 1v1m0 32v1m0 1v1m0 1v1m0 1v1m0 7v1m0 1v1m0 1v1m0 1v1m0 215v1m0 2v1m0 2v2m0 2v1m0 2v2m0 2v1m0 2v2m0 2v1m0 3v1m0 2v2m0 2v1m0 3v1m0 3v1m0 2v2m0 2v2m0 2v2m0 2v2m0 3v1m0 3v1M345.5 192v1m0 1v1m0 18v1m0 1v1m0 1v1m0 7v1m0 1v1m0 1v1m0 117v1m0 1v1m0 1v1m0 1v1m0 7v1m0 1v1m0 1v1m0 1v1m0 34v1m0 1v1m0 1v1m0 1v1m0 9v1m0 1v1m0 1v1m0 1v1m0 248v1m0 3v1m0 3v1m0 3v1m0 3v1m0 3v2m0 3v1m0 3v1m0 4v1m0 3v1m0 3v1m0 3v2m0 3v1M346.5 192v1m0 1v1m0 9v1m0 1v1m0 18v1m0 1v1m0 1v1m0 7v1m0 1v1m0 1v1m0 1v1m0 123v1m0 1v1m0 1v1m0 9v1m0 1v1m0 1v1m0 1v1m0 36v1m0 1v1m0 1v1m0 1v1m0 1v1m0 7v1m0 1v1m0 1v1m0 1v1m0 1v1m0 1v1M347.5 204v1m0 1v1m0 32v1m0 1v1m0 1v1m0 7v1m0 1v1m0 1v1m0 131v1m0 1v1m0 1v1m0 1v1m0 7v1m0 1v1m0 1v1m0 1v1m0 40v1m0 1v1m0 1v1m0 1v1m0 1v1m0 7v1m0 1v1m0 1v1m0 1v1m0 1v1m0 1v1m0 1v1M348.5 253v1m0 1v1m0 1v1m0 7v1m0 1v1m0 1v1m0 137v1m0 1v1m0 1v1m0 1v1m0 9v1m0 1v1m0 1v1m0 1v1m0 1v1m0 40v1m0 1v1m0 1v1m0 1v1m0 1v1m0 1v1m0 1v1m0 1v1m0 5v1m0 1v1m0 1v1m0 1v1m0 1v6m0 1v1M349.5 243v1m0 1v1m0 21v1m0 1v1m0 1v1m0 9v1m0 1v1m0 145v1m0 1v1m0 1v1m0 1v1m0 1v1m0 7v1m0 1v1m0 1v1m0 1v1m0 1v1m0 1v1m0 46v1m0 1v4m0 1v1m0 1v1m0 1v1m0 1v1m0 1v1m0 6v1m0 1v2m0 1v1m0 1v1m0 1v2m0 1v1m0 1v4m0 1v1M350.5 243v1m0 1v1m0 1v1m0 7v1m0 1v1m0 1v1m0 23v1m0 1v1m0 10v1m0 1v1m0 1v1m0 152v1m0 1v1m0 1v1m0 5v1m0 7v1m0 1v1m0 1v1m0 1v1m0 1v1m0 1v1m0 1v1m0 52v1m0 1v1m0 2v1m0 1v1m0 1v2m0 1v1m0 1v2m0 1v1m0 2v1m0 1v1m0 2v1m0 1v2m0 1v2m0 1v2m0 1v1m0 1v2m0 1v2m0 1v2m0 1v2m0 1v2M351.5 257v1m0 1v1m0 1v1m0 7v1m0 1v1m0 1v1m0 24v1m0 1v1m0 1v1m0 9v1m0 1v1m0 1v1m0 162v1m0 1v1m0 1v1m0 1v1m0 1v1m0 1v1m0 1v1m0 1v1m0 7v1m0 1v1m0 1v1m0 1v1m0 1v4m0 1v1m0 1v1m0 55v1m0 2v1m0 1v2m0 1v2m0 1v2m0 1v2m0 1v2m0 1v2m0 2v1m0 2v1m0 2v1m0 2v2m0 1v2m0 1v2m0 2v2m0 1v2m0 1v2m0 2v2m0 1v2m0 2v1m0 2v2m0 2v1M352.5 271v1m0 1v1m0 1v1m0 7v1m0 1v1m0 1v1m0 1v1m0 24v1m0 1v1m0 1v1m0 9v1m0 1v1m0 1v1m0 179v1m0 1v1m0 1v1m0 1v1m0 1v2m0 1v1m0 1v1m0 6v1m0 1v1m0 1v2m0 1v1m0 1v2m0 1v1m0 1v2m0 1v1m0 1v2m0 1v1m0 64v1m0 2v1m0 2v2m0 1v2m0 2v1m0 2v2m0 2v2m0 2v1m0 2v2m0 2v1m0 3v1m0 2v2m0 2v2m0 2v2m0 2v2m0 2v2m0 2v2m0 2v2m0 2v2m0 3v1m0 3v1M353.5 285v1m0 1v1m0 1v1m0 1v1m0 7v1m0 1v1m0 1v1m0 26v1m0 1v1m0 1v1m0 1v1m0 7v1m0 1v1m0 1v1m0 1v1m0 193v1m0 1v1m0 2v1m0 1v2m0 1v1m0 1v2m0 1v1m0 2v1m0 2v1m0 1v1m0 2v1m0 2v1m0 1v2m0 1v2m0 1v2m0 1v2m0 1v2m0 1v2m0 1v2m0 2v1m0 75v1m0 3v2m0 2v2m0 2v2m0 3v1m0 3v1m0 3v2m0 2v2m0 3v1m0 3v1m0 3v2m0 3v1m0 3v1m0 3v2M354.5 301v1m0 1v1m0 1v1m0 1v1m0 7v1m0 1v1m0 1v1m0 28v1m0 1v1m0 1v1m0 1v1m0 9v1m0 1v1m0 1v1m0 218v2m0 1v2m0 1v2m0 2v1m0 2v1m0 2v1m0 2v1m0 2v2m0 2v1m0 2v1m0 2v2m0 2v1m0 2v2m0 1v2m0 2v2m0 1v2m0 2v2m0 2v1m0 2v2m0 2v1M355.5 194v1m0 1v1m0 1v1m0 118v1m0 1v1m0 1v1m0 1v1m0 7v1m0 1v1m0 1v1m0 1v1m0 30v1m0 1v1m0 1v1m0 1v1m0 7v1m0 1v1m0 1v1m0 1v1m0 244v1m0 3v1m0 2v1m0 3v1m0 2v2m0 2v1m0 3v1m0 3v1m0 3v1m0 2v2m0 2v2m0 2v2m0 2v2m0 2v2m0 3v1m0 3v1m0 3v2m0 2v2m0 3v1M356.5 194v1m0 1v1m0 1v1m0 1v1m0 7v1m0 1v1m0 1v1m0 122v1m0 1v1m0 1v1m0 1v1m0 7v1m0 1v1m0 1v1m0 1v1m0 32v1m0 1v1m0 1v1m0 1v1m0 9v5m0 1v1m0 280v1m0 3v2m0 3v1m0 3v1m0 3v1m0 4v1m0 3v1M357.5 208v1m0 1v1m0 1v1m0 140v1m0 1v1m0 1v1m0 1v1m0 8v6m0 36v7m0 9v8M358.5 233v1m0 1v1m0 1v1m0 135v6m0 9v5m0 1v1m0 38v9m0 7v1m0 1v7M359.5 212v1m0 1v1m0 20v1m0 1v1m0 1v1m0 7v1m0 1v1m0 1v1m0 142v5m0 1v1m0 7v1m0 1v1m0 1v1m0 1v1m0 1v1m0 40v1m0 5v1m0 1v1m0 1v1m0 1v1m0 5v1m0 1v1m0 1v1m0 1v1m0 1v1m0 1v1m0 1v1m0 1v1M360.5 212v1m0 1v1m0 9v1m0 1v1m0 1v1m0 18v1m0 1v1m0 1v1m0 1v1m0 7v1m0 1v1m0 1v1m0 150v1m0 1v1m0 1v1m0 1v1m0 9v1m0 1v1m0 1v1m0 1v1m0 1v1m0 44v1m0 1v1m0 1v1m0 1v1m0 1v1m0 1v1m0 1v1m0 1v1m0 7v4m0 1v1m0 1v1m0 1v1m0 1v4m0 1v1M361.5 224v1m0 1v1m0 1v1m0 7v1m0 1v1m0 1v1m0 22v1m0 1v1m0 1v1m0 7v1m0 1v1m0 1v1m0 158v1m0 1v1m0 1v1m0 1v1m0 1v1m0 1v1m0 7v1m0 1v1m0 5v1m0 1v1m0 49v1m0 1v4m0 1v1m0 1v1m0 1v2m0 1v1m0 1v1m0 1v1m0 4v1m0 1v2m0 1v1m0 1v12m0 1v2m0 1v1M362.5 238v1m0 1v1m0 1v1m0 7v1m0 1v1m0 1v1m0 22v1m0 1v1m0 1v1m0 8v1m0 1v1m0 1v1m0 169v1m0 1v1m0 1v1m0 1v1m0 1v1m0 1v1m0 1v1m0 7v1m0 1v1m0 1v1m0 1v1m0 1v1m0 1v1m0 1v1m0 1v1m0 53v1m0 1v1m0 2v1m0 1v2m0 1v1m0 2v1m0 1v2m0 1v2m0 1v1m0 2v1m0 2v1m0 2v1m0 1v2m0 1v12m0 1v2m0 1v2m0 2v1m0 2v1M363.5 252v1m0 1v1m0 10v1m0 1v1m0 1v1m0 22v1m0 1v1m0 1v1m0 1v1m0 7v1m0 1v1m0 1v1m0 181v1m0 1v1m0 1v1m0 1v1m0 1v1m0 1v1m0 1v1m0 1v1m0 1v1m0 6v1m0 1v1m0 1v1m0 1v1m0 1v2m0 1v1m0 1v1m0 1v2m0 1v1m0 60v1m0 2v2m0 1v2m0 1v2m0 2v1m0 2v1m0 2v2m0 2v1m0 2v1m0 2v2m0 2v1m0 2v2m0 2v1m0 2v2m0 2v2m0 1v2m0 2v2m0 2v2m0 2v1m0 3v1m0 2v2M364.5 267v1m0 1v1m0 1v1m0 7v1m0 1v1m0 1v1m0 24v1m0 1v1m0 1v1m0 1v1m0 7v1m0 1v1m0 1v1m0 1v1m0 197v1m0 1v1m0 1v2m0 1v1m0 1v1m0 1v2m0 1v1m0 1v1m0 7v1m0 1v2m0 1v1m0 1v2m0 1v1m0 2v1m0 1v2m0 1v2m0 1v1m0 2v1m0 70v1m0 2v2m0 2v2m0 2v1m0 3v1m0 2v2m0 2v2m0 2v2m0 2v2m0 3v1m0 3v1m0 3v1m0 3v2m0 2v2m0 3v1m0 3v2m0 2v2m0 3v1m0 3v1M365.5 195v1m0 1v1m0 1v1m0 81v1m0 1v1m0 1v1m0 9v1m0 1v1m0 1v1m0 26v1m0 1v1m0 1v1m0 1v1m0 7v6m0 217v1m0 1v2m0 1v2m0 1v1m0 2v1m0 2v1m0 2v1m0 2v1m0 2v1m0 2v1m0 2v1m0 2v1m0 2v2m0 1v2m0 1v2m0 2v1m0 2v2m0 1v2m0 2v1m0 2v1m0 83v1m0 3v2m0 3v1m0 3v1M366.5 195v1m0 1v1m0 1v1m0 7v1m0 1v1m0 1v1m0 85v1m0 1v1m0 1v1m0 9v1m0 1v1m0 1v1m0 28v6m0 9v1m0 1v1m0 1v1m0 244v1m0 2v1m0 2v2m0 2v1m0 2v1m0 2v2m0 2v1m0 2v2m0 2v1m0 3v1m0 2v1m0 3v1m0 2v2m0 2v2m0 2v1m0 3v1m0 3v1m0 3v1m0 3v1m0 3v1M367.5 190v1m0 16v1m0 1v1m0 1v1m0 9v1m0 1v1m0 1v1m0 87v1m0 1v1m0 1v1m0 10v1m0 1v1m0 1v1m0 30v1m0 1v1m0 1v1m0 1v1m0 7v1m0 1v1m0 1v1m0 1v1m0 277v1m0 3v1m0 3v1m0 3v1m0 3v1m0 3v1m0 3v1m0 3v1m0 4v1m0 3v1m0 3v1m0 3v2m0 3v1m0 3v1m0 3v2m0 3v1M368.5 190v1m0 7v1m0 1v1m0 1v1m0 18v1m0 1v1m0 1v1m0 9v1m0 1v1m0 92v1m0 1v1m0 1v1m0 1v1m0 7v1m0 1v1m0 1v1m0 1v1m0 32v1m0 1v1m0 1v1m0 1v1m0 9v7M369.5 198v1m0 1v1m0 1v1m0 7v1m0 1v1m0 1v1m0 1v1m0 18v1m0 1v1m0 1v1m0 7v1m0 1v1m0 1v1m0 96v1m0 1v1m0 1v1m0 1v1m0 9v1m0 1v1m0 1v1m0 37v7m0 9v1m0 1v1m0 1v1m0 1v1m0 1v1M370.5 212v1m0 1v1m0 1v1m0 7v1m0 1v1m0 1v1m0 20v1m0 1v1m0 1v1m0 9v1m0 1v1m0 102v1m0 1v1m0 1v3m0 8v5m0 1v1m0 38v1m0 1v1m0 1v1m0 1v1m0 1v1m0 9v1m0 1v1m0 1v1m0 1v1m0 1v1m0 1v1M371.5 224v1m0 1v1m0 1v1m0 9v1m0 1v1m0 1v1m0 22v1m0 1v1m0 9v1m0 1v1m0 109v1m0 1v1m0 1v1m0 1v1m0 9v1m0 1v1m0 1v1m0 1v1m0 42v1m0 1v3m0 4v1m0 9v1m0 1v1m0 1v1m0 1v1m0 1v1m0 1v1m0 1v1M372.5 238v1m0 1v1m0 1v1m0 7v1m0 1v1m0 1v1m0 1v1m0 22v1m0 1v1m0 11v4m0 114v1m0 1v1m0 1v1m0 1v1m0 1v1m0 7v1m0 1v7m0 45v1m0 1v1m0 1v1m0 1v1m0 1v1m0 1v1m0 1v1m0 1v1m0 5v1m0 1v1m0 1v1m0 1v6m0 1v1m0 1v1m0 1v1m0 1v1M373.5 252v1m0 1v1m0 1v1m0 9v1m0 1v1m0 1v1m0 25v1m0 1v1m0 9v1m0 1v1m0 1v1m0 122v8m0 9v1m0 1v1m0 1v1m0 1v1m0 53v1m0 1v1m0 1v1m0 1v1m0 1v1m0 1v2m0 1v1m0 1v1m0 1v1m0 6v1m0 2v1m0 1v1m0 1v2m0 1v1m0 1v2m0 1v1m0 1v2m0 1v1m0 2v1M374.5 266v1m0 1v1m0 1v1m0 1v1m0 7v1m0 1v1m0 1v1m0 27v1m0 1v1m0 1v1m0 7v1m0 1v1m0 1v1m0 1v1m0 133v1m0 1v1m0 1v1m0 1v1m0 1v1m0 7v1m0 1v1m0 1v1m0 1v1m0 1v1m0 1v1m0 1v1m0 56v1m0 1v1m0 1v2m0 1v1m0 2v1m0 1v2m0 1v1m0 2v1m0 2v1m0 2v1m0 1v2m0 1v2m0 1v2m0 1v2m0 1v2m0 1v2m0 1v2m0 1v2m0 2v1m0 2v1m0 2v2M375.5 192v1m0 1v1m0 1v1m0 85v1m0 1v1m0 1v1m0 1v1m0 7v1m0 1v1m0 1v1m0 27v1m0 1v1m0 1v1m0 1v1m0 7v1m0 1v1m0 1v1m0 1v1m0 139v1m0 1v1m0 1v1m0 1v1m0 1v1m0 1v1m0 1v1m0 1v1m0 7v1m0 1v1m0 1v4m0 1v1m0 1v1m0 1v1m0 1v2m0 1v1m0 61v2m0 1v2m0 2v1m0 2v1m0 2v1m0 2v2m0 1v2m0 2v1m0 2v2m0 2v1m0 2v1m0 2v2m0 2v1m0 2v2m0 2v2m0 1v2m0 2v2m0 2v1m0 2v2m0 2v2m0 2v2M376.5 192v1m0 1v1m0 1v1m0 7v1m0 1v1m0 1v1m0 89v1m0 1v1m0 1v1m0 1v1m0 7v1m0 1v1m0 1v1m0 29v1m0 1v1m0 1v1m0 1v1m0 9v1m0 1v1m0 1v1m0 154v1m0 1v1m0 1v2m0 1v1m0 1v1m0 1v2m0 1v1m0 1v1m0 1v1m0 7v1m0 1v2m0 1v1m0 1v2m0 1v1m0 1v2m0 1v2m0 1v1m0 2v1m0 72v1m0 2v2m0 2v1m0 3v1m0 2v2m0 2v2m0 2v1m0 3v1m0 3v1m0 3v1m0 3v1m0 3v2m0 2v2m0 2v2m0 3v1m0 3v2m0 2v2m0 3v1m0 3v1m0 3v2M377.5 204v1m0 1v1m0 1v1m0 107v1m0 1v1m0 1v1m0 9v1m0 1v1m0 1v1m0 31v1m0 1v1m0 1v1m0 1v1m0 9v1m0 1v1m0 1v1m0 1v1m0 171v1m0 1v2m0 1v1m0 2v1m0 1v2m0 1v2m0 1v1m0 2v1m0 2v1m0 2v1m0 2v1m0 2v2m0 1v2m0 1v2m0 2v1m0 2v1m0 2v2m0 1v2m0 2v1m0 2v2m0 81v1m0 3v2m0 3v1m0 3v1m0 3v2m0 3v1M378.5 198v1m0 34v1m0 1v1m0 96v1m0 1v1m0 1v1m0 1v1m0 9v1m0 1v1m0 1v1m0 35v1m0 1v1m0 1v1m0 1v1m0 7v1m0 1v1m0 1v1m0 1v1m0 1v1m0 193v1m0 2v2m0 2v1m0 2v1m0 2v2m0 2v1m0 2v1m0 2v2m0 2v1m0 3v1m0 2v1m0 3v1m0 2v2m0 2v1m0 3v1m0 2v2m0 2v2m0 2v2m0 2v2m0 2v1M379.5 198v1m0 9v1m0 1v1m0 1v1m0 20v1m0 1v1m0 9v1m0 1v1m0 1v1m0 102v1m0 1v1m0 1v1m0 1v1m0 7v1m0 1v1m0 1v1m0 1v1m0 37v1m0 1v1m0 1v1m0 1v1m0 9v1m0 1v1m0 1v1m0 1v1m0 1v1m0 222v1m0 2v2m0 2v2m0 2v1m0 3v1m0 3v1m0 3v2m0 2v2m0 3v1m0 3v1m0 3v1m0 3v2m0 3v1m0 3v1m0 3v2m0 3v1m0 3v1M380.5 208v1m0 1v1m0 1v1m0 7v1m0 1v1m0 1v1m0 20v1m0 1v1m0 1v1m0 9v1m0 1v1m0 1v1m0 108v1m0 1v1m0 1v1m0 1v1m0 7v1m0 1v5m0 39v1m0 1v1m0 1v1m0 1v1m0 1v1m0 1v1m0 7v1m0 1v1m0 1v1m0 1v1m0 1v1M381.5 220v1m0 1v1m0 1v1m0 1v1m0 7v1m0 1v1m0 1v1m0 20v1m0 1v1m0 1v1m0 1v1m0 7v1m0 1v1m0 1v1m0 116v7m0 7v9m0 41v1m0 5v1m0 1v1m0 1v1m0 1v1m0 7v1m0 1v1m0 1v7m0 1v1m0 1v1m0 1v1M382.5 234v1m0 1v1m0 1v1m0 1v1m0 7v1m0 1v1m0 1v1m0 22v1m0 1v1m0 1v1m0 9v1m0 1v1m0 1v1m0 122v8m0 8v10m0 46v1m0 1v1m0 1v1m0 1v1m0 1v1m0 1v1m0 1v1m0 1v1m0 8v1m0 1v1m0 1v11m0 1v1m0 1v1M383.5 248v1m0 1v1m0 1v1m0 1v1m0 7v1m0 1v1m0 1v1m0 24v1m0 1v1m0 1v1m0 9v1m0 1v1m0 1v1m0 130v10m0 8v1m0 4v7m0 50v1m0 1v1m0 1v2m0 1v1m0 1v1m0 1v2m0 1v1m0 1v2m0 1v1m0 1v1m0 4v2m0 1v1m0 1v16m0 1v1m0 2v1M384.5 264v1m0 1v1m0 1v1m0 38v1m0 1v1m0 1v1m0 1v1m0 8v1m0 1v1m0 1v1m0 140v11m0 1v1m0 7v1m0 1v5m0 1v1m0 1v1m0 1v1m0 1v1m0 1v1m0 56v1m0 1v2m0 1v2m0 1v1m0 2v1m0 2v1m0 2v1m0 2v1m0 2v1m0 2v2m0 1v2m0 2v1m0 2v2m0 1v2m0 1v3m0 1v2m0 1v2m0 2v2m0 1v2m0 2v2m0 2v1M385.5 281v1m0 1v1m0 9v1m0 1v1m0 1v1m0 28v1m0 1v1m0 1v1m0 9v1m0 1v1m0 1v1m0 152v1m0 1v1m0 1v1m0 1v1m0 1v1m0 1v1m0 1v2m0 1v1m0 8v1m0 1v1m0 1v1m0 1v2m0 1v1m0 1v4m0 1v1m0 2v1m0 65v2m0 2v1m0 2v2m0 1v2m0 2v2m0 2v1m0 2v2m0 2v2m0 2v1m0 3v1m0 2v2m0 2v2m0 2v2m0 2v2m0 2v2m0 2v2m0 2v2m0 2v2m0 3v1m0 3v1M386.5 202v1m0 1v1m0 1v1m0 88v1m0 1v1m0 1v1m0 1v1m0 7v1m0 1v1m0 1v1m0 1v1m0 28v1m0 1v1m0 1v1m0 1v1m0 7v1m0 1v1m0 1v1m0 1v1m0 165v1m0 1v1m0 2v1m0 1v1m0 1v2m0 1v1m0 1v2m0 1v1m0 2v1m0 4v1m0 2v1m0 1v2m0 1v2m0 1v1m0 2v1m0 2v1m0 2v1m0 2v1m0 2v1m0 2v1m0 73v1m0 3v2m0 2v2m0 2v2m0 3v1m0 3v1m0 3v2m0 3v1m0 3v2m0 3v1m0 3v2m0 3v1m0 3v2m0 3v2m0 3v1m0 3v2m0 3v1M387.5 202v1m0 1v1m0 1v1m0 7v1m0 1v1m0 1v1m0 1v1m0 92v1m0 1v1m0 1v1m0 9v1m0 1v1m0 1v1m0 32v1m0 1v1m0 1v1m0 1v1m0 7v1m0 1v1m0 1v1m0 1v1m0 187v1m0 2v1m0 2v1m0 2v1m0 2v1m0 2v2m0 1v2m0 2v1m0 2v1m0 2v2m0 2v1m0 2v2m0 2v1m0 2v2m0 2v1m0 2v2m0 2v1m0 2v2m0 2v2m0 2v1M388.5 194v1m0 1v1m0 17v1m0 1v1m0 1v1m0 1v1m0 7v1m0 1v1m0 1v1m0 96v1m0 1v1m0 1v1m0 1v1m0 9v1m0 1v1m0 1v1m0 34v1m0 1v1m0 1v1m0 1v1m0 1v1m0 7v9m0 209v1m0 2v2m0 2v1m0 2v2m0 2v2m0 2v1m0 3v1m0 3v1m0 2v2m0 2v2m0 2v2m0 2v2m0 2v2m0 2v2m0 3v1m0 3v1m0 3v2m0 3v1m0 3v2m0 3v1M389.5 194v1m0 1v1m0 31v1m0 1v1m0 1v1m0 1v1m0 114v1m0 1v1m0 1v1m0 1v1m0 7v1m0 1v5m0 38v8m0 7v1m0 1v7m0 1v1m0 242v1m0 3v2m0 3v1m0 3v2m0 3v1m0 3v2m0 3v1m0 3v1m0 9v1m0 3v1m0 4v1M390.5 219v1m0 1v1m0 1v1m0 23v1m0 9v1m0 1v1m0 1v1m0 107v7m0 8v7m0 40v1m0 1v3m0 1v1m0 1v1m0 1v1m0 7v1m0 1v1m0 1v5M391.5 219v1m0 1v1m0 1v1m0 7v1m0 1v1m0 1v1m0 1v1m0 19v1m0 1v1m0 1v1m0 1v1m0 7v1m0 1v1m0 1v1m0 114v1m0 1v5m0 1v1m0 7v1m0 1v1m0 1v1m0 1v1m0 1v1m0 42v1m0 5v1m0 1v1m0 1v1m0 1v1m0 7v1m0 1v1m0 1v9m0 1v1M392.5 233v1m0 1v1m0 1v1m0 7v1m0 1v1m0 1v1m0 1v1m0 21v1m0 1v1m0 1v1m0 9v1m0 1v1m0 1v1m0 122v1m0 1v1m0 1v1m0 1v1m0 1v1m0 7v1m0 1v1m0 1v1m0 1v1m0 1v1m0 1v1m0 46v1m0 1v7m0 1v1m0 1v1m0 1v1m0 1v1m0 5v1m0 1v15m0 1v1m0 1v1M393.5 247v1m0 1v1m0 1v1m0 9v1m0 1v1m0 25v1m0 1v1m0 1v1m0 10v1m0 1v1m0 1v1m0 129v1m0 1v1m0 1v1m0 1v1m0 1v1m0 1v1m0 7v1m0 1v1m0 4v6m0 51v1m0 1v2m0 1v1m0 1v1m0 1v2m0 1v1m0 1v1m0 1v2m0 1v1m0 4v1m0 1v2m0 1v1m0 1v16m0 1v1m0 2v1M394.5 263v1m0 12v1m0 1v1m0 1v1m0 25v1m0 1v1m0 1v1m0 1v1m0 7v1m0 1v1m0 1v1m0 1v1m0 137v14m0 7v1m0 1v1m0 1v3m0 1v1m0 1v1m0 1v1m0 1v1m0 1v1m0 55v1m0 2v1m0 1v2m0 1v2m0 1v1m0 2v1m0 2v1m0 2v1m0 2v1m0 2v1m0 2v1m0 2v2m0 1v2m0 1v3m0 1v2m0 1v2m0 1v3m0 1v2m0 1v2m0 2v2m0 2v1m0 2v1M395.5 278v1m0 1v1m0 1v1m0 7v1m0 1v1m0 1v1m0 1v1m0 27v1m0 1v1m0 1v1m0 1v1m0 7v1m0 1v1m0 1v1m0 1v1m0 150v1m0 1v1m0 1v8m0 1v1m0 1v1m0 1v1m0 6v1m0 1v1m0 1v1m0 1v2m0 1v1m0 1v1m0 1v2m0 1v1m0 1v1m0 68v1m0 2v2m0 2v1m0 2v2m0 2v1m0 2v2m0 2v1m0 2v2m0 2v2m0 2v1m0 3v1m0 2v2m0 2v2m0 2v2m0 2v2m0 2v2m0 2v2m0 2v2m0 2v2m0 3v1M396.5 199v1m0 1v1m0 1v1m0 1v1m0 88v1m0 1v1m0 1v1m0 9v1m0 1v1m0 1v1m0 29v1m0 1v1m0 1v1m0 1v1m0 8v7m0 166v1m0 1v2m0 1v1m0 1v1m0 2v1m0 1v1m0 2v1m0 1v1m0 2v1m0 4v1m0 2v1m0 1v2m0 1v2m0 1v1m0 2v1m0 1v2m0 1v2m0 1v2m0 2v1m0 2v1m0 76v2m0 2v2m0 2v2m0 3v1m0 3v1m0 3v2m0 2v2m0 3v1m0 3v2m0 3v1m0 3v2m0 3v1m0 3v2m0 3v1m0 3v2m0 3v1M397.5 199v1m0 1v1m0 1v1m0 1v1m0 7v1m0 1v1m0 94v1m0 1v1m0 1v1m0 1v1m0 8v5m0 33v5m0 1v1m0 7v1m0 1v5m0 188v1m0 2v1m0 2v1m0 2v1m0 2v1m0 2v1m0 2v2m0 1v2m0 2v1m0 2v1m0 2v2m0 2v1m0 2v2m0 2v1m0 2v2m0 2v1m0 2v2m0 2v2m0 2v1m0 2v2M398.5 215v1m0 12v1m0 1v1m0 98v1m0 1v1m0 1v1m0 9v1m0 1v1m0 1v1m0 1v1m0 33v1m0 1v5m0 1v1m0 7v1m0 1v7m0 213v1m0 2v2m0 2v1m0 3v1m0 2v2m0 2v2m0 2v1m0 3v1m0 3v1m0 3v1m0 2v2m0 2v2m0 2v2m0 3v1m0 3v1m0 3v2m0 2v2m0 3v1m0 3v2M399.5 204v1m0 1v1m0 1v1m0 19v1m0 1v1m0 1v1m0 7v1m0 1v1m0 1v1m0 102v1m0 1v1m0 1v1m0 1v1m0 9v1m0 1v3m0 1v1m0 37v8m0 7v1m0 1v7m0 1v1m0 242v1m0 3v1m0 3v2m0 3v1m0 3v2m0 3v1m0 3v2m0 3v1m0 3v1m0 13v1M400.5 204v1m0 1v1m0 1v1m0 7v1m0 1v1m0 1v1m0 1v1m0 19v1m0 1v1m0 1v1m0 7v1m0 1v1m0 1v1m0 1v1m0 106v1m0 1v6m0 9v7m0 39v1m0 1v7m0 1v1m0 8v10M401.5 216v1m0 1v1m0 1v1m0 1v1m0 7v1m0 1v1m0 1v1m0 21v1m0 1v1m0 1v1m0 1v1m0 7v1m0 1v1m0 1v1m0 115v7m0 9v7m0 1v1m0 42v1m0 5v5m0 1v1m0 8v13m0 1v1m0 1v1M402.5 230v1m0 1v1m0 1v1m0 1v1m0 35v1m0 1v1m0 10v1m0 1v1m0 1v1m0 1v1m0 120v1m0 1v7m0 8v9m0 1v1m0 46v1m0 1v1m0 1v12m0 1v1m0 6v1m0 1v18m0 1v1M403.5 249v1m0 9v1m0 1v1m0 1v1m0 23v1m0 1v1m0 1v1m0 1v1m0 7v1m0 1v1m0 1v1m0 1v1m0 129v1m0 1v7m0 1v1m0 1v1m0 7v2m0 4v4m0 1v1m0 52v2m0 1v1m0 1v12m0 1v1m0 1v2m0 1v1m0 2v1m0 2v1m0 1v20m0 1v2M404.5 261v1m0 1v1m0 1v1m0 7v1m0 1v1m0 1v1m0 1v1m0 25v1m0 1v1m0 1v1m0 1v1m0 7v4m0 1v1m0 139v1m0 1v1m0 1v9m0 1v1m0 7v14m0 1v2m0 58v2m0 1v2m0 1v2m0 1v2m0 1v2m0 1v2m0 2v2m0 1v2m0 1v2m0 2v2m0 1v2m0 2v21m0 1v2m0 2v2m0 2v2M405.5 196v1m0 1v1m0 1v1m0 74v1m0 1v1m0 1v1m0 1v1m0 9v1m0 1v1m0 30v1m0 1v1m0 1v1m0 9v1m0 1v1m0 1v1m0 152v1m0 1v1m0 1v6m0 1v1m0 1v1m0 1v2m0 1v1m0 6v1m0 1v1m0 1v12m0 1v1m0 2v1m0 1v1m0 65v2m0 2v2m0 2v1m0 2v2m0 2v2m0 2v2m0 2v2m0 2v2m0 2v2m0 2v2m0 2v2m0 2v2m0 3v2m0 2v2m0 2v2m0 3v2m0 2v2m0 3v2m0 3v1M406.5 196v1m0 1v1m0 1v1m0 7v1m0 1v1m0 1v1m0 1v1m0 78v1m0 1v2m0 9v1m0 1v1m0 1v1m0 1v1m0 29v1m0 1v1m0 1v1m0 1v1m0 8v1m0 1v1m0 1v1m0 1v1m0 168v1m0 1v2m0 1v1m0 2v1m0 1v2m0 1v1m0 2v1m0 1v2m0 1v2m0 1v1m0 2v1m0 2v2m0 1v2m0 1v2m0 1v2m0 1v2m0 1v2m0 2v2m0 1v2m0 2v1m0 76v1m0 3v2m0 2v2m0 3v2m0 3v1m0 3v2m0 3v2m0 3v2m0 3v1m0 4v1m0 4v1m0 3v2m0 3v2M407.5 210v1m0 1v1m0 1v1m0 7v1m0 1v1m0 1v1m0 83v1m0 1v1m0 1v1m0 1v1m0 7v1m0 1v1m0 1v1m0 1v1m0 30v1m0 1v1m0 1v1m0 1v1m0 1v1m0 7v1m0 1v6m0 189v2m0 1v2m0 2v1m0 2v2m0 2v1m0 2v2m0 2v1m0 2v2m0 2v1m0 3v1m0 2v2m0 2v2m0 2v2m0 1v2m0 2v2m0 2v2m0 2v2m0 2v2m0 3v1M408.5 224v1m0 1v1m0 1v1m0 7v1m0 1v1m0 1v1m0 87v1m0 1v1m0 1v2m0 9v1m0 1v1m0 1v1m0 1v1m0 34v7m0 9v1m0 1v6m0 217v1m0 2v2m0 2v2m0 2v2m0 2v2m0 2v2m0 3v1m0 3v1m0 3v2m0 3v1m0 3v2m0 2v2m0 3v2m0 2v2m0 3v2m0 3v2m0 3v1m0 3v2M409.5 238v1m0 1v1m0 1v1m0 104v1m0 1v1m0 1v1m0 1v1m0 9v6m0 38v7m0 1v1m0 7v10m0 1v1m0 245v1m0 3v2m0 3v1m0 4v1m0 3v2m0 3v2m0 3v2m0 3v1M410.5 226v1m0 1v1m0 1v1m0 137v5m0 1v1m0 9v1m0 1v5m0 41v1m0 1v8m0 7v1m0 1v8M411.5 228v1m0 1v1m0 1v1m0 7v1m0 1v1m0 1v1m0 38v1m0 1v1m0 104v8m0 7v1m0 1v8m0 43v1m0 4v9m0 7v15m0 1v1M412.5 242v1m0 1v1m0 1v1m0 7v1m0 1v1m0 1v1m0 1v1m0 24v1m0 1v1m0 10v1m0 1v1m0 1v1m0 110v8m0 1v1m0 7v10m0 1v1m0 46v1m0 1v13m0 1v1m0 1v1m0 7v1m0 1v14m0 1v2m0 1v1M413.5 256v1m0 1v1m0 1v1m0 1v1m0 7v1m0 1v1m0 1v1m0 27v1m0 1v1m0 1v1m0 9v1m0 1v1m0 1v1m0 118v1m0 1v8m0 1v1m0 7v1m0 4v5m0 1v1m0 1v1m0 52v1m0 1v2m0 1v1m0 1v2m0 1v2m0 1v1m0 1v2m0 1v2m0 1v1m0 2v1m0 2v1m0 2v1m0 1v18m0 2v1m0 2v2M414.5 198v1m0 1v1m0 1v1m0 69v1m0 1v1m0 1v1m0 1v1m0 7v1m0 1v1m0 1v1m0 27v1m0 1v1m0 1v1m0 1v1m0 7v1m0 1v1m0 1v1m0 1v1m0 128v1m0 1v8m0 1v1m0 1v1m0 6v1m0 1v1m0 1v13m0 1v1m0 57v1m0 2v2m0 1v2m0 1v2m0 2v2m0 1v2m0 2v1m0 2v2m0 2v2m0 2v1m0 2v2m0 2v2m0 1v3m0 1v3m0 1v2m0 2v2m0 2v2m0 2v2m0 2v2m0 2v2M415.5 198v1m0 1v1m0 1v1m0 1v1m0 7v1m0 1v1m0 1v1m0 71v1m0 1v1m0 1v1m0 1v1m0 7v1m0 1v1m0 1v1m0 1v1m0 29v1m0 1v1m0 1v1m0 1v1m0 7v1m0 1v1m0 1v1m0 1v1m0 139v1m0 1v1m0 1v2m0 1v1m0 1v1m0 1v2m0 1v1m0 1v2m0 1v1m0 4v1m0 1v2m0 1v1m0 1v2m0 1v2m0 1v1m0 1v2m0 1v2m0 1v1m0 2v1m0 66v1m0 2v2m0 2v2m0 2v2m0 2v2m0 2v2m0 2v2m0 2v2m0 3v1m0 3v2m0 2v2m0 3v1m0 3v2m0 2v2m0 3v2m0 2v2m0 3v2m0 3v2m0 3v1M416.5 214v1m0 1v1m0 89v1m0 1v1m0 1v1m0 1v1m0 7v1m0 1v1m0 1v1m0 1v1m0 31v1m0 1v1m0 1v1m0 1v1m0 8v7m0 155v1m0 2v1m0 1v2m0 1v2m0 1v1m0 2v1m0 2v1m0 2v1m0 2v1m0 2v1m0 2v1m0 2v2m0 1v2m0 1v2m0 2v2m0 1v2m0 2v2m0 1v2m0 2v1m0 79v2m0 3v1m0 3v2m0 3v2m0 3v2m0 3v1m0 3v2m0 3v2m0 3v2m0 3v2m0 3v2m0 3v2m0 3v1M417.5 202v1m0 1v1m0 1v1m0 117v1m0 1v1m0 1v1m0 1v1m0 7v6m0 35v1m0 1v5m0 1v1m0 7v1m0 1v7m0 173v1m0 2v2m0 2v1m0 2v2m0 2v2m0 2v1m0 2v2m0 2v2m0 2v1m0 3v1m0 3v1m0 2v2m0 2v2m0 2v2m0 2v2m0 2v2m0 3v1m0 3v2m0 2v1M418.5 204v1m0 1v1m0 1v1m0 7v1m0 1v1m0 1v1m0 122v5m0 1v1m0 7v1m0 1v1m0 1v1m0 1v1m0 1v1m0 37v8m0 9v8m0 1v1m0 200v1m0 3v1m0 3v1m0 3v2m0 2v2m0 2v2m0 3v1m0 3v2m0 3v1m0 3v1m0 3v2m0 3v2m0 3v1m0 3v2m0 3v2m0 3v2m0 3v2m0 3v1M419.5 216v1m0 1v1m0 1v1m0 1v1m0 7v1m0 1v1m0 1v1m0 35v1m0 1v1m0 1v1m0 88v1m0 1v1m0 1v1m0 1v1m0 1v1m0 7v8m0 40v1m0 1v7m0 1v1m0 8v1m0 1v8m0 1v1m0 229v1m0 3v2m0 3v2m0 3v2m0 3v1m0 4v1m0 4v1m0 4v1M420.5 230v1m0 1v1m0 1v1m0 1v1m0 7v1m0 1v1m0 1v1m0 23v1m0 1v1m0 1v1m0 1v1m0 7v1m0 1v1m0 1v1m0 95v7m0 9v1m0 1v7m0 44v4m0 4v4m0 1v1m0 5v15m0 1v1M421.5 246v1m0 1v1m0 1v1m0 7v1m0 1v1m0 1v1m0 1v1m0 23v1m0 1v1m0 1v1m0 1v1m0 7v1m0 1v1m0 1v1m0 1v1m0 99v1m0 1v8m0 9v8m0 1v1m0 48v13m0 1v2m0 1v1m0 6v1m0 1v14m0 1v2m0 1v1M422.5 260v1m0 1v1m0 1v1m0 1v1m0 7v1m0 1v1m0 1v1m0 1v1m0 25v1m0 1v1m0 1v1m0 1v1m0 7v1m0 1v1m0 1v1m0 1v1m0 107v1m0 1v10m0 7v1m0 1v4m0 4v2m0 1v1m0 52v1m0 1v2m0 1v1m0 1v7m0 1v2m0 1v2m0 1v1m0 2v1m0 2v1m0 1v2m0 1v17m0 2v1m0 2v1M423.5 195v1m0 1v1m0 1v1m0 76v1m0 1v1m0 1v1m0 1v1m0 7v1m0 1v1m0 1v1m0 29v1m0 1v4m0 9v1m0 1v1m0 1v1m0 1v1m0 118v10m0 1v1m0 1v1m0 6v1m0 1v13m0 1v1m0 59v2m0 1v2m0 1v2m0 2v1m0 2v2m0 1v2m0 1v2m0 2v2m0 2v1m0 2v2m0 2v2m0 1v2m0 2v2m0 1v3m0 1v2m0 2v2m0 2v2m0 2v2m0 2v1m0 3v1M424.5 195v1m0 1v1m0 1v1m0 1v1m0 5v1m0 1v1m0 1v1m0 1v1m0 80v1m0 1v1m0 1v1m0 8v1m0 1v1m0 1v1m0 1v1m0 29v1m0 1v1m0 1v1m0 1v1m0 1v1m0 7v6m0 1v1m0 126v1m0 1v4m0 1v6m0 1v1m0 1v2m0 1v1m0 4v1m0 1v2m0 1v12m0 1v2m0 1v1m0 2v1m0 67v1m0 2v2m0 2v2m0 2v2m0 2v1m0 2v2m0 2v2m0 2v2m0 2v2m0 3v1m0 3v1m0 3v1m0 3v2m0 2v2m0 2v2m0 2v2m0 3v2m0 2v2m0 3v1m0 3v1M425.5 209v1m0 1v1m0 1v1m0 7v1m0 1v1m0 1v1m0 1v1m0 83v1m0 1v1m0 1v1m0 1v1m0 7v1m0 1v1m0 1v1m0 1v1m0 32v1m0 1v1m0 1v1m0 1v1m0 1v1m0 7v8m0 142v1m0 1v2m0 1v2m0 1v2m0 1v1m0 1v2m0 1v2m0 1v2m0 1v2m0 4v2m0 1v2m0 1v2m0 1v2m0 2v1m0 2v2m0 1v2m0 2v1m0 2v2m0 2v1m0 76v1m0 3v1m0 3v2m0 2v2m0 3v1m0 3v2m0 3v1m0 3v2m0 3v1m0 3v2m0 3v1m0 4v1m0 3v2m0 3v1M426.5 223v1m0 1v1m0 1v1m0 9v1m0 1v1m0 1v1m0 87v1m0 1v1m0 1v1m0 1v1m0 8v1m0 1v1m0 1v1m0 1v1m0 36v1m0 1v5m0 1v1m0 8v7m0 1v1m0 158v1m0 2v2m0 1v2m0 2v1m0 2v2m0 2v1m0 2v2m0 2v2m0 1v2m0 2v2m0 2v1m0 3v1m0 2v2m0 2v2m0 2v2m0 2v2m0 2v2m0 2v1m0 3v1m0 3v1M427.5 239v1m0 1v1m0 1v1m0 7v1m0 1v1m0 1v1m0 94v1m0 1v1m0 1v1m0 1v1m0 7v1m0 1v6m0 38v1m0 1v8m0 1v1m0 7v11m0 185v1m0 3v1m0 3v1m0 3v1m0 3v1m0 3v1m0 3v1m0 3v2m0 2v2m0 2v2m0 3v1m0 3v2m0 2v2m0 2v2m0 3v2m0 2v2m0 3v2m0 3v1m0 3v2M428.5 217v1m0 9v1m0 1v1m0 1v1m0 21v1m0 1v1m0 1v1m0 9v1m0 1v1m0 1v1m0 99v7m0 9v8m0 41v1m0 1v11m0 7v3m0 4v6m0 1v1m0 212v1m0 4v1m0 3v2m0 3v1m0 3v2m0 3v1m0 3v2m0 3v1M429.5 227v1m0 1v1m0 1v1m0 1v1m0 7v1m0 1v1m0 1v1m0 23v1m0 1v1m0 1v1m0 1v1m0 7v1m0 1v1m0 1v1m0 106v7m0 1v1m0 8v9m0 46v15m0 6v1m0 1v16m0 1v1M430.5 243v1m0 1v1m0 1v1m0 7v1m0 1v1m0 1v1m0 25v1m0 1v1m0 1v1m0 1v1m0 7v1m0 1v1m0 1v1m0 113v1m0 1v8m0 1v1m0 6v1m0 1v10m0 1v1m0 50v1m0 1v14m0 1v2m0 4v1m0 1v19m0 1v2m0 2v1M431.5 257v1m0 1v1m0 1v1m0 1v1m0 7v1m0 1v1m0 1v1m0 27v1m0 1v1m0 1v1m0 8v1m0 1v1m0 1v1m0 1v1m0 121v1m0 1v10m0 1v1m0 6v1m0 1v13m0 1v1m0 55v1m0 1v2m0 1v11m0 1v2m0 2v1m0 2v1m0 2v2m0 1v2m0 1v20m0 2v2m0 2v1M432.5 275v1m0 12v1m0 1v1m0 1v1m0 27v1m0 1v1m0 1v1m0 1v1m0 1v1m0 7v6m0 131v1m0 1v14m0 1v1m0 6v1m0 1v15m0 1v1m0 1v1m0 59v1m0 2v2m0 1v2m0 2v2m0 2v2m0 1v3m0 1v2m0 2v2m0 2v2m0 2v2m0 2v2m0 2v2m0 2v2m0 1v3m0 1v3m0 2v2m0 2v2m0 2v2m0 2v2m0 2v2M433.5 290v1m0 1v1m0 1v1m0 1v1m0 7v1m0 1v1m0 1v1m0 1v1m0 30v1m0 1v1m0 1v1m0 1v1m0 7v1m0 1v6m0 144v1m0 1v2m0 1v12m0 1v2m0 1v1m0 5v1m0 2v1m0 1v14m0 1v2m0 2v1m0 71v1m0 3v1m0 3v2m0 2v2m0 2v2m0 2v2m0 2v2m0 3v2m0 2v2m0 2v2m0 3v1m0 3v2m0 3v1m0 3v2m0 3v2m0 2v2m0 3v2m0 2v2m0 3v2m0 3v1M434.5 198v1m0 1v1m0 1v1m0 35v1m0 69v1m0 1v1m0 1v1m0 1v1m0 8v1m0 1v1m0 1v1m0 34v3m0 1v1m0 1v1m0 9v6m0 1v1m0 160v1m0 1v2m0 1v2m0 1v2m0 2v1m0 2v2m0 1v2m0 1v2m0 2v1m0 2v2m0 2v1m0 2v2m0 2v2m0 1v2m0 2v2m0 2v2m0 1v2m0 2v2m0 2v2m0 85v2m0 3v2m0 3v1m0 3v2m0 3v1m0 4v1m0 3v2m0 3v1M435.5 198v1m0 1v1m0 1v1m0 1v1m0 5v1m0 1v1m0 1v1m0 1v1m0 21v1m0 1v1m0 1v1m0 7v1m0 1v1m0 1v1m0 72v1m0 1v1m0 1v1m0 1v1m0 7v1m0 1v1m0 1v3m0 35v1m0 1v5m0 1v1m0 8v1m0 1v8m0 182v2m0 2v2m0 2v1m0 2v2m0 2v2m0 2v2m0 2v2m0 2v2m0 2v2m0 2v1m0 3v2m0 2v2m0 2v2m0 2v2m0 2v2m0 2v2m0 3v2m0 2v2m0 2v2m0 3v1M436.5 212v1m0 1v1m0 1v1m0 1v1m0 5v1m0 1v1m0 1v1m0 1v1m0 21v1m0 1v1m0 1v1m0 1v1m0 7v1m0 1v1m0 1v1m0 76v4m0 1v1m0 9v1m0 1v1m0 1v3m0 39v8m0 1v1m0 8v11m0 211v1m0 3v1m0 3v2m0 2v2m0 2v2m0 3v1m0 3v2m0 3v1m0 3v2m0 3v1m0 3v2m0 3v1m0 3v2m0 3v2m0 3v1m0 3v2m0 3v1m0 4v1M437.5 226v1m0 1v1m0 1v1m0 1v1m0 5v1m0 1v1m0 1v1m0 1v1m0 23v1m0 1v1m0 1v1m0 1v1m0 8v1m0 1v1m0 1v1m0 80v4m0 1v1m0 1v1m0 7v8m0 1v1m0 40v1m0 1v9m0 1v1m0 6v1m0 1v5m0 4v2m0 1v1m0 1v1m0 246v1m0 3v1m0 4v1M438.5 242v1m0 1v1m0 1v1m0 38v1m0 1v1m0 1v1m0 1v1m0 7v1m0 1v1m0 1v1m0 86v1m0 1v7m0 8v1m0 1v6m0 1v1m0 46v14m0 1v1m0 4v1m0 2v14m0 1v1m0 2v1M439.5 261v1m0 7v1m0 1v1m0 1v1m0 1v1m0 27v1m0 1v2m0 1v1m0 7v1m0 1v1m0 1v1m0 1v1m0 91v1m0 1v8m0 1v1m0 6v1m0 1v10m0 1v1m0 50v1m0 1v15m0 1v2m0 4v1m0 2v16m0 1v2m0 2v1M440.5 198v1m0 1v1m0 1v1m0 70v1m0 1v1m0 1v1m0 1v1m0 7v1m0 1v1m0 1v1m0 28v1m0 1v1m0 1v4m0 7v1m0 1v1m0 1v1m0 1v1m0 99v1m0 1v11m0 1v1m0 8v11m0 1v2m0 54v1m0 1v2m0 1v2m0 1v2m0 1v2m0 1v2m0 2v2m0 1v2m0 1v2m0 2v1m0 2v2m0 1v20m0 2v2m0 2v1M441.5 200v1m0 1v1m0 1v1m0 5v1m0 1v1m0 1v1m0 1v1m0 74v2m0 1v1m0 1v1m0 7v1m0 1v1m0 1v1m0 1v1m0 30v6m0 1v1m0 7v6m0 1v1m0 108v1m0 1v11m0 1v2m0 6v1m0 1v15m0 1v2m0 63v2m0 1v2m0 2v2m0 2v2m0 1v3m0 1v2m0 2v2m0 2v2m0 2v2m0 2v2m0 2v2m0 2v2m0 2v2m0 2v2m0 2v2m0 2v2m0 3v2m0 2v2m0 2v2M442.5 191v1m0 1v1m0 18v1m0 1v1m0 1v1m0 1v1m0 5v1m0 1v1m0 1v1m0 1v1m0 77v1m0 1v1m0 1v1m0 8v1m0 1v1m0 1v1m0 1v1m0 33v1m0 1v5m0 1v1m0 8v8m0 119v1m0 1v4m0 1v5m0 1v2m0 1v1m0 2v1m0 2v1m0 2v1m0 1v2m0 1v2m0 1v2m0 1v2m0 1v2m0 1v2m0 2v1m0 2v2m0 1v1m0 70v1m0 2v2m0 2v2m0 3v2m0 2v2m0 2v2m0 2v2m0 3v1m0 3v2m0 2v2m0 3v1m0 3v2m0 3v1m0 3v2m0 3v1m0 3v2m0 3v2m0 2v2m0 3v2m0 3v1M443.5 191v1m0 1v1m0 7v1m0 1v1m0 1v1m0 1v1m0 18v1m0 1v1m0 1v1m0 1v1m0 7v1m0 1v1m0 1v1m0 82v1m0 1v1m0 1v2m0 7v1m0 1v1m0 1v1m0 1v1m0 1v1m0 36v8m0 7v1m0 1v8m0 135v1m0 2v1m0 2v1m0 2v2m0 1v2m0 1v2m0 2v2m0 1v2m0 2v1m0 2v2m0 2v2m0 1v2m0 2v2m0 2v2m0 2v2m0 2v2m0 1v2m0 2v2m0 86v2m0 3v2m0 2v2m0 3v2m0 3v1m0 3v2m0 3v2m0 3v1M444.5 203v1m0 1v1m0 1v1m0 7v1m0 1v1m0 1v1m0 22v1m0 1v1m0 1v1m0 12v1m0 86v6m0 1v1m0 7v8m0 40v11m0 6v1m0 1v11m0 154v2m0 2v2m0 1v2m0 2v2m0 2v2m0 2v2m0 2v2m0 2v2m0 3v1m0 3v1m0 3v1m0 3v2m0 2v2m0 2v2m0 2v2m0 3v1m0 3v2m0 2v2M445.5 217v1m0 1v1m0 1v1m0 7v1m0 1v1m0 1v1m0 1v1m0 23v1m0 1v1m0 1v1m0 7v1m0 1v1m0 1v1m0 1v1m0 90v8m0 7v1m0 1v8m0 42v11m0 1v1m0 6v5m0 4v8m0 175v1m0 3v1m0 3v1m0 3v2m0 2v2m0 3v1m0 3v2m0 3v1m0 3v2m0 3v1m0 3v2m0 3v1m0 3v2m0 3v2m0 2v2m0 3v2m0 3v1m0 4v1M446.5 231v1m0 1v1m0 1v1m0 1v1m0 5v1m0 1v1m0 1v1m0 1v1m0 23v1m0 1v1m0 1v1m0 1v1m0 7v1m0 1v1m0 2v1m0 97v1m0 1v8m0 8v10m0 1v1m0 44v15m0 1v1m0 4v2m0 1v18m0 1v1m0 204v1m0 4v1m0 4v1m0 3v1M447.5 247v1m0 1v1m0 1v1m0 7v1m0 1v1m0 1v1m0 1v1m0 26v1m0 1v1m0 1v1m0 7v1m0 1v1m0 1v1m0 1v1m0 104v1m0 1v10m0 6v1m0 1v12m0 1v1m0 47v2m0 1v19m0 1v1m0 2v2m0 1v21m0 1v2M448.5 263v1m0 1v1m0 1v1m0 8v1m0 1v1m0 1v1m0 29v1m0 1v2m0 1v1m0 7v1m0 1v1m0 1v1m0 1v1m0 113v13m0 7v1m0 1v15m0 1v1m0 53v1m0 1v23m0 1v2m0 2v2m0 1v26m0 1v2M449.5 201v1m0 1v1m0 1v1m0 1v1m0 72v1m0 1v1m0 1v1m0 7v1m0 1v1m0 1v1m0 1v1m0 30v4m0 1v1m0 7v1m0 1v4m0 1v1m0 123v17m0 1v2m0 4v19m0 1v1m0 62v2m0 1v3m0 1v11m0 1v3m0 1v3m0 2v2m0 2v2m0 2v2m0 2v3m0 2v2m0 2v2m0 2v2m0 2v3m0 2v2m0 2v2m0 3v2m0 2v2M450.5 203v1m0 1v1m0 1v1m0 1v1m0 86v1m0 1v1m0 1v2m0 7v1m0 1v1m0 1v1m0 1v1m0 33v1m0 1v1m0 1v1m0 1v1m0 8v1m0 1v6m0 134v1m0 1v20m0 1v2m0 1v2m0 1v2m0 1v19m0 2v1m0 74v1m0 3v2m0 2v2m0 2v2m0 3v2m0 2v2m0 3v2m0 2v2m0 3v2m0 2v2m0 3v2m0 3v2m0 2v2m0 3v2m0 3v2m0 2v2m0 3v2m0 3v2m0 3v1M451.5 222v1m0 7v1m0 1v1m0 1v1m0 1v1m0 78v1m0 1v1m0 1v2m0 7v1m0 1v1m0 1v1m0 1v1m0 35v8m0 1v1m0 6v1m0 1v8m0 153v1m0 2v2m0 1v6m0 1v2m0 2v2m0 1v2m0 2v2m0 2v2m0 2v2m0 2v2m0 1v3m0 1v3m0 1v3m0 2v2m0 2v2m0 2v2m0 3v1m0 82v1m0 4v1m0 3v2m0 3v2m0 3v1m0 4v1m0 4v1M452.5 206v1m0 1v1m0 1v1m0 1v1m0 19v1m0 1v1m0 1v1m0 1v1m0 6v1m0 1v1m0 1v1m0 1v1m0 82v1m0 1v4m0 1v1m0 7v4m0 1v1m0 1v1m0 36v1m0 1v8m0 1v1m0 6v1m0 1v9m0 1v1m0 173v2m0 2v2m0 2v2m0 2v2m0 2v2m0 2v3m0 2v2m0 2v2m0 2v2m0 3v1m0 3v2m0 2v2m0 3v2m0 2v2m0 3v2m0 2v2m0 3v1m0 3v2M453.5 208v1m0 1v1m0 1v1m0 1v1m0 5v1m0 1v1m0 1v1m0 24v1m0 1v1m0 1v1m0 8v1m0 1v1m0 1v1m0 87v1m0 1v1m0 1v3m0 1v1m0 8v8m0 41v11m0 7v1m0 1v11m0 1v2m0 198v2m0 3v1m0 3v2m0 3v2m0 2v2m0 3v2m0 2v2m0 3v2m0 3v1m0 4v1m0 3v2m0 3v2m0 3v1m0 3v2m0 3v2m0 3v2M454.5 222v1m0 1v1m0 10v1m0 1v1m0 1v1m0 24v1m0 1v1m0 1v1m0 1v1m0 6v1m0 1v1m0 1v1m0 1v1m0 94v8m0 7v11m0 43v12m0 4v1m0 4v18m0 1v1M455.5 237v1m0 1v1m0 1v1m0 1v1m0 8v1m0 1v1m0 1v1m0 24v1m0 1v1m0 1v1m0 8v1m0 1v1m0 1v1m0 2v1m0 100v9m0 1v1m0 6v1m0 1v11m0 47v18m0 2v1m0 2v1m0 1v21m0 1v1M456.5 254v1m0 1v1m0 1v1m0 8v1m0 1v1m0 1v1m0 29v1m0 1v1m0 1v1m0 6v1m0 1v1m0 1v1m0 1v1m0 107v1m0 1v11m0 7v1m0 1v11m0 55v1m0 2v18m0 1v2m0 2v1m0 2v2m0 1v21m0 1v2m0 2v1M457.5 269v1m0 1v1m0 1v1m0 1v1m0 6v1m0 1v1m0 1v1m0 1v1m0 29v1m0 1v2m0 1v1m0 8v1m0 1v1m0 1v1m0 1v2m0 116v1m0 1v1m0 4v10m0 4v1m0 2v16m0 1v1m0 59v2m0 1v22m0 1v2m0 2v2m0 2v3m0 1v20m0 1v3m0 2v2m0 2v2M458.5 219v1m0 1v1m0 1v1m0 1v1m0 60v1m0 1v1m0 1v1m0 1v1m0 6v1m0 1v1m0 1v2m0 1v1m0 29v1m0 1v2m0 1v1m0 1v1m0 1v1m0 6v1m0 1v4m0 1v1m0 128v19m0 1v2m0 2v1m0 2v1m0 1v19m0 1v2m0 66v1m0 2v2m0 2v3m0 1v3m0 2v2m0 2v2m0 2v3m0 2v2m0 2v2m0 3v1m0 3v2m0 2v2m0 3v2m0 2v2m0 3v2m0 2v2m0 3v2m0 3v2m0 2v2m0 3v1M459.5 195v1m0 1v1m0 1v1m0 1v1m0 21v1m0 1v1m0 1v1m0 5v1m0 1v1m0 1v1m0 1v1m0 66v1m0 1v1m0 1v1m0 6v1m0 1v1m0 1v1m0 1v2m0 34v1m0 1v4m0 1v1m0 8v8m0 144v2m0 1v16m0 1v2m0 2v1m0 3v1m0 2v2m0 1v14m0 1v3m0 1v3m0 2v1m0 79v2m0 3v1m0 3v2m0 3v2m0 2v2m0 3v2m0 3v1m0 3v2m0 3v2m0 3v1m0 4v1m0 3v2m0 3v1M460.5 197v1m0 1v1m0 1v1m0 1v1m0 5v1m0 1v1m0 1v1m0 1v1m0 21v1m0 1v1m0 1v1m0 1v1m0 10v1m0 68v2m0 1v1m0 1v1m0 1v1m0 6v1m0 1v1m0 1v2m0 1v1m0 37v9m0 8v9m0 1v1m0 159v2m0 2v2m0 1v3m0 1v3m0 1v3m0 1v3m0 2v2m0 2v2m0 2v2m0 2v2m0 2v2m0 3v2m0 2v2m0 2v2m0 2v3m0 2v2m0 2v2m0 3v1M461.5 211v1m0 1v1m0 1v1m0 1v1m0 7v1m0 28v1m0 1v1m0 1v1m0 5v1m0 1v1m0 1v1m0 1v1m0 73v1m0 1v1m0 1v1m0 1v2m0 8v6m0 1v1m0 38v12m0 6v1m0 1v10m0 1v1m0 185v1m0 3v1m0 3v2m0 2v2m0 3v2m0 2v2m0 2v2m0 3v2m0 2v2m0 3v1m0 3v2m0 3v2m0 2v2m0 3v2m0 3v2m0 2v2m0 3v2m0 3v1m0 4v1M462.5 238v1m0 1v1m0 1v1m0 1v1m0 23v1m0 1v1m0 4v1m0 5v1m0 1v1m0 1v1m0 1v1m0 76v9m0 8v1m0 1v6m0 1v1m0 41v1m0 1v13m0 7v5m0 4v7m0 215v1m0 3v2m0 3v2m0 3v1m0 3v2m0 3v2m0 3v1m0 4v1M463.5 242v1m0 1v1m0 1v1m0 7v1m0 1v1m0 1v1m0 28v1m0 1v2m0 1v1m0 7v1m0 1v2m0 1v1m0 82v1m0 1v8m0 7v1m0 1v9m0 1v1m0 45v16m0 1v2m0 2v1m0 1v19m0 1v2M464.5 258v1m0 4v1m0 5v1m0 1v1m0 1v1m0 1v1m0 29v1m0 1v1m0 1v1m0 1v1m0 6v1m0 1v1m0 1v1m0 1v1m0 89v12m0 7v12m0 1v1m0 49v2m0 1v19m0 2v2m0 2v2m0 1v21m0 2v1M465.5 273v1m0 1v1m0 1v1m0 8v1m0 1v1m0 1v1m0 1v1m0 31v1m0 1v2m0 1v1m0 1v1m0 6v1m0 1v1m0 1v1m0 1v1m0 96v1m0 1v13m0 7v17m0 1v1m0 53v1m0 2v22m0 2v2m0 2v2m0 2v25m0 2v2m0 3v1M466.5 292v1m0 1v1m0 2v1m0 7v1m0 1v2m0 1v1m0 1v1m0 31v4m0 1v1m0 1v1m0 6v1m0 1v6m0 1v1m0 104v20m0 2v1m0 2v19m0 1v2m0 65v2m0 2v12m0 1v3m0 2v3m0 2v3m0 2v2m0 3v2m0 3v2m0 2v3m0 2v3m0 2v2m0 3v2m0 3v2m0 3v2m0 3v1M467.5 310v1m0 1v1m0 1v1m0 1v1m0 6v1m0 1v1m0 1v1m0 1v1m0 35v1m0 1v6m0 1v1m0 6v1m0 1v8m0 116v2m0 1v20m0 2v2m0 2v2m0 1v19m0 1v2m0 2v2m0 75v2m0 3v2m0 3v2m0 3v2m0 3v2m0 3v2m0 3v2m0 3v2m0 3v2m0 3v2m0 3v2m0 3v2m0 3v2m0 4v2m0 3v2m0 3v2m0 3v2M468.5 194v1m0 1v1m0 1v1m0 23v1m0 1v1m0 7v1m0 1v1m0 1v1m0 1v1m0 90v4m0 1v1m0 1v1m0 6v1m0 1v1m0 1v4m0 1v1m0 37v9m0 8v11m0 130v1m0 2v2m0 2v11m0 1v3m0 1v3m0 2v2m0 2v2m0 3v2m0 2v3m0 2v2m0 2v3m0 2v3m0 2v2m0 3v2m0 3v1m0 87v1m0 4v2m0 3v2m0 3v2M469.5 196v1m0 1v1m0 1v1m0 7v1m0 1v1m0 1v1m0 21v1m0 1v1m0 1v1m0 1v1m0 7v1m0 1v1m0 1v1m0 97v1m0 1v1m0 1v1m0 1v2m0 7v9m0 41v1m0 1v9m0 1v1m0 5v1m0 1v13m0 1v1m0 149v2m0 2v3m0 2v2m0 3v2m0 2v3m0 2v3m0 2v2m0 3v2m0 3v2m0 3v2m0 2v3m0 2v3m0 2v3m0 2v2m0 3v2m0 3v2m0 4v1M470.5 210v1m0 1v1m0 1v1m0 7v1m0 1v1m0 1v1m0 23v1m0 1v1m0 1v1m0 8v1m0 1v1m0 1v1m0 1v1m0 102v9m0 8v1m0 1v8m0 44v16m0 5v1m0 1v18m0 173v1m0 3v2m0 3v2m0 3v2m0 3v2m0 3v3m0 3v2m0 3v2m0 3v2m0 3v2m0 3v2m0 3v2m0 4v1m0 4v1M471.5 224v1m0 1v1m0 1v1m0 1v1m0 10v1m0 25v1m0 1v1m0 1v1m0 1v1m0 6v1m0 1v1m0 1v1m0 1v1m0 109v1m0 1v9m0 1v1m0 6v12m0 1v1m0 44v1m0 2v18m0 1v2m0 2v1m0 2v19m0 2v2M472.5 241v1m0 1v1m0 1v1m0 7v1m0 1v1m0 1v1m0 26v1m0 1v1m0 1v1m0 1v1m0 6v1m0 1v1m0 1v1m0 1v1m0 119v1m0 1v10m0 1v1m0 5v1m0 1v13m0 55v21m0 1v2m0 2v2m0 2v22m0 2v2M473.5 197v1m0 1v1m0 1v1m0 53v1m0 1v1m0 1v1m0 1v1m0 6v1m0 1v1m0 1v1m0 1v1m0 28v1m0 1v2m0 1v1m0 1v1m0 5v1m0 2v1m0 1v1m0 1v1m0 129v6m0 4v6m0 5v1m0 1v19m0 59v2m0 1v20m0 2v2m0 2v2m0 3v2m0 2v3m0 1v8m0 2v3m0 1v3m0 2v3m0 2v2m0 3v1M474.5 199v1m0 1v1m0 1v1m0 1v1m0 5v1m0 1v1m0 1v1m0 1v1m0 54v1m0 1v1m0 1v1m0 1v1m0 8v1m0 1v1m0 1v1m0 29v1m0 1v1m0 1v1m0 1v2m0 1v1m0 5v2m0 1v1m0 1v1m0 1v1m0 140v1m0 1v19m0 1v2m0 2v2m0 1v21m0 1v2m0 69v2m0 2v3m0 2v3m0 2v2m0 2v3m0 2v2m0 3v2m0 3v2m0 3v1m0 3v2m0 3v2m0 2v3m0 2v2m0 3v2m0 3v2m0 3v2m0 3v2m0 3v1M475.5 213v1m0 1v1m0 1v1m0 1v1m0 7v1m0 63v1m0 1v1m0 1v1m0 8v1m0 1v1m0 1v1m0 1v1m0 32v1m0 1v4m0 1v1m0 6v1m0 1v6m0 1v1m0 157v2m0 1v18m0 2v2m0 2v2m0 2v2m0 2v11m0 1v3m0 1v3m0 2v2m0 3v1m0 81v2m0 3v2m0 3v2m0 3v2m0 2v3m0 2v2m0 3v2m0 3v2m0 3v2m0 8v1m0 4v1M476.5 202v1m0 1v1m0 1v1m0 35v1m0 1v1m0 1v1m0 61v1m0 1v2m0 1v1m0 1v1m0 8v1m0 1v1m0 1v1m0 1v1m0 33v1m0 1v6m0 1v1m0 8v9m0 177v1m0 2v3m0 2v2m0 2v2m0 2v3m0 2v2m0 2v3m0 2v2m0 3v2m0 2v3m0 2v2m0 2v3m0 2v3m0 2v2m0 3v2m0 2v2m0 3v2M477.5 204v1m0 1v1m0 1v1m0 7v1m0 1v1m0 1v1m0 23v1m0 1v1m0 1v1m0 1v1m0 10v1m0 1v1m0 64v1m0 1v4m0 1v1m0 6v1m0 1v1m0 1v1m0 1v2m0 1v1m0 37v9m0 1v1m0 7v11m0 1v1m0 202v1m0 3v2m0 3v2m0 2v2m0 3v2m0 3v2m0 2v3m0 2v2m0 3v2m0 3v2m0 3v2m0 2v2m0 3v2m0 3v2m0 3v2m0 3v2m0 3v2m0 3v1M478.5 218v1m0 1v1m0 1v1m0 1v1m0 5v1m0 1v1m0 1v1m0 1v1m0 24v1m0 1v1m0 1v1m0 1v1m0 5v1m0 1v1m0 2v1m0 1v1m0 69v2m0 1v1m0 1v1m0 1v1m0 6v9m0 1v1m0 39v12m0 1v2m0 6v14m0 1v1m0 237v2m0 3v2m0 3v2m0 3v1m0 4v1m0 4v1m0 4v1M479.5 234v1m0 1v1m0 1v1m0 10v1m0 1v1m0 26v1m0 1v1m0 1v1m0 1v1m0 8v1m0 1v1m0 1v1m0 73v9m0 1v1m0 6v1m0 1v9m0 45v14m0 7v18m0 2v1M480.5 249v1m0 1v1m0 1v1m0 1v1m0 5v1m0 1v1m0 1v1m0 29v1m0 1v1m0 1v1m0 1v1m0 8v1m0 1v2m0 1v1m0 1v1m0 79v9m0 1v1m0 7v12m0 1v1m0 46v22m0 2v2m0 1v21m0 2v2M481.5 268v1m0 1v1m0 1v1m0 5v1m0 1v1m0 2v1m0 1v1m0 29v1m0 1v1m0 1v1m0 1v1m0 6v1m0 1v2m0 1v1m0 1v1m0 1v1m0 85v1m0 1v13m0 4v1m0 2v14m0 54v22m0 2v2m0 2v2m0 2v23m0 2v2M482.5 285v1m0 1v1m0 1v1m0 8v1m0 1v1m0 1v1m0 32v1m0 1v1m0 1v2m0 1v1m0 8v1m0 1v4m0 1v1m0 95v5m0 4v8m0 5v19m0 1v2m0 59v3m0 1v21m0 2v2m0 2v3m0 2v2m0 2v3m0 1v9m0 1v3m0 2v3m0 2v2m0 3v2M483.5 199v1m0 1v1m0 1v1m0 98v1m0 1v1m0 1v2m0 1v1m0 5v1m0 2v1m0 1v1m0 1v1m0 33v1m0 1v1m0 1v4m0 1v1m0 6v1m0 1v9m0 103v20m0 1v2m0 2v2m0 2v21m0 2v2m0 68v1m0 3v2m0 2v3m0 2v3m0 2v2m0 2v3m0 2v3m0 2v2m0 3v2m0 3v2m0 2v3m0 2v2m0 3v2m0 3v2m0 3v2m0 2v2m0 3v2m0 3v2m0 3v1M484.5 201v1m0 1v1m0 1v1m0 1v1m0 5v1m0 1v1m0 104v1m0 1v1m0 1v1m0 1v2m0 1v1m0 6v1m0 1v1m0 1v1m0 1v2m0 37v9m0 9v9m0 1v1m0 116v2m0 1v19m0 2v2m0 3v1m0 3v2m0 2v16m0 1v3m0 2v2m0 82v2m0 3v2m0 2v2m0 3v2m0 3v2m0 3v2m0 3v2m0 3v1m0 3v2m0 3v2M485.5 228v1m0 1v1m0 1v1m0 1v1m0 107v2m0 1v1m0 1v1m0 1v1m0 7v1m0 1v1m0 1v1m0 1v2m0 1v1m0 39v12m0 7v13m0 1v2m0 131v2m0 2v3m0 1v3m0 2v3m0 2v2m0 2v3m0 2v2m0 3v2m0 3v2m0 2v2m0 3v2m0 2v3m0 2v3m0 2v2m0 3v2m0 3v2m0 3v1M486.5 196v1m0 7v1m0 1v1m0 1v1m0 23v1m0 1v1m0 1v1m0 1v1m0 5v1m0 1v1m0 116v2m0 1v6m0 1v1m0 6v1m0 1v9m0 43v1m0 1v14m0 5v1m0 1v2m0 4v10m0 1v2m0 152v1m0 3v2m0 3v2m0 3v2m0 2v2m0 3v2m0 3v2m0 3v2m0 3v1m0 3v2m0 3v2m0 3v2m0 3v2m0 2v2m0 3v2m0 3v2m0 3v2m0 3v1M487.5 206v1m0 1v1m0 1v1m0 1v1m0 5v1m0 1v1m0 1v1m0 1v1m0 26v1m0 1v1m0 5v1m0 1v1m0 1v1m0 125v9m0 9v12m0 45v2m0 1v17m0 1v2m0 2v2m0 1v19m0 1v2m0 180v2m0 3v2m0 3v2m0 3v2m0 3v1m0 4v1M488.5 222v1m0 1v1m0 1v1m0 10v1m0 1v1m0 26v1m0 1v1m0 1v1m0 5v1m0 1v2m0 1v1m0 1v1m0 131v12m0 7v14m0 1v2m0 50v2m0 1v19m0 1v3m0 2v2m0 2v24m0 2v1M489.5 239v1m0 1v1m0 1v1m0 5v1m0 1v1m0 1v1m0 29v1m0 1v1m0 1v1m0 6v1m0 1v1m0 1v1m0 1v2m0 141v16m0 6v2m0 1v17m0 1v2m0 54v1m0 3v25m0 2v2m0 3v2m0 2v3m0 1v13m0 2v3m0 2v3m0 2v2M490.5 202v1m0 1v1m0 1v1m0 46v1m0 4v1m0 5v1m0 1v1m0 1v1m0 1v1m0 30v1m0 1v1m0 1v1m0 1v1m0 6v1m0 1v1m0 1v2m0 1v1m0 154v20m0 2v2m0 2v22m0 2v2m0 65v1m0 3v2m0 2v3m0 2v3m0 2v3m0 2v3m0 2v2m0 3v2m0 3v2m0 3v2m0 3v2m0 2v3m0 2v3m0 2v2m0 3v2m0 3v2m0 3v2m0 3v1M491.5 204v1m0 1v1m0 1v1m0 5v1m0 1v1m0 1v1m0 1v1m0 52v1m0 1v1m0 1v1m0 6v1m0 1v1m0 1v1m0 30v1m0 1v1m0 1v1m0 1v2m0 1v1m0 6v1m0 1v1m0 1v2m0 1v1m0 171v2m0 1v20m0 1v2m0 3v2m0 2v20m0 2v3m0 83v2m0 3v2m0 3v2m0 3v2m0 3v2m0 3v2m0 3v2m0 3v1m0 4v1m0 4v1m0 3v2m0 3v2m0 3v2m0 3v2m0 3v1M492.5 218v1m0 1v1m0 1v1m0 1v1m0 8v1m0 1v1m0 52v1m0 1v1m0 1v1m0 8v1m0 1v2m0 1v1m0 1v1m0 33v1m0 1v1m0 1v2m0 1v1m0 6v1m0 1v6m0 193v1m0 2v3m0 2v3m0 1v3m0 2v3m0 2v2m0 2v3m0 3v2m0 3v1m0 3v3m0 2v2m0 3v2m0 3v2m0 3v2m0 2v3m0 2v2M493.5 198v1m0 7v1m0 28v1m0 1v1m0 1v1m0 5v1m0 1v1m0 2v1m0 55v1m0 1v1m0 1v1m0 1v2m0 5v1m0 1v2m0 1v1m0 1v1m0 36v9m0 1v1m0 6v9m0 1v1m0 222v2m0 3v2m0 2v3m0 2v3m0 2v3m0 2v2m0 3v2m0 3v2m0 3v2m0 3v2m0 3v2m0 2v3m0 2v2m0 3v2m0 3v2m0 3v2m0 3v2m0 3v1M494.5 219v1m0 1v1m0 1v1m0 1v1m0 24v1m0 1v1m0 1v1m0 1v1m0 8v1m0 1v1m0 58v1m0 1v2m0 1v1m0 1v1m0 6v1m0 1v2m0 1v1m0 1v1m0 1v1m0 38v11m0 7v12m0 259v1m0 3v2m0 3v2m0 3v2m0 3v2m0 3v2m0 3v2m0 3v1M495.5 223v1m0 1v1m0 1v1m0 1v1m0 5v1m0 31v1m0 1v1m0 1v1m0 1v1m0 6v1m0 1v1m0 1v2m0 61v1m0 1v7m0 8v8m0 42v13m0 1v2m0 4v18M496.5 240v1m0 1v1m0 1v1m0 5v1m0 1v1m0 32v1m0 1v1m0 1v1m0 1v1m0 6v1m0 1v1m0 1v2m0 1v1m0 65v9m0 1v1m0 6v12m0 44v15m0 5v1m0 2v21M497.5 257v1m0 1v1m0 1v1m0 8v1m0 1v1m0 1v1m0 28v1m0 1v1m0 1v1m0 1v1m0 6v1m0 2v1m0 1v1m0 1v1m0 72v12m0 7v13m0 1v1m0 48v23m0 1v3m0 1v21m0 1v3M498.5 204v1m0 1v1m0 1v1m0 63v1m0 1v1m0 1v1m0 8v1m0 1v1m0 2v1m0 1v1m0 30v2m0 1v1m0 1v1m0 1v1m0 7v1m0 1v1m0 1v2m0 1v1m0 77v14m0 1v2m0 4v15m0 56v3m0 1v21m0 2v2m0 3v2m0 2v23m0 1v3M499.5 206v1m0 1v1m0 1v1m0 1v1m0 5v1m0 1v1m0 1v1m0 67v1m0 1v1m0 1v1m0 1v1m0 6v1m0 1v2m0 1v1m0 1v1m0 34v1m0 1v4m0 1v1m0 7v1m0 1v1m0 1v2m0 1v1m0 1v1m0 84v5m0 4v11m0 2v2m0 1v19m0 1v2m0 60v2m0 3v23m0 2v3m0 2v2m0 3v3m0 2v3m0 2v4m0 2v3m0 2v3m0 2v3m0 2v3m0 3v2M500.5 198v1m0 34v1m0 1v1m0 1v1m0 1v1m0 70v1m0 1v2m0 1v1m0 1v1m0 4v1m0 1v1m0 1v2m0 1v1m0 1v1m0 35v1m0 1v2m0 1v4m0 1v1m0 7v1m0 1v7m0 1v1m0 91v2m0 1v21m0 1v2m0 3v2m0 1v21m0 3v1m0 73v1m0 3v3m0 2v3m0 2v3m0 2v3m0 3v2m0 3v3m0 2v3m0 3v2m0 3v2m0 3v2m0 3v2m0 3v3m0 3v2m0 3v2m0 3v2m0 3v2m0 4v2m0 3v1M501.5 198v1m0 1v1m0 36v1m0 1v1m0 8v1m0 1v1m0 1v1m0 1v1m0 74v1m0 1v1m0 1v2m0 1v1m0 1v1m0 6v2m0 1v1m0 1v2m0 1v1m0 39v1m0 1v7m0 1v2m0 7v13m0 105v2m0 2v21m0 3v2m0 3v2m0 2v3m0 2v3m0 2v3m0 2v3m0 2v3m0 2v3m0 3v1m0 91v2m0 3v2m0 3v2m0 3v3m0 3v2m0 3v2m0 3v2M502.5 215v1m0 1v1m0 5v1m0 1v1m0 1v1m0 26v1m0 2v1m0 1v1m0 5v1m0 2v1m0 1v1m0 1v1m0 78v1m0 1v1m0 1v2m0 1v1m0 1v1m0 7v1m0 1v4m0 1v2m0 43v2m0 1v11m0 8v16m0 120v1m0 3v3m0 2v3m0 2v3m0 2v3m0 3v3m0 2v3m0 2v2m0 4v2m0 3v2m0 3v2m0 3v3m0 2v3m0 2v3m0 3v2m0 3v2m0 3v2M503.5 227v1m0 1v1m0 8v1m0 1v1m0 1v1m0 1v1m0 25v1m0 1v1m0 1v1m0 1v1m0 6v1m0 1v2m0 1v1m0 1v1m0 84v2m0 1v6m0 1v1m0 7v10m0 1v1m0 47v7m0 4v6m0 2v1m0 2v20m0 1v2m0 143v1m0 3v3m0 3v2m0 3v2m0 3v2m0 3v3m0 2v3m0 3v2m0 3v2m0 4v1m0 4v1m0 4v2m0 3v2m0 3v2m0 3v2m0 4v1M504.5 242v1m0 1v1m0 1v1m0 8v1m0 1v1m0 1v1m0 30v1m0 1v1m0 2v1m0 6v1m0 1v1m0 1v1m0 2v1m0 91v2m0 1v7m0 1v2m0 7v14m0 51v21m0 2v2m0 2v3m0 1v22m0 3v1m0 175v1M505.5 262v1m0 1v1m0 1v1m0 6v1m0 1v1m0 1v1m0 31v1m0 1v1m0 1v1m0 2v1m0 6v1m0 1v1m0 1v2m0 1v1m0 99v15m0 5v2m0 1v6m0 4v7m0 57v3m0 2v17m0 2v3m0 3v2m0 3v2m0 2v4m0 1v4m0 2v3m0 2v4m0 2v3m0 3v2M506.5 210v1m0 1v1m0 1v1m0 1v1m0 60v1m0 1v1m0 2v1m0 1v1m0 6v1m0 1v1m0 1v1m0 32v1m0 1v1m0 1v2m0 1v1m0 1v1m0 7v1m0 1v2m0 1v1m0 1v1m0 111v14m0 1v3m0 2v2m0 2v20m0 2v1m0 66v3m0 2v4m0 2v3m0 2v4m0 2v3m0 2v3m0 3v3m0 3v2m0 3v3m0 3v2m0 3v3m0 3v2m0 3v3m0 3v2m0 3v3m0 3v2M507.5 214v1m0 1v1m0 1v1m0 1v1m0 8v1m0 1v1m0 63v1m0 2v1m0 1v1m0 1v1m0 6v1m0 2v1m0 1v1m0 1v1m0 33v1m0 1v2m0 1v1m0 1v2m0 1v1m0 6v2m0 1v4m0 1v2m0 120v2m0 2v17m0 1v3m0 2v2m0 3v2m0 2v3m0 2v3m0 2v3m0 2v3m0 2v2m0 83v2m0 3v3m0 3v2m0 3v3m0 3v3m0 2v3m0 3v3m0 3v2m0 3v2m0 4v2m0 3v2m0 4v2m0 3v3m0 3v2m0 4v2M508.5 200v1m0 1v1m0 1v1m0 1v1m0 24v1m0 1v1m0 1v1m0 8v1m0 1v1m0 67v1m0 1v1m0 2v1m0 1v1m0 6v1m0 2v1m0 1v1m0 1v2m0 38v2m0 1v4m0 1v2m0 6v2m0 1v10m0 139v3m0 2v3m0 2v3m0 2v3m0 2v3m0 2v3m0 3v2m0 3v3m0 2v3m0 3v3m0 2v3m0 3v3m0 2v3m0 3v2M509.5 204v1m0 1v1m0 1v1m0 8v1m0 1v1m0 1v1m0 24v1m0 1v1m0 1v1m0 1v1m0 4v1m0 1v1m0 1v1m0 1v1m0 72v1m0 1v1m0 1v2m0 1v1m0 6v2m0 1v1m0 1v2m0 1v1m0 43v11m0 1v1m0 5v14m0 162v2m0 3v3m0 2v3m0 3v3m0 2v3m0 3v2m0 3v3m0 3v2m0 4v2m0 3v2m0 4v2m0 3v3m0 3v2m0 3v3m0 3v2m0 3v3m0 3v2M510.5 219v1m0 1v1m0 1v1m0 1v1m0 5v1m0 4v1m0 26v1m0 2v1m0 1v1m0 1v1m0 6v1m0 1v1m0 1v1m0 76v1m0 1v2m0 1v4m0 1v1m0 5v1m0 1v7m0 1v1m0 44v2m0 1v13m0 1v1m0 3v2m0 1v6m0 4v4m0 1v3m0 191v2m0 3v3m0 3v2m0 3v3m0 3v2m0 3v3m0 3v2m0 4v2M511.5 236v1m0 1v1m0 1v1m0 8v1m0 1v1m0 1v1m0 27v1m0 2v1m0 1v1m0 1v1m0 4v1m0 1v1m0 1v2m0 1v1m0 83v7m0 1v1m0 7v2m0 1v10m0 51v16m0 1v2m0 3v2m0 1v18m0 2v2M512.5 197v1m0 1v1m0 1v1m0 1v1m0 47v1m0 1v1m0 1v1m0 1v1m0 6v1m0 1v1m0 1v1m0 31v1m0 1v1m0 1v2m0 1v1m0 6v1m0 1v2m0 1v1m0 1v1m0 87v1m0 2v10m0 2v1m0 5v12m0 1v2m0 54v3m0 2v18m0 2v2m0 3v2m0 2v20m0 1v4m0 2v2M513.5 201v1m0 1v1m0 1v1m0 1v1m0 5v1m0 1v1m0 1v1m0 53v1m0 1v1m0 1v1m0 6v1m0 1v1m0 2v1m0 33v1m0 2v1m0 1v1m0 7v1m0 1v1m0 1v2m0 1v1m0 98v2m0 1v10m0 1v2m0 7v1m0 1v16m0 1v2m0 60v3m0 2v3m0 2v4m0 2v3m0 2v4m0 2v3m0 3v2m0 4v2m0 3v3m0 3v3m0 3v3m0 3v3m0 3v3m0 3v2M514.5 217v1m0 1v1m0 1v1m0 10v1m0 54v1m0 1v1m0 1v1m0 1v1m0 6v2m0 1v1m0 1v1m0 35v1m0 1v2m0 1v1m0 1v2m0 1v1m0 4v2m0 1v1m0 1v2m0 1v1m0 109v2m0 1v17m0 2v2m0 3v3m0 1v13m0 2v3m0 2v2m0 73v3m0 3v3m0 3v3m0 2v4m0 2v3m0 3v3m0 3v3m0 3v3m0 3v3m0 3v3m0 3v3m0 3v3m0 3v2m0 4v2m0 4v2m0 3v3m0 4v2M515.5 234v1m0 1v1m0 1v1m0 5v1m0 1v1m0 61v1m0 1v1m0 1v1m0 7v1m0 1v1m0 1v2m0 1v1m0 39v1m0 1v2m0 1v1m0 2v1m0 7v1m0 1v5m0 1v1m0 120v1m0 2v3m0 2v3m0 2v3m0 2v3m0 2v3m0 3v2m0 3v2m0 3v3m0 2v3m0 3v3m0 2v3m0 3v2m0 96v2m0 4v2m0 4v2m0 3v3m0 3v3m0 3v3m0 3v3m0 3v2M516.5 210v1m0 7v1m0 1v1m0 1v1m0 28v1m0 1v1m0 1v1m0 5v1m0 2v1m0 1v1m0 60v1m0 1v2m0 1v1m0 1v1m0 7v1m0 1v2m0 1v1m0 1v1m0 41v2m0 1v4m0 1v2m0 1v2m0 4v2m0 1v11m0 140v2m0 3v3m0 3v3m0 2v3m0 3v3m0 3v3m0 3v2m0 4v2m0 4v3m0 2v3m0 3v3m0 3v3m0 3v3m0 3v3M517.5 222v1m0 1v1m0 1v1m0 1v1m0 3v1m0 1v1m0 1v1m0 29v1m0 1v1m0 1v1m0 1v1m0 6v1m0 1v1m0 1v1m0 65v2m0 1v1m0 1v2m0 1v1m0 7v1m0 1v2m0 1v2m0 1v1m0 44v1m0 2v11m0 2v1m0 3v1m0 2v13m0 1v2m0 169v2m0 3v3m0 3v3m0 3v3m0 3v3m0 3v2m0 4v2m0 10v2m0 4v2m0 3v3m0 3v3m0 3v3m0 3v2m0 4v2m0 4v2M518.5 241v1m0 1v1m0 5v1m0 1v1m0 1v1m0 32v1m0 1v1m0 1v1m0 6v1m0 1v1m0 2v1m0 1v1m0 68v1m0 1v2m0 1v2m0 1v1m0 2v1m0 7v7m0 1v2m0 50v7m0 4v3m0 1v3m0 2v2m0 2v17m0 2v2m0 206v1m0 4v2m0 4v2M519.5 258v1m0 1v1m0 5v1m0 2v1m0 1v1m0 1v1m0 30v1m0 1v1m0 2v1m0 1v1m0 4v1m0 1v1m0 1v2m0 1v1m0 1v1m0 74v2m0 1v2m0 1v2m0 1v2m0 1v1m0 5v2m0 1v9m0 1v2m0 52v3m0 2v18m0 2v3m0 2v3m0 2v15m0 1v3m0 3v2M520.5 197v1m0 1v1m0 3v1m0 1v1m0 1v1m0 1v1m0 63v1m0 1v1m0 1v1m0 6v1m0 1v1m0 2v1m0 1v1m0 33v1m0 2v1m0 1v1m0 1v1m0 5v1m0 1v1m0 1v2m0 1v1m0 1v1m0 80v2m0 1v6m0 1v2m0 2v2m0 5v2m0 2v6m0 4v4m0 2v1m0 61v3m0 2v3m0 2v4m0 2v3m0 3v3m0 3v2m0 3v3m0 3v3m0 3v3m0 3v3m0 3v3m0 3v3m0 3v3M521.5 209v1m0 1v1m0 8v1m0 1v1m0 1v1m0 66v1m0 1v1m0 1v1m0 2v1m0 6v1m0 1v1m0 1v1m0 37v2m0 1v1m0 1v2m0 1v1m0 6v2m0 1v2m0 1v1m0 1v2m0 92v3m0 1v4m0 1v3m0 1v3m0 2v2m0 3v3m0 1v13m0 2v3m0 73v3m0 3v3m0 3v3m0 3v4m0 2v4m0 3v3m0 3v3m0 4v2m0 4v2m0 4v3m0 3v3m0 3v3m0 3v3m0 3v3m0 4v2m0 4v2M522.5 224v1m0 1v1m0 1v1m0 6v1m0 1v1m0 1v1m0 72v1m0 1v1m0 1v1m0 7v1m0 1v1m0 1v2m0 1v1m0 39v1m0 1v4m0 1v2m0 1v1m0 5v1m0 1v7m0 1v2m0 99v1m0 2v3m0 2v3m0 2v3m0 2v4m0 2v2m0 3v3m0 2v3m0 3v3m0 2v3m0 3v3m0 2v3m0 94v1m0 4v3m0 3v3m0 4v3m0 3v3m0 3v3m0 3v3m0 4v2m0 4v2M523.5 208v1m0 1v1m0 1v1m0 1v1m0 24v1m0 1v1m0 1v1m0 6v1m0 1v1m0 1v1m0 2v1m0 73v1m0 1v1m0 2v1m0 1v1m0 7v1m0 1v1m0 1v2m0 1v1m0 44v1m0 1v2m0 1v5m0 1v2m0 4v2m0 1v12m0 1v1m0 112v2m0 3v3m0 2v3m0 3v3m0 3v3m0 3v3m0 3v2m0 4v3m0 3v3m0 3v3m0 3v3m0 3v3m0 4v3m0 3v2M524.5 214v1m0 1v1m0 1v1m0 6v1m0 1v1m0 1v1m0 27v1m0 1v1m0 1v1m0 1v1m0 4v1m0 1v1m0 2v1m0 1v1m0 80v1m0 1v2m0 1v1m0 1v1m0 5v1m0 1v2m0 1v1m0 1v2m0 1v1m0 48v12m0 1v2m0 3v1m0 1v11m0 5v2m0 138v1m0 4v2m0 4v3m0 3v3m0 3v3m0 3v3m0 4v2m0 4v1m0 11v3m0 3v3m0 4v2m0 4v2m0 4v3m0 3v3m0 4v2m0 4v2M525.5 229v1m0 1v1m0 1v1m0 6v1m0 1v1m0 1v1m0 1v1m0 28v1m0 1v1m0 1v1m0 6v1m0 2v1m0 1v1m0 1v1m0 85v2m0 1v1m0 1v2m0 1v2m0 1v1m0 5v1m0 1v8m0 1v2m0 54v12m0 1v3m0 2v2m0 2v19m0 1v3m0 175v2m0 4v3m0 4v2m0 4v2m0 4v2M526.5 201v1m0 1v1m0 1v1m0 40v1m0 4v1m0 5v1m0 2v1m0 1v1m0 33v1m0 1v1m0 2v1m0 4v1m0 1v1m0 1v1m0 2v1m0 93v2m0 1v2m0 1v2m0 1v2m0 1v2m0 5v1m0 2v9m0 1v2m0 55v2m0 2v18m0 2v3m0 3v2m0 2v4m0 1v10m0 1v4m0 2v3m0 3v2M527.5 205v1m0 1v1m0 1v1m0 5v1m0 1v1m0 1v1m0 1v1m0 40v1m0 1v1m0 1v1m0 2v1m0 5v2m0 1v1m0 1v1m0 32v1m0 1v1m0 2v1m0 1v1m0 7v1m0 1v2m0 1v1m0 1v1m0 100v1m0 2v2m0 1v3m0 1v2m0 1v3m0 1v2m0 3v1m0 4v13m0 2v2m0 62v2m0 3v3m0 2v3m0 2v4m0 2v3m0 3v3m0 3v2m0 4v2m0 3v4m0 2v4m0 2v4m0 2v4m0 2v4m0 2v4m0 3v2M528.5 219v1m0 1v1m0 1v1m0 1v1m0 6v1m0 1v1m0 1v1m0 43v1m0 1v1m0 2v1m0 1v1m0 4v1m0 1v1m0 2v1m0 1v1m0 35v2m0 1v1m0 2v1m0 1v1m0 5v1m0 1v2m0 1v1m0 1v2m0 1v1m0 110v1m0 2v3m0 1v4m0 1v3m0 2v3m0 2v2m0 3v2m0 2v4m0 1v4m0 1v4m0 1v3m0 3v2m0 81v2m0 3v4m0 2v4m0 2v4m0 2v4m0 3v3m0 3v3m0 3v2m0 4v2m0 4v3m0 3v3m0 3v3m0 3v3m0 3v3m0 3v3m0 3v3m0 3v3m0 3v3M529.5 199v1m0 5v1m0 30v1m0 1v1m0 1v1m0 1v1m0 6v1m0 1v1m0 1v1m0 47v1m0 2v1m0 1v1m0 6v2m0 1v1m0 1v2m0 1v1m0 37v2m0 1v1m0 2v1m0 1v2m0 4v1m0 2v1m0 1v2m0 1v2m0 1v2m0 126v2m0 2v4m0 2v3m0 2v3m0 2v3m0 3v2m0 3v3m0 2v3m0 3v3m0 2v3m0 3v3m0 3v3m0 3v2m0 105v1m0 4v3m0 3v3m0 3v3m0 3v3m0 3v3m0 4v2M530.5 220v1m0 1v1m0 1v1m0 1v1m0 26v1m0 1v1m0 1v1m0 6v1m0 1v1m0 2v1m0 1v1m0 49v1m0 1v2m0 1v1m0 7v1m0 1v2m0 1v1m0 1v2m0 41v2m0 1v2m0 1v2m0 1v2m0 1v1m0 5v2m0 1v2m0 1v2m0 1v3m0 1v1m0 145v1m0 3v3m0 3v3m0 2v3m0 3v3m0 3v3m0 3v3m0 10v2m0 3v3m0 3v3m0 3v3m0 3v3m0 3v3m0 4v2m0 4v2M531.5 226v1m0 1v1m0 1v1m0 8v1m0 1v1m0 29v1m0 1v1m0 1v1m0 6v1m0 1v1m0 2v1m0 1v1m0 54v1m0 2v1m0 1v2m0 1v1m0 4v2m0 1v2m0 1v1m0 1v2m0 45v1m0 2v2m0 1v2m0 1v3m0 1v2m0 5v2m0 2v2m0 1v3m0 1v3m0 1v2m0 182v2m0 4v2m0 4v2m0 4v2m0 4v2m0 4v2m0 4v2m0 4v2m0 16v2m0 4v2m0 4v2m0 4v2m0 5v1M532.5 241v1m0 1v1m0 1v1m0 1v1m0 6v1m0 1v1m0 1v1m0 30v1m0 1v1m0 2v1m0 1v1m0 4v1m0 1v1m0 1v2m0 1v1m0 57v1m0 1v2m0 1v2m0 1v1m0 2v1m0 5v1m0 1v2m0 1v2m0 1v2m0 1v1m0 49v2m0 1v3m0 1v3m0 1v3m0 7v2m0 2v17m0 3v1M533.5 258v1m0 1v1m0 4v1m0 5v1m0 2v1m0 1v1m0 33v1m0 2v1m0 1v1m0 7v1m0 1v1m0 1v2m0 1v1m0 63v2m0 1v2m0 1v2m0 1v2m0 8v2m0 1v2m0 1v2m0 2v2m0 54v2m0 2v4m0 1v4m0 2v4m0 2v3m0 3v2m0 3v4m0 1v4m0 2v4m0 2v4m0 2v3M534.5 278v1m0 1v2m0 1v1m0 6v1m0 1v1m0 1v1m0 37v2m0 1v1m0 1v2m0 1v1m0 4v2m0 1v1m0 1v2m0 1v1m0 69v2m0 1v2m0 2v2m0 1v2m0 2v2m0 3v1m0 2v2m0 1v3m0 2v2m0 2v2m0 64v3m0 2v4m0 2v4m0 2v4m0 2v4m0 3v3m0 3v4m0 2v4m0 3v4m0 3v4m0 2v4m0 3v4M535.5 200v1m0 1v1m0 1v1m0 92v1m0 1v1m0 1v1m0 2v1m0 4v1m0 1v1m0 1v2m0 1v1m0 39v1m0 1v2m0 1v2m0 1v1m0 4v2m0 1v2m0 1v2m0 1v1m0 78v2m0 4v1m0 2v2m0 2v3m0 2v2m0 3v3m0 2v3m0 2v4m0 2v3m0 2v3m0 75v3m0 3v4m0 3v4m0 3v4m0 3v4m0 3v3m0 4v3m0 4v3m0 4v3m0 4v3m0 4v3m0 4v3m0 3v4m0 3v4m0 4v2m0 5v1M536.5 206v1m0 12v1m0 1v1m0 94v1m0 1v1m0 2v1m0 1v1m0 7v1m0 1v2m0 1v1m0 1v1m0 42v1m0 1v2m0 1v2m0 1v2m0 7v2m0 1v2m0 1v2m0 1v2m0 83v1m0 3v3m0 2v4m0 2v3m0 3v3m0 3v2m0 4v3m0 2v4m0 2v4m0 2v4m0 3v3m0 103v3m0 4v3m0 3v4m0 3v4m0 3v4m0 3v3m0 4v3m0 5v2M537.5 221v1m0 1v1m0 1v1m0 1v1m0 3v1m0 1v1m0 104v2m0 1v1m0 1v2m0 1v1m0 7v1m0 1v2m0 1v2m0 1v1m0 45v1m0 1v2m0 1v3m0 1v2m0 1v2m0 5v2m0 1v10m0 2v2m0 99v3m0 3v3m0 3v3m0 3v3m0 4v3m0 10v3m0 4v3m0 4v3m0 3v4m0 3v4m0 3v3M538.5 197v1m0 1v1m0 1v1m0 3v1m0 1v1m0 1v1m0 1v1m0 26v1m0 1v1m0 1v1m0 8v1m0 1v1m0 108v1m0 2v1m0 1v2m0 1v2m0 1v1m0 5v1m0 1v2m0 1v2m0 1v2m0 49v2m0 2v2m0 1v3m0 1v3m0 1v3m0 2v1m0 4v2m0 1v13m0 1v3m0 119v2m0 5v3m0 3v3m0 4v3m0 4v3m0 4v3m0 5v1m0 13v1m0 5v3m0 4v3m0 4v3m0 4v2m0 5v2m0 5v2M539.5 211v1m0 1v1m0 1v1m0 5v1m0 33v1m0 1v1m0 1v1m0 6v1m0 1v1m0 2v1m0 118v2m0 1v2m0 1v2m0 1v1m0 6v1m0 1v2m0 1v2m0 1v3m0 1v2m0 56v3m0 1v4m0 1v4m0 2v3m0 2v3m0 3v3m0 2v10m0 1v4m0 2v4m0 3v1m0 160v2m0 5v2M540.5 228v1m0 1v1m0 1v1m0 3v1m0 1v1m0 1v1m0 32v1m0 1v1m0 1v1m0 6v1m0 2v1m0 1v1m0 128v2m0 1v2m0 2v2m0 1v2m0 2v1m0 6v2m0 2v2m0 2v2m0 2v2m0 2v2m0 62v3m0 2v4m0 2v4m0 2v4m0 2v4m0 3v2m0 4v3m0 3v3m0 3v4m0 2v4m0 3v4m0 3v3M541.5 245v1m0 1v1m0 1v1m0 6v1m0 1v1m0 1v1m0 33v1m0 1v1m0 6v1m0 2v1m0 1v1m0 2v1m0 139v2m0 2v2m0 6v3m0 2v2m0 3v2m0 2v3m0 2v3m0 2v4m0 2v3m0 78v3m0 3v4m0 3v3m0 3v4m0 3v4m0 3v3m0 4v3m0 4v2m0 4v3m0 4v3m0 3v4m0 3v4m0 3v3m0 4v3m0 3v4m0 3v3M542.5 198v1m0 1v1m0 3v1m0 1v1m0 53v1m0 1v1m0 2v1m0 1v1m0 3v1m0 2v1m0 1v1m0 1v1m0 34v1m0 1v2m0 1v1m0 7v1m0 1v1m0 2v1m0 1v1m0 154v2m0 3v3m0 2v3m0 3v3m0 2v3m0 3v3m0 3v3m0 2v4m0 2v4m0 2v3m0 3v3m0 101v2m0 4v3m0 4v3m0 3v4m0 3v3m0 4v3m0 4v3m0 4v3m0 4v2M543.5 219v1m0 1v1m0 1v1m0 1v1m0 52v1m0 1v1m0 2v1m0 1v1m0 4v1m0 1v1m0 1v2m0 1v1m0 35v1m0 2v1m0 1v2m0 1v1m0 5v1m0 1v1m0 2v1m0 1v2m0 1v1m0 176v1m0 3v3m0 3v3m0 3v4m0 3v3m0 3v3m0 10v3m0 3v3m0 4v3m0 3v4m0 3v3m0 4v3M544.5 197v1m0 1v1m0 25v1m0 1v1m0 1v1m0 6v1m0 1v1m0 1v1m0 1v1m0 56v1m0 2v1m0 1v1m0 6v1m0 2v1m0 1v1m0 40v2m0 1v1m0 2v1m0 1v2m0 7v2m0 1v2m0 1v1m0 2v1m0 212v2m0 4v3m0 4v3m0 4v3m0 4v2m0 4v3m0 4v2m0 18v3m0 4v3m0 4v3m0 3v3m0 4v3m0 4v3m0 4v2m0 5v1M545.5 199v1m0 1v1m0 1v1m0 1v1m0 3v1m0 1v1m0 1v1m0 1v1m0 26v1m0 1v1m0 8v1m0 1v1m0 63v1m0 1v1m0 2v1m0 1v1m0 5v1m0 1v1m0 2v1m0 1v1m0 46v1m0 1v2m0 1v2m0 2v1m0 5v2m0 1v2m0 1v2m0 1v3m0 1v1m0 275v2m0 5v2m0 5v2M546.5 215v1m0 1v1m0 1v1m0 6v1m0 1v1m0 1v1m0 29v1m0 1v1m0 1v1m0 6v1m0 1v1m0 2v1m0 65v1m0 1v2m0 1v2m0 1v1m0 4v2m0 1v1m0 2v1m0 1v2m0 49v2m0 1v3m0 1v2m0 1v2m0 6v2m0 1v3m0 1v3m0 1v3m0 2v2M547.5 232v1m0 1v1m0 1v1m0 6v1m0 1v1m0 1v1m0 30v1m0 1v1m0 2v1m0 1v1m0 4v1m0 1v1m0 2v1m0 1v1m0 68v2m0 1v2m0 1v2m0 1v1m0 5v1m0 1v2m0 1v2m0 1v2m0 1v2m0 50v2m0 2v2m0 2v2m0 2v3m0 7v2m0 2v3m0 2v3m0 2v4m0 1v4m0 3v1M548.5 249v1m0 4v1m0 3v1m0 4v1m0 1v1m0 33v1m0 2v1m0 1v1m0 4v1m0 2v1m0 1v1m0 2v1m0 75v1m0 2v1m0 2v2m0 1v2m0 1v1m0 6v2m0 1v2m0 1v3m0 1v2m0 57v2m0 3v3m0 2v4m0 2v4m0 2v3m0 3v3m0 3v4m0 2v4m0 2v4m0 3v3m0 3v3M549.5 214v1m0 1v1m0 1v1m0 48v1m0 4v1m0 6v1m0 1v1m0 1v1m0 35v1m0 2v1m0 1v2m0 1v1m0 4v1m0 2v1m0 1v2m0 1v1m0 82v1m0 2v2m0 1v2m0 2v2m0 2v2m0 6v2m0 2v2m0 2v3m0 1v2m0 69v3m0 3v3m0 3v4m0 2v4m0 3v4m0 3v3m0 4v3m0 3v4m0 3v4m0 3v4m0 3v5m0 3v4m0 3v3M550.5 220v1m0 8v1m0 1v1m0 1v1m0 52v1m0 1v1m0 1v1m0 7v1m0 1v1m0 2v1m0 39v1m0 1v2m0 1v2m0 1v1m0 5v1m0 1v2m0 1v2m0 1v1m0 92v1m0 4v2m0 2v2m0 3v2m0 3v2m0 3v3m0 2v4m0 2v4m0 2v3m0 3v2m0 81v3m0 4v3m0 4v4m0 3v4m0 3v4m0 3v4m0 4v3m0 4v3m0 5v2m0 4v4m0 3v4m0 4v3m0 4v3m0 4v4m0 3v4m0 4v3m0 4v3M551.5 204v1m0 1v1m0 1v1m0 29v1m0 1v1m0 1v1m0 6v1m0 1v1m0 1v1m0 51v1m0 1v2m0 1v1m0 1v1m0 4v2m0 1v1m0 1v2m0 1v1m0 42v1m0 2v1m0 2v1m0 2v1m0 5v1m0 2v2m0 1v2m0 1v2m0 105v3m0 3v3m0 3v3m0 3v3m0 4v2m0 4v3m0 3v3m0 3v4m0 3v3m0 3v3m0 124v2m0 5v2m0 5v3m0 4v3m0 4v3M552.5 210v1m0 8v1m0 1v1m0 1v1m0 1v1m0 32v1m0 1v1m0 4v1m0 1v1m0 1v1m0 58v1m0 1v2m0 1v1m0 7v1m0 2v1m0 1v2m0 1v1m0 45v2m0 1v2m0 1v2m0 2v2m0 5v2m0 1v2m0 2v2m0 1v3m0 1v1m0 122v3m0 3v4m0 3v3m0 4v3m0 4v3m0 18v3m0 4v3m0 4v4m0 4v3m0 4v3m0 4v3M553.5 225v1m0 1v1m0 8v1m0 1v1m0 33v1m0 1v1m0 4v1m0 4v1m0 1v1m0 2v1m0 62v1m0 2v1m0 1v2m0 7v1m0 2v1m0 2v1m0 2v1m0 50v2m0 2v2m0 2v2m0 2v2m0 3v1m0 2v3m0 2v2m0 2v3m0 161v2m0 5v3m0 4v3m0 4v3m0 5v2m0 5v2m0 5v2m0 35v1M554.5 243v1m0 1v1m0 1v1m0 4v1m0 1v1m0 1v1m0 36v1m0 2v1m0 1v1m0 4v2m0 1v1m0 1v2m0 1v1m0 66v1m0 2v1m0 2v1m0 8v2m0 1v2m0 1v2m0 2v1m0 61v3m0 2v3m0 2v3m0 3v3m0 2v4m0 2v4m0 2v4m0 3v3M555.5 261v1m0 1v1m0 6v1m0 1v1m0 2v1m0 1v1m0 36v1m0 1v1m0 2v1m0 4v1m0 2v1m0 1v2m0 1v1m0 73v2m0 1v2m0 2v2m0 1v2m0 6v2m0 1v3m0 1v2m0 2v2m0 62v3m0 3v4m0 2v4m0 3v4m0 3v3m0 4v3m0 3v4m0 3v4m0 3v4m0 3v4m0 3v3M556.5 215v1m0 1v1m0 1v1m0 60v1m0 1v1m0 1v1m0 7v1m0 1v1m0 2v1m0 37v1m0 2v1m0 1v2m0 1v1m0 5v1m0 2v1m0 2v1m0 2v1m0 77v1m0 2v2m0 2v3m0 2v2m0 2v2m0 3v2m0 4v1m0 2v3m0 2v3m0 3v2m0 73v3m0 4v4m0 3v4m0 3v4m0 4v4m0 4v3m0 5v3m0 4v4m0 3v4m0 4v4m0 4v4m0 3v4m0 4v4m0 4v3M557.5 221v1m0 1v1m0 1v1m0 8v1m0 1v1m0 62v1m0 2v1m0 1v1m0 7v1m0 1v2m0 1v1m0 43v1m0 2v1m0 2v1m0 8v2m0 1v2m0 1v2m0 1v1m0 86v2m0 3v3m0 2v3m0 3v3m0 4v2m0 4v3m0 3v3m0 3v4m0 3v3m0 4v1m0 99v3m0 5v3m0 4v4m0 4v3m0 5v3m0 4v4m0 4v3m0 5v3m0 5v2M558.5 199v1m0 5v1m0 1v1m0 1v1m0 28v1m0 1v1m0 1v1m0 6v1m0 1v1m0 1v1m0 66v1m0 1v2m0 1v1m0 2v1m0 4v1m0 2v1m0 1v2m0 1v1m0 44v1m0 1v2m0 2v2m0 1v2m0 2v1m0 3v1m0 1v3m0 1v2m0 2v2m0 2v1m0 102v3m0 4v3m0 3v4m0 3v3m0 12v2m0 4v4m0 3v4m0 4v3m0 4v4M559.5 224v1m0 1v1m0 31v1m0 1v1m0 1v1m0 4v1m0 1v1m0 1v1m0 72v2m0 1v1m0 2v1m0 5v1m0 2v1m0 1v2m0 1v2m0 51v2m0 1v3m0 1v3m0 1v3m0 6v2m0 2v3m0 1v3m0 2v3m0 124v2m0 5v3m0 4v3m0 5v3m0 5v2m0 29v2m0 5v3m0 5v2m0 5v3m0 5v3m0 5v2m0 6v2M560.5 228v1m0 1v1m0 1v1m0 8v1m0 1v1m0 32v1m0 1v1m0 6v1m0 2v1m0 1v1m0 1v1m0 75v1m0 2v1m0 2v1m0 2v1m0 5v2m0 1v2m0 1v2m0 2v2m0 56v2m0 2v3m0 8v3m0 3v2m0 3v4m0 2v4m0 3v4m0 3v3M561.5 245v1m0 1v1m0 6v1m0 1v1m0 1v1m0 36v1m0 1v1m0 2v1m0 6v1m0 1v2m0 1v1m0 84v1m0 2v1m0 2v2m0 2v1m0 6v2m0 2v2m0 1v3m0 1v3m0 62v4m0 3v4m0 3v4m0 3v4m0 4v4m0 3v4m0 3v5m0 3v4m0 4v4M562.5 205v1m0 1v1m0 1v1m0 1v1m0 51v1m0 1v1m0 1v1m0 4v1m0 1v1m0 4v1m0 37v1m0 2v1m0 1v1m0 4v2m0 1v1m0 2v1m0 1v1m0 94v2m0 2v2m0 2v2m0 3v1m0 4v2m0 2v3m0 2v2m0 4v2m0 3v1m0 72v4m0 4v4m0 4v4m0 4v4m0 4v4m0 5v4m0 4v5m0 4v4m0 4v5m0 4v5m0 4v4m0 5v3M563.5 213v1m0 1v1m0 1v1m0 63v1m0 4v1m0 1v1m0 4v1m0 1v1m0 2v1m0 39v1m0 2v1m0 2v1m0 1v1m0 5v1m0 2v1m0 2v1m0 2v1m0 101v2m0 2v3m0 3v3m0 3v3m0 4v3m0 3v4m0 3v4m0 3v4m0 4v2m0 93v2m0 5v4m0 5v4m0 4v5m0 4v4m0 5v4m0 5v4m0 5v3m0 15v2m0 6v3m0 6v3m0 6v2M564.5 230v1m0 1v1m0 1v1m0 6v1m0 1v1m0 59v1m0 1v1m0 2v1m0 4v1m0 1v1m0 2v1m0 1v1m0 43v1m0 1v2m0 1v2m0 1v2m0 5v1m0 1v2m0 2v1m0 2v1m0 118v3m0 4v3m0 4v4m0 4v3m0 12v3m0 4v4m0 4v4m0 5v3M565.5 214v1m0 1v1m0 30v1m0 8v1m0 4v1m0 61v1m0 2v1m0 1v1m0 2v1m0 4v1m0 2v1m0 2v1m0 1v1m0 46v2m0 1v2m0 2v2m0 1v2m0 5v2m0 1v3m0 1v2m0 2v2m0 147v3m0 5v4m0 5v3m0 6v2m0 24v2m0 6v3m0 6v3m0 5v4m0 5v3m0 6v3M566.5 218v1m0 1v1m0 1v1m0 42v1m0 2v1m0 1v1m0 4v1m0 1v1m0 1v1m0 67v1m0 2v1m0 2v1m0 7v2m0 1v2m0 1v2m0 1v1m0 52v2m0 2v2m0 2v2m0 2v2m0 3v1m0 3v2m0 2v3m0 2v3m0 2v1M567.5 235v1m0 1v1m0 1v1m0 6v1m0 1v1m0 1v1m0 33v1m0 2v1m0 1v1m0 4v1m0 1v1m0 2v1m0 1v1m0 71v2m0 1v2m0 1v2m0 2v1m0 5v2m0 1v2m0 1v2m0 2v1m0 58v1m0 4v3m0 2v3m0 3v3m0 3v3m0 2v4m0 3v4m0 3v4m0 3v3M568.5 210v1m0 44v1m0 1v1m0 6v1m0 1v1m0 1v1m0 35v1m0 1v1m0 2v1m0 7v1m0 1v1m0 2v1m0 79v2m0 2v1m0 2v2m0 2v1m0 6v2m0 2v2m0 2v2m0 2v2m0 65v4m0 3v4m0 3v4m0 3v4m0 3v4m0 3v4m0 3v5m0 3v4m0 4v4m0 3v4M569.5 214v1m0 1v1m0 1v1m0 3v1m0 1v1m0 1v1m0 44v1m0 1v1m0 1v1m0 9v1m0 1v1m0 39v1m0 2v1m0 2v1m0 4v1m0 2v1m0 2v1m0 2v1m0 88v2m0 3v2m0 2v2m0 3v1m0 4v2m0 7v3m0 3v3m0 78v1m0 5v4m0 3v4m0 4v4m0 4v4m0 4v4m0 13v4m0 4v4m0 4v4m0 4v4m0 4v5m0 4v4m0 4v4m0 4v4m0 5v1M570.5 233v1m0 1v1m0 3v1m0 1v1m0 50v1m0 2v1m0 1v1m0 4v1m0 2v1m0 1v1m0 42v1m0 1v2m0 1v2m0 1v2m0 4v2m0 1v2m0 1v2m0 2v1m0 96v1m0 3v3m0 3v3m0 4v3m0 4v2m0 4v4m0 3v4m0 3v4m0 3v3m0 113v3m0 5v3m0 5v4m0 4v4m0 4v4m0 5v3m0 5v3m0 6v2M571.5 204v1m0 1v1m0 41v1m0 1v1m0 1v1m0 4v1m0 1v1m0 1v1m0 50v1m0 2v1m0 1v1m0 5v1m0 1v2m0 1v1m0 2v1m0 45v1m0 2v2m0 1v2m0 2v1m0 5v2m0 2v2m0 1v2m0 2v1m0 112v1m0 4v3m0 5v3m0 4v3m0 19v4m0 4v3m0 5v3m0 5v3M572.5 223v1m0 3v1m0 1v1m0 1v1m0 34v1m0 1v1m0 6v1m0 1v1m0 2v1m0 1v1m0 53v1m0 2v1m0 2v1m0 5v1m0 1v2m0 1v2m0 1v1m0 51v1m0 2v2m0 2v2m0 2v2m0 3v1m0 2v2m0 2v3m0 2v2m0 2v2m0 150v1M573.5 240v1m0 3v1m0 1v1m0 40v1m0 1v1m0 7v1m0 1v1m0 2v1m0 57v1m0 1v2m0 1v2m0 1v1m0 6v1m0 2v1m0 2v2m0 1v1m0 55v3m0 2v2m0 3v2m0 3v2m0 9v3m0 2v4m0 3v3m0 4v1M574.5 253v1m0 1v1m0 6v1m0 1v1m0 4v1m0 37v1m0 1v1m0 2v1m0 4v1m0 1v2m0 1v1m0 2v1m0 62v1m0 2v2m0 1v2m0 2v1m0 6v2m0 1v2m0 2v2m0 2v1m0 61v3m0 3v4m0 3v4m0 4v4m0 4v3m0 4v4m0 4v4m0 4v4m0 4v3M575.5 271v1m0 4v1m0 1v1m0 4v1m0 1v1m0 2v1m0 39v1m0 1v1m0 2v1m0 2v1m0 2v1m0 1v2m0 1v2m0 1v1m0 72v2m0 2v2m0 2v2m0 7v2m0 3v2m0 2v3m0 2v3m0 76v4m0 4v4m0 4v4m0 4v4m0 7v1m0 5v4m0 5v4m0 4v5m0 4v5m0 4v5m0 5v4M576.5 295v1m0 1v1m0 4v1m0 2v1m0 1v1m0 2v1m0 42v1m0 2v1m0 2v1m0 2v1m0 2v1m0 2v2m0 1v2m0 1v2m0 81v2m0 4v1m0 4v2m0 5v1m0 4v3m0 4v3m0 4v3m0 101v4m0 5v4m0 5v4m0 5v4m0 5v4m0 5v4m0 5v3m0 33v3m0 6v3m0 7v1M577.5 211v1m0 1v1m0 1v1m0 97v1m0 1v1m0 2v1m0 1v1m0 5v1m0 1v2m0 1v1m0 49v1m0 2v2m0 1v2m0 2v1m0 2v2m0 1v2m0 2v2m0 1v3m0 89v1m0 5v3m0 4v3m0 5v1m0 15v3m0 5v3m0 5v3M578.5 224v1m0 3v1m0 108v1m0 1v2m0 1v1m0 5v1m0 2v1m0 2v1m0 2v1m0 54v2m0 2v2m0 2v2m0 2v1m0 3v3m0 2v2m0 2v3m0 2v2M579.5 201v1m0 1v1m0 1v1m0 31v1m0 1v1m0 4v1m0 1v1m0 4v1m0 111v1m0 2v1m0 2v1m0 5v2m0 1v2m0 1v2m0 2v1m0 57v1m0 3v2m0 3v2m0 3v2m0 4v2m0 3v4m0 2v4m0 3v4m0 3v3M580.5 218v1m0 1v1m0 1v1m0 35v1m0 1v1m0 4v1m0 1v1m0 2v1m0 121v1m0 2v2m0 1v2m0 6v2m0 1v3m0 1v2m0 2v2m0 64v1m0 4v4m0 3v4m0 4v4m0 4v4m0 4v4m0 3v5m0 4v4m0 4v4M581.5 229v1m0 3v1m0 4v1m0 36v1m0 1v1m0 4v1m0 2v1m0 1v1m0 2v1m0 131v1m0 2v3m0 2v2m0 2v2m0 4v1m0 2v3m0 2v3m0 2v3m0 79v4m0 4v4m0 4v5m0 4v4m0 5v3m0 6v3m0 5v5m0 4v5m0 4v5m0 4v5m0 4v5m0 5v4m0 5v4M582.5 204v1m0 1v1m0 40v1m0 6v1m0 1v1m0 38v1m0 1v1m0 2v1m0 2v1m0 1v2m0 1v1m0 2v1m0 152v3m0 3v3m0 4v2m0 4v4m0 3v4m0 4v4m0 4v2m0 106v4m0 5v4m0 5v4m0 5v4m0 5v4m0 5v4m0 6v3m0 6v3M583.5 219v1m0 1v1m0 1v1m0 37v1m0 1v1m0 2v1m0 6v1m0 1v1m0 40v1m0 2v1m0 2v1m0 5v1m0 1v2m0 1v2m0 171v3m0 5v3m0 5v2m0 14v3m0 5v3m0 5v4m0 5v3M584.5 236v1m0 1v1m0 44v1m0 1v1m0 5v1m0 1v1m0 2v1m0 43v1m0 1v2m0 2v1m0 5v1m0 2v2m0 1v2M585.5 207v1m0 1v1m0 1v1m0 33v1m0 1v1m0 6v1m0 1v1m0 44v1m0 2v1m0 1v1m0 5v1m0 1v2m0 1v1m0 2v1m0 44v1m0 2v2m0 1v2m0 2v1m0 3v1m0 2v2m0 1v3m0 1v2M586.5 226v1m0 1v1m0 34v1m0 2v1m0 1v1m0 4v1m0 1v1m0 2v1m0 44v1m0 2v1m0 2v1m0 5v1m0 1v2m0 1v2m0 1v2m0 49v1m0 2v2m0 2v2m0 2v2m0 2v2m0 2v3m0 1v3m0 2v2M587.5 241v1m0 1v1m0 41v1m0 9v1m0 2v1m0 51v1m0 2v1m0 2v1m0 5v2m0 2v1m0 2v2m0 56v2m0 3v2m0 3v2m0 3v3m0 3v3m0 2v4m0 10v1M588.5 205v1m0 44v1m0 4v1m0 6v1m0 1v1m0 38v1m0 1v1m0 2v1m0 7v1m0 2v1m0 2v1m0 53v2m0 2v1m0 2v2m0 5v2m0 2v2m0 2v2m0 2v1m0 63v4m0 3v5m0 3v5m0 4v6m0 3v6m0 4v6M589.5 211v1m0 1v1m0 5v1m0 51v1m0 9v1m0 1v1m0 43v1m0 2v1m0 2v1m0 5v1m0 2v1m0 2v1m0 60v2m0 2v2m0 3v2m0 7v2m0 2v3m0 2v3m0 74v5m0 4v6m0 5v5m0 6v4m0 6v6m0 5v6m0 6v6m0 6v6M590.5 230v1m0 10v1m0 49v1m0 1v1m0 2v1m0 4v1m0 2v1m0 1v1m0 44v1m0 2v1m0 2v1m0 2v1m0 3v1m0 2v1m0 2v2m0 1v2m0 64v2m0 3v2m0 3v3m0 4v1m0 6v2m0 3v4m0 4v4m0 94v6m0 6v6m0 6v6m0 7v5m0 8v4m0 21v5m0 7v6m0 7v6m0 7v6m0 8v4M591.5 245v1m0 8v1m0 4v1m0 54v1m0 2v1m0 4v2m0 1v1m0 2v1m0 51v2m0 2v1m0 2v2m0 5v2m0 2v2m0 2v2m0 2v1m0 77v4m0 6v3m0 16v4m0 6v5m0 5v4M592.5 218v1m0 1v1m0 3v1m0 1v1m0 39v1m0 1v1m0 4v1m0 1v1m0 2v1m0 58v1m0 2v1m0 5v1m0 2v1m0 2v1m0 2v1m0 54v2m0 2v2m0 2v3m0 2v1m0 4v2m0 2v3m0 2v3m0 2v3m0 90v2m0 8v3m0 43v3M593.5 235v1m0 1v1m0 6v1m0 1v1m0 38v1m0 9v1m0 2v1m0 1v1m0 60v2m0 1v2m0 2v1m0 5v2m0 2v1m0 2v2m0 2v1m0 57v2m0 3v3m0 2v3m0 10v3m0 3v5m0 3v4m0 4v4M594.5 255v1m0 6v1m0 1v1m0 43v1m0 2v1m0 4v1m0 2v1m0 2v1m0 69v2m0 2v1m0 2v2m0 6v2m0 2v2m0 2v3m0 70v5m0 4v5m0 5v4m0 5v5m0 4v6m0 4v6m0 5v5M595.5 218v1m0 1v1m0 3v1m0 46v1m0 2v1m0 1v1m0 4v1m0 1v1m0 2v1m0 43v1m0 2v1m0 5v1m0 2v1m0 1v2m0 2v1m0 75v2m0 3v2m0 3v2m0 3v2m0 3v3m0 2v3m0 3v3m0 80v2m0 6v5m0 5v6m0 5v5m0 19v5m0 6v6m0 6v6m0 6v6m0 7v6m0 7v5M596.5 233v1m0 1v1m0 6v1m0 1v1m0 1v1m0 44v1m0 1v1m0 2v1m0 4v1m0 2v1m0 1v1m0 47v1m0 2v1m0 2v1m0 5v2m0 2v1m0 2v2m0 1v2m0 85v1m0 4v3m0 4v2m0 6v3m0 5v4m0 5v4m0 135v5m0 8v5m0 8v5m0 8v4M597.5 206v1m0 1v1m0 1v1m0 3v1m0 36v1m0 1v1m0 6v1m0 4v1m0 48v1m0 2v1m0 7v1m0 2v1m0 2v1m0 51v2m0 2v2m0 1v2m0 6v2m0 2v2m0 1v3m0 102v3m0 7v2m0 28v3m0 7v4M598.5 223v1m0 1v1m0 1v1m0 8v1m0 35v1m0 4v1m0 4v1m0 1v1m0 2v1m0 49v1m0 2v1m0 2v1m0 5v1m0 1v2m0 2v1m0 2v1m0 55v2m0 2v2m0 2v3m0 3v1m0 3v2m0 2v3m0 3v2m0 3v2M599.5 249v1m0 2v1m0 1v1m0 37v1m0 2v1m0 1v1m0 4v1m0 2v1m0 2v1m0 55v2m0 1v2m0 2v1m0 5v2m0 2v2m0 1v2m0 62v2m0 3v3m0 9v3m0 4v3m0 4v4m0 4v5M600.5 208v1m0 1v1m0 50v1m0 1v1m0 4v1m0 1v1m0 2v1m0 42v1m0 2v1m0 7v1m0 2v1m0 2v1m0 61v2m0 2v2m0 2v1m0 4v1m0 2v2m0 2v2m0 2v2m0 69v1m0 5v5m0 4v5m0 5v4m0 6v5m0 4v6m0 5v5m0 6v5M601.5 225v1m0 1v1m0 1v1m0 48v1m0 1v1m0 2v1m0 4v1m0 1v1m0 2v1m0 1v1m0 43v1m0 2v1m0 2v1m0 5v2m0 1v2m0 2v1m0 70v1m0 3v2m0 9v2m0 3v2m0 3v3m0 90v3m0 6v5m0 6v5m0 7v5m0 21v3m0 8v6m0 7v6m0 7v6m0 8v6m0 8v5m0 9v4M602.5 236v1m0 1v1m0 6v1m0 1v1m0 53v1m0 1v1m0 2v1m0 4v1m0 2v1m0 2v1m0 47v1m0 1v2m0 2v1m0 2v1m0 3v1m0 2v2m0 2v2m0 1v2m0 77v3m0 4v3m0 13v4m0 5v4m0 6v3m0 159v3m0 11v2M603.5 209v1m0 3v1m0 1v1m0 1v1m0 36v1m0 1v1m0 4v1m0 1v1m0 61v1m0 2v1m0 5v1m0 2v1m0 2v1m0 2v1m0 52v2m0 2v2m0 2v2m0 3v1m0 2v3m0 2v2m0 2v3m0 136v3M604.5 230v1m0 1v1m0 1v1m0 38v1m0 1v1m0 7v1m0 1v1m0 63v1m0 2v2m0 1v2m0 5v1m0 2v2m0 1v2m0 57v1m0 3v2m0 3v2m0 3v3m0 3v3m0 2v4m0 9v3M605.5 203v1m0 37v1m0 1v1m0 6v1m0 1v1m0 40v1m0 1v1m0 2v1m0 4v1m0 2v1m0 1v2m0 66v1m0 2v1m0 2v2m0 6v1m0 2v2m0 2v2m0 2v1m0 64v3m0 4v4m0 4v4m0 5v5m0 4v6m0 4v6m0 5v4M606.5 259v1m0 4v1m0 4v1m0 1v1m0 45v1m0 1v1m0 2v1m0 5v1m0 2v1m0 2v1m0 71v1m0 2v2m0 3v2m0 7v2m0 2v3m0 2v3m0 3v1m0 74v1m0 6v6m0 5v6m0 6v5m0 7v6m0 6v7m0 7v7m0 7v8m0 8v3M607.5 226v1m0 1v1m0 6v1m0 1v1m0 1v1m0 41v1m0 1v1m0 7v1m0 1v1m0 2v1m0 43v1m0 2v1m0 2v1m0 5v1m0 2v2m0 1v2m0 2v1m0 80v2m0 4v2m0 4v2m0 6v1m0 4v3m0 4v4m0 104v4m0 9v6m0 9v6m0 9v7m0 9v6M608.5 206v1m0 1v1m0 1v1m0 35v1m0 1v1m0 6v1m0 1v1m0 43v1m0 2v1m0 7v1m0 2v1m0 1v2m0 49v2m0 2v1m0 2v2m0 2v1m0 2v2m0 2v2m0 1v2m0 93v3m0 6v4m0 17v4m0 6v5m0 6v5M609.5 216v1m0 1v1m0 45v1m0 9v1m0 1v1m0 49v1m0 2v1m0 5v1m0 2v1m0 2v1m0 2v1m0 52v2m0 2v2m0 2v2m0 3v1m0 2v3m0 2v2m0 2v3m0 2v2M610.5 233v1m0 6v1m0 1v1m0 1v1m0 41v1m0 2v1m0 4v1m0 1v1m0 2v1m0 50v1m0 2v1m0 2v1m0 6v1m0 2v2m0 1v2m0 61v3m0 2v3m0 3v2m0 4v3m0 2v4m0 5v2m0 3v3M611.5 203v1m0 1v1m0 45v1m0 1v1m0 6v1m0 4v1m0 41v1m0 2v1m0 1v1m0 5v1m0 2v1m0 1v2m0 55v1m0 2v2m0 2v1m0 3v1m0 2v2m0 2v2m0 2v2m0 65v2m0 4v5m0 4v4m0 6v5m0 4v6m0 5v6m0 5v5M612.5 218v1m0 1v1m0 1v1m0 49v1m0 9v1m0 1v1m0 2v1m0 44v1m0 2v1m0 5v1m0 2v1m0 2v2m0 1v1m0 60v1m0 3v2m0 3v1m0 4v1m0 3v2m0 3v2m0 3v2m0 84v6m0 6v6m0 7v4m0 9v6m0 7v8m0 7v8m0 8v8m0 9v6M613.5 231v1m0 6v1m0 1v1m0 51v1m0 4v1m0 4v1m0 2v1m0 2v1m0 48v1m0 2v1m0 2v2m0 5v2m0 1v2m0 2v1m0 67v2m0 4v2m0 4v2m0 5v2m0 4v4m0 4v4m0 5v2m0 119v7m0 9v8m0 10v7m0 12v6M614.5 208v1m0 1v1m0 36v1m0 1v1m0 4v1m0 1v1m0 2v1m0 56v1m0 2v1m0 7v1m0 2v1m0 2v1m0 54v1m0 2v2m0 2v1m0 3v2m0 2v2m0 2v2m0 2v2m0 76v1m0 7v4m0 19v2m0 7v5m0 7v5M615.5 223v1m0 1v1m0 1v1m0 38v1m0 9v1m0 1v1m0 60v1m0 2v1m0 2v1m0 5v2m0 1v2m0 2v1m0 57v2m0 2v2m0 3v2m0 3v2m0 3v2m0 3v3m0 2v4m0 3v2M616.5 234v1m0 1v1m0 6v1m0 1v1m0 40v1m0 2v1m0 7v1m0 1v2m0 1v1m0 65v1m0 2v1m0 2v2m0 5v2m0 2v2m0 2v1m0 63v1m0 4v1m0 6v3m0 4v4m0 4v5m0 4v6m0 4v5M617.5 252v1m0 4v1m0 4v1m0 1v1m0 2v1m0 40v1m0 2v1m0 7v1m0 2v1m0 2v1m0 71v1m0 2v2m0 2v2m0 7v2m0 2v2m0 3v2m0 76v5m0 5v6m0 5v6m0 7v5m0 6v7m0 7v7m0 7v8M618.5 210v1m0 1v1m0 61v1m0 7v1m0 1v1m0 2v1m0 46v1m0 2v2m0 5v1m0 2v1m0 2v2m0 80v1m0 4v2m0 3v2m0 4v2m0 3v3m0 11v2m0 94v2m0 9v7m0 9v7m0 10v7m0 35v4m0 14v10m0 14v8M619.5 227v1m0 1v1m0 65v1m0 2v1m0 4v1m0 2v1m0 2v1m0 50v2m0 2v1m0 2v2m0 2v1m0 2v2m0 2v2m0 2v1m0 92v3m0 5v3m0 17v5m0 6v5M620.5 238v1m0 6v1m0 1v1m0 69v1m0 2v1m0 2v1m0 5v1m0 2v1m0 2v1m0 54v1m0 3v2m0 2v1m0 3v2m0 2v3m0 2v2m0 2v2M621.5 217v1m0 1v1m0 39v1m0 4v1m0 1v1m0 2v1m0 72v1m0 2v1m0 2v1m0 6v1m0 2v1m0 2v2m0 58v2m0 2v3m0 3v2m0 4v2m0 3v3m0 3v4m0 3v3M622.5 232v1m0 1v1m0 51v1m0 2v1m0 82v1m0 3v1m0 6v2m0 2v2m0 2v2m0 70v4m0 4v4m0 5v5m0 6v7m0 5v7M623.5 255v1m0 1v1m0 44v1m0 5v1m0 2v1m0 1v2m0 85v1m0 2v2m0 3v2m0 7v2m0 3v2m0 3v2m0 77v4m0 7v7m0 8v6m0 10v9m0 9v11m0 11v12M624.5 267v1m0 4v1m0 1v1m0 2v1m0 44v1m0 2v1m0 2v1m0 5v1m0 2v2m0 1v2m0 96v3m0 3v3m0 10v2m0 6v4m0 5v2m0 113v12m0 15v13M625.5 215v1m0 71v1m0 7v1m0 2v1m0 1v1m0 46v1m0 2v1m0 2v2m0 5v2m0 1v2m0 2v2m0 115v4m0 20v6m0 8v6M626.5 230v1m0 1v1m0 1v1m0 74v1m0 7v1m0 2v1m0 2v1m0 54v1m0 3v1m0 6v2m0 2v2m0 2v2M627.5 248v1m0 1v1m0 81v1m0 2v1m0 8v2m0 2v1m0 2v1m0 58v2m0 3v2m0 3v2m0 3v2m0 3v3m0 2v3M628.5 222v1m0 46v1m0 4v1m0 83v1m0 2v1m0 3v1m0 6v1m0 2v2m0 2v1m0 63v1m0 4v3m0 3v3m0 6v2m0 4v5m0 4v6M629.5 235v1m0 1v1m0 1v1m0 52v1m0 2v1m0 95v1m0 3v1m0 7v2m0 2v2m0 3v2m0 76v5m0 7v6m0 8v6m0 8v8m0 8v9M630.5 258v1m0 1v1m0 53v1m0 2v1m0 2v1m0 101v1m0 4v1m0 10v2m0 3v3m0 4v2m0 96v7m0 11v10m0 47v15m0 28v25M631.5 224v1m0 52v1m0 2v1m0 48v1m0 2v1m0 5v1m0 2v1m0 2v1m0 2v1m0 117v2m0 16v3m0 7v5m0 9v1M632.5 242v1m0 47v1m0 2v1m0 4v1m0 2v1m0 2v1m0 49v1m0 2v2m0 2v1m0 5v2m0 2v2m0 2v1M633.5 259v1m0 1v1m0 2v1m0 50v1m0 8v1m0 1v2m0 1v2m0 55v2m0 2v2m0 6v2m0 2v2m0 2v3M634.5 229v1m0 1v1m0 50v1m0 56v1m0 2v1m0 5v2m0 1v2m0 2v1m0 60v2m0 3v2m0 3v2m0 3v3m0 2v3m0 3v4m0 3v2M635.5 250v1m0 53v1m0 2v1m0 2v1m0 54v1m0 3v1m0 2v1m0 6v2m0 2v2m0 2v2m0 67v3m0 4v4m0 5v3m0 5v6m0 6v7M636.5 216v1m0 1v1m0 48v1m0 4v1m0 55v1m0 2v1m0 2v1m0 64v2m0 3v1m0 7v3m0 2v2m0 3v2m0 81v7m0 8v6m0 11v7m0 9v12m0 11v14M637.5 238v1m0 52v1m0 52v1m0 3v1m0 6v1m0 2v1m0 2v2m0 70v2m0 4v1m0 11v3m0 4v1m0 7v1m0 111v12m0 21v15M638.5 206v1m0 47v1m0 1v1m0 57v1m0 2v1m0 55v1m0 3v1m0 7v1m0 3v2m0 2v2m0 104v2m0 9v5M639.5 223v1m0 1v1m0 50v1m0 4v1m0 57v1m0 2v1m0 2v1m0 61v1m0 3v2m0 4v2m0 2v3m0 3v3M640.5 243v1m0 56v1m0 65v2m0 2v2m0 2v1m0 65v2m0 4v3m0 5v3m0 6v4m0 4v6M641.5 262v1m0 1v1m0 2v1m0 55v1m0 2v1m0 2v1m0 69v1m0 3v2m0 3v1m0 75v5m0 10v6m0 11v11m0 11v13M642.5 287v1m0 2v1m0 60v2m0 1v2m0 2v1m0 76v3m0 4v2m0 100v6m0 26v4m0 65v32M643.5 309v1m0 2v1m0 56v1m0 2v2m0 6v2m0 2v1m0 3v1m0 99v5M644.5 213v1m0 1v1m0 49v1m0 67v1m0 2v1m0 2v1m0 60v2m0 3v1m0 4v1m0 3v2m0 3v2m0 3v2M645.5 288v1m0 74v1m0 2v2m0 67v3m0 3v3m0 4v3m0 4v4m0 4v4M646.5 251v1m0 59v1m0 81v2m0 2v2m0 75v2m0 7v5m0 8v6m0 9v8m0 10v9M647.5 211v1m0 1v1m0 59v1m0 61v1m0 2v2m0 2v1m0 83v2m0 3v3m0 3v2m0 94v5m0 15v10m0 29v41m0 13v36M648.5 228v1m0 1v1m0 66v1m0 64v2m0 2v1m0 3v1m0 104v4m0 8v3M649.5 253v1m0 66v1m0 61v1m0 3v1m0 7v2m0 2v2m0 2v2M650.5 220v1m0 49v1m0 4v1m0 70v1m0 2v2m0 62v1m0 3v2m0 9v3m0 3v3m0 3v3M651.5 294v1m0 1v1m0 78v1m0 3v1m0 75v3m0 6v3m0 6v6m0 6v8M652.5 256v1m0 4v1m0 57v1m0 2v1m0 86v2m0 3v2m0 86v7m0 13v3m0 22v20M653.5 220v1m0 60v1m0 63v1m0 2v1m0 2v1m0 98v3m0 5v1M654.5 303v1m0 2v1m0 55v1m0 3v1m0 6v1m0 3v1m0 2v2m0 128v1M655.5 260v1m0 68v2m0 2v1m0 59v1m0 3v2m0 7v2m0 3v2m0 3v2M656.5 284v1m0 71v1m0 2v2m0 2v1m0 63v2m0 4v2m0 4v2m0 4v4m0 3v4M657.5 307v1m0 2v1m0 75v1m0 3v2m0 2v1m0 75v4m0 7v6m0 8v9m0 9v10M658.5 271v1m0 60v1m0 3v1m0 2v1m0 78v1m0 4v2m0 3v3m0 107v12m0 41v13m0 45v16M659.5 293v1m0 2v1m0 64v1m0 2v2m0 98v3m0 6v4M660.5 317v1m0 2v1m0 60v1m0 8v1m0 3v2m0 2v3M661.5 344v1m0 2v1m0 66v2m0 4v1m0 5v2m0 4v3m0 4v3M662.5 374v1m0 3v1m0 69v2m0 6v3m0 7v5m0 7v8M663.5 338v1m0 66v2m0 3v2m0 88v9m0 26v53M664.5 362v2m0 2v1m0 3v1m0 71v2m0 5v4M665.5 395v1m0 3v2m0 3v1m0 105v1M666.5 349v1m0 81v3m0 4v3m0 4v1M667.5 379v1m0 83v2m0 9v4m0 8v9M668.5 342v1m0 68v1m0 4v1m0 95v4m0 33v45M669.5 369v1m0 3v1M670.5 400v2m0 3v3M671.5 354v1m0 82v3m0 5v4M672.5 383v1m0 83v3m0 13v10M673.5 419v1m0 166v12m0 14v8m0 12v6m0 11v4M674.5 348v1m0 3v1M675.5 376v2m0 2v2m0 3v1" stroke="#fffffd" fill="none"/>
<rect x="305" y="113" width="371" height="696" fill="none" stroke="#000" stroke-width="2"/>
<line x1="298" y1="809.00" x2="305" y2="809.00" stroke="#000" stroke-width="1.6"/>
<line x1="298" y1="659.24" x2="305" y2="659.24" stroke="#000" stroke-width="1.6"/>
<line x1="298" y1="509.48" x2="305" y2="509.48" stroke="#000" stroke-width="1.6"/>
<line x1="298" y1="359.72" x2="305" y2="359.72" stroke="#000" stroke-width="1.6"/>
<line x1="298" y1="209.96" x2="305" y2="209.96" stroke="#000" stroke-width="1.6"/>
<line x1="305.00" y1="809" x2="305.00" y2="816" stroke="#000" stroke-width="1.6"/>
<line x1="380.00" y1="809" x2="380.00" y2="816" stroke="#000" stroke-width="1.6"/>
<line x1="455.00" y1="809" x2="455.00" y2="816" stroke="#000" stroke-width="1.6"/>
<line x1="530.00" y1="809" x2="530.00" y2="816" stroke="#000" stroke-width="1.6"/>
<line x1="605.00" y1="809" x2="605.00" y2="816" stroke="#000" stroke-width="1.6"/>
<defs><linearGradient id="hot" x1="0" y1="1" x2="0" y2="0"><stop offset="0" stop-color="#0b0000"/><stop offset="0.365" stop-color="#ff0000"/><stop offset="0.746" stop-color="#ffff00"/><stop offset="1" stop-color="#ffffff"/></linearGradient></defs>
<rect x="712" y="113" width="35" height="696" fill="url(#hot)" stroke="#000" stroke-width="2"/>
<line x1="747" y1="809.00" x2="754" y2="809.00" stroke="#000" stroke-width="1.6"/>
<line x1="747" y1="693.00" x2="754" y2="693.00" stroke="#000" stroke-width="1.6"/>
<line x1="747" y1="577.00" x2="754" y2="577.00" stroke="#000" stroke-width="1.6"/>
<line x1="747" y1="461.00" x2="754" y2="461.00" stroke="#000" stroke-width="1.6"/>
<line x1="747" y1="345.00" x2="754" y2="345.00" stroke="#000" stroke-width="1.6"/>
<line x1="747" y1="229.00" x2="754" y2="229.00" stroke="#000" stroke-width="1.6"/>
<line x1="747" y1="113.00" x2="754" y2="113.00" stroke="#000" stroke-width="1.6"/>
<g>
<rect x="911" y="113" width="274" height="120" fill="none" stroke="#000" stroke-width="2"/>
<line x1="904" y1="233.30" x2="911" y2="233.30" stroke="#000" stroke-width="1.6"/>
<line x1="904" y1="201.44" x2="911" y2="201.44" stroke="#000" stroke-width="1.6"/>
<line x1="904" y1="169.58" x2="911" y2="169.58" stroke="#000" stroke-width="1.6"/>
<line x1="904" y1="137.72" x2="911" y2="137.72" stroke="#000" stroke-width="1.6"/>
<line x1="911.00" y1="233" x2="911.00" y2="240" stroke="#000" stroke-width="1.6"/>
<line x1="1004.20" y1="233" x2="1004.20" y2="240" stroke="#000" stroke-width="1.6"/>
<line x1="1097.40" y1="233" x2="1097.40" y2="240" stroke="#000" stroke-width="1.6"/>
<line x1="957.60" y1="233" x2="957.60" y2="240" stroke="#000" stroke-width="1.6"/>
<line x1="1050.80" y1="233" x2="1050.80" y2="240" stroke="#000" stroke-width="1.6"/>
<line x1="1144.00" y1="233" x2="1144.00" y2="240" stroke="#000" stroke-width="1.6"/>
<rect x="911" y="285" width="274" height="120" fill="none" stroke="#000" stroke-width="2"/>
<line x1="904" y1="404.70" x2="911" y2="404.70" stroke="#000" stroke-width="1.6"/>
<line x1="904" y1="374.78" x2="911" y2="374.78" stroke="#000" stroke-width="1.6"/>
<line x1="904" y1="344.86" x2="911" y2="344.86" stroke="#000" stroke-width="1.6"/>
<line x1="904" y1="314.94" x2="911" y2="314.94" stroke="#000" stroke-width="1.6"/>
<line x1="904" y1="285.02" x2="911" y2="285.02" stroke="#000" stroke-width="1.6"/>
<line x1="928.90" y1="405" x2="928.90" y2="412" stroke="#000" stroke-width="1.6"/>
<line x1="1003.64" y1="405" x2="1003.64" y2="412" stroke="#000" stroke-width="1.6"/>
<line x1="1078.38" y1="405" x2="1078.38" y2="412" stroke="#000" stroke-width="1.6"/>
<line x1="1153.12" y1="405" x2="1153.12" y2="412" stroke="#000" stroke-width="1.6"/>
<line x1="966.27" y1="405" x2="966.27" y2="412" stroke="#000" stroke-width="1.6"/>
<line x1="1041.01" y1="405" x2="1041.01" y2="412" stroke="#000" stroke-width="1.6"/>
<line x1="1115.75" y1="405" x2="1115.75" y2="412" stroke="#000" stroke-width="1.6"/>
</g>
<polyline points="911.00,233.00 997.07,233.00 997.07,119.10 1002.85,119.10 1002.85,120.04 1008.90,120.04 1008.90,130.70 1013.90,130.70 1013.90,137.70 1019.90,137.70 1019.90,140.80 1024.90,140.80 1024.90,142.90 1031.00,142.90 1031.00,144.00 1036.60,144.00 1036.60,144.90 1042.20,144.90 1042.20,146.00 1047.80,146.00 1047.80,146.90 1053.50,146.90 1053.50,148.00 1063.90,148.00 1063.90,149.00 1075.90,149.00 1075.90,149.90 1087.10,149.90 1087.10,151.10 1098.10,151.10 1098.10,152.10 1114.90,152.10 1114.90,153.30 1131.70,153.30 1131.70,154.40 1143.20,154.40 1143.20,155.50 1154.20,155.50 1154.20,156.40 1171.00,156.40 1171.00,157.00 1182.00,157.00 1182.00,131.00 1185.00,131.00" fill="none" stroke="#0000ff" stroke-width="1.5"/><polyline points="911.00,405.00 925.10,405.00 925.10,307.90 930.10,307.90 930.10,291.10 935.90,291.10 935.90,312.80 941.00,312.80 941.00,318.00 947.00,318.00 947.00,320.90 953.00,320.90 953.00,323.00 957.80,323.00 957.80,325.00 964.00,325.00 964.00,327.00 969.00,327.00 969.00,328.00 975.10,328.00 975.10,329.00 981.10,329.00 981.10,331.00 986.30,331.00 986.30,332.00 992.40,332.00 992.40,333.00 997.20,333.00 997.20,334.60 1003.20,334.60 1003.20,335.90 1009.00,335.90 1009.00,337.80 1014.10,337.80 1014.10,338.70 1019.90,338.70 1019.90,340.90 1025.00,340.90 1025.00,343.80 1030.80,343.80 1030.80,347.00 1036.90,347.00 1036.90,349.90 1042.30,349.90 1042.30,354.80 1048.00,354.80 1048.00,366.00 1053.00,366.00 1053.00,394.90 1059.00,394.90 1059.00,397.90 1064.10,397.90 1064.10,405.00 1185.00,405.00" fill="none" stroke="#0000ff" stroke-width="1.5"/>
<rect x="911" y="113" width="274" height="120" fill="none" stroke="#000" stroke-width="2"/>
<rect x="911" y="285" width="274" height="120" fill="none" stroke="#000" stroke-width="2"/>
<g fill="#000">
<text x="5.62" y="23.30" font-size="17.64" textLength="196.22" lengthAdjust="spacingAndGlyphs">2025-01-14: ESPRESSO</text>
<text x="336.08" y="23.00" font-size="13.12" textLength="55.64" lengthAdjust="spacingAndGlyphs">type info</text>
<text x="629.10" y="22.80" font-size="13.12" textLength="67.00" lengthAdjust="spacingAndGlyphs">set-up info</text>
<text x="6.63" y="45.60" font-size="13.12" textLength="59.67" lengthAdjust="spacingAndGlyphs">ORIGFILE:</text>
<text x="74.56" y="45.60" font-size="13.12" textLength="241.71" lengthAdjust="spacingAndGlyphs">ESPRESSO_SINGLEHR_WAVE015_0004</text>
<text x="6.38" y="61.80" font-size="13.12" textLength="55.51" lengthAdjust="spacingAndGlyphs">ARCFILE:</text>
<text x="74.47" y="61.80" font-size="13.12" textLength="231.23" lengthAdjust="spacingAndGlyphs">ESPRE.2025-01-15T10:32:43.878.fits</text>
<text x="6.27" y="80.20" font-size="13.12" textLength="61.03" lengthAdjust="spacingAndGlyphs">raw_type:</text>
<text x="75.55" y="80.20" font-size="13.12" textLength="77.77" lengthAdjust="spacingAndGlyphs">WAVE_FP_FP</text>
<text x="6.64" y="97.10" font-size="13.12" textLength="56.72" lengthAdjust="spacingAndGlyphs">do_class:</text>
<text x="74.65" y="97.10" font-size="13.12" textLength="36.06" lengthAdjust="spacingAndGlyphs">FP_FP</text>
<text x="6.59" y="113.60" font-size="13.12" textLength="65.13" lengthAdjust="spacingAndGlyphs">extension:</text>
<text x="74.64" y="113.60" font-size="13.12" textLength="7.00" lengthAdjust="spacingAndGlyphs">1</text>
<text x="335.67" y="44.80" font-size="13.12" textLength="68.07" lengthAdjust="spacingAndGlyphs">DPR.CATG:</text>
<text x="405.18" y="44.80" font-size="13.12" textLength="35.37" lengthAdjust="spacingAndGlyphs">CALIB</text>
<text x="335.70" y="61.50" font-size="13.12" textLength="64.16" lengthAdjust="spacingAndGlyphs">DPR.TYPE:</text>
<text x="405.75" y="61.50" font-size="13.12" textLength="74.20" lengthAdjust="spacingAndGlyphs">WAVE,FP,FP</text>
<text x="335.68" y="79.50" font-size="13.12" textLength="67.17" lengthAdjust="spacingAndGlyphs">DPR.TECH:</text>
<text x="404.80" y="79.50" font-size="13.12" textLength="55.83" lengthAdjust="spacingAndGlyphs">ECHELLE</text>
<text x="336.41" y="96.70" font-size="13.12" textLength="43.68" lengthAdjust="spacingAndGlyphs">TPL.ID:</text>
<text x="404.74" y="96.70" font-size="13.12" textLength="191.73" lengthAdjust="spacingAndGlyphs">ESPRESSO_singleHR_cal_wave</text>
<text x="628.81" y="42.85" font-size="10.97" textLength="56.28" lengthAdjust="spacingAndGlyphs">INS.MODE:</text>
<text x="759.84" y="42.85" font-size="10.97" textLength="51.73" lengthAdjust="spacingAndGlyphs">SINGLEHR</text>
<text x="628.91" y="55.90" font-size="10.97" textLength="52.98" lengthAdjust="spacingAndGlyphs">DET.BINX:</text>
<text x="759.77" y="55.90" font-size="10.97" textLength="5.91" lengthAdjust="spacingAndGlyphs">2</text>
<text x="628.93" y="68.80" font-size="10.97" textLength="52.05" lengthAdjust="spacingAndGlyphs">DET.BINY:</text>
<text x="760.20" y="68.80" font-size="10.97" textLength="5.85" lengthAdjust="spacingAndGlyphs">1</text>
<text x="5.95" y="863.80" font-size="10.97" textLength="173.49" lengthAdjust="spacingAndGlyphs">powered by QC: www.eso.org/HC</text>
<text x="935.00" y="863.80" font-size="10.97" textLength="303.12" lengthAdjust="spacingAndGlyphs">created by qc_rawdisp.py v1.2.3 on 2025-01-15T11:35:23</text>
<text x="986.78" y="576.70" font-size="10.97" textLength="119.10" lengthAdjust="spacingAndGlyphs">cut in x not configured</text>
<text x="986.78" y="750.90" font-size="10.97" textLength="119.10" lengthAdjust="spacingAndGlyphs">cut in y not configured</text>
<text x="285.10" y="812.90" font-size="10.97" textLength="6.13" lengthAdjust="spacingAndGlyphs">0</text>
<text x="265.07" y="663.14" font-size="10.97" textLength="26.19" lengthAdjust="spacingAndGlyphs">2000</text>
<text x="265.14" y="513.38" font-size="10.97" textLength="26.12" lengthAdjust="spacingAndGlyphs">4000</text>
<text x="265.03" y="363.62" font-size="10.97" textLength="26.23" lengthAdjust="spacingAndGlyphs">6000</text>
<text x="265.10" y="213.86" font-size="10.97" textLength="26.16" lengthAdjust="spacingAndGlyphs">8000</text>
<text x="301.94" y="831.80" font-size="10.97" textLength="6.13" lengthAdjust="spacingAndGlyphs">0</text>
<text x="366.73" y="831.80" font-size="10.97" textLength="26.10" lengthAdjust="spacingAndGlyphs">1000</text>
<text x="441.84" y="831.80" font-size="10.97" textLength="26.19" lengthAdjust="spacingAndGlyphs">2000</text>
<text x="517.00" y="831.80" font-size="10.97" textLength="26.01" lengthAdjust="spacingAndGlyphs">3000</text>
<text x="592.04" y="831.80" font-size="10.97" textLength="26.12" lengthAdjust="spacingAndGlyphs">4000</text>
<text x="486.96" y="849.80" font-size="10.97" textLength="7.27" lengthAdjust="spacingAndGlyphs">X</text>
<text x="249.05" y="460.90" font-size="10.97" textLength="7.49" lengthAdjust="spacingAndGlyphs" transform="rotate(-90 252.80 460.90)">Y</text>
<text x="762.07" y="812.90" font-size="10.97" textLength="6.13" lengthAdjust="spacingAndGlyphs">0</text>
<text x="762.04" y="696.90" font-size="10.97" textLength="19.36" lengthAdjust="spacingAndGlyphs">500</text>
<text x="761.61" y="580.90" font-size="10.97" textLength="26.10" lengthAdjust="spacingAndGlyphs">1000</text>
<text x="761.61" y="464.90" font-size="10.97" textLength="26.10" lengthAdjust="spacingAndGlyphs">1500</text>
<text x="761.91" y="348.90" font-size="10.97" textLength="26.19" lengthAdjust="spacingAndGlyphs">2000</text>
<text x="761.91" y="232.90" font-size="10.97" textLength="26.19" lengthAdjust="spacingAndGlyphs">2500</text>
<text x="762.05" y="116.90" font-size="10.97" textLength="26.01" lengthAdjust="spacingAndGlyphs">3000</text>
<text x="890.50" y="237.20" font-size="10.97" textLength="6.13" lengthAdjust="spacingAndGlyphs">0</text>
<text x="890.83" y="205.34" font-size="10.97" textLength="5.91" lengthAdjust="spacingAndGlyphs">2</text>
<text x="890.40" y="173.48" font-size="10.97" textLength="6.13" lengthAdjust="spacingAndGlyphs">4</text>
<text x="890.36" y="141.62" font-size="10.97" textLength="6.34" lengthAdjust="spacingAndGlyphs">6</text>
<text x="907.94" y="256.20" font-size="10.97" textLength="6.13" lengthAdjust="spacingAndGlyphs">0</text>
<text x="990.93" y="256.20" font-size="10.97" textLength="26.10" lengthAdjust="spacingAndGlyphs">1000</text>
<text x="1084.24" y="256.20" font-size="10.97" textLength="26.19" lengthAdjust="spacingAndGlyphs">2000</text>
<text x="1030.81" y="273.90" font-size="10.97" textLength="34.21" lengthAdjust="spacingAndGlyphs">counts</text>
<text x="841.74" y="173.60" font-size="10.97" textLength="71.73" lengthAdjust="spacingAndGlyphs" transform="rotate(-90 878.00 173.60)">log frequency</text>
<text x="1147.57" y="174.90" font-size="10.97" textLength="93.56" lengthAdjust="spacingAndGlyphs" transform="rotate(90 1194.40 174.90)">histogram (detail)</text>
<text x="890.50" y="408.60" font-size="10.97" textLength="6.13" lengthAdjust="spacingAndGlyphs">0</text>
<text x="890.83" y="378.68" font-size="10.97" textLength="5.91" lengthAdjust="spacingAndGlyphs">2</text>
<text x="890.40" y="348.76" font-size="10.97" textLength="6.13" lengthAdjust="spacingAndGlyphs">4</text>
<text x="890.36" y="318.84" font-size="10.97" textLength="6.34" lengthAdjust="spacingAndGlyphs">6</text>
<text x="890.49" y="288.92" font-size="10.97" textLength="6.19" lengthAdjust="spacingAndGlyphs">8</text>
<text x="925.84" y="428.20" font-size="10.97" textLength="6.13" lengthAdjust="spacingAndGlyphs">0</text>
<text x="987.15" y="428.20" font-size="10.97" textLength="32.84" lengthAdjust="spacingAndGlyphs">20000</text>
<text x="1062.09" y="428.20" font-size="10.97" textLength="32.77" lengthAdjust="spacingAndGlyphs">40000</text>
<text x="1136.61" y="428.20" font-size="10.97" textLength="32.88" lengthAdjust="spacingAndGlyphs">60000</text>
<text x="1030.81" y="445.90" font-size="10.97" textLength="34.21" lengthAdjust="spacingAndGlyphs">counts</text>
<text x="841.74" y="346.00" font-size="10.97" textLength="71.73" lengthAdjust="spacingAndGlyphs" transform="rotate(-90 878.00 346.00)">log frequency</text>
<text x="1154.20" y="349.20" font-size="10.97" textLength="80.31" lengthAdjust="spacingAndGlyphs" transform="rotate(90 1194.40 349.20)">histogram (full)</text>
</g>
</svg></div>
</body></html>
